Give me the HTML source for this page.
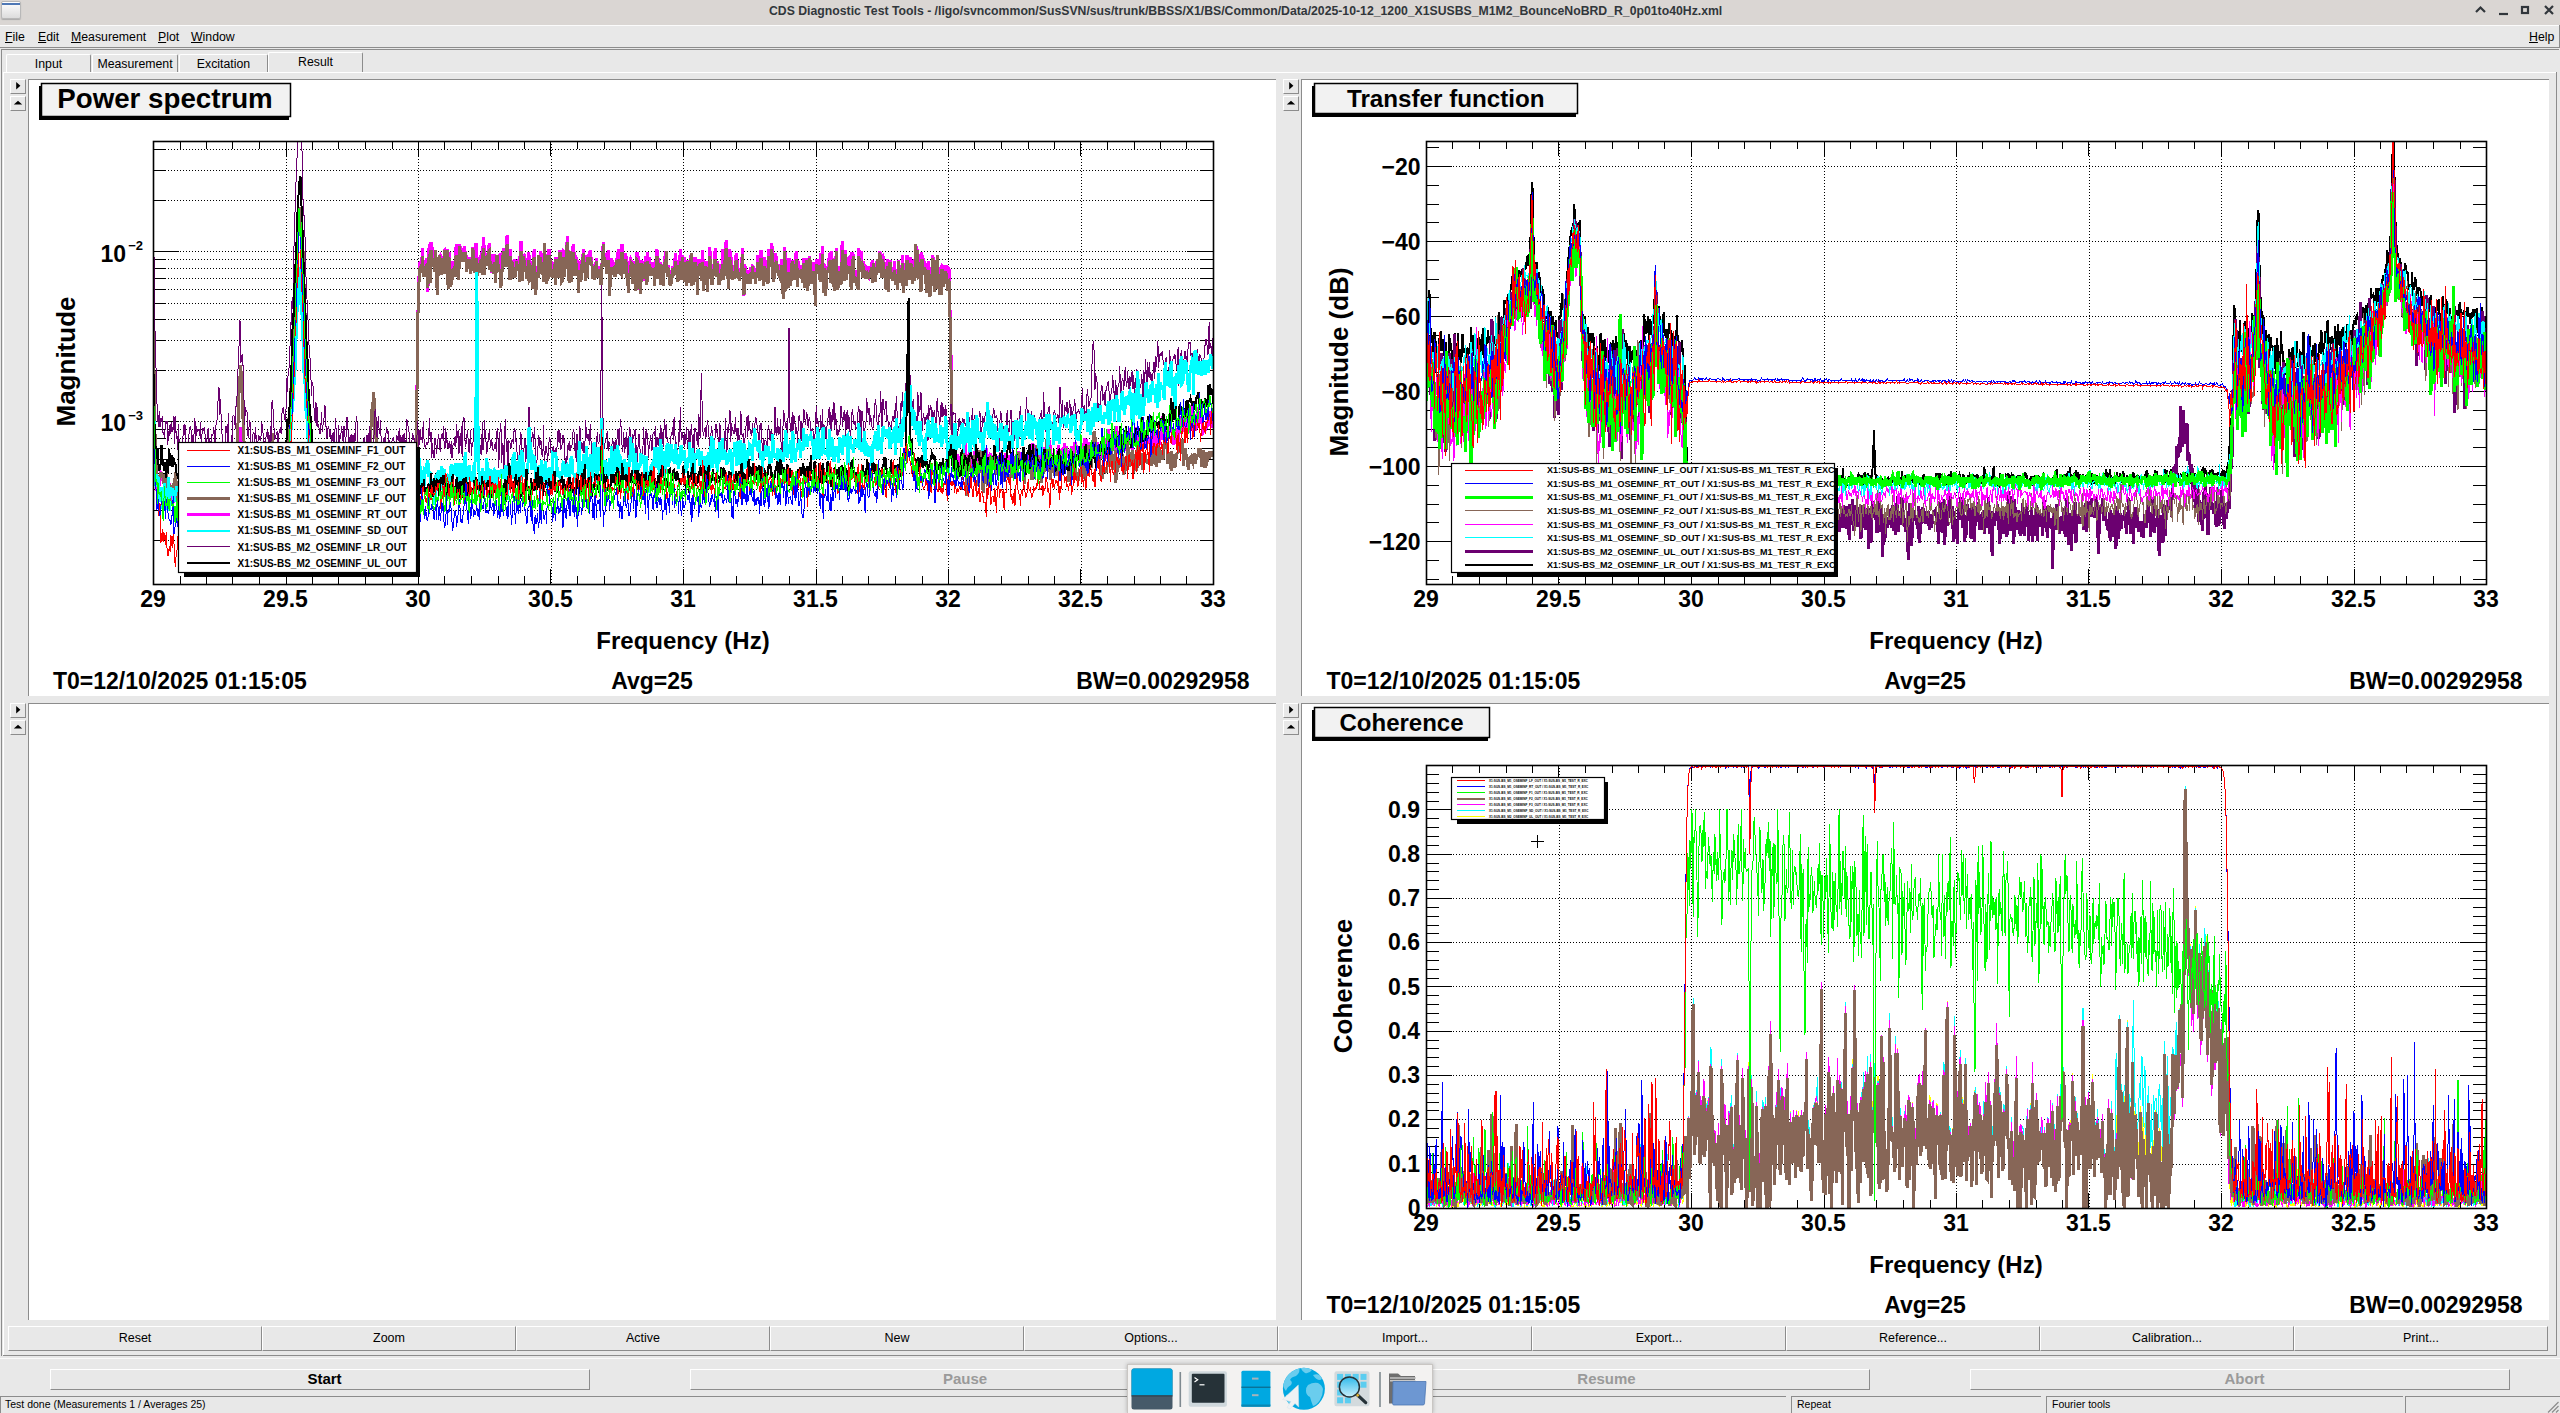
<!DOCTYPE html><html><head><meta charset="utf-8"><title>CDS Diagnostic Test Tools</title><style>
*{margin:0;padding:0;box-sizing:border-box}
html,body{width:2560px;height:1413px;overflow:hidden;background:#e8e8e8;font-family:"Liberation Sans",sans-serif;color:#000}
.a{position:absolute}
.t{position:absolute;white-space:nowrap;line-height:1}
.btn{position:absolute;background:#e8e8e8;border-top:1px solid #fff;border-left:1px solid #fff;border-right:1px solid #8c8c8c;border-bottom:1px solid #8c8c8c;font-size:12.5px;text-align:center}
.u{text-decoration:underline}
.arrowbtn{position:absolute;width:16px;height:15px;background:#e8e8e8;border-top:1px solid #fff;border-left:1px solid #fff;border-right:1px solid #8c8c8c;border-bottom:1px solid #8c8c8c}
svg{position:absolute;left:0;top:0;overflow:visible}
</style></head><body>
<div class="a" style="left:0;top:0;width:2560px;height:25px;background:#dad6d3"></div>
<div class="a" style="left:1px;top:1px;width:20px;height:18px;border-radius:2px;background:linear-gradient(#ffffff,#dcdcdc);border:1px solid #b8b8b8;box-shadow:0 1px 1px #aaa"></div>
<div class="a" style="left:2px;top:3px;width:18px;height:2px;background:#4f78b5"></div>
<div class="t" style="left:769px;top:5px;font-size:12.25px;font-weight:bold;color:#31363b">CDS Diagnostic Test Tools - /ligo/svncommon/SusSVN/sus/trunk/BBSS/X1/BS/Common/Data/2025-10-12_1200_X1SUSBS_M1M2_BounceNoBRD_R_0p01to40Hz.xml</div>
<svg width="2560" height="25" style="left:0;top:0"><g stroke="#31363b" stroke-width="2.2" fill="none"><path d="M2476 12 L2480.5 7.5 L2485 12"/><path d="M2499 14 L2508 14"/><rect x="2522" y="7" width="6" height="6"/><path d="M2545 6 L2553 14 M2553 6 L2545 14"/></g></svg>
<div class="a" style="left:0;top:25px;width:2560px;height:1px;background:#fbfbfb"></div>
<div class="a" style="left:1px;top:26px;width:2558px;height:21px;background:#e8e8e8"></div>
<div class="a" style="left:0;top:47px;width:2560px;height:1px;background:#8c8c8c"></div>
<div class="a" style="left:2559px;top:25px;width:1px;height:23px;background:#8c8c8c"></div>
<div class="t" style="left:5px;top:31px;font-size:12.3px;color:#000"><span class="u">F</span>ile</div>
<div class="t" style="left:38px;top:31px;font-size:12.3px;color:#000"><span class="u">E</span>dit</div>
<div class="t" style="left:71px;top:31px;font-size:12.3px;color:#000"><span class="u">M</span>easurement</div>
<div class="t" style="left:158px;top:31px;font-size:12.3px;color:#000"><span class="u">P</span>lot</div>
<div class="t" style="left:191px;top:31px;font-size:12.3px;color:#000"><span class="u">W</span>indow</div>
<div class="t" style="left:2529px;top:31px;font-size:12.3px;color:#000"><span class="u">H</span>elp</div>
<div class="a" style="left:0;top:49px;width:2559px;height:1px;background:#8c8c8c"></div>
<div class="a" style="left:1px;top:49px;width:1px;height:1307px;background:#8c8c8c"></div>
<div class="a" style="left:0;top:49px;width:1px;height:1307px;background:#e8e8e8"></div>
<div class="a" style="left:6px;top:54px;width:85px;height:19px;border-top:1px solid #fff;border-left:1px solid #fff;border-right:1px solid #8c8c8c;border-top-left-radius:2px;border-top-right-radius:2px;background:#e8e8e8"></div>
<div class="t" style="left:6px;top:58px;width:85px;text-align:center;font-size:12.3px">Input</div>
<div class="a" style="left:92px;top:54px;width:86px;height:19px;border-top:1px solid #fff;border-left:1px solid #fff;border-right:1px solid #8c8c8c;border-top-left-radius:2px;border-top-right-radius:2px;background:#e8e8e8"></div>
<div class="t" style="left:92px;top:58px;width:86px;text-align:center;font-size:12.3px">Measurement</div>
<div class="a" style="left:179px;top:54px;width:89px;height:19px;border-top:1px solid #fff;border-left:1px solid #fff;border-right:1px solid #8c8c8c;border-top-left-radius:2px;border-top-right-radius:2px;background:#e8e8e8"></div>
<div class="t" style="left:179px;top:58px;width:89px;text-align:center;font-size:12.3px">Excitation</div>
<div class="a" style="left:268px;top:52px;width:95px;height:21px;border-top:1px solid #fff;border-left:1px solid #fff;border-right:1px solid #8c8c8c;border-top-left-radius:2px;border-top-right-radius:2px;background:#e8e8e8"></div>
<div class="t" style="left:268px;top:56px;width:95px;text-align:center;font-size:12.3px">Result</div>
<div class="a" style="left:3px;top:72px;width:2554px;height:1px;background:#fff"></div>
<div class="a" style="left:363px;top:72px;width:2194px;height:1px;background:#fff"></div>
<div class="a" style="left:3px;top:72px;width:1px;height:1284px;background:#fff"></div>
<div class="a" style="left:2556px;top:72px;width:1px;height:1284px;background:#8c8c8c"></div>
<div class="a" style="left:3px;top:1355px;width:2554px;height:1px;background:#8c8c8c"></div>
<div class="a" style="left:0;top:1358px;width:2560px;height:1px;background:#fafafa"></div>
<div class="a" style="left:28px;top:79px;width:1248px;height:617px;background:#fff;border-left:1px solid #8c8c8c;border-top:1px solid #8c8c8c"></div>
<div class="arrowbtn" style="left:10px;top:79px"></div>
<svg width="16" height="15" style="left:10px;top:79px"><path d="M6.2 3 L10.4 6.8 L6.2 10.4 Z" fill="#000"/></svg>
<div class="arrowbtn" style="left:10px;top:96px"></div>
<svg width="16" height="15" style="left:10px;top:96px"><path d="M3.8 8.6 L8 4.8 L12.2 8.6 Z" fill="#000"/></svg>
<div class="a" style="left:1301px;top:79px;width:1248px;height:617px;background:#fff;border-left:1px solid #8c8c8c;border-top:1px solid #8c8c8c"></div>
<div class="arrowbtn" style="left:1283px;top:79px"></div>
<svg width="16" height="15" style="left:1283px;top:79px"><path d="M6.2 3 L10.4 6.8 L6.2 10.4 Z" fill="#000"/></svg>
<div class="arrowbtn" style="left:1283px;top:96px"></div>
<svg width="16" height="15" style="left:1283px;top:96px"><path d="M3.8 8.6 L8 4.8 L12.2 8.6 Z" fill="#000"/></svg>
<div class="a" style="left:28px;top:703px;width:1248px;height:617px;background:#fff;border-left:1px solid #8c8c8c;border-top:1px solid #8c8c8c"></div>
<div class="arrowbtn" style="left:10px;top:703px"></div>
<svg width="16" height="15" style="left:10px;top:703px"><path d="M6.2 3 L10.4 6.8 L6.2 10.4 Z" fill="#000"/></svg>
<div class="arrowbtn" style="left:10px;top:720px"></div>
<svg width="16" height="15" style="left:10px;top:720px"><path d="M3.8 8.6 L8 4.8 L12.2 8.6 Z" fill="#000"/></svg>
<div class="a" style="left:1301px;top:703px;width:1248px;height:617px;background:#fff;border-left:1px solid #8c8c8c;border-top:1px solid #8c8c8c"></div>
<div class="arrowbtn" style="left:1283px;top:703px"></div>
<svg width="16" height="15" style="left:1283px;top:703px"><path d="M6.2 3 L10.4 6.8 L6.2 10.4 Z" fill="#000"/></svg>
<div class="arrowbtn" style="left:1283px;top:720px"></div>
<svg width="16" height="15" style="left:1283px;top:720px"><path d="M3.8 8.6 L8 4.8 L12.2 8.6 Z" fill="#000"/></svg>
<svg width="2560" height="1413" style="left:0;top:0" font-family="Liberation Sans, sans-serif">
<style>.g{stroke:#000;stroke-width:1;stroke-dasharray:1 2;fill:none;shape-rendering:crispEdges}.k{stroke:#000;stroke-width:1;shape-rendering:crispEdges}</style>
<clipPath id="cps"><rect x="153" y="140" width="1060" height="444"/></clipPath>
<line x1="286.0" y1="141" x2="286.0" y2="584" class="g"/>
<line x1="418.5" y1="141" x2="418.5" y2="584" class="g"/>
<line x1="551.0" y1="141" x2="551.0" y2="584" class="g"/>
<line x1="683.5" y1="141" x2="683.5" y2="584" class="g"/>
<line x1="816.0" y1="141" x2="816.0" y2="584" class="g"/>
<line x1="948.5" y1="141" x2="948.5" y2="584" class="g"/>
<line x1="1081.0" y1="141" x2="1081.0" y2="584" class="g"/>
<line x1="153" y1="251.9" x2="1213" y2="251.9" class="g"/>
<line x1="153" y1="421.9" x2="1213" y2="421.9" class="g"/>
<line x1="153" y1="540.7" x2="1213" y2="540.7" class="g"/>
<line x1="153" y1="510.8" x2="1213" y2="510.8" class="g"/>
<line x1="153" y1="489.5" x2="1213" y2="489.5" class="g"/>
<line x1="153" y1="473.1" x2="1213" y2="473.1" class="g"/>
<line x1="153" y1="459.6" x2="1213" y2="459.6" class="g"/>
<line x1="153" y1="448.2" x2="1213" y2="448.2" class="g"/>
<line x1="153" y1="438.4" x2="1213" y2="438.4" class="g"/>
<line x1="153" y1="429.7" x2="1213" y2="429.7" class="g"/>
<line x1="153" y1="370.7" x2="1213" y2="370.7" class="g"/>
<line x1="153" y1="340.8" x2="1213" y2="340.8" class="g"/>
<line x1="153" y1="319.5" x2="1213" y2="319.5" class="g"/>
<line x1="153" y1="303.1" x2="1213" y2="303.1" class="g"/>
<line x1="153" y1="289.6" x2="1213" y2="289.6" class="g"/>
<line x1="153" y1="278.2" x2="1213" y2="278.2" class="g"/>
<line x1="153" y1="268.4" x2="1213" y2="268.4" class="g"/>
<line x1="153" y1="259.7" x2="1213" y2="259.7" class="g"/>
<line x1="153" y1="200.7" x2="1213" y2="200.7" class="g"/>
<line x1="153" y1="170.8" x2="1213" y2="170.8" class="g"/>
<line x1="153" y1="149.5" x2="1213" y2="149.5" class="g"/>
<line x1="153.5" y1="584" x2="153.5" y2="569" class="k"/>
<line x1="153.5" y1="141" x2="153.5" y2="156" class="k"/>
<line x1="180.5" y1="584" x2="180.5" y2="576" class="k"/>
<line x1="180.5" y1="141" x2="180.5" y2="149" class="k"/>
<line x1="206.5" y1="584" x2="206.5" y2="576" class="k"/>
<line x1="206.5" y1="141" x2="206.5" y2="149" class="k"/>
<line x1="232.5" y1="584" x2="232.5" y2="576" class="k"/>
<line x1="232.5" y1="141" x2="232.5" y2="149" class="k"/>
<line x1="259.5" y1="584" x2="259.5" y2="576" class="k"/>
<line x1="259.5" y1="141" x2="259.5" y2="149" class="k"/>
<line x1="286.5" y1="584" x2="286.5" y2="569" class="k"/>
<line x1="286.5" y1="141" x2="286.5" y2="156" class="k"/>
<line x1="312.5" y1="584" x2="312.5" y2="576" class="k"/>
<line x1="312.5" y1="141" x2="312.5" y2="149" class="k"/>
<line x1="338.5" y1="584" x2="338.5" y2="576" class="k"/>
<line x1="338.5" y1="141" x2="338.5" y2="149" class="k"/>
<line x1="365.5" y1="584" x2="365.5" y2="576" class="k"/>
<line x1="365.5" y1="141" x2="365.5" y2="149" class="k"/>
<line x1="392.5" y1="584" x2="392.5" y2="576" class="k"/>
<line x1="392.5" y1="141" x2="392.5" y2="149" class="k"/>
<line x1="418.5" y1="584" x2="418.5" y2="569" class="k"/>
<line x1="418.5" y1="141" x2="418.5" y2="156" class="k"/>
<line x1="444.5" y1="584" x2="444.5" y2="576" class="k"/>
<line x1="444.5" y1="141" x2="444.5" y2="149" class="k"/>
<line x1="471.5" y1="584" x2="471.5" y2="576" class="k"/>
<line x1="471.5" y1="141" x2="471.5" y2="149" class="k"/>
<line x1="498.5" y1="584" x2="498.5" y2="576" class="k"/>
<line x1="498.5" y1="141" x2="498.5" y2="149" class="k"/>
<line x1="524.5" y1="584" x2="524.5" y2="576" class="k"/>
<line x1="524.5" y1="141" x2="524.5" y2="149" class="k"/>
<line x1="550.5" y1="584" x2="550.5" y2="569" class="k"/>
<line x1="550.5" y1="141" x2="550.5" y2="156" class="k"/>
<line x1="577.5" y1="584" x2="577.5" y2="576" class="k"/>
<line x1="577.5" y1="141" x2="577.5" y2="149" class="k"/>
<line x1="604.5" y1="584" x2="604.5" y2="576" class="k"/>
<line x1="604.5" y1="141" x2="604.5" y2="149" class="k"/>
<line x1="630.5" y1="584" x2="630.5" y2="576" class="k"/>
<line x1="630.5" y1="141" x2="630.5" y2="149" class="k"/>
<line x1="656.5" y1="584" x2="656.5" y2="576" class="k"/>
<line x1="656.5" y1="141" x2="656.5" y2="149" class="k"/>
<line x1="683.5" y1="584" x2="683.5" y2="569" class="k"/>
<line x1="683.5" y1="141" x2="683.5" y2="156" class="k"/>
<line x1="710.5" y1="584" x2="710.5" y2="576" class="k"/>
<line x1="710.5" y1="141" x2="710.5" y2="149" class="k"/>
<line x1="736.5" y1="584" x2="736.5" y2="576" class="k"/>
<line x1="736.5" y1="141" x2="736.5" y2="149" class="k"/>
<line x1="762.5" y1="584" x2="762.5" y2="576" class="k"/>
<line x1="762.5" y1="141" x2="762.5" y2="149" class="k"/>
<line x1="789.5" y1="584" x2="789.5" y2="576" class="k"/>
<line x1="789.5" y1="141" x2="789.5" y2="149" class="k"/>
<line x1="816.5" y1="584" x2="816.5" y2="569" class="k"/>
<line x1="816.5" y1="141" x2="816.5" y2="156" class="k"/>
<line x1="842.5" y1="584" x2="842.5" y2="576" class="k"/>
<line x1="842.5" y1="141" x2="842.5" y2="149" class="k"/>
<line x1="868.5" y1="584" x2="868.5" y2="576" class="k"/>
<line x1="868.5" y1="141" x2="868.5" y2="149" class="k"/>
<line x1="895.5" y1="584" x2="895.5" y2="576" class="k"/>
<line x1="895.5" y1="141" x2="895.5" y2="149" class="k"/>
<line x1="922.5" y1="584" x2="922.5" y2="576" class="k"/>
<line x1="922.5" y1="141" x2="922.5" y2="149" class="k"/>
<line x1="948.5" y1="584" x2="948.5" y2="569" class="k"/>
<line x1="948.5" y1="141" x2="948.5" y2="156" class="k"/>
<line x1="974.5" y1="584" x2="974.5" y2="576" class="k"/>
<line x1="974.5" y1="141" x2="974.5" y2="149" class="k"/>
<line x1="1001.5" y1="584" x2="1001.5" y2="576" class="k"/>
<line x1="1001.5" y1="141" x2="1001.5" y2="149" class="k"/>
<line x1="1028.5" y1="584" x2="1028.5" y2="576" class="k"/>
<line x1="1028.5" y1="141" x2="1028.5" y2="149" class="k"/>
<line x1="1054.5" y1="584" x2="1054.5" y2="576" class="k"/>
<line x1="1054.5" y1="141" x2="1054.5" y2="149" class="k"/>
<line x1="1080.5" y1="584" x2="1080.5" y2="569" class="k"/>
<line x1="1080.5" y1="141" x2="1080.5" y2="156" class="k"/>
<line x1="1107.5" y1="584" x2="1107.5" y2="576" class="k"/>
<line x1="1107.5" y1="141" x2="1107.5" y2="149" class="k"/>
<line x1="1134.5" y1="584" x2="1134.5" y2="576" class="k"/>
<line x1="1134.5" y1="141" x2="1134.5" y2="149" class="k"/>
<line x1="1160.5" y1="584" x2="1160.5" y2="576" class="k"/>
<line x1="1160.5" y1="141" x2="1160.5" y2="149" class="k"/>
<line x1="1186.5" y1="584" x2="1186.5" y2="576" class="k"/>
<line x1="1186.5" y1="141" x2="1186.5" y2="149" class="k"/>
<line x1="1213.5" y1="584" x2="1213.5" y2="569" class="k"/>
<line x1="1213.5" y1="141" x2="1213.5" y2="156" class="k"/>
<line x1="153" y1="251.9" x2="179" y2="251.9" class="k"/>
<line x1="1213" y1="251.9" x2="1187" y2="251.9" class="k"/>
<line x1="153" y1="421.9" x2="179" y2="421.9" class="k"/>
<line x1="1213" y1="421.9" x2="1187" y2="421.9" class="k"/>
<line x1="153" y1="540.7" x2="166" y2="540.7" class="k"/>
<line x1="1213" y1="540.7" x2="1200" y2="540.7" class="k"/>
<line x1="153" y1="510.8" x2="166" y2="510.8" class="k"/>
<line x1="1213" y1="510.8" x2="1200" y2="510.8" class="k"/>
<line x1="153" y1="489.5" x2="166" y2="489.5" class="k"/>
<line x1="1213" y1="489.5" x2="1200" y2="489.5" class="k"/>
<line x1="153" y1="473.1" x2="166" y2="473.1" class="k"/>
<line x1="1213" y1="473.1" x2="1200" y2="473.1" class="k"/>
<line x1="153" y1="459.6" x2="166" y2="459.6" class="k"/>
<line x1="1213" y1="459.6" x2="1200" y2="459.6" class="k"/>
<line x1="153" y1="448.2" x2="166" y2="448.2" class="k"/>
<line x1="1213" y1="448.2" x2="1200" y2="448.2" class="k"/>
<line x1="153" y1="438.4" x2="166" y2="438.4" class="k"/>
<line x1="1213" y1="438.4" x2="1200" y2="438.4" class="k"/>
<line x1="153" y1="429.7" x2="166" y2="429.7" class="k"/>
<line x1="1213" y1="429.7" x2="1200" y2="429.7" class="k"/>
<line x1="153" y1="370.7" x2="166" y2="370.7" class="k"/>
<line x1="1213" y1="370.7" x2="1200" y2="370.7" class="k"/>
<line x1="153" y1="340.8" x2="166" y2="340.8" class="k"/>
<line x1="1213" y1="340.8" x2="1200" y2="340.8" class="k"/>
<line x1="153" y1="319.5" x2="166" y2="319.5" class="k"/>
<line x1="1213" y1="319.5" x2="1200" y2="319.5" class="k"/>
<line x1="153" y1="303.1" x2="166" y2="303.1" class="k"/>
<line x1="1213" y1="303.1" x2="1200" y2="303.1" class="k"/>
<line x1="153" y1="289.6" x2="166" y2="289.6" class="k"/>
<line x1="1213" y1="289.6" x2="1200" y2="289.6" class="k"/>
<line x1="153" y1="278.2" x2="166" y2="278.2" class="k"/>
<line x1="1213" y1="278.2" x2="1200" y2="278.2" class="k"/>
<line x1="153" y1="268.4" x2="166" y2="268.4" class="k"/>
<line x1="1213" y1="268.4" x2="1200" y2="268.4" class="k"/>
<line x1="153" y1="259.7" x2="166" y2="259.7" class="k"/>
<line x1="1213" y1="259.7" x2="1200" y2="259.7" class="k"/>
<line x1="153" y1="200.7" x2="166" y2="200.7" class="k"/>
<line x1="1213" y1="200.7" x2="1200" y2="200.7" class="k"/>
<line x1="153" y1="170.8" x2="166" y2="170.8" class="k"/>
<line x1="1213" y1="170.8" x2="1200" y2="170.8" class="k"/>
<line x1="153" y1="149.5" x2="166" y2="149.5" class="k"/>
<line x1="1213" y1="149.5" x2="1200" y2="149.5" class="k"/>
<g clip-path="url(#cps)"><g transform="translate(153 0) scale(0.1 1)"><polyline fill="none" stroke="#ff00ff" stroke-width="3" vector-effect="non-scaling-stroke" shape-rendering="crispEdges" points="0 349 8 394 16 430 23 480 31 481 39 491 47 486 54 487 62 485 70 479 78 473 85 474 93 478 101 481 109 477 116 484 124 486 132 493 140 493 148 488 155 492 163 483 171 489 179 495 186 490 194 498 202 502 210 500 217 482 225 486 233 487 241 502 248 490 256 486 264 479 272 485 280 488 287 498 295 509 303 483 311 479 318 498 326 494 334 488 342 491 349 490 357 479 365 493 373 485 381 491 388 496 396 477 404 492 412 493 419 499 427 480 435 488 443 477 450 487 458 496 466 501 474 493 481 483 489 480 497 494 505 486 513 492 520 490 528 492 536 504 544 483 551 491 559 496 567 500 575 482 582 482 590 489 598 479 606 485 613 502 621 486 629 478 637 484 645 488 652 483 660 486 668 490 676 491 683 485 691 497 699 497 707 489 714 472 722 493 730 487 738 497 745 487 753 488 761 487 769 486 777 500 784 487 792 488 800 493 808 482 815 486 823 477 831 487 839 466 846 473 854 463 862 454 870 432 878 427 885 433 893 473 901 480 909 481 916 473 924 480 932 477 940 480 947 483 955 477 963 475 971 481 978 483 986 473 994 484 1002 497 1010 481 1017 478 1025 476 1033 499 1041 488 1048 490 1056 487 1064 484 1072 499 1079 483 1087 472 1095 489 1103 495 1110 492 1118 496 1126 494 1134 489 1142 499 1149 494 1157 491 1165 487 1173 485 1180 477 1188 476 1196 474 1204 481 1211 479 1219 486 1227 484 1235 469 1242 469 1250 476 1258 497 1266 475 1274 483 1281 477 1289 474 1297 477 1305 456 1312 459 1320 452 1328 460 1336 465 1343 444 1351 432 1359 427 1367 425 1375 416 1382 404 1390 379 1398 359 1406 353 1413 336 1421 312 1429 278 1437 270 1444 267 1452 222 1460 227 1468 212 1475 226 1483 237 1491 259 1499 271 1507 296 1514 309 1522 331 1530 351 1538 363 1545 385 1553 401 1561 421 1569 433 1576 443 1584 434 1592 454 1600 455 1607 460 1615 473 1623 470 1631 466 1639 479 1646 482 1654 479 1662 488 1670 497 1677 474 1685 470 1693 469 1701 479 1708 484 1716 495 1724 480 1732 494 1739 491 1747 492 1755 482 1763 478 1771 494 1778 490 1786 487 1794 494 1802 489 1809 482 1817 489 1825 489 1833 485 1840 492 1848 484 1856 490 1864 483 1872 494 1879 490 1887 489 1895 493 1903 483 1910 479 1918 491 1926 477 1934 496 1941 497 1949 489 1957 485 1965 502 1972 488 1980 484 1988 480 1996 481 2004 504 2011 494 2019 488 2027 483 2035 485 2042 491 2050 470 2058 480 2066 483 2073 479 2081 494 2089 483 2097 496 2104 501 2112 486 2120 500 2128 492 2136 490 2143 493 2151 486 2159 485 2167 478 2174 494 2182 485 2190 494 2198 485 2205 496 2213 494 2221 497 2229 477 2236 490 2244 490 2252 492 2260 486 2268 480 2275 495 2283 491 2291 494 2299 503 2306 490 2314 498 2322 489 2330 487 2337 487 2345 498 2353 492 2361 493 2368 480 2376 487 2384 479 2392 487 2400 495 2407 491 2415 478 2423 480 2431 479 2438 484 2446 478 2454 490 2462 487 2469 479 2477 501 2485 489 2493 486 2501 481 2508 483 2516 481 2524 486 2532 490 2539 483 2547 481 2555 494 2563 487 2570 491 2578 474 2586 497 2594 484 2601 494 2609 480 2617 482 2625 481 2633 449 2640 386 2648 317 2656 290 2664 263 2671 263 2679 262 2687 263 2695 248 2702 264 2710 271 2718 267 2726 271 2733 258 2741 260 2749 292 2757 251 2765 244 2772 278 2780 242 2788 253 2796 247 2803 259 2811 256 2819 265 2827 251 2834 264 2842 289 2850 263 2858 264 2865 256 2873 255 2881 258 2889 271 2897 261 2904 272 2912 251 2920 250 2928 265 2935 273 2943 249 2951 281 2959 252 2966 256 2974 276 2982 280 2990 261 2998 276 3005 266 3013 265 3021 267 3029 248 3036 244 3044 256 3052 276 3060 265 3067 244 3075 249 3083 253 3091 254 3098 252 3106 256 3114 246 3122 253 3130 255 3137 270 3145 257 3153 261 3161 257 3168 263 3176 263 3184 259 3192 263 3199 247 3207 259 3215 272 3223 257 3230 243 3238 260 3246 272 3254 257 3262 268 3269 258 3277 255 3285 264 3293 246 3300 261 3308 237 3316 268 3324 255 3331 255 3339 254 3347 254 3355 252 3362 243 3370 262 3378 254 3386 273 3394 254 3401 258 3409 265 3417 254 3425 278 3432 261 3440 258 3448 262 3456 257 3463 266 3471 253 3479 284 3487 269 3495 263 3502 248 3510 264 3518 250 3526 259 3533 244 3541 235 3549 251 3557 255 3564 275 3572 249 3580 273 3588 262 3595 263 3603 268 3611 259 3619 270 3627 264 3634 260 3642 265 3650 263 3658 259 3665 273 3673 246 3681 241 3689 255 3696 275 3704 257 3712 256 3720 264 3727 258 3735 276 3743 265 3751 270 3759 252 3766 269 3774 271 3782 264 3790 261 3797 279 3805 254 3813 249 3821 278 3828 281 3836 275 3844 266 3852 270 3859 257 3867 262 3875 251 3883 254 3891 263 3898 267 3906 271 3914 245 3922 257 3929 266 3937 275 3945 272 3953 269 3960 249 3968 258 3976 261 3984 262 3992 267 3999 263 4007 272 4015 262 4023 279 4030 257 4038 262 4046 264 4054 271 4061 257 4069 251 4077 251 4085 271 4092 275 4100 251 4108 252 4116 275 4124 261 4131 258 4139 243 4147 236 4155 271 4162 277 4170 259 4178 253 4186 273 4193 262 4201 244 4209 250 4217 266 4224 255 4232 258 4240 267 4248 260 4256 288 4263 261 4271 268 4279 269 4287 260 4294 271 4302 249 4310 259 4318 258 4325 272 4333 266 4341 269 4349 256 4356 256 4364 253 4372 250 4380 257 4388 260 4395 274 4403 270 4411 271 4419 265 4426 266 4434 258 4442 276 4450 267 4457 267 4465 267 4473 273 4481 280 4488 267 4496 251 4504 242 4512 260 4520 263 4527 253 4535 269 4543 267 4551 250 4558 262 4566 294 4574 275 4582 261 4589 258 4597 270 4605 269 4613 268 4621 262 4628 271 4636 258 4644 264 4652 249 4659 263 4667 264 4675 261 4683 276 4690 244 4698 261 4706 272 4714 267 4721 264 4729 253 4737 278 4745 273 4753 290 4760 267 4768 262 4776 259 4784 261 4791 265 4799 277 4807 265 4815 261 4822 264 4830 284 4838 253 4846 253 4853 258 4861 262 4869 290 4877 284 4885 260 4892 272 4900 281 4908 270 4916 269 4923 256 4931 272 4939 278 4947 252 4954 270 4962 257 4970 266 4978 264 4985 265 4993 268 5001 262 5009 268 5017 269 5024 260 5032 272 5040 249 5048 279 5055 258 5063 271 5071 262 5079 276 5086 268 5094 264 5102 284 5110 265 5118 257 5125 253 5133 251 5141 270 5149 270 5156 265 5164 279 5172 279 5180 270 5187 274 5195 266 5203 269 5211 266 5218 260 5226 253 5234 275 5242 260 5250 278 5257 261 5265 267 5273 249 5281 256 5288 271 5296 255 5304 270 5312 257 5319 281 5327 268 5335 275 5343 260 5350 268 5358 261 5366 274 5374 264 5382 253 5389 279 5397 274 5405 282 5413 274 5420 257 5428 268 5436 263 5444 289 5451 268 5459 259 5467 262 5475 261 5482 276 5490 262 5498 250 5506 284 5514 269 5521 274 5529 261 5537 266 5545 280 5552 275 5560 261 5568 247 5576 262 5583 272 5591 281 5599 267 5607 268 5615 258 5622 248 5630 267 5638 273 5646 261 5653 276 5661 278 5669 275 5677 264 5684 270 5692 262 5700 249 5708 268 5715 265 5723 256 5731 240 5739 262 5747 267 5754 278 5762 249 5770 266 5778 251 5785 270 5793 271 5801 266 5809 275 5816 266 5824 264 5832 253 5840 260 5847 271 5855 277 5863 273 5871 268 5879 273 5886 267 5894 248 5902 274 5910 296 5917 264 5925 270 5933 276 5941 273 5948 270 5956 281 5964 276 5972 276 5979 268 5987 268 5995 266 6003 267 6011 270 6018 270 6026 279 6034 269 6042 269 6049 255 6057 267 6065 278 6073 262 6080 250 6088 262 6096 261 6104 279 6112 257 6119 265 6127 270 6135 275 6143 260 6150 281 6158 249 6166 259 6174 263 6181 260 6189 243 6197 268 6205 270 6212 274 6220 253 6228 256 6236 258 6244 269 6251 264 6259 267 6267 276 6275 266 6282 273 6290 259 6298 277 6306 288 6313 247 6321 253 6329 277 6337 280 6344 270 6352 288 6360 258 6368 270 6376 285 6383 274 6391 260 6399 275 6407 263 6414 276 6422 256 6430 257 6438 251 6445 279 6453 261 6461 271 6469 268 6476 270 6484 265 6492 272 6500 278 6508 258 6515 278 6523 275 6531 277 6539 258 6546 284 6554 271 6562 256 6570 260 6577 268 6585 280 6593 274 6601 262 6608 270 6616 273 6624 298 6632 259 6640 265 6647 259 6655 262 6663 261 6671 275 6678 253 6686 264 6694 246 6702 268 6709 280 6717 264 6725 283 6733 280 6741 270 6748 268 6756 261 6764 255 6772 252 6779 271 6787 251 6795 278 6803 258 6810 281 6818 291 6826 265 6834 248 6841 276 6849 281 6857 272 6865 266 6873 269 6880 273 6888 247 6896 241 6904 269 6911 268 6919 264 6927 250 6935 279 6942 259 6950 268 6958 258 6966 257 6973 262 6981 287 6989 252 6997 256 7005 254 7012 279 7020 270 7028 272 7036 276 7043 273 7051 278 7059 248 7067 264 7074 262 7082 251 7090 261 7098 271 7105 261 7113 268 7121 271 7129 267 7137 268 7144 273 7152 266 7160 272 7168 276 7175 274 7183 276 7191 260 7199 278 7206 263 7214 268 7222 273 7230 265 7238 262 7245 259 7253 269 7261 265 7269 251 7276 256 7284 267 7292 257 7300 256 7307 273 7315 262 7323 276 7331 284 7338 268 7346 259 7354 279 7362 263 7370 260 7377 267 7385 268 7393 277 7401 269 7408 278 7416 261 7424 281 7432 271 7439 272 7447 279 7455 260 7463 275 7470 271 7478 281 7486 275 7494 255 7502 290 7509 263 7517 267 7525 269 7533 283 7540 255 7548 259 7556 261 7564 275 7571 257 7579 260 7587 261 7595 278 7602 266 7610 276 7618 264 7626 245 7634 247 7641 249 7649 272 7657 275 7665 261 7672 254 7680 284 7688 252 7696 263 7703 258 7711 271 7719 261 7727 274 7735 284 7742 274 7750 275 7758 261 7766 290 7773 284 7781 267 7789 275 7797 255 7804 259 7812 284 7820 263 7828 269 7835 281 7843 255 7851 273 7859 274 7867 292 7874 267 7882 291 7890 266 7898 267 7905 280 7913 272 7921 265 7929 276 7936 273 7944 284 7952 268 7960 269 7967 301 7975 323 7983 373 7991 429 7999 437 8006 451 8014 451 8022 450 8030 459 8037 469 8045 454 8053 466 8061 459 8068 458 8076 464 8084 465 8092 455 8099 450 8107 457 8115 444 8123 442 8131 456 8138 461 8146 458 8154 457 8162 453 8169 452 8177 459 8185 462 8193 460 8200 461 8208 465 8216 453 8224 450 8232 472 8239 455 8247 456 8255 462 8263 459 8270 468 8278 459 8286 466 8294 465 8301 470 8309 460 8317 458 8325 460 8332 448 8340 465 8348 456 8356 457 8364 467 8371 455 8379 453 8387 465 8395 460 8402 462 8410 460 8418 460 8426 454 8433 463 8441 456 8449 460 8457 459 8464 465 8472 452 8480 473 8488 455 8496 464 8503 463 8511 463 8519 464 8527 453 8534 456 8542 461 8550 464 8558 455 8565 466 8573 471 8581 462 8589 464 8596 454 8604 474 8612 461 8620 462 8628 458 8635 455 8643 454 8651 460 8659 451 8666 465 8674 463 8682 457 8690 452 8697 454 8705 450 8713 470 8721 467 8728 460 8736 455 8744 466 8752 465 8760 473 8767 446 8775 460 8783 448 8791 469 8798 443 8806 448 8814 453 8822 453 8829 455 8837 462 8845 458 8853 457 8861 455 8868 444 8876 465 8884 451 8892 463 8899 460 8907 447 8915 462 8923 462 8930 466 8938 463 8946 460 8954 455 8961 458 8969 440 8977 472 8985 461 8993 459 9000 453 9008 455 9016 467 9024 458 9031 456 9039 462 9047 454 9055 445 9062 464 9070 456 9078 458 9086 452 9093 453 9101 447 9109 463 9117 443 9125 455 9132 446 9140 453 9148 455 9156 454 9163 461 9171 449 9179 456 9187 447 9194 447 9202 451 9210 460 9218 442 9225 449 9233 447 9241 453 9249 450 9257 455 9264 462 9272 457 9280 457 9288 450 9295 443 9303 447 9311 458 9319 438 9326 445 9334 439 9342 451 9350 457 9358 442 9365 448 9373 446 9381 446 9389 446 9396 455 9404 455 9412 458 9420 442 9427 447 9435 443 9443 443 9451 463 9458 460 9466 451 9474 450 9482 451 9490 459 9497 454 9505 445 9513 440 9521 445 9528 459 9536 438 9544 440 9552 429 9559 447 9567 447 9575 459 9583 434 9590 437 9598 437 9606 447 9614 443 9622 434 9629 451 9637 426 9645 454 9653 449 9660 431 9668 436 9676 431 9684 446 9691 444 9699 436 9707 452 9715 441 9722 451 9730 449 9738 449 9746 443 9754 439 9761 431 9769 430 9777 433 9785 441 9792 452 9800 444 9808 441 9816 437 9823 438 9831 427 9839 430 9847 439 9855 444 9862 442 9870 435 9878 430 9886 443 9893 436 9901 432 9909 445 9917 436 9924 446 9932 435 9940 437 9948 436 9955 440 9963 441 9971 444 9979 451 9987 441 9994 432 10002 422 10010 443 10018 451 10025 432 10033 443 10041 454 10049 439 10056 438 10064 445 10072 435 10080 433 10087 440 10095 416 10103 427 10111 438 10119 431 10126 433 10134 436 10142 431 10150 427 10157 430 10165 423 10173 432 10181 427 10188 433 10196 431 10204 445 10212 435 10219 432 10227 444 10235 428 10243 442 10251 444 10258 421 10266 420 10274 431 10282 432 10289 428 10297 419 10305 418 10313 415 10320 432 10328 419 10336 407 10344 423 10352 432 10359 431 10367 423 10375 430 10383 405 10390 425 10398 428 10406 426 10414 421 10421 421 10429 431 10437 419 10445 407 10452 423 10460 411 10468 421 10476 420 10484 424 10491 420 10499 433 10507 432 10515 429 10522 429 10530 429 10538 421 10546 423 10553 424 10561 420 10569 415 10577 411 10584 425 10592 428 10600 418"/></g></g>
<g clip-path="url(#cps)"><g transform="translate(153 0) scale(0.1 1)"><polyline fill="none" stroke="#876657" stroke-width="3" vector-effect="non-scaling-stroke" shape-rendering="crispEdges" points="0 322 8 355 16 414 23 447 31 459 39 477 47 478 54 485 62 479 70 475 78 473 85 473 93 478 101 474 109 484 116 480 124 479 132 472 140 487 148 487 155 492 163 484 171 490 179 495 186 492 194 486 202 485 210 493 217 482 225 472 233 487 241 488 248 506 256 489 264 490 272 490 280 480 287 480 295 474 303 471 311 487 318 491 326 468 334 486 342 487 349 492 357 502 365 472 373 498 381 478 388 462 396 490 404 484 412 472 419 467 427 481 435 489 443 491 450 479 458 481 466 491 474 483 481 483 489 488 497 484 505 470 513 488 520 478 528 495 536 487 544 475 551 468 559 481 567 492 575 488 582 502 590 501 598 492 606 471 613 477 621 467 629 483 637 480 645 485 652 481 660 475 668 493 676 488 683 495 691 499 699 477 707 495 714 487 722 492 730 498 738 471 745 489 753 488 761 487 769 492 777 487 784 486 792 490 800 484 808 486 815 464 823 465 831 460 839 454 846 433 854 413 862 379 870 380 878 365 885 385 893 397 901 421 909 438 916 457 924 469 932 474 940 467 947 473 955 476 963 485 971 474 978 490 986 503 994 486 1002 477 1010 499 1017 496 1025 486 1033 487 1041 492 1048 495 1056 481 1064 489 1072 475 1079 488 1087 485 1095 496 1103 496 1110 503 1118 498 1126 480 1134 486 1142 496 1149 475 1157 483 1165 491 1173 475 1180 453 1188 448 1196 433 1204 461 1211 463 1219 480 1227 483 1235 477 1242 482 1250 506 1258 488 1266 506 1274 473 1281 480 1289 480 1297 466 1305 468 1312 470 1320 480 1328 460 1336 443 1343 452 1351 452 1359 419 1367 413 1375 405 1382 382 1390 368 1398 358 1406 342 1413 318 1421 287 1429 269 1437 261 1444 233 1452 213 1460 217 1468 232 1475 207 1483 213 1491 236 1499 248 1507 271 1514 298 1522 317 1530 341 1538 361 1545 373 1553 405 1561 410 1569 419 1576 434 1584 437 1592 452 1600 480 1607 455 1615 454 1623 463 1631 470 1639 452 1646 471 1654 473 1662 480 1670 474 1677 479 1685 482 1693 485 1701 479 1708 491 1716 478 1724 495 1732 472 1739 488 1747 484 1755 486 1763 476 1771 498 1778 481 1786 496 1794 488 1802 491 1809 500 1817 489 1825 475 1833 488 1840 481 1848 489 1856 482 1864 468 1872 476 1879 482 1887 488 1895 486 1903 466 1910 488 1918 487 1926 490 1934 491 1941 481 1949 477 1957 461 1965 497 1972 478 1980 485 1988 506 1996 496 2004 489 2011 485 2019 477 2027 481 2035 485 2042 494 2050 493 2058 494 2066 499 2073 495 2081 493 2089 469 2097 468 2104 471 2112 478 2120 487 2128 484 2136 489 2143 476 2151 469 2159 444 2167 456 2174 434 2182 425 2190 409 2198 406 2205 392 2213 402 2221 439 2229 433 2236 465 2244 463 2252 462 2260 470 2268 486 2275 480 2283 481 2291 491 2299 473 2306 486 2314 485 2322 478 2330 496 2337 485 2345 488 2353 495 2361 488 2368 491 2376 482 2384 500 2392 509 2400 499 2407 492 2415 503 2423 500 2431 490 2438 491 2446 494 2454 488 2462 481 2469 488 2477 499 2485 488 2493 487 2501 491 2508 470 2516 492 2524 503 2532 488 2539 471 2547 489 2555 486 2563 472 2570 477 2578 490 2586 495 2594 488 2601 490 2609 499 2617 482 2625 475 2633 449 2640 391 2648 319 2656 295 2664 269 2671 268 2679 271 2687 270 2695 256 2702 270 2710 277 2718 268 2726 275 2733 272 2741 263 2749 288 2757 259 2765 254 2772 283 2780 250 2788 257 2796 262 2803 267 2811 263 2819 272 2827 250 2834 265 2842 295 2850 274 2858 274 2865 255 2873 260 2881 258 2889 275 2897 268 2904 270 2912 256 2920 250 2928 272 2935 272 2943 250 2951 289 2959 257 2966 262 2974 287 2982 284 2990 269 2998 280 3005 271 3013 266 3021 277 3029 257 3036 255 3044 262 3052 280 3060 269 3067 246 3075 256 3083 258 3091 262 3098 255 3106 256 3114 253 3122 253 3130 262 3137 272 3145 265 3153 264 3161 259 3168 266 3176 274 3184 268 3192 268 3199 248 3207 264 3215 273 3223 261 3230 258 3238 271 3246 276 3254 263 3262 268 3269 273 3277 260 3285 271 3293 253 3300 275 3308 248 3316 275 3324 258 3331 266 3339 260 3347 262 3355 252 3362 251 3370 270 3378 261 3386 272 3394 269 3401 269 3409 274 3417 262 3425 283 3432 270 3440 255 3448 264 3456 265 3463 272 3471 269 3479 288 3487 276 3495 267 3502 251 3510 267 3518 255 3526 267 3533 251 3541 244 3549 260 3557 256 3564 280 3572 256 3580 280 3588 261 3595 265 3603 273 3611 268 3619 278 3627 272 3634 261 3642 270 3650 267 3658 266 3665 282 3673 254 3681 251 3689 258 3696 281 3704 256 3712 261 3720 269 3727 267 3735 279 3743 266 3751 281 3759 260 3766 281 3774 280 3782 265 3790 268 3797 289 3805 260 3813 257 3821 290 3828 295 3836 277 3844 272 3852 278 3859 255 3867 274 3875 257 3883 265 3891 270 3898 273 3906 282 3914 243 3922 259 3929 267 3937 284 3945 277 3953 279 3960 255 3968 258 3976 264 3984 275 3992 278 3999 269 4007 275 4015 264 4023 285 4030 259 4038 276 4046 266 4054 278 4061 262 4069 252 4077 255 4085 282 4092 281 4100 264 4108 257 4116 277 4124 261 4131 262 4139 246 4147 242 4155 275 4162 283 4170 269 4178 251 4186 282 4193 261 4201 252 4209 257 4217 276 4224 259 4232 264 4240 274 4248 270 4256 293 4263 270 4271 278 4279 282 4287 268 4294 269 4302 253 4310 265 4318 262 4325 281 4333 274 4341 278 4349 257 4356 260 4364 263 4372 257 4380 265 4388 261 4395 279 4403 272 4411 280 4419 276 4426 270 4434 261 4442 278 4450 274 4457 276 4465 269 4473 283 4481 283 4488 266 4496 258 4504 244 4512 261 4520 267 4527 260 4535 272 4543 274 4551 260 4558 265 4566 296 4574 278 4582 267 4589 272 4597 273 4605 268 4613 277 4621 265 4628 277 4636 260 4644 274 4652 259 4659 266 4667 271 4675 274 4683 275 4690 252 4698 262 4706 274 4714 270 4721 270 4729 259 4737 278 4745 275 4753 293 4760 277 4768 275 4776 268 4784 263 4791 264 4799 284 4807 273 4815 264 4822 269 4830 291 4838 260 4846 261 4853 264 4861 268 4869 288 4877 294 4885 263 4892 276 4900 279 4908 275 4916 268 4923 262 4931 273 4939 285 4947 261 4954 272 4962 264 4970 267 4978 276 4985 273 4993 276 5001 268 5009 271 5017 286 5024 267 5032 272 5040 256 5048 279 5055 263 5063 278 5071 264 5079 285 5086 272 5094 268 5102 286 5110 265 5118 262 5125 273 5133 251 5141 269 5149 277 5156 268 5164 279 5172 286 5180 276 5187 284 5195 268 5203 272 5211 273 5218 269 5226 261 5234 275 5242 265 5250 282 5257 265 5265 274 5273 262 5281 262 5288 280 5296 257 5304 275 5312 262 5319 282 5327 271 5335 286 5343 261 5350 274 5358 268 5366 283 5374 276 5382 253 5389 286 5397 270 5405 285 5413 275 5420 262 5428 267 5436 267 5444 295 5451 269 5459 267 5467 269 5475 263 5482 281 5490 266 5498 262 5506 291 5514 280 5521 285 5529 266 5537 273 5545 292 5552 275 5560 269 5568 256 5576 266 5583 283 5591 285 5599 273 5607 276 5615 260 5622 260 5630 269 5638 277 5646 263 5653 281 5661 285 5669 282 5677 275 5684 274 5692 267 5700 264 5708 280 5715 268 5723 256 5731 248 5739 268 5747 270 5754 289 5762 257 5770 270 5778 260 5785 277 5793 280 5801 273 5809 279 5816 277 5824 265 5832 260 5840 269 5847 278 5855 275 5863 281 5871 276 5879 273 5886 274 5894 254 5902 279 5910 295 5917 268 5925 281 5933 282 5941 284 5948 274 5956 284 5964 275 5972 284 5979 275 5987 276 5995 266 6003 276 6011 279 6018 273 6026 284 6034 272 6042 274 6049 262 6057 275 6065 281 6073 268 6080 258 6088 263 6096 274 6104 286 6112 266 6119 276 6127 273 6135 282 6143 268 6150 284 6158 256 6166 259 6174 267 6181 259 6189 249 6197 275 6205 282 6212 278 6220 265 6228 263 6236 261 6244 273 6251 271 6259 275 6267 277 6275 272 6282 283 6290 265 6298 292 6306 299 6313 251 6321 261 6329 289 6337 288 6344 276 6352 288 6360 272 6368 282 6376 286 6383 277 6391 261 6399 280 6407 271 6414 280 6422 264 6430 268 6438 259 6445 287 6453 272 6461 275 6469 276 6476 271 6484 269 6492 278 6500 283 6508 263 6515 288 6523 282 6531 279 6539 260 6546 291 6554 281 6562 258 6570 260 6577 277 6585 284 6593 279 6601 271 6608 277 6616 282 6624 306 6632 264 6640 271 6647 265 6655 272 6663 265 6671 282 6678 266 6686 276 6694 254 6702 272 6709 293 6717 268 6725 296 6733 286 6741 271 6748 271 6756 271 6764 263 6772 260 6779 283 6787 263 6795 284 6803 259 6810 287 6818 291 6826 268 6834 251 6841 285 6849 290 6857 277 6865 271 6873 274 6880 285 6888 266 6896 250 6904 268 6911 281 6919 271 6927 254 6935 280 6942 270 6950 274 6958 271 6966 267 6973 267 6981 290 6989 269 6997 261 7005 256 7012 283 7020 280 7028 277 7036 286 7043 279 7051 290 7059 256 7067 269 7074 272 7082 261 7090 263 7098 278 7105 266 7113 273 7121 279 7129 274 7137 273 7144 279 7152 272 7160 277 7168 276 7175 270 7183 272 7191 267 7199 283 7206 263 7214 275 7222 282 7230 275 7238 270 7245 259 7253 269 7261 273 7269 255 7276 256 7284 278 7292 259 7300 262 7307 278 7315 269 7323 281 7331 290 7338 283 7346 266 7354 292 7362 275 7370 262 7377 273 7385 273 7393 281 7401 278 7408 280 7416 270 7424 285 7432 276 7439 274 7447 290 7455 261 7463 278 7470 273 7478 283 7486 274 7494 263 7502 293 7509 272 7517 270 7525 279 7533 286 7540 260 7548 267 7556 270 7564 280 7571 263 7579 272 7587 264 7595 284 7602 276 7610 281 7618 275 7626 244 7634 255 7641 250 7649 277 7657 279 7665 265 7672 266 7680 292 7688 259 7696 261 7703 275 7711 273 7719 267 7727 278 7735 293 7742 282 7750 284 7758 270 7766 297 7773 295 7781 274 7789 279 7797 258 7804 266 7812 292 7820 260 7828 273 7835 289 7843 255 7851 277 7859 284 7867 295 7874 275 7882 295 7890 269 7898 273 7905 287 7913 279 7921 271 7929 278 7936 277 7944 291 7952 279 7960 281 7967 313 7975 324 7983 395 7991 434 7999 465 8006 468 8014 466 8022 463 8030 472 8037 476 8045 475 8053 472 8061 465 8068 477 8076 471 8084 471 8092 470 8099 470 8107 453 8115 471 8123 471 8131 473 8138 496 8146 464 8154 455 8162 459 8169 472 8177 466 8185 471 8193 478 8200 470 8208 455 8216 462 8224 466 8232 472 8239 463 8247 470 8255 486 8263 461 8270 450 8278 452 8286 473 8294 470 8301 493 8309 464 8317 460 8325 471 8332 478 8340 484 8348 486 8356 478 8364 469 8371 460 8379 456 8387 463 8395 468 8402 456 8410 466 8418 458 8426 473 8433 473 8441 473 8449 457 8457 460 8464 465 8472 458 8480 468 8488 468 8496 471 8503 463 8511 482 8519 475 8527 464 8534 462 8542 465 8550 478 8558 478 8565 478 8573 476 8581 478 8589 464 8596 466 8604 467 8612 472 8620 456 8628 474 8635 474 8643 454 8651 452 8659 460 8666 458 8674 465 8682 469 8690 471 8697 463 8705 462 8713 484 8721 474 8728 468 8736 459 8744 460 8752 471 8760 469 8767 466 8775 469 8783 475 8791 480 8798 469 8806 462 8814 448 8822 469 8829 466 8837 445 8845 459 8853 457 8861 467 8868 470 8876 472 8884 483 8892 454 8899 477 8907 455 8915 472 8923 465 8930 464 8938 439 8946 469 8954 472 8961 467 8969 469 8977 480 8985 463 8993 469 9000 465 9008 459 9016 476 9024 470 9031 461 9039 462 9047 476 9055 467 9062 459 9070 456 9078 476 9086 457 9093 462 9101 465 9109 471 9117 471 9125 463 9132 464 9140 469 9148 460 9156 482 9163 463 9171 477 9179 465 9187 465 9194 463 9202 460 9210 453 9218 462 9225 472 9233 476 9241 472 9249 476 9257 481 9264 472 9272 473 9280 474 9288 455 9295 463 9303 471 9311 479 9319 458 9326 481 9334 462 9342 452 9350 450 9358 445 9365 459 9373 461 9381 468 9389 456 9396 447 9404 436 9412 431 9420 437 9427 449 9435 464 9443 458 9451 461 9458 457 9466 458 9474 476 9482 465 9490 477 9497 479 9505 463 9513 470 9521 467 9528 471 9536 473 9544 462 9552 461 9559 457 9567 454 9575 454 9583 447 9590 467 9598 466 9606 467 9614 470 9622 450 9629 483 9637 461 9645 472 9653 465 9660 458 9668 467 9676 459 9684 467 9691 464 9699 454 9707 475 9715 470 9722 464 9730 461 9738 471 9746 441 9754 452 9761 462 9769 467 9777 460 9785 459 9792 450 9800 454 9808 473 9816 458 9823 460 9831 457 9839 471 9847 446 9855 464 9862 458 9870 461 9878 465 9886 453 9893 470 9901 454 9909 464 9917 455 9924 455 9932 462 9940 459 9948 464 9955 460 9963 464 9971 453 9979 454 9987 466 9994 461 10002 459 10010 453 10018 446 10025 461 10033 467 10041 455 10049 445 10056 447 10064 463 10072 456 10080 452 10087 450 10095 460 10103 458 10111 448 10119 443 10126 449 10134 445 10142 442 10150 464 10157 461 10165 455 10173 452 10181 471 10188 451 10196 461 10204 456 10212 454 10219 468 10227 462 10235 454 10243 453 10251 452 10258 450 10266 442 10274 451 10282 454 10289 439 10297 442 10305 466 10313 452 10320 448 10328 457 10336 456 10344 458 10352 470 10359 462 10367 464 10375 457 10383 456 10390 461 10398 463 10406 457 10414 453 10421 464 10429 461 10437 455 10445 455 10452 457 10460 448 10468 457 10476 448 10484 467 10491 459 10499 460 10507 450 10515 466 10522 466 10530 452 10538 466 10546 452 10553 455 10561 459 10569 451 10577 454 10584 451 10592 454 10600 452"/></g></g>
<g clip-path="url(#cps)"><g transform="translate(153 0) scale(0.1 1)"><polyline fill="none" stroke="#6b0070" stroke-width="1" vector-effect="non-scaling-stroke" shape-rendering="crispEdges" points="0 270 8 246 16 285 23 363 31 369 39 402 47 418 54 427 62 411 70 427 78 418 85 422 93 416 101 435 109 432 116 438 124 422 132 423 140 421 148 445 155 431 163 436 171 424 179 434 186 422 194 432 202 429 210 416 217 444 225 416 233 439 241 436 248 450 256 424 264 453 272 450 280 447 287 456 295 437 303 435 311 424 318 435 326 425 334 462 342 453 349 459 357 437 365 430 373 426 381 430 388 452 396 435 404 443 412 431 419 418 427 443 435 426 443 431 450 431 458 429 466 436 474 422 481 442 489 435 497 429 505 430 513 427 520 434 528 444 536 442 544 434 551 428 559 448 567 438 575 445 582 444 590 434 598 436 606 427 613 433 621 443 629 425 637 422 645 417 652 396 660 387 668 415 676 399 683 424 691 435 699 442 707 455 714 452 722 448 730 426 738 429 745 442 753 413 761 447 769 450 777 456 784 435 792 445 800 416 808 415 815 418 823 429 831 404 839 398 846 388 854 352 862 344 870 320 878 363 885 358 893 354 901 367 909 395 916 425 924 407 932 411 940 412 947 435 955 438 963 421 971 422 978 440 986 446 994 439 1002 432 1010 433 1017 448 1025 427 1033 439 1041 442 1048 443 1056 435 1064 437 1072 441 1079 438 1087 422 1095 427 1103 437 1110 445 1118 442 1126 443 1134 432 1142 439 1149 430 1157 441 1165 450 1173 426 1180 442 1188 402 1196 401 1204 417 1211 429 1219 440 1227 436 1235 433 1242 432 1250 447 1258 434 1266 431 1274 427 1281 434 1289 414 1297 409 1305 408 1312 416 1320 420 1328 420 1336 378 1343 392 1351 374 1359 369 1367 362 1375 322 1382 325 1390 301 1398 309 1406 262 1413 235 1421 209 1429 184 1437 172 1444 141 1452 141 1460 141 1468 141 1475 141 1483 141 1491 152 1499 199 1507 199 1514 235 1522 238 1530 277 1538 295 1545 310 1553 325 1561 348 1569 357 1576 362 1584 396 1592 382 1600 386 1607 399 1615 421 1623 402 1631 426 1639 403 1646 426 1654 425 1662 429 1670 434 1677 430 1685 412 1693 432 1701 424 1708 422 1716 406 1724 407 1732 432 1739 439 1747 430 1755 426 1763 431 1771 438 1778 430 1786 448 1794 435 1802 432 1809 446 1817 436 1825 418 1833 434 1840 444 1848 456 1856 425 1864 444 1872 437 1879 434 1887 426 1895 438 1903 442 1910 426 1918 432 1926 453 1934 421 1941 417 1949 428 1957 444 1965 441 1972 435 1980 444 1988 434 1996 438 2004 452 2011 433 2019 443 2027 426 2035 416 2042 424 2050 442 2058 462 2066 466 2073 447 2081 454 2089 447 2097 455 2104 446 2112 437 2120 447 2128 451 2136 435 2143 449 2151 433 2159 456 2167 426 2174 434 2182 451 2190 455 2198 445 2205 445 2213 429 2221 409 2229 413 2236 436 2244 438 2252 416 2260 428 2268 434 2275 420 2283 445 2291 443 2299 446 2306 440 2314 437 2322 457 2330 433 2337 427 2345 434 2353 431 2361 444 2368 440 2376 460 2384 451 2392 438 2400 441 2407 437 2415 448 2423 444 2431 448 2438 435 2446 439 2454 440 2462 428 2469 456 2477 435 2485 439 2493 446 2501 434 2508 457 2516 433 2524 446 2532 446 2539 419 2547 424 2555 430 2563 433 2570 450 2578 443 2586 447 2594 433 2601 440 2609 435 2617 453 2625 453 2633 445 2640 435 2648 421 2656 454 2664 437 2671 429 2679 440 2687 438 2695 443 2702 421 2710 439 2718 446 2726 449 2733 443 2741 442 2749 445 2757 434 2765 418 2772 442 2780 432 2788 458 2796 443 2803 455 2811 458 2819 438 2827 438 2834 454 2842 448 2850 439 2858 434 2865 447 2873 452 2881 437 2889 434 2897 439 2904 426 2912 446 2920 449 2928 428 2935 442 2943 441 2951 449 2959 444 2966 441 2974 454 2982 441 2990 458 2998 445 3005 444 3013 446 3021 436 3029 447 3036 424 3044 438 3052 430 3060 454 3067 436 3075 446 3083 426 3091 457 3098 424 3106 418 3114 419 3122 447 3130 444 3137 436 3145 430 3153 442 3161 453 3168 443 3176 430 3184 456 3192 444 3199 444 3207 429 3215 430 3223 441 3230 438 3238 457 3246 443 3254 458 3262 453 3269 444 3277 453 3285 454 3293 422 3300 450 3308 446 3316 420 3324 439 3331 442 3339 454 3347 441 3355 441 3362 430 3370 440 3378 448 3386 439 3394 444 3401 451 3409 450 3417 446 3425 442 3432 452 3440 431 3448 428 3456 468 3463 454 3471 430 3479 423 3487 463 3495 444 3502 445 3510 469 3518 429 3526 419 3533 452 3541 441 3549 476 3557 441 3564 442 3572 443 3580 448 3588 441 3595 439 3603 444 3611 430 3619 428 3627 441 3634 440 3642 455 3650 460 3658 467 3665 468 3673 432 3681 434 3689 450 3696 453 3704 463 3712 444 3720 438 3727 462 3735 455 3743 439 3751 442 3759 407 3766 409 3774 448 3782 446 3790 437 3797 432 3805 447 3813 427 3821 439 3828 461 3836 464 3844 456 3852 443 3859 435 3867 448 3875 441 3883 442 3891 456 3898 457 3906 425 3914 476 3922 448 3929 446 3937 447 3945 462 3953 452 3960 442 3968 437 3976 445 3984 460 3992 447 3999 454 4007 446 4015 456 4023 448 4030 458 4038 453 4046 432 4054 431 4061 443 4069 430 4077 450 4085 447 4092 444 4100 435 4108 441 4116 439 4124 477 4131 456 4139 463 4147 445 4155 450 4162 441 4170 451 4178 446 4186 447 4193 443 4201 430 4209 429 4217 451 4224 443 4232 462 4240 434 4248 453 4256 463 4263 426 4271 428 4279 441 4287 447 4294 451 4302 441 4310 453 4318 450 4325 420 4333 431 4341 439 4349 434 4356 436 4364 445 4372 424 4380 441 4388 462 4395 456 4403 446 4411 444 4419 456 4426 452 4434 450 4442 432 4450 442 4457 444 4465 438 4473 432 4481 364 4488 285 4496 409 4504 426 4512 449 4520 443 4527 440 4535 436 4543 431 4551 451 4558 441 4566 446 4574 447 4582 462 4589 445 4597 439 4605 445 4613 460 4621 440 4628 448 4636 447 4644 431 4652 429 4659 448 4667 433 4675 419 4683 430 4690 445 4698 452 4706 432 4714 453 4721 437 4729 449 4737 432 4745 448 4753 464 4760 436 4768 427 4776 436 4784 438 4791 452 4799 434 4807 439 4815 432 4822 429 4830 454 4838 445 4846 463 4853 436 4861 434 4869 448 4877 453 4885 457 4892 454 4900 446 4908 427 4916 469 4923 445 4931 429 4939 439 4947 433 4954 458 4962 447 4970 441 4978 435 4985 451 4993 449 5001 432 5009 433 5017 436 5024 426 5032 453 5040 437 5048 444 5055 446 5063 433 5071 449 5079 425 5086 441 5094 432 5102 447 5110 430 5118 419 5125 438 5133 424 5141 439 5149 441 5156 445 5164 449 5172 444 5180 436 5187 435 5195 427 5203 440 5211 417 5218 432 5226 449 5234 442 5242 454 5250 448 5257 432 5265 442 5273 407 5281 435 5288 440 5296 432 5304 440 5312 447 5319 432 5327 444 5335 427 5343 448 5350 442 5358 429 5366 438 5374 445 5382 424 5389 431 5397 460 5405 434 5413 456 5420 428 5428 429 5436 441 5444 432 5451 447 5459 414 5467 435 5475 438 5482 373 5490 400 5498 430 5506 436 5514 429 5521 428 5529 438 5537 428 5545 420 5552 427 5560 437 5568 450 5576 442 5583 426 5591 431 5599 461 5607 438 5615 444 5622 436 5630 424 5638 433 5646 430 5653 442 5661 445 5669 423 5677 439 5684 441 5692 440 5700 448 5708 443 5715 453 5723 418 5731 443 5739 454 5747 427 5754 433 5762 422 5770 410 5778 442 5785 423 5793 430 5801 430 5809 434 5816 431 5824 417 5832 436 5840 428 5847 445 5855 428 5863 447 5871 433 5879 411 5886 432 5894 437 5902 433 5910 449 5917 441 5925 433 5933 422 5941 416 5948 437 5956 415 5964 427 5972 431 5979 434 5987 435 5995 423 6003 438 6011 443 6018 425 6026 417 6034 419 6042 427 6049 428 6057 458 6065 425 6073 430 6080 423 6088 437 6096 459 6104 438 6112 457 6119 440 6127 440 6135 442 6143 447 6150 429 6158 425 6166 439 6174 441 6181 430 6189 433 6197 437 6205 439 6212 433 6220 407 6228 432 6236 436 6244 418 6251 435 6259 426 6267 434 6275 419 6282 450 6290 453 6298 432 6306 410 6313 415 6321 423 6329 428 6337 423 6344 436 6352 413 6360 328 6368 420 6376 432 6383 417 6391 438 6399 412 6407 430 6414 416 6422 425 6430 434 6438 427 6445 447 6453 422 6461 415 6469 417 6476 442 6484 421 6492 447 6500 423 6508 410 6515 411 6523 425 6531 418 6539 412 6546 424 6554 428 6562 417 6570 421 6577 439 6585 430 6593 429 6601 431 6608 447 6616 437 6624 432 6632 406 6640 424 6647 418 6655 426 6663 442 6671 428 6678 415 6686 437 6694 409 6702 445 6709 424 6717 429 6725 428 6733 443 6741 424 6748 421 6756 411 6764 407 6772 431 6779 412 6787 431 6795 409 6803 420 6810 402 6818 429 6826 413 6834 425 6841 436 6849 429 6857 435 6865 427 6873 424 6880 406 6888 414 6896 427 6904 412 6911 421 6919 410 6927 437 6935 417 6942 410 6950 429 6958 415 6966 423 6973 439 6981 429 6989 412 6997 409 7005 423 7012 424 7020 421 7028 429 7036 427 7043 427 7051 410 7059 406 7067 426 7074 410 7082 443 7090 411 7098 417 7105 429 7113 437 7121 427 7129 426 7137 398 7144 406 7152 415 7160 408 7168 425 7175 415 7183 419 7191 428 7199 430 7206 416 7214 417 7222 399 7230 405 7238 420 7245 425 7253 435 7261 413 7269 417 7276 391 7284 412 7292 432 7300 399 7307 407 7315 415 7323 405 7331 401 7338 422 7346 415 7354 427 7362 423 7370 425 7377 426 7385 429 7393 416 7401 416 7408 422 7416 410 7424 428 7432 396 7439 408 7447 430 7455 432 7463 423 7470 430 7478 403 7486 411 7494 392 7502 411 7509 410 7517 412 7525 383 7533 400 7540 379 7548 368 7556 351 7564 372 7571 376 7579 399 7587 415 7595 406 7602 399 7610 412 7618 412 7626 423 7634 416 7641 430 7649 392 7657 416 7665 406 7672 410 7680 392 7688 433 7696 425 7703 413 7711 418 7719 425 7727 417 7735 420 7742 413 7750 441 7758 405 7766 416 7773 405 7781 407 7789 423 7797 410 7804 421 7812 410 7820 417 7828 431 7835 406 7843 398 7851 413 7859 415 7867 427 7874 417 7882 402 7890 417 7898 403 7905 416 7913 409 7921 416 7929 405 7936 430 7944 427 7952 420 7960 420 7967 425 7975 404 7983 404 7991 437 7999 412 8006 414 8014 413 8022 413 8030 430 8037 436 8045 435 8053 429 8061 418 8068 427 8076 422 8084 429 8092 420 8099 418 8107 428 8115 419 8123 425 8131 424 8138 417 8146 439 8154 425 8162 417 8169 429 8177 433 8185 426 8193 408 8200 426 8208 420 8216 415 8224 418 8232 423 8239 423 8247 418 8255 429 8263 411 8270 413 8278 433 8286 439 8294 417 8301 418 8309 423 8317 418 8325 413 8332 412 8340 423 8348 435 8356 418 8364 425 8371 427 8379 426 8387 417 8395 430 8402 408 8410 410 8418 417 8426 417 8433 416 8441 418 8449 430 8457 435 8464 451 8472 411 8480 413 8488 431 8496 423 8503 429 8511 438 8519 444 8527 433 8534 425 8542 410 8550 428 8558 433 8565 431 8573 413 8581 410 8589 435 8596 421 8604 421 8612 441 8620 428 8628 421 8635 427 8643 418 8651 430 8659 443 8666 417 8674 406 8682 421 8690 438 8697 446 8705 440 8713 432 8721 428 8728 413 8736 397 8744 420 8752 410 8760 413 8767 414 8775 432 8783 411 8791 418 8798 434 8806 415 8814 415 8822 425 8829 420 8837 428 8845 432 8853 424 8861 424 8868 417 8876 416 8884 410 8892 432 8899 421 8907 392 8915 417 8923 415 8930 432 8938 423 8946 417 8954 408 8961 407 8969 427 8977 423 8985 426 8993 423 9000 424 9008 413 9016 411 9024 414 9031 418 9039 418 9047 415 9055 416 9062 426 9070 387 9078 397 9086 423 9093 400 9101 427 9109 427 9117 405 9125 409 9132 412 9140 402 9148 423 9156 421 9163 400 9171 404 9179 425 9187 407 9194 416 9202 409 9210 406 9218 399 9225 413 9233 427 9241 411 9249 411 9257 410 9264 414 9272 410 9280 420 9288 398 9295 388 9303 417 9311 405 9319 414 9326 411 9334 414 9342 389 9350 396 9358 407 9365 405 9373 399 9381 398 9389 368 9396 347 9404 341 9412 353 9420 390 9427 373 9435 381 9443 383 9451 420 9458 403 9466 406 9474 412 9482 385 9490 386 9497 401 9505 399 9513 392 9521 406 9528 391 9536 389 9544 384 9552 381 9559 389 9567 405 9575 401 9583 390 9590 388 9598 375 9606 393 9614 391 9622 404 9629 380 9637 410 9645 392 9653 385 9660 383 9668 366 9676 394 9684 390 9691 380 9699 378 9707 390 9715 380 9722 367 9730 381 9738 387 9746 371 9754 385 9761 389 9769 376 9777 386 9785 376 9792 371 9800 389 9808 375 9816 401 9823 378 9831 381 9839 369 9847 378 9855 387 9862 383 9870 385 9878 388 9886 374 9893 383 9901 406 9909 370 9917 386 9924 359 9932 373 9940 383 9948 362 9955 377 9963 362 9971 380 9979 372 9987 386 9994 391 10002 368 10010 362 10018 379 10025 356 10033 367 10041 356 10049 341 10056 368 10064 357 10072 353 10080 356 10087 353 10095 352 10103 365 10111 363 10119 362 10126 360 10134 357 10142 385 10150 378 10157 378 10165 350 10173 359 10181 362 10188 379 10196 361 10204 357 10212 358 10219 354 10227 361 10235 369 10243 371 10251 347 10258 386 10266 361 10274 364 10282 350 10289 360 10297 363 10305 362 10313 358 10320 351 10328 358 10336 357 10344 374 10352 342 10359 344 10367 342 10375 342 10383 365 10390 353 10398 356 10406 371 10414 360 10421 359 10429 351 10437 355 10445 349 10452 359 10460 362 10468 355 10476 356 10484 360 10491 362 10499 365 10507 365 10515 347 10522 345 10530 339 10538 342 10546 354 10553 353 10561 322 10569 349 10577 343 10584 350 10592 357 10600 338"/></g></g>
<g clip-path="url(#cps)"><g transform="translate(153 0) scale(0.1 1)"><polyline fill="none" stroke="#00ffff" stroke-width="3" vector-effect="non-scaling-stroke" shape-rendering="crispEdges" points="0 375 8 407 16 460 23 484 31 484 39 474 47 487 54 477 62 491 70 502 78 495 85 487 93 509 101 506 109 504 116 483 124 492 132 507 140 510 148 506 155 477 163 511 171 491 179 487 186 496 194 489 202 491 210 502 217 496 225 495 233 490 241 486 248 492 256 490 264 487 272 493 280 510 287 482 295 493 303 489 311 479 318 485 326 488 334 491 342 490 349 495 357 508 365 488 373 504 381 502 388 502 396 479 404 479 412 490 419 491 427 489 435 507 443 488 450 500 458 502 466 502 474 509 481 506 489 498 497 485 505 492 513 490 520 508 528 497 536 486 544 477 551 480 559 488 567 493 575 499 582 496 590 489 598 500 606 486 613 493 621 489 629 494 637 496 645 490 652 478 660 492 668 480 676 491 683 467 691 500 699 478 707 500 714 491 722 497 730 497 738 484 745 489 753 487 761 482 769 497 777 477 784 487 792 478 800 501 808 482 815 511 823 489 831 486 839 492 846 476 854 480 862 485 870 492 878 498 885 495 893 475 901 489 909 479 916 479 924 482 932 483 940 500 947 479 955 474 963 484 971 487 978 502 986 483 994 493 1002 489 1010 488 1017 488 1025 486 1033 471 1041 478 1048 487 1056 505 1064 497 1072 491 1079 488 1087 490 1095 493 1103 499 1110 477 1118 489 1126 507 1134 496 1142 486 1149 481 1157 486 1165 475 1173 482 1180 493 1188 495 1196 491 1204 492 1211 484 1219 479 1227 479 1235 477 1242 478 1250 468 1258 474 1266 493 1274 481 1281 491 1289 483 1297 473 1305 475 1312 463 1320 481 1328 477 1336 474 1343 463 1351 458 1359 454 1367 462 1375 443 1382 425 1390 412 1398 405 1406 391 1413 381 1421 369 1429 343 1437 315 1444 309 1452 293 1460 274 1468 267 1475 292 1483 313 1491 315 1499 337 1507 366 1514 382 1522 385 1530 411 1538 419 1545 416 1553 450 1561 444 1569 466 1576 462 1584 465 1592 466 1600 465 1607 479 1615 475 1623 478 1631 479 1639 483 1646 470 1654 479 1662 488 1670 476 1677 488 1685 475 1693 463 1701 477 1708 483 1716 482 1724 467 1732 490 1739 479 1747 485 1755 457 1763 492 1771 491 1778 478 1786 464 1794 486 1802 507 1809 497 1817 504 1825 466 1833 491 1840 477 1848 483 1856 493 1864 485 1872 472 1879 462 1887 476 1895 471 1903 501 1910 474 1918 492 1926 474 1934 489 1941 482 1949 490 1957 486 1965 494 1972 486 1980 477 1988 505 1996 503 2004 490 2011 499 2019 473 2027 484 2035 478 2042 485 2050 464 2058 473 2066 481 2073 490 2081 485 2089 500 2097 476 2104 489 2112 503 2120 475 2128 483 2136 486 2143 493 2151 487 2159 469 2167 475 2174 478 2182 492 2190 494 2198 479 2205 465 2213 466 2221 486 2229 494 2236 478 2244 469 2252 468 2260 480 2268 467 2275 477 2283 482 2291 465 2299 485 2306 470 2314 483 2322 458 2330 489 2337 466 2345 478 2353 484 2361 475 2368 479 2376 476 2384 478 2392 491 2400 471 2407 488 2415 497 2423 487 2431 468 2438 477 2446 479 2454 482 2462 459 2469 458 2477 489 2485 485 2493 482 2501 476 2508 483 2516 491 2524 487 2532 475 2539 480 2547 497 2555 479 2563 476 2570 493 2578 482 2586 487 2594 504 2601 497 2609 473 2617 489 2625 491 2633 497 2640 482 2648 480 2656 491 2664 458 2671 467 2679 467 2687 485 2695 484 2702 479 2710 486 2718 470 2726 471 2733 474 2741 461 2749 461 2757 477 2765 472 2772 473 2780 492 2788 489 2796 482 2803 483 2811 492 2819 505 2827 475 2834 479 2842 472 2850 480 2858 470 2865 476 2873 490 2881 470 2889 466 2897 481 2904 481 2912 469 2920 487 2928 476 2935 486 2943 480 2951 476 2959 477 2966 484 2974 471 2982 464 2990 491 2998 465 3005 469 3013 473 3021 473 3029 463 3036 466 3044 485 3052 483 3060 463 3067 484 3075 484 3083 477 3091 463 3098 490 3106 496 3114 470 3122 452 3130 490 3137 474 3145 476 3153 477 3161 465 3168 473 3176 474 3184 482 3192 471 3199 481 3207 465 3215 481 3223 451 3230 399 3238 272 3246 385 3254 465 3262 474 3269 494 3277 488 3285 478 3293 468 3300 475 3308 487 3316 481 3324 476 3331 470 3339 458 3347 485 3355 468 3362 475 3370 478 3378 469 3386 473 3394 478 3401 493 3409 474 3417 470 3425 471 3432 471 3440 485 3448 470 3456 477 3463 474 3471 476 3479 475 3487 469 3495 476 3502 469 3510 479 3518 477 3526 465 3533 480 3541 500 3549 479 3557 468 3564 465 3572 488 3580 479 3588 472 3595 457 3603 477 3611 452 3619 479 3627 468 3634 481 3642 467 3650 461 3658 477 3665 455 3673 480 3681 478 3689 450 3696 462 3704 463 3712 471 3720 477 3727 475 3735 481 3743 468 3751 462 3759 429 3766 427 3774 455 3782 454 3790 470 3797 468 3805 456 3813 457 3821 464 3828 491 3836 477 3844 466 3852 470 3859 484 3867 465 3875 491 3883 460 3891 477 3898 485 3906 472 3914 475 3922 461 3929 481 3937 478 3945 488 3953 484 3960 468 3968 468 3976 468 3984 471 3992 487 3999 454 4007 455 4015 456 4023 452 4030 456 4038 477 4046 467 4054 475 4061 472 4069 477 4077 481 4085 472 4092 472 4100 463 4108 461 4116 473 4124 473 4131 477 4139 469 4147 465 4155 466 4162 479 4170 468 4178 459 4186 456 4193 461 4201 475 4209 473 4217 483 4224 476 4232 475 4240 482 4248 481 4256 464 4263 441 4271 465 4279 464 4287 482 4294 473 4302 461 4310 454 4318 469 4325 468 4333 446 4341 461 4349 460 4356 470 4364 488 4372 454 4380 469 4388 482 4395 468 4403 455 4411 442 4419 459 4426 472 4434 464 4442 483 4450 447 4457 454 4465 471 4473 465 4481 455 4488 418 4496 462 4504 462 4512 475 4520 460 4527 471 4535 467 4543 479 4551 475 4558 464 4566 458 4574 476 4582 461 4589 446 4597 478 4605 465 4613 466 4621 449 4628 471 4636 455 4644 445 4652 451 4659 451 4667 474 4675 456 4683 462 4690 472 4698 482 4706 465 4714 459 4721 479 4729 474 4737 494 4745 462 4753 476 4760 467 4768 462 4776 437 4784 462 4791 458 4799 443 4807 474 4815 461 4822 453 4830 462 4838 471 4846 479 4853 466 4861 465 4869 468 4877 453 4885 457 4892 459 4900 461 4908 455 4916 478 4923 475 4931 456 4939 474 4947 471 4954 493 4962 480 4970 472 4978 466 4985 469 4993 462 5001 480 5009 461 5017 447 5024 460 5032 468 5040 448 5048 448 5055 462 5063 475 5071 471 5079 439 5086 474 5094 457 5102 451 5110 455 5118 484 5125 452 5133 464 5141 443 5149 467 5156 463 5164 462 5172 460 5180 444 5187 453 5195 455 5203 449 5211 464 5218 461 5226 444 5234 455 5242 462 5250 461 5257 469 5265 458 5273 459 5281 445 5288 454 5296 459 5304 461 5312 450 5319 460 5327 467 5335 473 5343 465 5350 458 5358 463 5366 442 5374 459 5382 451 5389 478 5397 448 5405 463 5413 474 5420 454 5428 454 5436 459 5444 454 5451 449 5459 454 5467 466 5475 464 5482 451 5490 456 5498 466 5506 464 5514 457 5521 457 5529 476 5537 469 5545 465 5552 452 5560 472 5568 453 5576 460 5583 436 5591 468 5599 438 5607 449 5615 464 5622 452 5630 449 5638 466 5646 472 5653 459 5661 460 5669 442 5677 457 5684 453 5692 438 5700 460 5708 449 5715 453 5723 456 5731 455 5739 465 5747 455 5754 462 5762 450 5770 452 5778 449 5785 459 5793 476 5801 454 5809 456 5816 442 5824 449 5832 459 5840 466 5847 441 5855 448 5863 465 5871 440 5879 463 5886 456 5894 474 5902 454 5910 443 5917 469 5925 467 5933 459 5941 468 5948 450 5956 455 5964 444 5972 445 5979 456 5987 450 5995 461 6003 439 6011 447 6018 428 6026 446 6034 442 6042 443 6049 450 6057 450 6065 440 6073 460 6080 455 6088 451 6096 472 6104 451 6112 455 6119 453 6127 445 6135 457 6143 453 6150 446 6158 448 6166 466 6174 451 6181 463 6189 454 6197 434 6205 450 6212 458 6220 454 6228 457 6236 458 6244 448 6251 460 6259 470 6267 449 6275 451 6282 454 6290 461 6298 452 6306 462 6313 445 6321 441 6329 430 6337 455 6344 458 6352 445 6360 452 6368 446 6376 440 6383 463 6391 455 6399 431 6407 455 6414 453 6422 462 6430 450 6438 450 6445 443 6453 450 6461 447 6469 439 6476 458 6484 445 6492 443 6500 451 6508 428 6515 447 6523 438 6531 439 6539 434 6546 447 6554 436 6562 438 6570 437 6577 435 6585 439 6593 442 6601 446 6608 460 6616 439 6624 442 6632 438 6640 459 6647 427 6655 441 6663 459 6671 455 6678 438 6686 456 6694 432 6702 427 6709 450 6717 453 6725 453 6733 454 6741 455 6748 439 6756 460 6764 429 6772 453 6779 457 6787 437 6795 442 6803 449 6810 462 6818 451 6826 455 6834 446 6841 453 6849 456 6857 463 6865 437 6873 449 6880 443 6888 438 6896 455 6904 435 6911 447 6919 443 6927 444 6935 437 6942 436 6950 465 6958 449 6966 437 6973 437 6981 447 6989 448 6997 444 7005 453 7012 444 7020 439 7028 446 7036 439 7043 448 7051 442 7059 423 7067 450 7074 442 7082 445 7090 452 7098 445 7105 450 7113 431 7121 456 7129 441 7137 455 7144 445 7152 449 7160 457 7168 454 7175 446 7183 453 7191 467 7199 445 7206 441 7214 449 7222 431 7230 447 7238 444 7245 451 7253 425 7261 450 7269 444 7276 437 7284 454 7292 439 7300 428 7307 426 7315 436 7323 434 7331 437 7338 429 7346 436 7354 439 7362 427 7370 449 7377 432 7385 443 7393 442 7401 433 7408 430 7416 427 7424 455 7432 418 7439 428 7447 430 7455 443 7463 441 7470 428 7478 424 7486 447 7494 427 7502 417 7509 432 7517 407 7525 393 7533 405 7540 391 7548 370 7556 386 7564 395 7571 385 7579 404 7587 426 7595 416 7602 411 7610 412 7618 430 7626 425 7634 435 7641 429 7649 421 7657 439 7665 446 7672 421 7680 435 7688 442 7696 440 7703 441 7711 453 7719 464 7727 440 7735 433 7742 437 7750 422 7758 420 7766 436 7773 438 7781 432 7789 437 7797 417 7804 435 7812 439 7820 443 7828 423 7835 439 7843 437 7851 442 7859 434 7867 443 7874 425 7882 447 7890 428 7898 444 7905 427 7913 432 7921 436 7929 416 7936 440 7944 446 7952 473 7960 442 7967 455 7975 442 7983 435 7991 451 7999 442 8006 450 8014 424 8022 424 8030 447 8037 450 8045 444 8053 436 8061 448 8068 438 8076 435 8084 433 8092 423 8099 443 8107 453 8115 434 8123 427 8131 435 8138 443 8146 412 8154 432 8162 428 8169 451 8177 456 8185 429 8193 435 8200 420 8208 440 8216 442 8224 451 8232 420 8239 415 8247 438 8255 435 8263 433 8270 434 8278 443 8286 432 8294 451 8301 449 8309 439 8317 430 8325 422 8332 429 8340 429 8348 402 8356 433 8364 436 8371 436 8379 418 8387 419 8395 435 8402 440 8410 426 8418 424 8426 432 8433 439 8441 452 8449 438 8457 435 8464 428 8472 438 8480 423 8488 441 8496 433 8503 429 8511 436 8519 452 8527 427 8534 425 8542 434 8550 437 8558 442 8565 436 8573 444 8581 435 8589 437 8596 449 8604 422 8612 425 8620 434 8628 420 8635 422 8643 448 8651 422 8659 422 8666 437 8674 431 8682 415 8690 435 8697 446 8705 431 8713 440 8721 431 8728 426 8736 421 8744 436 8752 429 8760 413 8767 439 8775 434 8783 437 8791 438 8798 415 8806 422 8814 418 8822 422 8829 428 8837 435 8845 426 8853 448 8861 419 8868 455 8876 436 8884 455 8892 438 8899 419 8907 422 8915 418 8923 430 8930 426 8938 414 8946 449 8954 441 8961 414 8969 421 8977 422 8985 427 8993 430 9000 427 9008 445 9016 415 9024 429 9031 431 9039 441 9047 427 9055 431 9062 444 9070 427 9078 420 9086 421 9093 424 9101 421 9109 418 9117 419 9125 420 9132 428 9140 417 9148 416 9156 423 9163 419 9171 424 9179 433 9187 417 9194 415 9202 424 9210 426 9218 414 9225 429 9233 440 9241 430 9249 435 9257 441 9264 436 9272 428 9280 425 9288 408 9295 413 9303 421 9311 416 9319 414 9326 421 9334 415 9342 413 9350 432 9358 409 9365 416 9373 435 9381 421 9389 430 9396 407 9404 427 9412 421 9420 403 9427 417 9435 422 9443 411 9451 421 9458 408 9466 412 9474 405 9482 419 9490 419 9497 422 9505 422 9513 412 9521 415 9528 416 9536 419 9544 413 9552 401 9559 425 9567 414 9575 421 9583 400 9590 406 9598 405 9606 399 9614 422 9622 405 9629 402 9637 395 9645 406 9653 416 9660 422 9668 412 9676 405 9684 410 9691 391 9699 395 9707 408 9715 415 9722 406 9730 404 9738 396 9746 398 9754 405 9761 394 9769 392 9777 396 9785 420 9792 397 9800 425 9808 393 9816 412 9823 412 9831 413 9839 392 9847 371 9855 391 9862 400 9870 419 9878 394 9886 406 9893 405 9901 416 9909 400 9917 406 9924 387 9932 382 9940 398 9948 389 9955 403 9963 395 9971 402 9979 386 9987 386 9994 381 10002 395 10010 388 10018 390 10025 403 10033 384 10041 389 10049 408 10056 373 10064 401 10072 387 10080 385 10087 387 10095 387 10103 385 10111 400 10119 369 10126 362 10134 386 10142 371 10150 385 10157 380 10165 384 10173 388 10181 361 10188 370 10196 396 10204 380 10212 379 10219 411 10227 385 10235 373 10243 382 10251 382 10258 365 10266 380 10274 370 10282 356 10289 384 10297 383 10305 377 10313 371 10320 360 10328 364 10336 362 10344 385 10352 378 10359 392 10367 375 10375 369 10383 363 10390 360 10398 362 10406 395 10414 351 10421 355 10429 350 10437 374 10445 368 10452 364 10460 375 10468 361 10476 369 10484 376 10491 363 10499 362 10507 373 10515 373 10522 373 10530 360 10538 366 10546 361 10553 373 10561 362 10569 363 10577 354 10584 358 10592 360 10600 369"/></g></g>
<g clip-path="url(#cps)"><g transform="translate(153 0) scale(0.1 1)"><polyline fill="none" stroke="#000000" stroke-width="2" vector-effect="non-scaling-stroke" shape-rendering="crispEdges" points="0 348 8 388 16 428 23 445 31 449 39 459 47 449 54 464 62 471 70 469 78 462 85 445 93 460 101 460 109 471 116 462 124 464 132 478 140 459 148 473 155 466 163 449 171 464 179 465 186 461 194 455 202 467 210 458 217 464 225 464 233 472 241 475 248 477 256 475 264 468 272 470 280 476 287 483 295 477 303 467 311 477 318 477 326 475 334 485 342 476 349 475 357 480 365 485 373 466 381 472 388 474 396 470 404 482 412 469 419 466 427 466 435 469 443 470 450 484 458 483 466 471 474 490 481 481 489 467 497 465 505 480 513 490 520 478 528 482 536 486 544 477 551 472 559 468 567 476 575 490 582 480 590 473 598 475 606 473 613 485 621 476 629 493 637 481 645 481 652 476 660 484 668 483 676 486 683 476 691 479 699 467 707 471 714 498 722 477 730 476 738 490 745 485 753 504 761 485 769 486 777 482 784 489 792 481 800 496 808 476 815 486 823 488 831 478 839 483 846 479 854 469 862 478 870 462 878 473 885 474 893 481 901 477 909 487 916 490 924 483 932 476 940 487 947 477 955 481 963 482 971 494 978 501 986 492 994 481 1002 493 1010 495 1017 473 1025 479 1033 473 1041 479 1048 483 1056 484 1064 477 1072 484 1079 478 1087 488 1095 486 1103 479 1110 470 1118 474 1126 484 1134 485 1142 490 1149 488 1157 495 1165 475 1173 483 1180 467 1188 485 1196 481 1204 467 1211 481 1219 486 1227 472 1235 477 1242 478 1250 483 1258 466 1266 478 1274 463 1281 464 1289 474 1297 469 1305 453 1312 468 1320 452 1328 448 1336 439 1343 419 1351 427 1359 422 1367 403 1375 392 1382 369 1390 358 1398 313 1406 317 1413 287 1421 273 1429 256 1437 238 1444 213 1452 204 1460 181 1468 189 1475 176 1483 205 1491 209 1499 250 1507 266 1514 285 1522 305 1530 331 1538 348 1545 359 1553 387 1561 393 1569 414 1576 416 1584 424 1592 456 1600 450 1607 459 1615 456 1623 459 1631 462 1639 479 1646 475 1654 474 1662 473 1670 475 1677 481 1685 477 1693 479 1701 488 1708 485 1716 486 1724 492 1732 481 1739 475 1747 474 1755 483 1763 483 1771 491 1778 477 1786 478 1794 485 1802 481 1809 473 1817 482 1825 487 1833 480 1840 501 1848 492 1856 481 1864 483 1872 470 1879 496 1887 480 1895 484 1903 492 1910 485 1918 481 1926 484 1934 490 1941 489 1949 473 1957 471 1965 488 1972 486 1980 490 1988 504 1996 496 2004 485 2011 490 2019 480 2027 483 2035 498 2042 485 2050 489 2058 487 2066 488 2073 484 2081 480 2089 496 2097 501 2104 490 2112 488 2120 483 2128 486 2136 498 2143 503 2151 492 2159 490 2167 495 2174 487 2182 482 2190 478 2198 485 2205 480 2213 473 2221 473 2229 495 2236 492 2244 495 2252 486 2260 486 2268 487 2275 491 2283 485 2291 497 2299 484 2306 471 2314 494 2322 495 2330 490 2337 496 2345 497 2353 474 2361 494 2368 483 2376 493 2384 489 2392 492 2400 486 2407 483 2415 492 2423 505 2431 495 2438 483 2446 489 2454 490 2462 500 2469 491 2477 485 2485 491 2493 485 2501 491 2508 480 2516 487 2524 494 2532 481 2539 480 2547 482 2555 499 2563 494 2570 491 2578 496 2586 496 2594 486 2601 481 2609 498 2617 486 2625 496 2633 478 2640 490 2648 483 2656 497 2664 494 2671 491 2679 492 2687 483 2695 488 2702 490 2710 479 2718 492 2726 491 2733 493 2741 488 2749 486 2757 492 2765 489 2772 491 2780 473 2788 489 2796 481 2803 497 2811 478 2819 482 2827 484 2834 488 2842 480 2850 481 2858 489 2865 496 2873 480 2881 477 2889 481 2897 485 2904 475 2912 477 2920 490 2928 481 2935 483 2943 500 2951 494 2959 497 2966 484 2974 487 2982 485 2990 479 2998 474 3005 489 3013 486 3021 492 3029 495 3036 477 3044 480 3052 491 3060 496 3067 498 3075 481 3083 491 3091 498 3098 484 3106 478 3114 493 3122 480 3130 477 3137 499 3145 483 3153 483 3161 489 3168 495 3176 493 3184 489 3192 489 3199 491 3207 493 3215 480 3223 490 3230 477 3238 481 3246 490 3254 488 3262 491 3269 486 3277 488 3285 498 3293 476 3300 493 3308 499 3316 487 3324 485 3331 486 3339 489 3347 480 3355 482 3362 486 3370 489 3378 498 3386 482 3394 491 3401 492 3409 489 3417 491 3425 485 3432 487 3440 492 3448 490 3456 486 3463 496 3471 489 3479 492 3487 488 3495 497 3502 489 3510 490 3518 479 3526 502 3533 480 3541 491 3549 478 3557 476 3564 463 3572 488 3580 487 3588 488 3595 486 3603 484 3611 490 3619 486 3627 474 3634 483 3642 484 3650 480 3658 493 3665 477 3673 499 3681 493 3689 483 3696 495 3704 493 3712 494 3720 486 3727 477 3735 469 3743 490 3751 489 3759 486 3766 502 3774 489 3782 478 3790 487 3797 491 3805 482 3813 491 3821 488 3828 472 3836 487 3844 489 3852 467 3859 488 3867 485 3875 488 3883 476 3891 479 3898 496 3906 491 3914 485 3922 486 3929 480 3937 485 3945 482 3953 486 3960 478 3968 486 3976 492 3984 481 3992 484 3999 482 4007 476 4015 471 4023 492 4030 489 4038 486 4046 493 4054 480 4061 484 4069 484 4077 479 4085 483 4092 476 4100 490 4108 479 4116 498 4124 484 4131 486 4139 487 4147 480 4155 488 4162 478 4170 478 4178 491 4186 482 4193 491 4201 492 4209 491 4217 498 4224 487 4232 495 4240 481 4248 474 4256 486 4263 502 4271 480 4279 496 4287 473 4294 490 4302 486 4310 477 4318 464 4325 485 4333 487 4341 485 4349 488 4356 477 4364 494 4372 486 4380 476 4388 497 4395 486 4403 488 4411 490 4419 476 4426 474 4434 480 4442 475 4450 482 4457 493 4465 474 4473 482 4481 460 4488 437 4496 470 4504 474 4512 478 4520 497 4527 477 4535 476 4543 479 4551 490 4558 490 4566 485 4574 488 4582 474 4589 483 4597 478 4605 474 4613 482 4621 483 4628 472 4636 480 4644 467 4652 476 4659 492 4667 475 4675 477 4683 489 4690 463 4698 470 4706 480 4714 476 4721 476 4729 474 4737 484 4745 475 4753 486 4760 479 4768 480 4776 483 4784 474 4791 470 4799 481 4807 484 4815 480 4822 470 4830 486 4838 471 4846 471 4853 488 4861 490 4869 475 4877 475 4885 493 4892 472 4900 477 4908 474 4916 484 4923 482 4931 472 4939 488 4947 489 4954 483 4962 476 4970 475 4978 470 4985 480 4993 479 5001 483 5009 479 5017 479 5024 486 5032 491 5040 486 5048 478 5055 475 5063 488 5071 478 5079 469 5086 478 5094 465 5102 474 5110 485 5118 482 5125 480 5133 485 5141 486 5149 471 5156 470 5164 470 5172 469 5180 479 5187 481 5195 476 5203 471 5211 470 5218 479 5226 472 5234 481 5242 471 5250 475 5257 479 5265 483 5273 485 5281 478 5288 480 5296 481 5304 466 5312 485 5319 477 5327 489 5335 485 5343 487 5350 471 5358 493 5366 476 5374 476 5382 472 5389 480 5397 463 5405 484 5413 476 5420 473 5428 486 5436 480 5444 484 5451 474 5459 482 5467 468 5475 467 5482 476 5490 472 5498 468 5506 474 5514 466 5521 489 5529 472 5537 472 5545 488 5552 469 5560 465 5568 482 5576 476 5583 483 5591 475 5599 469 5607 480 5615 478 5622 485 5630 480 5638 472 5646 475 5653 479 5661 476 5669 480 5677 479 5684 467 5692 475 5700 478 5708 469 5715 470 5723 484 5731 480 5739 480 5747 487 5754 476 5762 471 5770 479 5778 472 5785 481 5793 483 5801 481 5809 482 5816 482 5824 481 5832 471 5840 489 5847 473 5855 475 5863 471 5871 475 5879 474 5886 463 5894 487 5902 480 5910 474 5917 475 5925 483 5933 485 5941 483 5948 483 5956 459 5964 477 5972 473 5979 468 5987 469 5995 476 6003 463 6011 476 6018 468 6026 480 6034 466 6042 480 6049 472 6057 465 6065 481 6073 479 6080 466 6088 471 6096 487 6104 476 6112 474 6119 471 6127 473 6135 481 6143 477 6150 469 6158 464 6166 469 6174 464 6181 475 6189 474 6197 479 6205 491 6212 482 6220 471 6228 470 6236 466 6244 461 6251 487 6259 472 6267 459 6275 475 6282 460 6290 471 6298 472 6306 467 6313 470 6321 480 6329 472 6337 483 6344 464 6352 471 6360 486 6368 468 6376 470 6383 478 6391 475 6399 479 6407 484 6414 480 6422 478 6430 474 6438 478 6445 482 6453 469 6461 471 6469 467 6476 475 6484 475 6492 470 6500 463 6508 468 6515 477 6523 468 6531 479 6539 468 6546 466 6554 479 6562 468 6570 481 6577 455 6585 474 6593 470 6601 473 6608 473 6616 461 6624 487 6632 472 6640 491 6647 482 6655 476 6663 463 6671 483 6678 477 6686 484 6694 466 6702 463 6709 474 6717 480 6725 480 6733 481 6741 464 6748 461 6756 477 6764 465 6772 472 6779 487 6787 472 6795 480 6803 473 6810 469 6818 468 6826 473 6834 469 6841 479 6849 477 6857 467 6865 483 6873 474 6880 467 6888 465 6896 477 6904 476 6911 469 6919 465 6927 476 6935 470 6942 471 6950 492 6958 475 6966 475 6973 468 6981 465 6989 460 6997 475 7005 473 7012 471 7020 475 7028 486 7036 473 7043 473 7051 472 7059 473 7067 482 7074 482 7082 472 7090 478 7098 465 7105 471 7113 476 7121 481 7129 468 7137 475 7144 459 7152 477 7160 479 7168 470 7175 472 7183 474 7191 463 7199 465 7206 464 7214 472 7222 474 7230 464 7238 467 7245 477 7253 468 7261 470 7269 476 7276 470 7284 476 7292 468 7300 466 7307 464 7315 457 7323 470 7331 458 7338 475 7346 474 7354 471 7362 477 7370 487 7377 460 7385 469 7393 474 7401 465 7408 466 7416 475 7424 475 7432 465 7439 482 7447 464 7455 469 7463 471 7470 457 7478 477 7486 466 7494 459 7502 456 7509 449 7517 454 7525 452 7533 423 7540 402 7548 327 7556 298 7564 409 7571 431 7579 450 7587 439 7595 455 7602 452 7610 458 7618 459 7626 459 7634 460 7641 463 7649 457 7657 472 7665 460 7672 459 7680 466 7688 455 7696 468 7703 460 7711 463 7719 463 7727 467 7735 461 7742 466 7750 473 7758 465 7766 465 7773 461 7781 458 7789 453 7797 455 7804 459 7812 455 7820 458 7828 484 7835 468 7843 471 7851 467 7859 469 7867 462 7874 468 7882 463 7890 469 7898 458 7905 473 7913 464 7921 465 7929 463 7936 461 7944 459 7952 472 7960 458 7967 449 7975 457 7983 444 7991 462 7999 469 8006 471 8014 449 8022 462 8030 450 8037 463 8045 471 8053 462 8061 477 8068 467 8076 476 8084 452 8092 451 8099 469 8107 465 8115 463 8123 455 8131 463 8138 458 8146 471 8154 463 8162 456 8169 456 8177 452 8185 456 8193 458 8200 461 8208 470 8216 459 8224 471 8232 444 8239 454 8247 458 8255 452 8263 459 8270 465 8278 457 8286 465 8294 469 8301 451 8309 466 8317 458 8325 450 8332 460 8340 465 8348 457 8356 463 8364 463 8371 466 8379 465 8387 472 8395 470 8402 463 8410 445 8418 447 8426 455 8433 468 8441 465 8449 475 8457 462 8464 460 8472 453 8480 468 8488 450 8496 463 8503 459 8511 459 8519 467 8527 464 8534 459 8542 453 8550 445 8558 447 8565 441 8573 450 8581 462 8589 469 8596 450 8604 465 8612 469 8620 464 8628 470 8635 460 8643 457 8651 460 8659 464 8666 462 8674 463 8682 467 8690 455 8697 464 8705 447 8713 473 8721 470 8728 475 8736 452 8744 456 8752 451 8760 448 8767 444 8775 469 8783 461 8791 458 8798 444 8806 457 8814 471 8822 458 8829 460 8837 449 8845 466 8853 461 8861 463 8868 463 8876 462 8884 467 8892 461 8899 455 8907 451 8915 449 8923 464 8930 468 8938 462 8946 464 8954 459 8961 462 8969 469 8977 462 8985 457 8993 467 9000 464 9008 449 9016 459 9024 472 9031 465 9039 462 9047 464 9055 451 9062 450 9070 458 9078 462 9086 474 9093 461 9101 465 9109 474 9117 459 9125 458 9132 464 9140 469 9148 469 9156 471 9163 454 9171 456 9179 461 9187 451 9194 470 9202 456 9210 459 9218 468 9225 461 9233 462 9241 456 9249 453 9257 460 9264 455 9272 446 9280 453 9288 465 9295 451 9303 454 9311 450 9319 464 9326 444 9334 464 9342 459 9350 460 9358 453 9365 458 9373 470 9381 460 9389 452 9396 458 9404 442 9412 459 9420 451 9427 468 9435 467 9443 453 9451 451 9458 444 9466 453 9474 454 9482 441 9490 444 9497 455 9505 445 9513 452 9521 453 9528 455 9536 447 9544 450 9552 456 9559 453 9567 438 9575 440 9583 441 9590 433 9598 431 9606 441 9614 443 9622 445 9629 438 9637 447 9645 439 9653 436 9660 445 9668 429 9676 426 9684 458 9691 443 9699 447 9707 437 9715 433 9722 432 9730 426 9738 442 9746 431 9754 437 9761 438 9769 436 9777 439 9785 448 9792 440 9800 436 9808 433 9816 443 9823 444 9831 428 9839 435 9847 432 9855 431 9862 428 9870 445 9878 435 9886 417 9893 437 9901 442 9909 430 9917 431 9924 435 9932 441 9940 429 9948 431 9955 416 9963 432 9971 416 9979 417 9987 426 9994 433 10002 422 10010 420 10018 433 10025 423 10033 423 10041 423 10049 428 10056 424 10064 426 10072 422 10080 418 10087 422 10095 423 10103 413 10111 417 10119 421 10126 430 10134 419 10142 421 10150 421 10157 424 10165 426 10173 413 10181 398 10188 422 10196 402 10204 420 10212 417 10219 420 10227 406 10235 419 10243 422 10251 421 10258 422 10266 404 10274 406 10282 407 10289 410 10297 418 10305 415 10313 408 10320 417 10328 411 10336 400 10344 419 10352 403 10359 401 10367 401 10375 398 10383 401 10390 406 10398 402 10406 402 10414 410 10421 407 10429 402 10437 395 10445 399 10452 393 10460 393 10468 410 10476 407 10484 399 10491 410 10499 401 10507 406 10515 405 10522 398 10530 400 10538 407 10546 404 10553 385 10561 406 10569 384 10577 390 10584 395 10592 389 10600 404"/></g></g>
<g clip-path="url(#cps)"><g transform="translate(153 0) scale(0.1 1)"><polyline fill="none" stroke="#ff0000" stroke-width="1" vector-effect="non-scaling-stroke" shape-rendering="crispEdges" points="0 370 8 422 16 449 23 474 31 491 39 496 47 497 54 515 62 514 70 503 78 543 85 540 93 529 101 542 109 533 116 534 124 545 132 532 140 548 148 555 155 555 163 546 171 552 179 535 186 544 194 548 202 533 210 544 217 560 225 567 233 552 241 550 248 537 256 535 264 534 272 548 280 551 287 541 295 534 303 541 311 541 318 538 326 550 334 539 342 540 349 532 357 541 365 546 373 536 381 533 388 535 396 534 404 532 412 534 419 534 427 529 435 534 443 518 450 528 458 517 466 527 474 534 481 530 489 529 497 512 505 514 513 529 520 520 528 536 536 517 544 519 551 514 559 527 567 531 575 522 582 523 590 538 598 518 606 513 613 519 621 515 629 511 637 502 645 521 652 513 660 519 668 509 676 526 683 520 691 523 699 511 707 516 714 520 722 520 730 513 738 506 745 507 753 502 761 501 769 505 777 502 784 491 792 505 800 514 808 502 815 493 823 506 831 510 839 506 846 502 854 525 862 522 870 505 878 508 885 504 893 507 901 514 909 513 916 504 924 499 932 497 940 508 947 515 955 508 963 505 971 506 978 502 986 508 994 496 1002 492 1010 502 1017 496 1025 515 1033 499 1041 499 1048 490 1056 506 1064 495 1072 510 1079 508 1087 499 1095 505 1103 480 1110 495 1118 508 1126 504 1134 504 1142 506 1149 500 1157 496 1165 502 1173 508 1180 475 1188 500 1196 505 1204 512 1211 496 1219 497 1227 501 1235 493 1242 488 1250 490 1258 494 1266 495 1274 490 1281 491 1289 487 1297 483 1305 496 1312 485 1320 488 1328 490 1336 489 1343 481 1351 468 1359 455 1367 450 1375 442 1382 443 1390 422 1398 406 1406 382 1413 373 1421 331 1429 327 1437 304 1444 268 1452 277 1460 253 1468 252 1475 251 1483 279 1491 294 1499 308 1507 337 1514 359 1522 384 1530 393 1538 403 1545 418 1553 422 1561 445 1569 466 1576 468 1584 468 1592 472 1600 488 1607 481 1615 487 1623 490 1631 487 1639 506 1646 483 1654 479 1662 487 1670 488 1677 495 1685 493 1693 505 1701 495 1708 499 1716 482 1724 487 1732 504 1739 487 1747 509 1755 490 1763 497 1771 485 1778 494 1786 487 1794 492 1802 507 1809 492 1817 513 1825 494 1833 490 1840 497 1848 492 1856 509 1864 502 1872 505 1879 501 1887 514 1895 500 1903 502 1910 491 1918 492 1926 498 1934 508 1941 508 1949 494 1957 506 1965 504 1972 489 1980 499 1988 478 1996 499 2004 513 2011 486 2019 494 2027 483 2035 489 2042 496 2050 482 2058 492 2066 495 2073 493 2081 501 2089 504 2097 508 2104 503 2112 491 2120 508 2128 506 2136 482 2143 497 2151 499 2159 503 2167 498 2174 485 2182 490 2190 477 2198 492 2205 510 2213 501 2221 501 2229 493 2236 486 2244 487 2252 495 2260 492 2268 492 2275 505 2283 485 2291 489 2299 492 2306 492 2314 489 2322 479 2330 494 2337 491 2345 499 2353 486 2361 497 2368 494 2376 486 2384 490 2392 491 2400 505 2407 471 2415 481 2423 482 2431 493 2438 490 2446 488 2454 495 2462 477 2469 484 2477 492 2485 487 2493 500 2501 498 2508 492 2516 482 2524 507 2532 495 2539 497 2547 493 2555 493 2563 500 2570 489 2578 486 2586 496 2594 493 2601 485 2609 486 2617 501 2625 498 2633 504 2640 485 2648 483 2656 489 2664 502 2671 496 2679 499 2687 506 2695 489 2702 486 2710 492 2718 495 2726 500 2733 503 2741 498 2749 502 2757 486 2765 506 2772 489 2780 500 2788 485 2796 493 2803 495 2811 493 2819 495 2827 486 2834 489 2842 490 2850 483 2858 488 2865 483 2873 496 2881 510 2889 501 2897 485 2904 487 2912 497 2920 483 2928 473 2935 476 2943 478 2951 482 2959 499 2966 495 2974 482 2982 488 2990 484 2998 483 3005 479 3013 505 3021 489 3029 497 3036 498 3044 489 3052 495 3060 492 3067 489 3075 504 3083 492 3091 488 3098 494 3106 504 3114 499 3122 488 3130 485 3137 482 3145 487 3153 495 3161 500 3168 477 3176 494 3184 487 3192 496 3199 496 3207 483 3215 490 3223 484 3230 495 3238 479 3246 485 3254 485 3262 497 3269 507 3277 493 3285 485 3293 495 3300 487 3308 496 3316 480 3324 487 3331 490 3339 497 3347 487 3355 497 3362 488 3370 476 3378 497 3386 485 3394 483 3401 500 3409 483 3417 490 3425 483 3432 499 3440 485 3448 491 3456 477 3463 497 3471 479 3479 495 3487 499 3495 503 3502 509 3510 489 3518 498 3526 494 3533 493 3541 494 3549 484 3557 475 3564 482 3572 493 3580 475 3588 487 3595 481 3603 500 3611 481 3619 493 3627 494 3634 495 3642 509 3650 502 3658 482 3665 507 3673 481 3681 475 3689 475 3696 488 3704 495 3712 479 3720 505 3727 494 3735 499 3743 480 3751 491 3759 492 3766 486 3774 505 3782 492 3790 492 3797 495 3805 479 3813 486 3821 483 3828 483 3836 494 3844 497 3852 504 3859 502 3867 490 3875 484 3883 515 3891 505 3898 486 3906 482 3914 486 3922 493 3929 496 3937 497 3945 493 3953 490 3960 492 3968 487 3976 493 3984 491 3992 495 3999 474 4007 489 4015 491 4023 484 4030 491 4038 482 4046 484 4054 483 4061 486 4069 481 4077 494 4085 485 4092 491 4100 495 4108 489 4116 486 4124 498 4131 490 4139 482 4147 478 4155 496 4162 484 4170 485 4178 484 4186 488 4193 488 4201 477 4209 487 4217 499 4224 496 4232 473 4240 475 4248 475 4256 490 4263 498 4271 494 4279 475 4287 488 4294 494 4302 485 4310 501 4318 479 4325 494 4333 503 4341 478 4349 482 4356 488 4364 505 4372 472 4380 493 4388 495 4395 487 4403 483 4411 482 4419 482 4426 476 4434 498 4442 480 4450 482 4457 477 4465 478 4473 482 4481 464 4488 429 4496 490 4504 487 4512 483 4520 497 4527 488 4535 497 4543 482 4551 479 4558 480 4566 496 4574 490 4582 490 4589 487 4597 490 4605 489 4613 490 4621 482 4628 476 4636 479 4644 495 4652 493 4659 486 4667 471 4675 499 4683 489 4690 487 4698 487 4706 486 4714 500 4721 501 4729 481 4737 491 4745 496 4753 500 4760 467 4768 489 4776 496 4784 484 4791 487 4799 497 4807 486 4815 473 4822 475 4830 482 4838 480 4846 490 4853 481 4861 484 4869 489 4877 499 4885 487 4892 472 4900 498 4908 490 4916 497 4923 481 4931 484 4939 480 4947 483 4954 492 4962 478 4970 486 4978 488 4985 485 4993 471 5001 490 5009 466 5017 476 5024 482 5032 489 5040 491 5048 493 5055 492 5063 483 5071 493 5079 477 5086 490 5094 465 5102 482 5110 484 5118 486 5125 469 5133 494 5141 499 5149 494 5156 483 5164 493 5172 479 5180 485 5187 479 5195 476 5203 480 5211 485 5218 495 5226 497 5234 496 5242 489 5250 485 5257 480 5265 493 5273 478 5281 478 5288 485 5296 473 5304 483 5312 484 5319 475 5327 479 5335 491 5343 483 5350 485 5358 489 5366 479 5374 477 5382 484 5389 489 5397 474 5405 497 5413 488 5420 483 5428 474 5436 480 5444 489 5451 487 5459 488 5467 475 5475 490 5482 488 5490 481 5498 460 5506 480 5514 500 5521 480 5529 474 5537 495 5545 480 5552 487 5560 489 5568 472 5576 484 5583 494 5591 484 5599 490 5607 485 5615 493 5622 498 5630 473 5638 477 5646 485 5653 481 5661 482 5669 485 5677 482 5684 475 5692 481 5700 487 5708 486 5715 488 5723 488 5731 472 5739 480 5747 486 5754 490 5762 475 5770 500 5778 475 5785 486 5793 484 5801 490 5809 474 5816 476 5824 481 5832 484 5840 488 5847 485 5855 479 5863 474 5871 499 5879 474 5886 493 5894 486 5902 488 5910 485 5917 490 5925 479 5933 482 5941 467 5948 484 5956 480 5964 484 5972 493 5979 481 5987 488 5995 480 6003 484 6011 477 6018 463 6026 480 6034 485 6042 485 6049 481 6057 483 6065 491 6073 493 6080 481 6088 489 6096 467 6104 480 6112 486 6119 495 6127 481 6135 472 6143 484 6150 496 6158 480 6166 478 6174 477 6181 479 6189 491 6197 496 6205 483 6212 480 6220 495 6228 487 6236 488 6244 484 6251 480 6259 482 6267 475 6275 483 6282 480 6290 485 6298 477 6306 480 6313 484 6321 481 6329 482 6337 490 6344 476 6352 467 6360 485 6368 478 6376 489 6383 478 6391 470 6399 497 6407 486 6414 480 6422 475 6430 484 6438 474 6445 480 6453 488 6461 469 6469 477 6476 485 6484 497 6492 491 6500 478 6508 487 6515 477 6523 477 6531 483 6539 471 6546 507 6554 488 6562 479 6570 471 6577 471 6585 484 6593 488 6601 479 6608 479 6616 483 6624 477 6632 465 6640 482 6647 481 6655 486 6663 473 6671 462 6678 467 6686 480 6694 494 6702 497 6709 485 6717 469 6725 477 6733 480 6741 481 6748 477 6756 490 6764 471 6772 461 6779 469 6787 467 6795 496 6803 479 6810 469 6818 482 6826 485 6834 481 6841 483 6849 494 6857 489 6865 482 6873 487 6880 489 6888 479 6896 484 6904 481 6911 477 6919 481 6927 487 6935 474 6942 485 6950 486 6958 463 6966 479 6973 476 6981 477 6989 480 6997 471 7005 477 7012 477 7020 481 7028 475 7036 478 7043 494 7051 464 7059 494 7067 478 7074 491 7082 464 7090 478 7098 488 7105 485 7113 490 7121 475 7129 475 7137 480 7144 486 7152 485 7160 475 7168 476 7175 475 7183 480 7191 470 7199 481 7206 482 7214 482 7222 476 7230 486 7238 464 7245 479 7253 488 7261 487 7269 477 7276 487 7284 468 7292 470 7300 475 7307 475 7315 479 7323 496 7331 497 7338 481 7346 483 7354 479 7362 488 7370 473 7377 489 7385 475 7393 478 7401 460 7408 481 7416 479 7424 493 7432 478 7439 467 7447 473 7455 468 7463 489 7470 470 7478 471 7486 477 7494 474 7502 472 7509 463 7517 450 7525 452 7533 443 7540 463 7548 459 7556 449 7564 457 7571 462 7579 465 7587 472 7595 477 7602 473 7610 459 7618 453 7626 484 7634 478 7641 461 7649 485 7657 480 7665 479 7672 463 7680 483 7688 478 7696 484 7703 489 7711 488 7719 487 7727 479 7735 485 7742 481 7750 491 7758 481 7766 476 7773 491 7781 492 7789 463 7797 470 7804 481 7812 474 7820 491 7828 483 7835 488 7843 490 7851 492 7859 479 7867 488 7874 487 7882 493 7890 488 7898 494 7905 486 7913 482 7921 485 7929 476 7936 490 7944 501 7952 482 7960 473 7967 485 7975 483 7983 486 7991 481 7999 486 8006 476 8014 493 8022 482 8030 489 8037 494 8045 488 8053 492 8061 489 8068 487 8076 488 8084 489 8092 476 8099 479 8107 484 8115 483 8123 495 8131 485 8138 486 8146 490 8154 497 8162 479 8169 492 8177 465 8185 477 8193 496 8200 497 8208 488 8216 480 8224 491 8232 480 8239 497 8247 492 8255 493 8263 485 8270 502 8278 493 8286 492 8294 493 8301 497 8309 502 8317 502 8325 502 8332 517 8340 488 8348 499 8356 484 8364 488 8371 485 8379 505 8387 498 8395 496 8402 496 8410 502 8418 488 8426 495 8433 513 8441 495 8449 487 8457 482 8464 498 8472 492 8480 489 8488 489 8496 498 8503 489 8511 510 8519 492 8527 492 8534 492 8542 476 8550 476 8558 483 8565 484 8573 477 8581 500 8589 494 8596 504 8604 502 8612 490 8620 506 8628 488 8635 477 8643 473 8651 492 8659 494 8666 494 8674 506 8682 490 8690 494 8697 495 8705 479 8713 489 8721 492 8728 498 8736 495 8744 491 8752 479 8760 489 8767 490 8775 487 8783 497 8791 497 8798 496 8806 486 8814 490 8822 488 8829 490 8837 484 8845 485 8853 476 8861 482 8868 490 8876 488 8884 488 8892 485 8899 496 8907 486 8915 491 8923 488 8930 477 8938 478 8946 492 8954 488 8961 494 8969 508 8977 486 8985 478 8993 488 9000 479 9008 487 9016 488 9024 480 9031 480 9039 483 9047 486 9055 472 9062 500 9070 486 9078 493 9086 476 9093 471 9101 476 9109 475 9117 483 9125 478 9132 477 9140 487 9148 485 9156 491 9163 483 9171 486 9179 477 9187 495 9194 489 9202 485 9210 464 9218 483 9225 473 9233 478 9241 481 9249 487 9257 477 9264 474 9272 467 9280 467 9288 483 9295 474 9303 487 9311 479 9319 477 9326 490 9334 487 9342 473 9350 476 9358 474 9365 477 9373 465 9381 469 9389 474 9396 480 9404 482 9412 469 9420 487 9427 472 9435 462 9443 458 9451 469 9458 455 9466 474 9474 476 9482 482 9490 476 9497 460 9505 469 9513 473 9521 452 9528 458 9536 470 9544 460 9552 447 9559 460 9567 467 9575 482 9583 461 9590 461 9598 473 9606 474 9614 470 9622 473 9629 462 9637 453 9645 463 9653 460 9660 465 9668 462 9676 452 9684 464 9691 472 9699 463 9707 474 9715 465 9722 462 9730 456 9738 461 9746 479 9754 462 9761 454 9769 462 9777 460 9785 466 9792 460 9800 479 9808 463 9816 470 9823 451 9831 452 9839 472 9847 445 9855 460 9862 446 9870 466 9878 443 9886 450 9893 451 9901 443 9909 473 9917 452 9924 462 9932 447 9940 440 9948 455 9955 452 9963 472 9971 439 9979 435 9987 442 9994 451 10002 454 10010 443 10018 444 10025 454 10033 455 10041 443 10049 448 10056 425 10064 442 10072 449 10080 449 10087 442 10095 455 10103 437 10111 434 10119 443 10126 444 10134 431 10142 447 10150 454 10157 438 10165 435 10173 437 10181 444 10188 433 10196 434 10204 434 10212 436 10219 434 10227 432 10235 446 10243 453 10251 433 10258 446 10266 442 10274 461 10282 431 10289 432 10297 433 10305 420 10313 432 10320 443 10328 426 10336 433 10344 443 10352 424 10359 426 10367 414 10375 432 10383 418 10390 431 10398 439 10406 430 10414 420 10421 431 10429 423 10437 417 10445 421 10452 428 10460 423 10468 430 10476 442 10484 431 10491 429 10499 416 10507 430 10515 426 10522 434 10530 422 10538 428 10546 408 10553 421 10561 417 10569 414 10577 435 10584 410 10592 419 10600 419"/></g></g>
<g clip-path="url(#cps)"><g transform="translate(153 0) scale(0.1 1)"><polyline fill="none" stroke="#0000ff" stroke-width="1" vector-effect="non-scaling-stroke" shape-rendering="crispEdges" points="0 394 8 418 16 448 23 474 31 491 39 510 47 503 54 499 62 515 70 515 78 509 85 497 93 505 101 518 109 503 116 502 124 519 132 499 140 500 148 512 155 516 163 520 171 520 179 525 186 516 194 515 202 496 210 534 217 528 225 526 233 522 241 513 248 527 256 521 264 510 272 531 280 509 287 517 295 535 303 507 311 518 318 528 326 527 334 514 342 523 349 525 357 512 365 532 373 518 381 521 388 521 396 523 404 513 412 499 419 518 427 517 435 533 443 509 450 517 458 535 466 501 474 505 481 516 489 531 497 505 505 518 513 512 520 508 528 510 536 523 544 512 551 498 559 508 567 514 575 501 582 507 590 506 598 493 606 527 613 497 621 510 629 510 637 507 645 521 652 512 660 508 668 531 676 522 683 503 691 492 699 513 707 503 714 494 722 515 730 497 738 506 745 500 753 490 761 508 769 536 777 512 784 512 792 499 800 499 808 503 815 506 823 501 831 506 839 512 846 514 854 519 862 521 870 513 878 509 885 521 893 505 901 508 909 509 916 510 924 515 932 492 940 511 947 500 955 512 963 497 971 507 978 505 986 528 994 504 1002 523 1010 505 1017 501 1025 513 1033 519 1041 511 1048 514 1056 511 1064 506 1072 519 1079 507 1087 514 1095 492 1103 503 1110 513 1118 507 1126 487 1134 515 1142 509 1149 507 1157 509 1165 506 1173 504 1180 505 1188 498 1196 499 1204 498 1211 501 1219 500 1227 514 1235 495 1242 495 1250 501 1258 502 1266 501 1274 495 1281 499 1289 483 1297 483 1305 483 1312 493 1320 495 1328 475 1336 470 1343 469 1351 477 1359 450 1367 432 1375 415 1382 415 1390 415 1398 391 1406 365 1413 360 1421 322 1429 314 1437 266 1444 262 1452 250 1460 220 1468 231 1475 243 1483 252 1491 275 1499 293 1507 305 1514 339 1522 352 1530 376 1538 392 1545 415 1553 417 1561 431 1569 429 1576 462 1584 482 1592 461 1600 484 1607 487 1615 476 1623 497 1631 509 1639 505 1646 507 1654 515 1662 501 1670 517 1677 496 1685 498 1693 515 1701 515 1708 517 1716 495 1724 510 1732 503 1739 527 1747 495 1755 497 1763 504 1771 511 1778 502 1786 506 1794 516 1802 515 1809 499 1817 502 1825 531 1833 519 1840 534 1848 528 1856 520 1864 513 1872 525 1879 506 1887 527 1895 512 1903 513 1910 510 1918 510 1926 512 1934 506 1941 499 1949 500 1957 513 1965 526 1972 533 1980 523 1988 514 1996 518 2004 525 2011 510 2019 519 2027 520 2035 519 2042 512 2050 525 2058 513 2066 510 2073 515 2081 520 2089 517 2097 518 2104 504 2112 508 2120 517 2128 530 2136 488 2143 523 2151 511 2159 510 2167 504 2174 505 2182 497 2190 509 2198 499 2205 506 2213 496 2221 520 2229 521 2236 503 2244 515 2252 505 2260 501 2268 506 2275 516 2283 523 2291 518 2299 521 2306 517 2314 516 2322 524 2330 504 2337 516 2345 527 2353 499 2361 499 2368 525 2376 504 2384 516 2392 516 2400 507 2407 521 2415 522 2423 510 2431 525 2438 501 2446 503 2454 509 2462 513 2469 502 2477 517 2485 492 2493 506 2501 502 2508 507 2516 515 2524 516 2532 506 2539 509 2547 497 2555 506 2563 518 2570 502 2578 509 2586 512 2594 517 2601 513 2609 507 2617 500 2625 505 2633 480 2640 511 2648 502 2656 513 2664 508 2671 522 2679 502 2687 488 2695 509 2702 504 2710 509 2718 519 2726 506 2733 516 2741 520 2749 521 2757 497 2765 514 2772 508 2780 510 2788 504 2796 504 2803 513 2811 520 2819 513 2827 499 2834 520 2842 499 2850 507 2858 520 2865 506 2873 521 2881 512 2889 502 2897 511 2904 504 2912 528 2920 526 2928 522 2935 495 2943 525 2951 509 2959 513 2966 504 2974 503 2982 509 2990 522 2998 531 3005 521 3013 517 3021 510 3029 514 3036 527 3044 520 3052 513 3060 501 3067 500 3075 522 3083 520 3091 523 3098 516 3106 512 3114 500 3122 504 3130 483 3137 508 3145 512 3153 524 3161 498 3168 502 3176 519 3184 513 3192 494 3199 508 3207 517 3215 512 3223 514 3230 511 3238 505 3246 516 3254 509 3262 520 3269 497 3277 511 3285 509 3293 505 3300 509 3308 508 3316 487 3324 513 3331 511 3339 513 3347 510 3355 514 3362 509 3370 495 3378 507 3386 509 3394 505 3401 503 3409 516 3417 501 3425 503 3432 500 3440 510 3448 518 3456 506 3463 519 3471 504 3479 517 3487 479 3495 502 3502 516 3510 505 3518 500 3526 500 3533 516 3541 506 3549 519 3557 505 3564 497 3572 503 3580 515 3588 525 3595 504 3603 499 3611 496 3619 513 3627 524 3634 499 3642 511 3650 500 3658 514 3665 495 3673 513 3681 499 3689 498 3696 507 3704 501 3712 504 3720 511 3727 510 3735 524 3743 522 3751 506 3759 508 3766 503 3774 502 3782 521 3790 500 3797 522 3805 527 3813 534 3821 515 3828 523 3836 523 3844 513 3852 525 3859 528 3867 491 3875 512 3883 524 3891 502 3898 509 3906 518 3914 520 3922 513 3929 511 3937 524 3945 483 3953 496 3960 490 3968 503 3976 502 3984 509 3992 507 3999 522 4007 499 4015 504 4023 521 4030 507 4038 513 4046 498 4054 514 4061 508 4069 513 4077 503 4085 508 4092 506 4100 528 4108 494 4116 513 4124 508 4131 519 4139 507 4147 495 4155 509 4162 489 4170 516 4178 502 4186 499 4193 500 4201 513 4209 491 4217 517 4224 489 4232 519 4240 507 4248 527 4256 487 4263 512 4271 507 4279 507 4287 515 4294 505 4302 497 4310 507 4318 500 4325 501 4333 500 4341 509 4349 508 4356 499 4364 514 4372 498 4380 493 4388 490 4395 518 4403 503 4411 520 4419 495 4426 494 4434 518 4442 500 4450 500 4457 504 4465 499 4473 517 4481 477 4488 457 4496 492 4504 527 4512 512 4520 512 4527 489 4535 506 4543 500 4551 495 4558 496 4566 510 4574 502 4582 501 4589 497 4597 498 4605 499 4613 499 4621 494 4628 494 4636 485 4644 504 4652 507 4659 501 4667 518 4675 502 4683 508 4690 519 4698 510 4706 496 4714 502 4721 491 4729 506 4737 508 4745 499 4753 506 4760 516 4768 513 4776 510 4784 497 4791 494 4799 492 4807 509 4815 489 4822 504 4830 518 4838 488 4846 506 4853 489 4861 495 4869 499 4877 487 4885 488 4892 499 4900 500 4908 497 4916 493 4923 514 4931 491 4939 487 4947 499 4954 520 4962 494 4970 496 4978 491 4985 497 4993 497 5001 510 5009 496 5017 492 5024 504 5032 484 5040 508 5048 504 5055 497 5063 505 5071 497 5079 505 5086 499 5094 520 5102 510 5110 510 5118 491 5125 500 5133 515 5141 502 5149 498 5156 498 5164 513 5172 488 5180 492 5187 489 5195 505 5203 484 5211 488 5218 508 5226 494 5234 503 5242 499 5250 501 5257 514 5265 484 5273 497 5281 513 5288 516 5296 494 5304 508 5312 505 5319 508 5327 490 5335 486 5343 500 5350 495 5358 500 5366 489 5374 515 5382 498 5389 522 5397 495 5405 499 5413 509 5420 502 5428 500 5436 500 5444 502 5451 496 5459 517 5467 492 5475 505 5482 508 5490 505 5498 486 5506 499 5514 501 5521 496 5529 496 5537 475 5545 484 5552 496 5560 502 5568 507 5576 498 5583 502 5591 494 5599 499 5607 502 5615 494 5622 512 5630 501 5638 496 5646 500 5653 518 5661 489 5669 496 5677 494 5684 498 5692 490 5700 503 5708 503 5715 495 5723 499 5731 500 5739 503 5747 475 5754 502 5762 491 5770 503 5778 490 5785 517 5793 506 5801 519 5809 492 5816 488 5824 503 5832 503 5840 499 5847 507 5855 495 5863 490 5871 477 5879 478 5886 504 5894 504 5902 486 5910 499 5917 492 5925 496 5933 505 5941 483 5948 501 5956 500 5964 491 5972 495 5979 483 5987 496 5995 498 6003 502 6011 490 6018 506 6026 501 6034 503 6042 497 6049 501 6057 497 6065 514 6073 493 6080 506 6088 495 6096 478 6104 497 6112 507 6119 500 6127 503 6135 488 6143 502 6150 483 6158 509 6166 503 6174 481 6181 488 6189 483 6197 489 6205 492 6212 484 6220 488 6228 499 6236 490 6244 505 6251 493 6259 504 6267 488 6275 505 6282 482 6290 488 6298 482 6306 498 6313 484 6321 492 6329 506 6337 491 6344 474 6352 504 6360 497 6368 498 6376 496 6383 503 6391 504 6399 491 6407 481 6414 489 6422 501 6430 475 6438 498 6445 473 6453 502 6461 506 6469 503 6476 491 6484 507 6492 516 6500 518 6508 512 6515 501 6523 481 6531 488 6539 497 6546 496 6554 478 6562 495 6570 486 6577 493 6585 491 6593 474 6601 485 6608 493 6616 485 6624 492 6632 482 6640 484 6647 494 6655 487 6663 483 6671 509 6678 493 6686 498 6694 495 6702 519 6709 496 6717 498 6725 489 6733 500 6741 500 6748 480 6756 494 6764 509 6772 510 6779 494 6787 511 6795 487 6803 501 6810 492 6818 476 6826 498 6834 480 6841 486 6849 489 6857 480 6865 500 6873 483 6880 476 6888 490 6896 488 6904 475 6911 479 6919 490 6927 491 6935 473 6942 497 6950 500 6958 502 6966 489 6973 486 6981 494 6989 490 6997 491 7005 486 7012 490 7020 490 7028 493 7036 492 7043 488 7051 482 7059 504 7067 497 7074 501 7082 485 7090 497 7098 487 7105 494 7113 494 7121 513 7129 489 7137 476 7144 494 7152 497 7160 497 7168 463 7175 479 7183 481 7191 473 7199 485 7206 491 7214 495 7222 496 7230 491 7238 503 7245 491 7253 460 7261 481 7269 474 7276 481 7284 476 7292 475 7300 495 7307 481 7315 477 7323 487 7331 486 7338 479 7346 484 7354 477 7362 473 7370 483 7377 481 7385 502 7393 483 7401 496 7408 480 7416 471 7424 484 7432 485 7439 498 7447 466 7455 485 7463 490 7470 480 7478 481 7486 478 7494 490 7502 487 7509 448 7517 451 7525 457 7533 464 7540 456 7548 449 7556 455 7564 458 7571 450 7579 455 7587 465 7595 461 7602 477 7610 481 7618 469 7626 492 7634 478 7641 490 7649 484 7657 483 7665 489 7672 474 7680 481 7688 473 7696 486 7703 479 7711 473 7719 469 7727 478 7735 479 7742 482 7750 480 7758 499 7766 488 7773 466 7781 487 7789 485 7797 481 7804 483 7812 466 7820 503 7828 496 7835 474 7843 474 7851 479 7859 474 7867 483 7874 477 7882 466 7890 474 7898 478 7905 479 7913 482 7921 483 7929 474 7936 462 7944 495 7952 476 7960 496 7967 480 7975 482 7983 467 7991 478 7999 474 8006 480 8014 484 8022 479 8030 487 8037 471 8045 472 8053 486 8061 484 8068 482 8076 487 8084 477 8092 490 8099 482 8107 478 8115 475 8123 477 8131 470 8138 472 8146 484 8154 486 8162 493 8169 477 8177 473 8185 477 8193 464 8200 467 8208 482 8216 475 8224 483 8232 475 8239 466 8247 466 8255 487 8263 480 8270 471 8278 466 8286 466 8294 470 8301 483 8309 461 8317 471 8325 473 8332 445 8340 466 8348 485 8356 460 8364 487 8371 475 8379 460 8387 491 8395 470 8402 485 8410 473 8418 470 8426 484 8433 486 8441 479 8449 456 8457 474 8464 461 8472 468 8480 485 8488 453 8496 488 8503 455 8511 461 8519 482 8527 473 8534 474 8542 460 8550 477 8558 470 8565 473 8573 460 8581 453 8589 467 8596 448 8604 464 8612 472 8620 479 8628 469 8635 453 8643 478 8651 476 8659 470 8666 480 8674 481 8682 452 8690 463 8697 462 8705 480 8713 475 8721 461 8728 462 8736 466 8744 454 8752 462 8760 464 8767 460 8775 464 8783 469 8791 456 8798 454 8806 469 8814 474 8822 480 8829 448 8837 472 8845 462 8853 463 8861 463 8868 470 8876 473 8884 447 8892 459 8899 479 8907 469 8915 454 8923 453 8930 453 8938 468 8946 479 8954 451 8961 468 8969 459 8977 470 8985 463 8993 456 9000 460 9008 461 9016 478 9024 457 9031 468 9039 460 9047 460 9055 469 9062 455 9070 481 9078 474 9086 456 9093 470 9101 475 9109 449 9117 455 9125 474 9132 452 9140 467 9148 461 9156 464 9163 451 9171 462 9179 463 9187 485 9194 473 9202 462 9210 457 9218 460 9225 440 9233 449 9241 450 9249 456 9257 446 9264 467 9272 454 9280 466 9288 453 9295 453 9303 464 9311 465 9319 458 9326 464 9334 471 9342 459 9350 474 9358 456 9365 456 9373 445 9381 446 9389 458 9396 447 9404 442 9412 455 9420 451 9427 442 9435 471 9443 456 9451 444 9458 455 9466 459 9474 452 9482 447 9490 428 9497 445 9505 466 9513 460 9521 458 9528 444 9536 443 9544 462 9552 452 9559 442 9567 442 9575 454 9583 453 9590 441 9598 446 9606 432 9614 434 9622 448 9629 438 9637 437 9645 445 9653 458 9660 435 9668 445 9676 438 9684 467 9691 448 9699 446 9707 428 9715 453 9722 448 9730 441 9738 434 9746 439 9754 426 9761 439 9769 434 9777 428 9785 427 9792 422 9800 448 9808 437 9816 423 9823 442 9831 441 9839 431 9847 421 9855 433 9862 439 9870 447 9878 449 9886 448 9893 420 9901 434 9909 417 9917 449 9924 444 9932 449 9940 438 9948 440 9955 436 9963 414 9971 431 9979 457 9987 445 9994 432 10002 431 10010 428 10018 420 10025 428 10033 435 10041 429 10049 437 10056 443 10064 436 10072 430 10080 420 10087 428 10095 420 10103 422 10111 442 10119 425 10126 421 10134 443 10142 440 10150 438 10157 426 10165 439 10173 428 10181 420 10188 428 10196 432 10204 423 10212 431 10219 431 10227 419 10235 423 10243 429 10251 421 10258 429 10266 429 10274 402 10282 414 10289 427 10297 424 10305 399 10313 415 10320 426 10328 426 10336 426 10344 420 10352 418 10359 408 10367 417 10375 440 10383 419 10390 415 10398 428 10406 403 10414 437 10421 421 10429 415 10437 419 10445 412 10452 417 10460 409 10468 393 10476 418 10484 409 10491 403 10499 422 10507 421 10515 406 10522 405 10530 420 10538 409 10546 413 10553 420 10561 398 10569 395 10577 404 10584 406 10592 412 10600 421"/></g></g>
<g clip-path="url(#cps)"><g transform="translate(153 0) scale(0.1 1)"><polyline fill="none" stroke="#00ff00" stroke-width="1" vector-effect="non-scaling-stroke" shape-rendering="crispEdges" points="0 362 8 396 16 433 23 459 31 485 39 479 47 504 54 483 62 495 70 492 78 497 85 491 93 506 101 521 109 500 116 486 124 506 132 504 140 506 148 497 155 505 163 511 171 498 179 500 186 504 194 507 202 503 210 506 217 521 225 522 233 498 241 521 248 502 256 513 264 496 272 500 280 497 287 507 295 507 303 507 311 507 318 505 326 517 334 511 342 510 349 500 357 501 365 502 373 509 381 511 388 500 396 515 404 508 412 500 419 505 427 502 435 494 443 512 450 507 458 489 466 509 474 499 481 502 489 489 497 500 505 503 513 500 520 503 528 489 536 501 544 497 551 497 559 504 567 510 575 503 582 510 590 514 598 492 606 502 613 489 621 499 629 508 637 497 645 493 652 494 660 504 668 489 676 491 683 499 691 484 699 495 707 490 714 488 722 506 730 509 738 493 745 516 753 498 761 498 769 492 777 486 784 501 792 497 800 498 808 497 815 496 823 512 831 499 839 493 846 507 854 495 862 505 870 520 878 493 885 501 893 486 901 496 909 506 916 489 924 487 932 501 940 493 947 498 955 500 963 490 971 484 978 480 986 497 994 485 1002 484 1010 490 1017 493 1025 494 1033 483 1041 508 1048 492 1056 499 1064 495 1072 490 1079 499 1087 499 1095 507 1103 510 1110 511 1118 499 1126 497 1134 487 1142 479 1149 497 1157 490 1165 493 1173 492 1180 501 1188 493 1196 513 1204 501 1211 490 1219 495 1227 499 1235 481 1242 494 1250 487 1258 489 1266 483 1274 492 1281 494 1289 491 1297 471 1305 489 1312 483 1320 474 1328 473 1336 477 1343 457 1351 444 1359 451 1367 433 1375 424 1382 404 1390 394 1398 361 1406 342 1413 335 1421 318 1429 285 1437 271 1444 247 1452 228 1460 208 1468 235 1475 237 1483 222 1491 262 1499 271 1507 291 1514 316 1522 346 1530 359 1538 377 1545 393 1553 406 1561 425 1569 420 1576 436 1584 454 1592 449 1600 467 1607 470 1615 480 1623 479 1631 486 1639 486 1646 494 1654 487 1662 476 1670 488 1677 491 1685 491 1693 505 1701 502 1708 507 1716 497 1724 495 1732 503 1739 511 1747 496 1755 505 1763 499 1771 495 1778 505 1786 503 1794 506 1802 496 1809 503 1817 485 1825 503 1833 491 1840 502 1848 511 1856 502 1864 504 1872 496 1879 520 1887 493 1895 497 1903 498 1910 517 1918 494 1926 501 1934 507 1941 483 1949 505 1957 500 1965 510 1972 513 1980 507 1988 512 1996 498 2004 491 2011 497 2019 498 2027 495 2035 502 2042 507 2050 515 2058 502 2066 494 2073 504 2081 500 2089 507 2097 515 2104 495 2112 511 2120 514 2128 514 2136 490 2143 496 2151 509 2159 496 2167 505 2174 500 2182 513 2190 500 2198 499 2205 500 2213 510 2221 498 2229 482 2236 479 2244 500 2252 488 2260 505 2268 497 2275 502 2283 494 2291 485 2299 513 2306 500 2314 497 2322 512 2330 506 2337 512 2345 501 2353 506 2361 506 2368 505 2376 516 2384 509 2392 499 2400 492 2407 507 2415 498 2423 502 2431 497 2438 493 2446 477 2454 505 2462 510 2469 496 2477 494 2485 503 2493 488 2501 506 2508 503 2516 509 2524 498 2532 499 2539 502 2547 487 2555 492 2563 505 2570 491 2578 490 2586 499 2594 510 2601 502 2609 502 2617 504 2625 503 2633 487 2640 499 2648 502 2656 509 2664 511 2671 505 2679 514 2687 500 2695 501 2702 515 2710 499 2718 494 2726 493 2733 496 2741 488 2749 508 2757 507 2765 513 2772 493 2780 496 2788 495 2796 505 2803 507 2811 509 2819 509 2827 493 2834 502 2842 499 2850 497 2858 501 2865 484 2873 496 2881 499 2889 492 2897 488 2904 504 2912 506 2920 512 2928 491 2935 478 2943 501 2951 499 2959 496 2966 505 2974 495 2982 482 2990 498 2998 487 3005 506 3013 491 3021 487 3029 500 3036 504 3044 497 3052 492 3060 505 3067 502 3075 502 3083 498 3091 485 3098 491 3106 504 3114 492 3122 497 3130 496 3137 501 3145 500 3153 494 3161 513 3168 497 3176 503 3184 497 3192 490 3199 504 3207 499 3215 504 3223 480 3230 505 3238 494 3246 501 3254 489 3262 499 3269 502 3277 512 3285 508 3293 484 3300 498 3308 499 3316 495 3324 500 3331 504 3339 509 3347 496 3355 493 3362 500 3370 499 3378 486 3386 490 3394 485 3401 498 3409 501 3417 503 3425 506 3432 489 3440 498 3448 484 3456 498 3463 511 3471 488 3479 495 3487 474 3495 501 3502 512 3510 488 3518 502 3526 510 3533 495 3541 500 3549 495 3557 495 3564 497 3572 504 3580 499 3588 494 3595 493 3603 501 3611 501 3619 503 3627 488 3634 497 3642 486 3650 505 3658 502 3665 503 3673 489 3681 482 3689 492 3696 503 3704 496 3712 504 3720 507 3727 491 3735 504 3743 481 3751 489 3759 494 3766 496 3774 483 3782 492 3790 506 3797 510 3805 506 3813 496 3821 509 3828 504 3836 490 3844 507 3852 498 3859 504 3867 502 3875 500 3883 504 3891 511 3898 500 3906 504 3914 503 3922 504 3929 504 3937 490 3945 499 3953 510 3960 504 3968 506 3976 499 3984 513 3992 500 3999 499 4007 497 4015 512 4023 513 4030 494 4038 488 4046 480 4054 501 4061 491 4069 497 4077 494 4085 498 4092 510 4100 498 4108 498 4116 488 4124 492 4131 500 4139 500 4147 488 4155 497 4162 491 4170 500 4178 491 4186 490 4193 505 4201 496 4209 499 4217 505 4224 494 4232 498 4240 501 4248 515 4256 501 4263 503 4271 495 4279 490 4287 502 4294 487 4302 490 4310 508 4318 487 4325 484 4333 493 4341 500 4349 507 4356 513 4364 482 4372 496 4380 494 4388 496 4395 484 4403 491 4411 493 4419 496 4426 488 4434 495 4442 482 4450 481 4457 487 4465 497 4473 478 4481 473 4488 450 4496 488 4504 488 4512 493 4520 506 4527 494 4535 488 4543 499 4551 491 4558 487 4566 499 4574 487 4582 490 4589 504 4597 496 4605 509 4613 484 4621 486 4628 485 4636 488 4644 473 4652 490 4659 485 4667 483 4675 489 4683 487 4690 480 4698 488 4706 480 4714 501 4721 488 4729 491 4737 488 4745 492 4753 492 4760 487 4768 482 4776 499 4784 494 4791 479 4799 476 4807 484 4815 482 4822 479 4830 484 4838 495 4846 500 4853 493 4861 494 4869 501 4877 508 4885 499 4892 493 4900 490 4908 478 4916 490 4923 492 4931 490 4939 485 4947 496 4954 488 4962 486 4970 476 4978 494 4985 483 4993 492 5001 481 5009 487 5017 485 5024 502 5032 496 5040 488 5048 501 5055 483 5063 493 5071 484 5079 486 5086 485 5094 495 5102 476 5110 489 5118 500 5125 473 5133 488 5141 480 5149 469 5156 492 5164 486 5172 497 5180 473 5187 490 5195 501 5203 473 5211 495 5218 496 5226 496 5234 506 5242 501 5250 487 5257 482 5265 487 5273 501 5281 491 5288 499 5296 490 5304 493 5312 491 5319 496 5327 501 5335 483 5343 478 5350 488 5358 486 5366 489 5374 493 5382 484 5389 486 5397 488 5405 494 5413 484 5420 497 5428 505 5436 488 5444 497 5451 491 5459 487 5467 505 5475 499 5482 487 5490 494 5498 481 5506 473 5514 491 5521 489 5529 505 5537 494 5545 491 5552 486 5560 489 5568 481 5576 486 5583 472 5591 472 5599 473 5607 479 5615 483 5622 486 5630 498 5638 510 5646 470 5653 499 5661 493 5669 482 5677 486 5684 469 5692 482 5700 494 5708 476 5715 480 5723 484 5731 486 5739 481 5747 481 5754 490 5762 481 5770 502 5778 495 5785 487 5793 481 5801 482 5809 483 5816 487 5824 495 5832 481 5840 490 5847 488 5855 476 5863 492 5871 487 5879 488 5886 485 5894 486 5902 492 5910 479 5917 493 5925 480 5933 484 5941 486 5948 480 5956 481 5964 482 5972 489 5979 474 5987 485 5995 493 6003 475 6011 477 6018 485 6026 473 6034 473 6042 471 6049 489 6057 470 6065 482 6073 482 6080 483 6088 479 6096 486 6104 479 6112 476 6119 499 6127 491 6135 473 6143 477 6150 488 6158 496 6166 485 6174 491 6181 490 6189 492 6197 479 6205 474 6212 488 6220 487 6228 485 6236 493 6244 489 6251 484 6259 473 6267 490 6275 494 6282 479 6290 479 6298 469 6306 484 6313 479 6321 469 6329 482 6337 483 6344 482 6352 492 6360 490 6368 493 6376 483 6383 491 6391 475 6399 487 6407 472 6414 486 6422 474 6430 471 6438 485 6445 479 6453 483 6461 480 6469 486 6476 483 6484 483 6492 482 6500 498 6508 476 6515 477 6523 482 6531 477 6539 482 6546 483 6554 488 6562 482 6570 487 6577 495 6585 481 6593 488 6601 469 6608 485 6616 487 6624 472 6632 485 6640 488 6647 476 6655 486 6663 491 6671 489 6678 490 6686 486 6694 488 6702 494 6709 475 6717 483 6725 478 6733 474 6741 472 6748 481 6756 466 6764 484 6772 479 6779 473 6787 480 6795 473 6803 474 6810 490 6818 478 6826 464 6834 485 6841 474 6849 474 6857 491 6865 480 6873 485 6880 467 6888 469 6896 475 6904 489 6911 476 6919 462 6927 483 6935 475 6942 483 6950 487 6958 496 6966 477 6973 488 6981 467 6989 478 6997 477 7005 457 7012 472 7020 480 7028 490 7036 480 7043 476 7051 474 7059 482 7067 472 7074 472 7082 471 7090 483 7098 471 7105 476 7113 477 7121 479 7129 483 7137 479 7144 470 7152 486 7160 488 7168 489 7175 490 7183 471 7191 480 7199 487 7206 486 7214 481 7222 482 7230 471 7238 481 7245 464 7253 481 7261 487 7269 470 7276 483 7284 493 7292 482 7300 476 7307 470 7315 467 7323 485 7331 474 7338 480 7346 469 7354 482 7362 468 7370 478 7377 472 7385 485 7393 474 7401 476 7408 487 7416 470 7424 469 7432 479 7439 471 7447 495 7455 479 7463 477 7470 470 7478 448 7486 480 7494 465 7502 453 7509 458 7517 466 7525 471 7533 459 7540 456 7548 447 7556 437 7564 436 7571 448 7579 441 7587 458 7595 470 7602 453 7610 471 7618 465 7626 468 7634 481 7641 461 7649 488 7657 477 7665 493 7672 469 7680 476 7688 474 7696 483 7703 475 7711 473 7719 478 7727 478 7735 465 7742 472 7750 472 7758 479 7766 480 7773 462 7781 464 7789 470 7797 463 7804 483 7812 486 7820 479 7828 474 7835 461 7843 463 7851 475 7859 482 7867 466 7874 471 7882 482 7890 488 7898 465 7905 473 7913 476 7921 461 7929 470 7936 472 7944 467 7952 475 7960 468 7967 456 7975 459 7983 455 7991 458 7999 472 8006 470 8014 473 8022 480 8030 460 8037 466 8045 470 8053 479 8061 471 8068 467 8076 470 8084 461 8092 454 8099 477 8107 469 8115 475 8123 460 8131 464 8138 479 8146 475 8154 475 8162 464 8169 467 8177 473 8185 470 8193 469 8200 477 8208 474 8216 472 8224 470 8232 476 8239 461 8247 474 8255 465 8263 473 8270 465 8278 469 8286 468 8294 470 8301 457 8309 476 8317 456 8325 453 8332 471 8340 473 8348 467 8356 469 8364 462 8371 485 8379 455 8387 485 8395 457 8402 461 8410 470 8418 466 8426 469 8433 459 8441 464 8449 461 8457 481 8464 470 8472 464 8480 467 8488 472 8496 468 8503 462 8511 467 8519 469 8527 471 8534 470 8542 473 8550 460 8558 466 8565 461 8573 468 8581 464 8589 475 8596 467 8604 481 8612 462 8620 473 8628 458 8635 448 8643 459 8651 473 8659 466 8666 469 8674 461 8682 468 8690 460 8697 480 8705 479 8713 468 8721 462 8728 462 8736 472 8744 472 8752 461 8760 474 8767 471 8775 469 8783 469 8791 467 8798 465 8806 465 8814 466 8822 480 8829 456 8837 465 8845 471 8853 484 8861 469 8868 480 8876 476 8884 468 8892 476 8899 452 8907 472 8915 461 8923 461 8930 459 8938 453 8946 449 8954 465 8961 459 8969 447 8977 458 8985 454 8993 457 9000 465 9008 469 9016 449 9024 461 9031 466 9039 454 9047 460 9055 466 9062 471 9070 455 9078 450 9086 453 9093 455 9101 460 9109 464 9117 448 9125 466 9132 448 9140 464 9148 464 9156 466 9163 460 9171 459 9179 448 9187 452 9194 476 9202 471 9210 468 9218 464 9225 444 9233 470 9241 455 9249 460 9257 466 9264 454 9272 466 9280 434 9288 461 9295 455 9303 446 9311 458 9319 462 9326 460 9334 462 9342 450 9350 459 9358 460 9365 463 9373 459 9381 440 9389 459 9396 447 9404 455 9412 456 9420 457 9427 447 9435 453 9443 453 9451 452 9458 452 9466 453 9474 454 9482 441 9490 437 9497 459 9505 449 9513 428 9521 451 9528 450 9536 429 9544 437 9552 441 9559 434 9567 437 9575 443 9583 451 9590 423 9598 445 9606 451 9614 426 9622 439 9629 435 9637 431 9645 445 9653 450 9660 446 9668 455 9676 433 9684 423 9691 435 9699 444 9707 452 9715 442 9722 428 9730 444 9738 439 9746 440 9754 435 9761 442 9769 445 9777 441 9785 419 9792 428 9800 438 9808 447 9816 444 9823 442 9831 448 9839 440 9847 444 9855 445 9862 439 9870 431 9878 418 9886 433 9893 420 9901 433 9909 440 9917 429 9924 435 9932 429 9940 420 9948 434 9955 434 9963 423 9971 429 9979 418 9987 431 9994 429 10002 412 10010 422 10018 436 10025 424 10033 421 10041 416 10049 419 10056 415 10064 412 10072 424 10080 427 10087 419 10095 428 10103 434 10111 425 10119 424 10126 426 10134 416 10142 429 10150 438 10157 419 10165 405 10173 413 10181 414 10188 427 10196 435 10204 429 10212 440 10219 431 10227 428 10235 409 10243 426 10251 417 10258 419 10266 419 10274 433 10282 426 10289 420 10297 407 10305 415 10313 415 10320 422 10328 419 10336 417 10344 410 10352 418 10359 434 10367 404 10375 410 10383 420 10390 423 10398 417 10406 413 10414 425 10421 409 10429 404 10437 407 10445 423 10452 418 10460 404 10468 398 10476 403 10484 414 10491 417 10499 404 10507 402 10515 399 10522 405 10530 413 10538 410 10546 409 10553 403 10561 407 10569 395 10577 400 10584 407 10592 408 10600 413"/></g></g>
<rect x="153.5" y="141.5" width="1060" height="443" fill="none" stroke="#000" stroke-width="1.6"/>
<text x="126" y="261.5" font-size="23" font-weight="bold" text-anchor="end">10</text>
<text x="143" y="250" font-size="13" font-weight="bold" text-anchor="end">&#8722;2</text>
<text x="126" y="431" font-size="23" font-weight="bold" text-anchor="end">10</text>
<text x="143" y="419.5" font-size="13" font-weight="bold" text-anchor="end">&#8722;3</text>
<text x="153.0" y="606.7" font-size="23" font-weight="bold" text-anchor="middle">29</text>
<text x="285.5" y="606.7" font-size="23" font-weight="bold" text-anchor="middle">29.5</text>
<text x="418.0" y="606.7" font-size="23" font-weight="bold" text-anchor="middle">30</text>
<text x="550.5" y="606.7" font-size="23" font-weight="bold" text-anchor="middle">30.5</text>
<text x="683.0" y="606.7" font-size="23" font-weight="bold" text-anchor="middle">31</text>
<text x="815.5" y="606.7" font-size="23" font-weight="bold" text-anchor="middle">31.5</text>
<text x="948.0" y="606.7" font-size="23" font-weight="bold" text-anchor="middle">32</text>
<text x="1080.5" y="606.7" font-size="23" font-weight="bold" text-anchor="middle">32.5</text>
<text x="1213.0" y="606.7" font-size="23" font-weight="bold" text-anchor="middle">33</text>
<text x="683" y="649" font-size="24" font-weight="bold" text-anchor="middle">Frequency (Hz)</text>
<text x="0" y="0" font-size="26" font-weight="bold" text-anchor="middle" transform="translate(75 361.5) rotate(-90)">Magnitude</text>
<text x="53" y="689" font-size="23" font-weight="bold" text-anchor="start">T0=12/10/2025 01:15:05</text>
<text x="652" y="689" font-size="23" font-weight="bold" text-anchor="middle">Avg=25</text>
<text x="1249.5" y="689" font-size="23" font-weight="bold" text-anchor="end">BW=0.00292958</text>
<rect x="39" y="86" width="250" height="34" fill="#000"/>
<rect x="41.5" y="83.5" width="249" height="33" fill="#f2f2f2" stroke="#000" stroke-width="1.5"/>
<text x="57.3" y="108.3" font-size="27.7" font-weight="bold" text-anchor="start">Power spectrum</text>
<rect x="184" y="447" width="236" height="130" fill="#000"/>
<rect x="178.5" y="442.5" width="238" height="130" fill="#fff" stroke="#000" stroke-width="1.2"/>
<line x1="187" y1="450.3" x2="230" y2="450.3" stroke="#ff0000" stroke-width="1" shape-rendering="crispEdges"/>
<text x="237.5" y="453.90000000000003" font-size="10" font-weight="bold" text-anchor="start">X1:SUS-BS_M1_OSEMINF_F1_OUT</text>
<line x1="187" y1="466.4" x2="230" y2="466.4" stroke="#0000ff" stroke-width="1" shape-rendering="crispEdges"/>
<text x="237.5" y="470.00000000000006" font-size="10" font-weight="bold" text-anchor="start">X1:SUS-BS_M1_OSEMINF_F2_OUT</text>
<line x1="187" y1="482.5" x2="230" y2="482.5" stroke="#00ff00" stroke-width="1" shape-rendering="crispEdges"/>
<text x="237.5" y="486.1" font-size="10" font-weight="bold" text-anchor="start">X1:SUS-BS_M1_OSEMINF_F3_OUT</text>
<line x1="187" y1="498.6" x2="230" y2="498.6" stroke="#876657" stroke-width="2.5" shape-rendering="crispEdges"/>
<text x="237.5" y="502.20000000000005" font-size="10" font-weight="bold" text-anchor="start">X1:SUS-BS_M1_OSEMINF_LF_OUT</text>
<line x1="187" y1="514.7" x2="230" y2="514.7" stroke="#ff00ff" stroke-width="2.5" shape-rendering="crispEdges"/>
<text x="237.5" y="518.3000000000001" font-size="10" font-weight="bold" text-anchor="start">X1:SUS-BS_M1_OSEMINF_RT_OUT</text>
<line x1="187" y1="530.8" x2="230" y2="530.8" stroke="#00ffff" stroke-width="2.5" shape-rendering="crispEdges"/>
<text x="237.5" y="534.4" font-size="10" font-weight="bold" text-anchor="start">X1:SUS-BS_M1_OSEMINF_SD_OUT</text>
<line x1="187" y1="546.9" x2="230" y2="546.9" stroke="#6b0070" stroke-width="1" shape-rendering="crispEdges"/>
<text x="237.5" y="550.5" font-size="10" font-weight="bold" text-anchor="start">X1:SUS-BS_M2_OSEMINF_LR_OUT</text>
<line x1="187" y1="563.0" x2="230" y2="563.0" stroke="#000000" stroke-width="2.5" shape-rendering="crispEdges"/>
<text x="237.5" y="566.6" font-size="10" font-weight="bold" text-anchor="start">X1:SUS-BS_M2_OSEMINF_UL_OUT</text>
<clipPath id="ctf"><rect x="1426" y="141" width="1060" height="444"/></clipPath>
<line x1="1559.0" y1="141" x2="1559.0" y2="584" class="g"/>
<line x1="1691.5" y1="141" x2="1691.5" y2="584" class="g"/>
<line x1="1824.0" y1="141" x2="1824.0" y2="584" class="g"/>
<line x1="1956.5" y1="141" x2="1956.5" y2="584" class="g"/>
<line x1="2089.0" y1="141" x2="2089.0" y2="584" class="g"/>
<line x1="2221.5" y1="141" x2="2221.5" y2="584" class="g"/>
<line x1="2354.0" y1="141" x2="2354.0" y2="584" class="g"/>
<line x1="1426" y1="166.5" x2="2486" y2="166.5" class="g"/>
<line x1="1426" y1="241.5" x2="2486" y2="241.5" class="g"/>
<line x1="1426" y1="316.5" x2="2486" y2="316.5" class="g"/>
<line x1="1426" y1="391.5" x2="2486" y2="391.5" class="g"/>
<line x1="1426" y1="466.5" x2="2486" y2="466.5" class="g"/>
<line x1="1426" y1="541.5" x2="2486" y2="541.5" class="g"/>
<line x1="1426.5" y1="584" x2="1426.5" y2="569" class="k"/>
<line x1="1426.5" y1="141" x2="1426.5" y2="156" class="k"/>
<line x1="1452.5" y1="584" x2="1452.5" y2="576" class="k"/>
<line x1="1452.5" y1="141" x2="1452.5" y2="149" class="k"/>
<line x1="1479.5" y1="584" x2="1479.5" y2="576" class="k"/>
<line x1="1479.5" y1="141" x2="1479.5" y2="149" class="k"/>
<line x1="1506.5" y1="584" x2="1506.5" y2="576" class="k"/>
<line x1="1506.5" y1="141" x2="1506.5" y2="149" class="k"/>
<line x1="1532.5" y1="584" x2="1532.5" y2="576" class="k"/>
<line x1="1532.5" y1="141" x2="1532.5" y2="149" class="k"/>
<line x1="1558.5" y1="584" x2="1558.5" y2="569" class="k"/>
<line x1="1558.5" y1="141" x2="1558.5" y2="156" class="k"/>
<line x1="1585.5" y1="584" x2="1585.5" y2="576" class="k"/>
<line x1="1585.5" y1="141" x2="1585.5" y2="149" class="k"/>
<line x1="1612.5" y1="584" x2="1612.5" y2="576" class="k"/>
<line x1="1612.5" y1="141" x2="1612.5" y2="149" class="k"/>
<line x1="1638.5" y1="584" x2="1638.5" y2="576" class="k"/>
<line x1="1638.5" y1="141" x2="1638.5" y2="149" class="k"/>
<line x1="1664.5" y1="584" x2="1664.5" y2="576" class="k"/>
<line x1="1664.5" y1="141" x2="1664.5" y2="149" class="k"/>
<line x1="1691.5" y1="584" x2="1691.5" y2="569" class="k"/>
<line x1="1691.5" y1="141" x2="1691.5" y2="156" class="k"/>
<line x1="1718.5" y1="584" x2="1718.5" y2="576" class="k"/>
<line x1="1718.5" y1="141" x2="1718.5" y2="149" class="k"/>
<line x1="1744.5" y1="584" x2="1744.5" y2="576" class="k"/>
<line x1="1744.5" y1="141" x2="1744.5" y2="149" class="k"/>
<line x1="1770.5" y1="584" x2="1770.5" y2="576" class="k"/>
<line x1="1770.5" y1="141" x2="1770.5" y2="149" class="k"/>
<line x1="1797.5" y1="584" x2="1797.5" y2="576" class="k"/>
<line x1="1797.5" y1="141" x2="1797.5" y2="149" class="k"/>
<line x1="1824.5" y1="584" x2="1824.5" y2="569" class="k"/>
<line x1="1824.5" y1="141" x2="1824.5" y2="156" class="k"/>
<line x1="1850.5" y1="584" x2="1850.5" y2="576" class="k"/>
<line x1="1850.5" y1="141" x2="1850.5" y2="149" class="k"/>
<line x1="1876.5" y1="584" x2="1876.5" y2="576" class="k"/>
<line x1="1876.5" y1="141" x2="1876.5" y2="149" class="k"/>
<line x1="1903.5" y1="584" x2="1903.5" y2="576" class="k"/>
<line x1="1903.5" y1="141" x2="1903.5" y2="149" class="k"/>
<line x1="1930.5" y1="584" x2="1930.5" y2="576" class="k"/>
<line x1="1930.5" y1="141" x2="1930.5" y2="149" class="k"/>
<line x1="1956.5" y1="584" x2="1956.5" y2="569" class="k"/>
<line x1="1956.5" y1="141" x2="1956.5" y2="156" class="k"/>
<line x1="1982.5" y1="584" x2="1982.5" y2="576" class="k"/>
<line x1="1982.5" y1="141" x2="1982.5" y2="149" class="k"/>
<line x1="2009.5" y1="584" x2="2009.5" y2="576" class="k"/>
<line x1="2009.5" y1="141" x2="2009.5" y2="149" class="k"/>
<line x1="2036.5" y1="584" x2="2036.5" y2="576" class="k"/>
<line x1="2036.5" y1="141" x2="2036.5" y2="149" class="k"/>
<line x1="2062.5" y1="584" x2="2062.5" y2="576" class="k"/>
<line x1="2062.5" y1="141" x2="2062.5" y2="149" class="k"/>
<line x1="2088.5" y1="584" x2="2088.5" y2="569" class="k"/>
<line x1="2088.5" y1="141" x2="2088.5" y2="156" class="k"/>
<line x1="2115.5" y1="584" x2="2115.5" y2="576" class="k"/>
<line x1="2115.5" y1="141" x2="2115.5" y2="149" class="k"/>
<line x1="2142.5" y1="584" x2="2142.5" y2="576" class="k"/>
<line x1="2142.5" y1="141" x2="2142.5" y2="149" class="k"/>
<line x1="2168.5" y1="584" x2="2168.5" y2="576" class="k"/>
<line x1="2168.5" y1="141" x2="2168.5" y2="149" class="k"/>
<line x1="2194.5" y1="584" x2="2194.5" y2="576" class="k"/>
<line x1="2194.5" y1="141" x2="2194.5" y2="149" class="k"/>
<line x1="2221.5" y1="584" x2="2221.5" y2="569" class="k"/>
<line x1="2221.5" y1="141" x2="2221.5" y2="156" class="k"/>
<line x1="2248.5" y1="584" x2="2248.5" y2="576" class="k"/>
<line x1="2248.5" y1="141" x2="2248.5" y2="149" class="k"/>
<line x1="2274.5" y1="584" x2="2274.5" y2="576" class="k"/>
<line x1="2274.5" y1="141" x2="2274.5" y2="149" class="k"/>
<line x1="2300.5" y1="584" x2="2300.5" y2="576" class="k"/>
<line x1="2300.5" y1="141" x2="2300.5" y2="149" class="k"/>
<line x1="2327.5" y1="584" x2="2327.5" y2="576" class="k"/>
<line x1="2327.5" y1="141" x2="2327.5" y2="149" class="k"/>
<line x1="2354.5" y1="584" x2="2354.5" y2="569" class="k"/>
<line x1="2354.5" y1="141" x2="2354.5" y2="156" class="k"/>
<line x1="2380.5" y1="584" x2="2380.5" y2="576" class="k"/>
<line x1="2380.5" y1="141" x2="2380.5" y2="149" class="k"/>
<line x1="2406.5" y1="584" x2="2406.5" y2="576" class="k"/>
<line x1="2406.5" y1="141" x2="2406.5" y2="149" class="k"/>
<line x1="2433.5" y1="584" x2="2433.5" y2="576" class="k"/>
<line x1="2433.5" y1="141" x2="2433.5" y2="149" class="k"/>
<line x1="2460.5" y1="584" x2="2460.5" y2="576" class="k"/>
<line x1="2460.5" y1="141" x2="2460.5" y2="149" class="k"/>
<line x1="2486.5" y1="584" x2="2486.5" y2="569" class="k"/>
<line x1="2486.5" y1="141" x2="2486.5" y2="156" class="k"/>
<line x1="1426" y1="166.5" x2="1452" y2="166.5" class="k"/>
<line x1="2486" y1="166.5" x2="2460" y2="166.5" class="k"/>
<line x1="1426" y1="241.5" x2="1452" y2="241.5" class="k"/>
<line x1="2486" y1="241.5" x2="2460" y2="241.5" class="k"/>
<line x1="1426" y1="316.5" x2="1452" y2="316.5" class="k"/>
<line x1="2486" y1="316.5" x2="2460" y2="316.5" class="k"/>
<line x1="1426" y1="391.5" x2="1452" y2="391.5" class="k"/>
<line x1="2486" y1="391.5" x2="2460" y2="391.5" class="k"/>
<line x1="1426" y1="466.5" x2="1452" y2="466.5" class="k"/>
<line x1="2486" y1="466.5" x2="2460" y2="466.5" class="k"/>
<line x1="1426" y1="541.5" x2="1452" y2="541.5" class="k"/>
<line x1="2486" y1="541.5" x2="2460" y2="541.5" class="k"/>
<line x1="1426" y1="147.8" x2="1439" y2="147.8" class="k"/>
<line x1="2486" y1="147.8" x2="2473" y2="147.8" class="k"/>
<line x1="1426" y1="185.2" x2="1439" y2="185.2" class="k"/>
<line x1="2486" y1="185.2" x2="2473" y2="185.2" class="k"/>
<line x1="1426" y1="204.0" x2="1439" y2="204.0" class="k"/>
<line x1="2486" y1="204.0" x2="2473" y2="204.0" class="k"/>
<line x1="1426" y1="222.8" x2="1439" y2="222.8" class="k"/>
<line x1="2486" y1="222.8" x2="2473" y2="222.8" class="k"/>
<line x1="1426" y1="260.2" x2="1439" y2="260.2" class="k"/>
<line x1="2486" y1="260.2" x2="2473" y2="260.2" class="k"/>
<line x1="1426" y1="279.0" x2="1439" y2="279.0" class="k"/>
<line x1="2486" y1="279.0" x2="2473" y2="279.0" class="k"/>
<line x1="1426" y1="297.8" x2="1439" y2="297.8" class="k"/>
<line x1="2486" y1="297.8" x2="2473" y2="297.8" class="k"/>
<line x1="1426" y1="335.2" x2="1439" y2="335.2" class="k"/>
<line x1="2486" y1="335.2" x2="2473" y2="335.2" class="k"/>
<line x1="1426" y1="354.0" x2="1439" y2="354.0" class="k"/>
<line x1="2486" y1="354.0" x2="2473" y2="354.0" class="k"/>
<line x1="1426" y1="372.8" x2="1439" y2="372.8" class="k"/>
<line x1="2486" y1="372.8" x2="2473" y2="372.8" class="k"/>
<line x1="1426" y1="410.2" x2="1439" y2="410.2" class="k"/>
<line x1="2486" y1="410.2" x2="2473" y2="410.2" class="k"/>
<line x1="1426" y1="429.0" x2="1439" y2="429.0" class="k"/>
<line x1="2486" y1="429.0" x2="2473" y2="429.0" class="k"/>
<line x1="1426" y1="447.8" x2="1439" y2="447.8" class="k"/>
<line x1="2486" y1="447.8" x2="2473" y2="447.8" class="k"/>
<line x1="1426" y1="485.2" x2="1439" y2="485.2" class="k"/>
<line x1="2486" y1="485.2" x2="2473" y2="485.2" class="k"/>
<line x1="1426" y1="504.0" x2="1439" y2="504.0" class="k"/>
<line x1="2486" y1="504.0" x2="2473" y2="504.0" class="k"/>
<line x1="1426" y1="522.8" x2="1439" y2="522.8" class="k"/>
<line x1="2486" y1="522.8" x2="2473" y2="522.8" class="k"/>
<line x1="1426" y1="560.2" x2="1439" y2="560.2" class="k"/>
<line x1="2486" y1="560.2" x2="2473" y2="560.2" class="k"/>
<line x1="1426" y1="579.0" x2="1439" y2="579.0" class="k"/>
<line x1="2486" y1="579.0" x2="2473" y2="579.0" class="k"/>
<g clip-path="url(#ctf)"><g transform="translate(1426 0) scale(0.1 1)"><polyline fill="none" stroke="#000000" stroke-width="2" vector-effect="non-scaling-stroke" shape-rendering="crispEdges" points="0 313 8 320 16 325 23 305 31 290 39 297 47 337 54 343 62 341 70 336 78 366 85 332 93 357 101 341 109 352 116 355 124 347 132 338 140 351 148 331 155 351 163 348 171 339 179 347 186 357 194 352 202 342 210 364 217 364 225 358 233 334 241 351 248 343 256 351 264 359 272 362 280 349 287 333 295 355 303 359 311 357 318 333 326 360 334 350 342 350 349 363 357 355 365 334 373 348 381 353 388 348 396 351 404 348 412 378 419 349 427 350 435 354 443 350 450 327 458 366 466 335 474 347 481 348 489 364 497 346 505 350 513 342 520 339 528 337 536 349 544 358 551 345 559 334 567 355 575 328 582 360 590 348 598 352 606 343 613 340 621 330 629 343 637 340 645 336 652 333 660 337 668 346 676 356 683 337 691 337 699 346 707 344 714 333 722 347 730 312 738 333 745 338 753 335 761 331 769 324 777 322 784 301 792 301 800 303 808 299 815 297 823 301 831 307 839 296 846 289 854 285 862 277 870 277 878 280 885 276 893 271 901 271 909 277 916 278 924 275 932 270 940 277 947 271 955 273 963 269 971 283 978 268 986 270 994 269 1002 266 1010 257 1017 256 1025 266 1033 262 1041 251 1048 228 1056 190 1064 182 1072 224 1079 253 1087 267 1095 262 1103 265 1110 264 1118 282 1126 272 1134 277 1142 280 1149 293 1157 289 1165 288 1173 322 1180 294 1188 327 1196 316 1204 312 1211 319 1219 307 1227 312 1235 314 1242 330 1250 311 1258 328 1266 316 1274 320 1281 334 1289 339 1297 320 1305 337 1312 333 1320 333 1328 340 1336 315 1343 317 1351 315 1359 293 1367 310 1375 300 1382 315 1390 310 1398 307 1406 286 1413 273 1421 266 1429 249 1437 246 1444 237 1452 231 1460 230 1468 225 1475 223 1483 204 1491 224 1499 224 1507 226 1514 227 1522 224 1530 225 1538 220 1545 252 1553 282 1561 309 1569 318 1576 329 1584 316 1592 319 1600 344 1607 335 1615 343 1623 327 1631 358 1639 335 1646 333 1654 342 1662 342 1670 333 1677 338 1685 369 1693 353 1701 350 1708 346 1716 357 1724 364 1732 371 1739 336 1747 333 1755 359 1763 340 1771 364 1778 352 1786 339 1794 360 1802 359 1809 347 1817 362 1825 362 1833 351 1840 349 1848 344 1856 345 1864 362 1872 340 1879 346 1887 367 1895 357 1903 336 1910 362 1918 363 1926 340 1934 347 1941 348 1949 344 1957 361 1965 343 1972 341 1980 333 1988 349 1996 351 2004 340 2011 359 2019 355 2027 370 2035 346 2042 360 2050 363 2058 357 2066 350 2073 359 2081 359 2089 355 2097 356 2104 363 2112 350 2120 361 2128 350 2136 356 2143 342 2151 340 2159 349 2167 348 2174 346 2182 314 2190 328 2198 333 2205 333 2213 323 2221 316 2229 347 2236 330 2244 319 2252 335 2260 321 2268 324 2275 317 2283 303 2291 287 2299 292 2306 299 2314 311 2322 308 2330 306 2337 319 2345 328 2353 328 2361 331 2368 330 2376 312 2384 333 2392 335 2400 331 2407 329 2415 342 2423 332 2431 323 2438 334 2446 330 2454 331 2462 344 2469 340 2477 352 2485 353 2493 336 2501 350 2508 315 2516 338 2524 340 2532 347 2539 369 2547 347 2555 350 2563 340 2570 365 2578 383 2586 365 2594 410 2601 436 2609 458 2617 468 2625 476 2633 484 2640 478 2648 478 2656 483 2664 481 2671 487 2679 477 2687 482 2695 484 2702 483 2710 487 2718 481 2726 484 2733 475 2741 485 2749 478 2757 485 2765 478 2772 475 2780 486 2788 482 2796 478 2803 481 2811 477 2819 480 2827 479 2834 482 2842 481 2850 487 2858 476 2865 484 2873 484 2881 480 2889 479 2897 481 2904 484 2912 479 2920 476 2928 480 2935 485 2943 484 2951 483 2959 480 2966 481 2974 486 2982 481 2990 483 2998 485 3005 484 3013 481 3021 479 3029 482 3036 484 3044 485 3052 484 3060 479 3067 484 3075 483 3083 487 3091 476 3098 480 3106 480 3114 482 3122 483 3130 489 3137 482 3145 476 3153 486 3161 485 3168 483 3176 474 3184 481 3192 482 3199 479 3207 480 3215 481 3223 480 3230 483 3238 483 3246 482 3254 486 3262 480 3269 484 3277 480 3285 481 3293 481 3300 470 3308 486 3316 482 3324 480 3331 478 3339 478 3347 478 3355 477 3362 483 3370 484 3378 479 3386 482 3394 480 3401 480 3409 482 3417 479 3425 480 3432 482 3440 474 3448 484 3456 484 3463 482 3471 481 3479 481 3487 484 3495 480 3502 480 3510 478 3518 481 3526 480 3533 482 3541 480 3549 469 3557 476 3564 482 3572 476 3580 483 3588 484 3595 480 3603 482 3611 482 3619 475 3627 485 3634 475 3642 472 3650 482 3658 484 3665 482 3673 482 3681 481 3689 484 3696 476 3704 471 3712 489 3720 477 3727 484 3735 476 3743 483 3751 477 3759 484 3766 480 3774 474 3782 479 3790 481 3797 476 3805 485 3813 480 3821 483 3828 479 3836 481 3844 485 3852 479 3859 480 3867 480 3875 478 3883 485 3891 479 3898 481 3906 482 3914 483 3922 482 3929 484 3937 483 3945 476 3953 481 3960 484 3968 481 3976 481 3984 484 3992 482 3999 479 4007 481 4015 477 4023 485 4030 482 4038 484 4046 486 4054 479 4061 482 4069 482 4077 481 4085 481 4092 482 4100 483 4108 483 4116 476 4124 477 4131 482 4139 480 4147 481 4155 476 4162 480 4170 468 4178 483 4186 480 4193 481 4201 485 4209 485 4217 477 4224 482 4232 476 4240 479 4248 483 4256 478 4263 483 4271 481 4279 482 4287 479 4294 480 4302 484 4310 479 4318 477 4325 474 4333 475 4341 477 4349 479 4356 475 4364 485 4372 482 4380 475 4388 472 4395 482 4403 481 4411 484 4419 473 4426 482 4434 475 4442 478 4450 485 4457 480 4465 469 4473 451 4481 430 4488 463 4496 476 4504 482 4512 475 4520 481 4527 479 4535 485 4543 480 4551 484 4558 478 4566 485 4574 479 4582 482 4589 479 4597 485 4605 481 4613 479 4621 478 4628 481 4636 480 4644 478 4652 485 4659 480 4667 480 4675 481 4683 481 4690 481 4698 479 4706 479 4714 478 4721 483 4729 484 4737 478 4745 479 4753 484 4760 471 4768 481 4776 481 4784 477 4791 478 4799 475 4807 480 4815 483 4822 483 4830 480 4838 477 4846 479 4853 477 4861 481 4869 478 4877 484 4885 481 4892 485 4900 478 4908 478 4916 481 4923 477 4931 485 4939 481 4947 481 4954 479 4962 480 4970 478 4978 474 4985 483 4993 479 5001 481 5009 477 5017 482 5024 482 5032 478 5040 479 5048 477 5055 483 5063 483 5071 480 5079 483 5086 481 5094 482 5102 473 5110 483 5118 473 5125 475 5133 480 5141 473 5149 476 5156 483 5164 479 5172 480 5180 480 5187 480 5195 480 5203 485 5211 481 5218 482 5226 474 5234 483 5242 478 5250 471 5257 481 5265 477 5273 482 5281 483 5288 480 5296 481 5304 475 5312 479 5319 477 5327 480 5335 474 5343 476 5350 482 5358 481 5366 480 5374 474 5382 479 5389 483 5397 481 5405 482 5413 479 5420 477 5428 479 5436 475 5444 477 5451 480 5459 477 5467 479 5475 477 5482 481 5490 475 5498 481 5506 484 5514 474 5521 478 5529 479 5537 485 5545 484 5552 477 5560 477 5568 476 5576 481 5583 467 5591 476 5599 475 5607 479 5615 479 5622 479 5630 479 5638 477 5646 477 5653 480 5661 479 5669 477 5677 466 5684 485 5692 483 5700 478 5708 483 5715 479 5723 485 5731 486 5739 473 5747 480 5754 484 5762 480 5770 479 5778 482 5785 486 5793 482 5801 476 5809 478 5816 476 5824 473 5832 479 5840 478 5847 477 5855 475 5863 479 5871 476 5879 479 5886 480 5894 478 5902 479 5910 478 5917 475 5925 485 5933 481 5941 477 5948 479 5956 482 5964 481 5972 481 5979 476 5987 472 5995 478 6003 473 6011 480 6018 483 6026 481 6034 481 6042 479 6049 482 6057 486 6065 476 6073 480 6080 483 6088 479 6096 475 6104 478 6112 482 6119 486 6127 477 6135 478 6143 482 6150 479 6158 485 6166 475 6174 474 6181 480 6189 482 6197 479 6205 484 6212 479 6220 480 6228 481 6236 482 6244 484 6251 479 6259 483 6267 480 6275 482 6282 483 6290 482 6298 477 6306 469 6313 483 6321 482 6329 484 6337 480 6344 481 6352 478 6360 480 6368 480 6376 474 6383 480 6391 477 6399 475 6407 474 6414 481 6422 471 6430 478 6438 467 6445 476 6453 479 6461 476 6469 477 6476 475 6484 474 6492 482 6500 470 6508 476 6515 479 6523 472 6531 480 6539 474 6546 479 6554 477 6562 478 6570 476 6577 478 6585 479 6593 477 6601 479 6608 483 6616 483 6624 476 6632 480 6640 481 6647 482 6655 485 6663 473 6671 482 6678 484 6686 478 6694 475 6702 483 6709 475 6717 481 6725 483 6733 476 6741 481 6748 483 6756 479 6764 477 6772 479 6779 474 6787 474 6795 475 6803 469 6810 478 6818 479 6826 479 6834 474 6841 469 6849 481 6857 481 6865 482 6873 478 6880 477 6888 482 6896 483 6904 481 6911 472 6919 480 6927 479 6935 482 6942 473 6950 477 6958 483 6966 477 6973 471 6981 477 6989 482 6997 478 7005 482 7012 475 7020 481 7028 480 7036 486 7043 484 7051 477 7059 487 7067 479 7074 472 7082 478 7090 477 7098 479 7105 479 7113 475 7121 479 7129 477 7137 478 7144 479 7152 481 7160 480 7168 477 7175 477 7183 478 7191 474 7199 481 7206 470 7214 480 7222 473 7230 482 7238 482 7245 483 7253 482 7261 476 7269 482 7276 480 7284 475 7292 470 7300 477 7307 471 7315 477 7323 480 7331 481 7338 477 7346 482 7354 475 7362 482 7370 481 7377 480 7385 483 7393 469 7401 479 7408 470 7416 477 7424 480 7432 475 7439 477 7447 469 7455 473 7463 481 7470 481 7478 475 7486 481 7494 475 7502 479 7509 479 7517 473 7525 478 7533 483 7540 481 7548 475 7556 476 7564 477 7571 479 7579 481 7587 477 7595 475 7602 480 7610 476 7618 474 7626 477 7634 473 7641 472 7649 484 7657 474 7665 476 7672 481 7680 481 7688 473 7696 479 7703 479 7711 476 7719 482 7727 476 7735 477 7742 474 7750 478 7758 474 7766 468 7773 468 7781 477 7789 468 7797 471 7804 474 7812 475 7820 474 7828 483 7835 478 7843 470 7851 473 7859 469 7867 475 7874 473 7882 477 7890 475 7898 473 7905 479 7913 474 7921 473 7929 474 7936 474 7944 474 7952 477 7960 474 7967 472 7975 476 7983 470 7991 478 7999 475 8006 470 8014 467 8022 464 8030 459 8037 441 8045 423 8053 421 8061 410 8068 396 8076 328 8084 305 8092 323 8099 340 8107 356 8115 347 8123 352 8131 347 8138 320 8146 342 8154 352 8162 344 8169 345 8177 355 8185 323 8193 321 8200 349 8208 342 8216 338 8224 328 8232 346 8239 341 8247 334 8255 331 8263 313 8270 325 8278 337 8286 313 8294 310 8301 285 8309 254 8317 210 8325 212 8332 249 8340 290 8348 301 8356 329 8364 311 8371 335 8379 317 8387 343 8395 330 8402 350 8410 337 8418 340 8426 334 8433 358 8441 345 8449 337 8457 348 8464 345 8472 352 8480 369 8488 345 8496 369 8503 374 8511 338 8519 352 8527 352 8534 364 8542 366 8550 331 8558 352 8565 351 8573 373 8581 360 8589 367 8596 363 8604 375 8612 365 8620 385 8628 349 8635 368 8643 352 8651 364 8659 356 8666 347 8674 369 8682 361 8690 368 8697 348 8705 341 8713 355 8721 366 8728 366 8736 351 8744 352 8752 353 8760 357 8767 368 8775 332 8783 350 8791 374 8798 361 8806 362 8814 379 8822 360 8829 354 8837 336 8845 368 8853 352 8861 357 8868 345 8876 353 8884 365 8892 343 8899 355 8907 356 8915 364 8923 356 8930 348 8938 342 8946 354 8954 330 8961 345 8969 361 8977 345 8985 343 8993 331 9000 341 9008 330 9016 320 9024 342 9031 363 9039 337 9047 340 9055 341 9062 336 9070 356 9078 341 9086 338 9093 326 9101 344 9109 360 9117 324 9125 345 9132 332 9140 332 9148 354 9156 339 9163 330 9171 327 9179 341 9187 334 9194 333 9202 347 9210 324 9218 333 9225 334 9233 336 9241 344 9249 330 9257 346 9264 331 9272 327 9280 320 9288 323 9295 325 9303 317 9311 315 9319 319 9326 320 9334 330 9342 309 9350 314 9358 314 9365 318 9373 307 9381 320 9389 328 9396 305 9404 317 9412 308 9420 305 9427 306 9435 299 9443 303 9451 288 9458 298 9466 295 9474 294 9482 303 9490 302 9497 303 9505 288 9513 294 9521 304 9528 288 9536 293 9544 290 9552 290 9559 293 9567 275 9575 280 9583 280 9590 274 9598 267 9606 264 9614 250 9622 266 9629 258 9637 254 9645 236 9653 212 9660 177 9668 141 9676 141 9684 170 9691 210 9699 233 9707 249 9715 254 9722 254 9730 265 9738 258 9746 263 9754 271 9761 270 9769 270 9777 272 9785 269 9792 263 9800 268 9808 273 9816 273 9823 290 9831 286 9839 285 9847 285 9855 287 9862 272 9870 298 9878 286 9886 283 9893 277 9901 286 9909 288 9917 298 9924 289 9932 288 9940 289 9948 292 9955 306 9963 297 9971 297 9979 306 9987 303 9994 312 10002 303 10010 296 10018 310 10025 300 10033 299 10041 312 10049 295 10056 316 10064 309 10072 317 10080 311 10087 312 10095 309 10103 310 10111 304 10119 311 10126 299 10134 313 10142 327 10150 313 10157 325 10165 313 10173 296 10181 326 10188 305 10196 320 10204 299 10212 313 10219 306 10227 316 10235 308 10243 327 10251 316 10258 320 10266 331 10274 315 10282 323 10289 308 10297 312 10305 313 10313 310 10320 320 10328 318 10336 302 10344 308 10352 315 10359 313 10367 314 10375 314 10383 310 10390 314 10398 320 10406 315 10414 307 10421 310 10429 316 10437 313 10445 324 10452 321 10460 313 10468 312 10476 309 10484 315 10491 327 10499 312 10507 308 10515 331 10522 332 10530 329 10538 320 10546 331 10553 315 10561 307 10569 314 10577 331 10584 332 10592 325 10600 317"/></g></g>
<g clip-path="url(#ctf)"><g transform="translate(1426 0) scale(0.1 1)"><polyline fill="none" stroke="#6b0070" stroke-width="3" vector-effect="non-scaling-stroke" shape-rendering="crispEdges" points="0 347 8 343 16 386 23 340 31 339 39 354 47 395 54 374 62 409 70 394 78 360 85 441 93 406 101 413 109 396 116 423 124 374 132 424 140 403 148 412 155 353 163 443 171 387 179 412 186 397 194 452 202 386 210 389 217 413 225 398 233 353 241 391 248 387 256 359 264 407 272 377 280 390 287 334 295 434 303 389 311 357 318 363 326 402 334 416 342 390 349 396 357 409 365 388 373 395 381 383 388 434 396 382 404 372 412 373 419 405 427 376 435 386 443 390 450 422 458 349 466 417 474 387 481 426 489 396 497 353 505 413 513 403 520 398 528 413 536 391 544 406 551 414 559 398 567 410 575 396 582 391 590 414 598 402 606 377 613 396 621 375 629 368 637 419 645 340 652 348 660 319 668 373 676 355 683 365 691 369 699 400 707 419 714 386 722 360 730 405 738 359 745 353 753 317 761 352 769 355 777 340 784 349 792 329 800 336 808 308 815 342 823 350 831 307 839 322 846 292 854 297 862 315 870 314 878 301 885 308 893 291 901 316 909 295 916 285 924 313 932 317 940 302 947 309 955 305 963 293 971 301 978 268 986 293 994 304 1002 309 1010 297 1017 300 1025 289 1033 274 1041 309 1048 254 1056 234 1064 220 1072 264 1079 269 1087 273 1095 304 1103 296 1110 283 1118 298 1126 286 1134 301 1142 326 1149 343 1157 334 1165 339 1173 356 1180 343 1188 361 1196 347 1204 356 1211 321 1219 321 1227 330 1235 384 1242 376 1250 338 1258 384 1266 392 1274 376 1281 357 1289 418 1297 367 1305 405 1312 386 1320 374 1328 415 1336 320 1343 345 1351 390 1359 331 1367 319 1375 352 1382 319 1390 355 1398 349 1406 314 1413 305 1421 276 1429 286 1437 277 1444 258 1452 252 1460 248 1468 250 1475 244 1483 219 1491 240 1499 221 1507 249 1514 240 1522 254 1530 254 1538 238 1545 281 1553 289 1561 337 1569 359 1576 368 1584 325 1592 352 1600 356 1607 369 1615 366 1623 397 1631 391 1639 367 1646 378 1654 394 1662 385 1670 386 1677 431 1685 400 1693 363 1701 416 1708 398 1716 433 1724 398 1732 405 1739 418 1747 417 1755 414 1763 406 1771 413 1778 387 1786 417 1794 399 1802 401 1809 405 1817 377 1825 406 1833 447 1840 367 1848 347 1856 386 1864 399 1872 354 1879 393 1887 417 1895 350 1903 411 1910 422 1918 348 1926 403 1934 413 1941 397 1949 374 1957 459 1965 329 1972 405 1980 396 1988 405 1996 425 2004 369 2011 411 2019 366 2027 388 2035 391 2042 440 2050 394 2058 423 2066 425 2073 394 2081 366 2089 414 2097 371 2104 404 2112 390 2120 357 2128 398 2136 424 2143 367 2151 393 2159 417 2167 361 2174 377 2182 386 2190 345 2198 380 2205 374 2213 392 2221 345 2229 388 2236 413 2244 380 2252 382 2260 344 2268 350 2275 326 2283 334 2291 332 2299 291 2306 297 2314 360 2322 351 2330 359 2337 353 2345 345 2353 383 2361 389 2368 358 2376 366 2384 364 2392 357 2400 360 2407 400 2415 358 2423 339 2431 380 2438 376 2446 350 2454 415 2462 356 2469 390 2477 381 2485 358 2493 379 2501 386 2508 389 2516 400 2524 387 2532 342 2539 380 2547 423 2555 401 2563 412 2570 401 2578 428 2586 391 2594 445 2601 478 2609 483 2617 497 2625 529 2633 524 2640 522 2648 520 2656 524 2664 520 2671 509 2679 498 2687 532 2695 510 2702 517 2710 530 2718 511 2726 521 2733 510 2741 525 2749 521 2757 517 2765 541 2772 531 2780 521 2788 506 2796 528 2803 516 2811 504 2819 489 2827 535 2834 531 2842 505 2850 528 2858 510 2865 524 2873 496 2881 514 2889 530 2897 510 2904 518 2912 504 2920 519 2928 546 2935 509 2943 535 2951 527 2959 547 2966 506 2974 492 2982 506 2990 522 2998 526 3005 529 3013 511 3021 517 3029 516 3036 507 3044 513 3052 514 3060 526 3067 512 3075 507 3083 506 3091 501 3098 523 3106 495 3114 503 3122 513 3130 496 3137 508 3145 510 3153 521 3161 515 3168 514 3176 491 3184 516 3192 516 3199 519 3207 515 3215 531 3223 545 3230 497 3238 547 3246 526 3254 506 3262 512 3269 527 3277 531 3285 494 3293 507 3300 511 3308 518 3316 507 3324 506 3331 533 3339 519 3347 519 3355 510 3362 492 3370 503 3378 509 3386 519 3394 530 3401 522 3409 528 3417 515 3425 500 3432 498 3440 508 3448 524 3456 502 3463 500 3471 505 3479 523 3487 525 3495 495 3502 528 3510 495 3518 535 3526 526 3533 524 3541 519 3549 519 3557 540 3564 532 3572 528 3580 508 3588 516 3595 521 3603 520 3611 537 3619 505 3627 516 3634 522 3642 521 3650 540 3658 500 3665 532 3673 497 3681 534 3689 535 3696 518 3704 512 3712 486 3720 502 3727 553 3735 504 3743 537 3751 522 3759 521 3766 536 3774 539 3782 524 3790 517 3797 521 3805 511 3813 512 3821 529 3828 519 3836 537 3844 513 3852 535 3859 521 3867 522 3875 508 3883 530 3891 525 3898 508 3906 517 3914 536 3922 508 3929 527 3937 530 3945 520 3953 516 3960 509 3968 535 3976 518 3984 522 3992 521 3999 505 4007 538 4015 528 4023 519 4030 512 4038 517 4046 500 4054 510 4061 525 4069 517 4077 522 4085 511 4092 523 4100 505 4108 528 4116 528 4124 514 4131 532 4139 524 4147 525 4155 513 4162 528 4170 519 4178 505 4186 524 4193 516 4201 529 4209 506 4217 517 4224 519 4232 540 4240 504 4248 516 4256 525 4263 499 4271 514 4279 531 4287 524 4294 505 4302 519 4310 527 4318 515 4325 515 4333 523 4341 505 4349 539 4356 530 4364 526 4372 509 4380 507 4388 515 4395 530 4403 526 4411 523 4419 508 4426 549 4434 517 4442 508 4450 543 4457 513 4465 501 4473 511 4481 518 4488 512 4496 509 4504 531 4512 531 4520 517 4527 492 4535 520 4543 530 4551 530 4558 505 4566 557 4574 533 4582 517 4589 541 4597 517 4605 525 4613 528 4621 517 4628 525 4636 509 4644 515 4652 528 4659 509 4667 505 4675 531 4683 521 4690 507 4698 535 4706 511 4714 496 4721 532 4729 522 4737 512 4745 512 4753 525 4760 497 4768 507 4776 521 4784 518 4791 528 4799 532 4807 526 4815 527 4822 560 4830 511 4838 503 4846 528 4853 546 4861 537 4869 518 4877 511 4885 512 4892 521 4900 516 4908 524 4916 529 4923 506 4931 543 4939 517 4947 534 4954 512 4962 508 4970 508 4978 514 4985 521 4993 524 5001 515 5009 511 5017 524 5024 511 5032 530 5040 514 5048 528 5055 526 5063 522 5071 515 5079 513 5086 514 5094 511 5102 513 5110 521 5118 527 5125 544 5133 525 5141 502 5149 520 5156 519 5164 533 5172 499 5180 503 5187 545 5195 526 5203 504 5211 513 5218 526 5226 494 5234 506 5242 497 5250 512 5257 511 5265 506 5273 542 5281 511 5288 521 5296 521 5304 523 5312 544 5319 522 5327 509 5335 513 5343 504 5350 497 5358 517 5366 528 5374 507 5382 527 5389 542 5397 515 5405 535 5413 504 5420 508 5428 520 5436 515 5444 527 5451 539 5459 503 5467 534 5475 514 5482 542 5490 509 5498 526 5506 511 5514 502 5521 511 5529 520 5537 530 5545 520 5552 530 5560 514 5568 513 5576 522 5583 534 5591 521 5599 504 5607 519 5615 528 5622 497 5630 510 5638 534 5646 512 5653 522 5661 556 5669 511 5677 522 5684 526 5692 516 5700 521 5708 512 5715 504 5723 512 5731 532 5739 544 5747 512 5754 533 5762 510 5770 518 5778 534 5785 523 5793 523 5801 510 5809 537 5816 523 5824 491 5832 519 5840 531 5847 516 5855 496 5863 500 5871 531 5879 544 5886 499 5894 515 5902 527 5910 530 5917 523 5925 510 5933 516 5941 536 5948 523 5956 534 5964 503 5972 519 5979 529 5987 536 5995 511 6003 506 6011 512 6018 522 6026 541 6034 532 6042 533 6049 517 6057 507 6065 542 6073 515 6080 524 6088 536 6096 515 6104 505 6112 541 6119 519 6127 518 6135 512 6143 527 6150 521 6158 513 6166 536 6174 521 6181 500 6189 521 6197 525 6205 515 6212 538 6220 506 6228 528 6236 523 6244 518 6251 526 6259 522 6267 569 6275 522 6282 511 6290 530 6298 515 6306 504 6313 511 6321 529 6329 522 6337 534 6344 522 6352 516 6360 529 6368 529 6376 516 6383 508 6391 537 6399 530 6407 499 6414 499 6422 525 6430 545 6438 513 6445 530 6453 551 6461 513 6469 528 6476 530 6484 527 6492 502 6500 543 6508 521 6515 514 6523 516 6531 520 6539 524 6546 518 6554 520 6562 516 6570 513 6577 530 6585 520 6593 503 6601 532 6608 520 6616 511 6624 501 6632 506 6640 517 6647 506 6655 498 6663 515 6671 517 6678 507 6686 518 6694 510 6702 509 6709 497 6717 527 6725 554 6733 523 6741 505 6748 511 6756 512 6764 498 6772 502 6779 521 6787 516 6795 509 6803 526 6810 519 6818 528 6826 527 6834 512 6841 541 6849 510 6857 532 6865 529 6873 523 6880 537 6888 511 6896 549 6904 543 6911 506 6919 515 6927 539 6935 520 6942 513 6950 529 6958 515 6966 521 6973 516 6981 519 6989 510 6997 523 7005 534 7012 519 7020 525 7028 500 7036 501 7043 534 7051 524 7059 526 7067 517 7074 544 7082 519 7090 507 7098 528 7105 509 7113 511 7121 525 7129 532 7137 521 7144 523 7152 527 7160 537 7168 521 7175 538 7183 517 7191 514 7199 525 7206 528 7214 518 7222 505 7230 521 7238 514 7245 537 7253 515 7261 516 7269 497 7276 530 7284 533 7292 523 7300 521 7307 523 7315 519 7323 509 7331 556 7338 532 7346 515 7354 526 7362 523 7370 543 7377 504 7385 508 7393 536 7401 507 7408 507 7416 500 7424 510 7432 501 7439 502 7447 492 7455 517 7463 491 7470 478 7478 468 7486 468 7494 464 7502 475 7509 446 7517 457 7525 456 7533 437 7540 453 7548 406 7556 435 7564 447 7571 410 7579 433 7587 439 7595 444 7602 436 7610 423 7618 461 7626 452 7634 457 7641 466 7649 472 7657 464 7665 475 7672 502 7680 487 7688 484 7696 508 7703 512 7711 500 7719 485 7727 522 7735 500 7742 513 7750 502 7758 523 7766 531 7773 511 7781 490 7789 501 7797 485 7804 503 7812 522 7820 535 7828 511 7835 506 7843 487 7851 503 7859 507 7867 506 7874 514 7882 509 7890 514 7898 524 7905 527 7913 487 7921 513 7929 526 7936 514 7944 501 7952 506 7960 490 7967 516 7975 518 7983 529 7991 503 7999 519 8006 516 8014 510 8022 503 8030 488 8037 509 8045 467 8053 467 8061 456 8068 401 8076 360 8084 370 8092 337 8099 319 8107 395 8115 379 8123 359 8131 416 8138 413 8146 408 8154 358 8162 399 8169 384 8177 362 8185 361 8193 396 8200 387 8208 374 8216 395 8224 414 8232 365 8239 407 8247 380 8255 356 8263 380 8270 372 8278 354 8286 344 8294 301 8301 344 8309 320 8317 246 8325 274 8332 278 8340 368 8348 358 8356 356 8364 360 8371 410 8379 351 8387 377 8395 375 8402 368 8410 414 8418 349 8426 376 8433 386 8441 401 8449 428 8457 389 8464 421 8472 411 8480 387 8488 410 8496 463 8503 394 8511 418 8519 395 8527 385 8534 438 8542 403 8550 409 8558 425 8565 377 8573 362 8581 383 8589 392 8596 399 8604 393 8612 416 8620 411 8628 366 8635 357 8643 416 8651 360 8659 379 8666 378 8674 373 8682 457 8690 372 8697 448 8705 377 8713 396 8721 368 8728 431 8736 418 8744 369 8752 355 8760 435 8767 450 8775 409 8783 376 8791 384 8798 413 8806 399 8814 387 8822 395 8829 405 8837 403 8845 403 8853 370 8861 384 8868 367 8876 394 8884 388 8892 400 8899 388 8907 377 8915 375 8923 394 8930 439 8938 377 8946 380 8954 429 8961 413 8969 385 8977 362 8985 402 8993 380 9000 371 9008 388 9016 403 9024 368 9031 386 9039 393 9047 397 9055 365 9062 347 9070 398 9078 343 9086 364 9093 392 9101 404 9109 413 9117 369 9125 358 9132 363 9140 360 9148 397 9156 357 9163 374 9171 356 9179 405 9187 358 9194 395 9202 349 9210 407 9218 375 9225 390 9233 374 9241 342 9249 359 9257 376 9264 345 9272 380 9280 375 9288 330 9295 363 9303 362 9311 354 9319 337 9326 340 9334 366 9342 302 9350 376 9358 350 9365 367 9373 341 9381 366 9389 368 9396 320 9404 334 9412 371 9420 385 9427 346 9435 298 9443 350 9451 329 9458 357 9466 318 9474 340 9482 338 9490 327 9497 311 9505 336 9513 309 9521 328 9528 319 9536 338 9544 325 9552 283 9559 303 9567 298 9575 289 9583 284 9590 293 9598 304 9606 287 9614 273 9622 287 9629 264 9637 279 9645 262 9653 245 9660 189 9668 186 9676 175 9684 185 9691 232 9699 261 9707 295 9715 285 9722 274 9730 291 9738 276 9746 264 9754 283 9761 301 9769 287 9777 276 9785 308 9792 319 9800 304 9808 313 9816 307 9823 299 9831 317 9839 317 9847 316 9855 309 9862 320 9870 322 9878 318 9886 299 9893 310 9901 310 9909 366 9917 297 9924 324 9932 312 9940 309 9948 326 9955 313 9963 343 9971 334 9979 335 9987 319 9994 370 10002 295 10010 298 10018 321 10025 332 10033 318 10041 372 10049 337 10056 317 10064 353 10072 306 10080 333 10087 314 10095 358 10103 323 10111 366 10119 352 10126 325 10134 362 10142 375 10150 377 10157 341 10165 353 10173 359 10181 326 10188 348 10196 384 10204 341 10212 338 10219 340 10227 371 10235 330 10243 351 10251 368 10258 373 10266 324 10274 366 10282 306 10289 413 10297 356 10305 350 10313 359 10320 350 10328 334 10336 326 10344 357 10352 364 10359 357 10367 362 10375 378 10383 348 10390 409 10398 359 10406 371 10414 325 10421 354 10429 340 10437 346 10445 377 10452 343 10460 343 10468 368 10476 358 10484 381 10491 348 10499 374 10507 352 10515 365 10522 377 10530 368 10538 360 10546 358 10553 341 10561 366 10569 311 10577 341 10584 328 10592 339 10600 377"/></g></g>
<g clip-path="url(#ctf)"><g transform="translate(1426 0) scale(0.1 1)"><polyline fill="none" stroke="#876657" stroke-width="1" vector-effect="non-scaling-stroke" shape-rendering="crispEdges" points="0 371 8 385 16 356 23 370 31 347 39 382 47 358 54 378 62 369 70 359 78 409 85 399 93 419 101 440 109 435 116 400 124 475 132 465 140 374 148 376 155 424 163 434 171 429 179 435 186 428 194 421 202 384 210 389 217 450 225 412 233 461 241 364 248 392 256 371 264 386 272 407 280 408 287 433 295 428 303 410 311 425 318 346 326 410 334 411 342 410 349 362 357 448 365 406 373 417 381 417 388 407 396 423 404 387 412 403 419 404 427 389 435 373 443 390 450 405 458 402 466 389 474 400 481 424 489 419 497 422 505 402 513 394 520 377 528 389 536 422 544 421 551 394 559 419 567 400 575 384 582 360 590 370 598 384 606 405 613 361 621 397 629 427 637 388 645 368 652 393 660 397 668 393 676 423 683 389 691 366 699 412 707 369 714 315 722 360 730 411 738 357 745 390 753 343 761 353 769 349 777 357 784 334 792 355 800 322 808 342 815 339 823 339 831 335 839 319 846 317 854 301 862 305 870 287 878 301 885 292 893 321 901 320 909 316 916 308 924 305 932 312 940 310 947 286 955 318 963 306 971 286 978 285 986 316 994 311 1002 311 1010 298 1017 306 1025 288 1033 291 1041 294 1048 265 1056 229 1064 207 1072 263 1079 282 1087 290 1095 307 1103 286 1110 280 1118 291 1126 324 1134 283 1142 320 1149 348 1157 344 1165 343 1173 351 1180 348 1188 323 1196 371 1204 388 1211 370 1219 352 1227 347 1235 344 1242 380 1250 381 1258 363 1266 325 1274 357 1281 392 1289 421 1297 385 1305 361 1312 380 1320 398 1328 395 1336 384 1343 396 1351 380 1359 356 1367 355 1375 294 1382 360 1390 362 1398 314 1406 336 1413 303 1421 305 1429 291 1437 280 1444 269 1452 274 1460 249 1468 243 1475 254 1483 246 1491 239 1499 241 1507 258 1514 249 1522 254 1530 251 1538 243 1545 282 1553 300 1561 338 1569 370 1576 345 1584 351 1592 397 1600 393 1607 386 1615 334 1623 434 1631 437 1639 390 1646 425 1654 374 1662 419 1670 422 1677 399 1685 419 1693 407 1701 417 1708 466 1716 422 1724 424 1732 387 1739 415 1747 431 1755 402 1763 358 1771 427 1778 459 1786 416 1794 381 1802 423 1809 377 1817 393 1825 401 1833 433 1840 392 1848 398 1856 439 1864 380 1872 402 1879 395 1887 391 1895 434 1903 429 1910 398 1918 421 1926 410 1934 386 1941 461 1949 378 1957 416 1965 389 1972 400 1980 374 1988 429 1996 422 2004 405 2011 412 2019 392 2027 375 2035 417 2042 409 2050 468 2058 446 2066 367 2073 404 2081 410 2089 452 2097 463 2104 382 2112 404 2120 340 2128 413 2136 394 2143 414 2151 426 2159 399 2167 379 2174 347 2182 398 2190 363 2198 389 2205 377 2213 403 2221 380 2229 396 2236 401 2244 375 2252 378 2260 360 2268 375 2275 330 2283 354 2291 346 2299 310 2306 311 2314 360 2322 308 2330 365 2337 360 2345 338 2353 376 2361 380 2368 368 2376 377 2384 382 2392 376 2400 346 2407 382 2415 384 2423 362 2431 403 2438 386 2446 375 2454 392 2462 395 2469 400 2477 398 2485 369 2493 427 2501 407 2508 357 2516 380 2524 388 2532 410 2539 417 2547 426 2555 417 2563 370 2570 398 2578 442 2586 444 2594 465 2601 493 2609 489 2617 501 2625 509 2633 515 2640 520 2648 502 2656 508 2664 519 2671 515 2679 498 2687 529 2695 526 2702 497 2710 510 2718 514 2726 508 2733 521 2741 499 2749 518 2757 535 2765 491 2772 497 2780 517 2788 500 2796 498 2803 514 2811 512 2819 511 2827 525 2834 516 2842 535 2850 514 2858 519 2865 520 2873 519 2881 510 2889 522 2897 511 2904 510 2912 500 2920 500 2928 509 2935 517 2943 509 2951 502 2959 513 2966 518 2974 502 2982 526 2990 522 2998 520 3005 504 3013 505 3021 505 3029 514 3036 527 3044 512 3052 518 3060 518 3067 492 3075 489 3083 515 3091 494 3098 509 3106 522 3114 511 3122 519 3130 518 3137 508 3145 518 3153 513 3161 510 3168 523 3176 511 3184 530 3192 528 3199 518 3207 506 3215 503 3223 508 3230 530 3238 525 3246 512 3254 525 3262 521 3269 509 3277 505 3285 517 3293 531 3300 504 3308 510 3316 508 3324 511 3331 530 3339 512 3347 503 3355 509 3362 503 3370 524 3378 505 3386 521 3394 513 3401 512 3409 516 3417 517 3425 506 3432 509 3440 508 3448 508 3456 508 3463 509 3471 490 3479 504 3487 508 3495 521 3502 512 3510 513 3518 530 3526 517 3533 520 3541 505 3549 515 3557 497 3564 512 3572 520 3580 507 3588 505 3595 519 3603 519 3611 518 3619 511 3627 501 3634 515 3642 514 3650 511 3658 507 3665 512 3673 515 3681 520 3689 503 3696 515 3704 514 3712 499 3720 513 3727 509 3735 525 3743 522 3751 505 3759 521 3766 517 3774 524 3782 510 3790 502 3797 508 3805 510 3813 507 3821 501 3828 502 3836 515 3844 507 3852 516 3859 516 3867 510 3875 520 3883 524 3891 510 3898 497 3906 507 3914 509 3922 511 3929 503 3937 501 3945 500 3953 507 3960 506 3968 508 3976 512 3984 502 3992 511 3999 497 4007 516 4015 518 4023 518 4030 500 4038 501 4046 519 4054 496 4061 514 4069 516 4077 518 4085 512 4092 515 4100 515 4108 508 4116 518 4124 519 4131 508 4139 501 4147 517 4155 506 4162 509 4170 505 4178 514 4186 510 4193 516 4201 516 4209 514 4217 517 4224 509 4232 509 4240 516 4248 513 4256 505 4263 520 4271 521 4279 524 4287 536 4294 525 4302 505 4310 495 4318 510 4325 522 4333 509 4341 504 4349 532 4356 521 4364 505 4372 517 4380 504 4388 504 4395 513 4403 513 4411 509 4419 504 4426 515 4434 510 4442 514 4450 506 4457 516 4465 520 4473 510 4481 511 4488 501 4496 514 4504 514 4512 490 4520 515 4527 511 4535 525 4543 500 4551 508 4558 506 4566 504 4574 523 4582 517 4589 508 4597 534 4605 508 4613 516 4621 504 4628 520 4636 518 4644 520 4652 508 4659 518 4667 495 4675 522 4683 497 4690 511 4698 514 4706 518 4714 503 4721 509 4729 515 4737 514 4745 518 4753 497 4760 508 4768 526 4776 513 4784 514 4791 509 4799 494 4807 522 4815 542 4822 522 4830 516 4838 525 4846 503 4853 518 4861 501 4869 522 4877 493 4885 506 4892 492 4900 515 4908 517 4916 511 4923 522 4931 518 4939 522 4947 521 4954 511 4962 510 4970 522 4978 508 4985 490 4993 497 5001 507 5009 516 5017 514 5024 518 5032 507 5040 498 5048 511 5055 501 5063 515 5071 512 5079 519 5086 532 5094 518 5102 522 5110 506 5118 496 5125 514 5133 508 5141 520 5149 518 5156 518 5164 503 5172 510 5180 512 5187 505 5195 509 5203 495 5211 494 5218 507 5226 520 5234 524 5242 523 5250 509 5257 498 5265 525 5273 518 5281 517 5288 516 5296 517 5304 500 5312 506 5319 509 5327 502 5335 512 5343 498 5350 515 5358 515 5366 513 5374 505 5382 498 5389 514 5397 500 5405 516 5413 507 5420 499 5428 502 5436 494 5444 497 5451 510 5459 503 5467 505 5475 509 5482 498 5490 516 5498 507 5506 506 5514 505 5521 513 5529 496 5537 515 5545 504 5552 507 5560 510 5568 512 5576 532 5583 509 5591 500 5599 518 5607 503 5615 517 5622 500 5630 510 5638 508 5646 505 5653 518 5661 517 5669 513 5677 509 5684 504 5692 509 5700 511 5708 496 5715 511 5723 510 5731 507 5739 516 5747 519 5754 493 5762 516 5770 506 5778 520 5785 508 5793 506 5801 513 5809 502 5816 511 5824 524 5832 498 5840 504 5847 516 5855 499 5863 514 5871 502 5879 518 5886 514 5894 515 5902 513 5910 522 5917 512 5925 517 5933 514 5941 513 5948 511 5956 521 5964 504 5972 498 5979 506 5987 514 5995 500 6003 505 6011 504 6018 504 6026 509 6034 511 6042 510 6049 502 6057 493 6065 510 6073 498 6080 508 6088 515 6096 494 6104 512 6112 508 6119 514 6127 507 6135 515 6143 509 6150 514 6158 516 6166 504 6174 516 6181 516 6189 512 6197 502 6205 522 6212 506 6220 505 6228 511 6236 511 6244 504 6251 513 6259 507 6267 516 6275 507 6282 509 6290 526 6298 508 6306 519 6313 507 6321 533 6329 501 6337 490 6344 501 6352 502 6360 512 6368 507 6376 521 6383 511 6391 506 6399 507 6407 509 6414 515 6422 496 6430 502 6438 503 6445 507 6453 512 6461 516 6469 505 6476 510 6484 493 6492 500 6500 510 6508 514 6515 515 6523 513 6531 502 6539 516 6546 507 6554 524 6562 493 6570 527 6577 505 6585 511 6593 517 6601 496 6608 513 6616 509 6624 514 6632 532 6640 505 6647 514 6655 513 6663 503 6671 513 6678 515 6686 499 6694 505 6702 508 6709 521 6717 515 6725 502 6733 506 6741 505 6748 504 6756 514 6764 510 6772 505 6779 495 6787 515 6795 515 6803 502 6810 512 6818 507 6826 503 6834 513 6841 510 6849 507 6857 504 6865 504 6873 511 6880 515 6888 500 6896 510 6904 496 6911 498 6919 511 6927 502 6935 494 6942 515 6950 484 6958 502 6966 506 6973 505 6981 507 6989 516 6997 503 7005 510 7012 505 7020 505 7028 498 7036 510 7043 501 7051 519 7059 514 7067 517 7074 505 7082 504 7090 495 7098 490 7105 499 7113 501 7121 517 7129 508 7137 512 7144 494 7152 499 7160 502 7168 505 7175 502 7183 521 7191 523 7199 514 7206 490 7214 505 7222 493 7230 507 7238 488 7245 506 7253 503 7261 514 7269 505 7276 503 7284 509 7292 492 7300 516 7307 512 7315 495 7323 518 7331 515 7338 495 7346 504 7354 513 7362 496 7370 507 7377 513 7385 500 7393 529 7401 509 7408 502 7416 520 7424 507 7432 505 7439 490 7447 516 7455 511 7463 522 7470 500 7478 498 7486 504 7494 494 7502 495 7509 504 7517 522 7525 503 7533 512 7540 495 7548 510 7556 506 7564 507 7571 525 7579 492 7587 505 7595 509 7602 494 7610 511 7618 509 7626 492 7634 511 7641 494 7649 498 7657 490 7665 510 7672 506 7680 508 7688 519 7696 513 7703 505 7711 514 7719 504 7727 525 7735 489 7742 510 7750 503 7758 506 7766 520 7773 501 7781 500 7789 514 7797 511 7804 499 7812 496 7820 500 7828 500 7835 510 7843 504 7851 487 7859 501 7867 500 7874 494 7882 485 7890 514 7898 509 7905 511 7913 506 7921 487 7929 504 7936 497 7944 509 7952 504 7960 503 7967 507 7975 496 7983 497 7991 507 7999 514 8006 504 8014 501 8022 490 8030 499 8037 501 8045 488 8053 457 8061 433 8068 439 8076 394 8084 375 8092 399 8099 419 8107 394 8115 365 8123 395 8131 395 8138 414 8146 383 8154 365 8162 356 8169 429 8177 429 8185 373 8193 378 8200 381 8208 387 8216 359 8224 355 8232 383 8239 339 8247 364 8255 404 8263 392 8270 398 8278 369 8286 351 8294 357 8301 342 8309 321 8317 275 8325 293 8332 293 8340 323 8348 366 8356 386 8364 366 8371 395 8379 334 8387 427 8395 393 8402 401 8410 386 8418 396 8426 409 8433 409 8441 420 8449 385 8457 403 8464 420 8472 451 8480 445 8488 400 8496 437 8503 398 8511 423 8519 443 8527 422 8534 358 8542 427 8550 386 8558 399 8565 474 8573 419 8581 432 8589 413 8596 454 8604 415 8612 427 8620 415 8628 386 8635 408 8643 415 8651 430 8659 421 8666 431 8674 373 8682 439 8690 387 8697 409 8705 400 8713 421 8721 451 8728 449 8736 438 8744 425 8752 363 8760 418 8767 397 8775 410 8783 414 8791 420 8798 381 8806 441 8814 440 8822 407 8829 405 8837 398 8845 420 8853 409 8861 395 8868 426 8876 356 8884 400 8892 387 8899 416 8907 445 8915 426 8923 413 8930 402 8938 406 8946 425 8954 411 8961 393 8969 397 8977 412 8985 407 8993 387 9000 405 9008 424 9016 419 9024 425 9031 362 9039 388 9047 401 9055 388 9062 409 9070 377 9078 403 9086 379 9093 389 9101 424 9109 424 9117 398 9125 397 9132 393 9140 402 9148 390 9156 431 9163 395 9171 386 9179 399 9187 385 9194 383 9202 383 9210 381 9218 368 9225 383 9233 366 9241 349 9249 335 9257 375 9264 359 9272 353 9280 401 9288 363 9295 369 9303 394 9311 373 9319 363 9326 359 9334 393 9342 363 9350 381 9358 405 9365 361 9373 313 9381 395 9389 347 9396 340 9404 368 9412 364 9420 367 9427 349 9435 326 9443 338 9451 333 9458 364 9466 342 9474 345 9482 346 9490 324 9497 327 9505 323 9513 343 9521 313 9528 355 9536 355 9544 308 9552 321 9559 335 9567 323 9575 308 9583 303 9590 304 9598 283 9606 278 9614 306 9622 288 9629 302 9637 262 9645 278 9653 268 9660 210 9668 183 9676 178 9684 237 9691 243 9699 250 9707 278 9715 298 9722 290 9730 300 9738 286 9746 284 9754 316 9761 310 9769 318 9777 299 9785 305 9792 309 9800 317 9808 322 9816 281 9823 307 9831 295 9839 298 9847 304 9855 325 9862 312 9870 322 9878 290 9886 315 9893 291 9901 321 9909 328 9917 312 9924 318 9932 314 9940 340 9948 335 9955 310 9963 344 9971 318 9979 336 9987 325 9994 381 10002 375 10010 340 10018 343 10025 370 10033 365 10041 375 10049 349 10056 340 10064 343 10072 362 10080 318 10087 375 10095 338 10103 327 10111 318 10119 352 10126 316 10134 325 10142 370 10150 338 10157 379 10165 371 10173 353 10181 340 10188 323 10196 343 10204 354 10212 360 10219 333 10227 387 10235 340 10243 363 10251 373 10258 332 10266 394 10274 358 10282 365 10289 375 10297 352 10305 372 10313 358 10320 410 10328 386 10336 350 10344 376 10352 349 10359 386 10367 335 10375 365 10383 322 10390 339 10398 368 10406 409 10414 360 10421 389 10429 366 10437 349 10445 385 10452 357 10460 348 10468 354 10476 355 10484 369 10491 386 10499 388 10507 328 10515 373 10522 374 10530 358 10538 344 10546 373 10553 370 10561 355 10569 343 10577 367 10584 332 10592 381 10600 358"/></g></g>
<g clip-path="url(#ctf)"><g transform="translate(1426 0) scale(0.1 1)"><polyline fill="none" stroke="#ff00ff" stroke-width="1" vector-effect="non-scaling-stroke" shape-rendering="crispEdges" points="0 350 8 342 16 375 23 359 31 363 39 374 47 408 54 432 62 396 70 411 78 388 85 399 93 430 101 391 109 369 116 442 124 361 132 389 140 391 148 396 155 440 163 459 171 396 179 424 186 435 194 427 202 383 210 387 217 412 225 424 233 383 241 404 248 446 256 439 264 442 272 427 280 461 287 378 295 421 303 446 311 363 318 421 326 422 334 425 342 427 349 444 357 423 365 431 373 403 381 447 388 374 396 440 404 428 412 433 419 385 427 439 435 444 443 435 450 384 458 399 466 402 474 404 481 406 489 398 497 431 505 327 513 373 520 438 528 401 536 406 544 403 551 396 559 397 567 393 575 380 582 398 590 365 598 429 606 419 613 362 621 400 629 421 637 374 645 400 652 417 660 409 668 403 676 388 683 367 691 396 699 373 707 376 714 387 722 368 730 365 738 380 745 393 753 372 761 376 769 396 777 361 784 364 792 373 800 364 808 332 815 317 823 326 831 334 839 334 846 304 854 315 862 310 870 306 878 316 885 331 893 329 901 317 909 310 916 305 924 322 932 298 940 301 947 317 955 300 963 335 971 324 978 309 986 303 994 307 1002 308 1010 303 1017 295 1025 296 1033 309 1041 271 1048 283 1056 243 1064 218 1072 280 1079 303 1087 317 1095 301 1103 326 1110 300 1118 313 1126 315 1134 307 1142 318 1149 306 1157 348 1165 356 1173 334 1180 355 1188 356 1196 371 1204 373 1211 369 1219 342 1227 367 1235 347 1242 330 1250 379 1258 357 1266 362 1274 396 1281 387 1289 382 1297 384 1305 380 1312 395 1320 351 1328 365 1336 384 1343 356 1351 356 1359 349 1367 383 1375 336 1382 362 1390 328 1398 327 1406 314 1413 349 1421 301 1429 279 1437 306 1444 262 1452 254 1460 259 1468 248 1475 262 1483 250 1491 255 1499 277 1507 271 1514 255 1522 259 1530 247 1538 254 1545 271 1553 312 1561 345 1569 379 1576 365 1584 345 1592 365 1600 398 1607 417 1615 371 1623 374 1631 395 1639 392 1646 402 1654 396 1662 392 1670 420 1677 408 1685 405 1693 398 1701 402 1708 336 1716 438 1724 466 1732 434 1739 451 1747 395 1755 416 1763 423 1771 422 1778 447 1786 403 1794 432 1802 408 1809 427 1817 338 1825 419 1833 405 1840 406 1848 393 1856 421 1864 417 1872 408 1879 434 1887 433 1895 407 1903 379 1910 426 1918 441 1926 371 1934 421 1941 405 1949 451 1957 393 1965 436 1972 401 1980 366 1988 415 1996 404 2004 396 2011 443 2019 427 2027 415 2035 387 2042 412 2050 406 2058 398 2066 429 2073 431 2081 421 2089 431 2097 455 2104 441 2112 441 2120 416 2128 445 2136 365 2143 341 2151 395 2159 404 2167 326 2174 392 2182 395 2190 371 2198 385 2205 371 2213 378 2221 377 2229 375 2236 365 2244 394 2252 383 2260 388 2268 376 2275 369 2283 328 2291 341 2299 333 2306 365 2314 323 2322 352 2330 368 2337 389 2345 369 2353 355 2361 387 2368 366 2376 389 2384 396 2392 377 2400 405 2407 361 2415 438 2423 432 2431 410 2438 426 2446 374 2454 395 2462 418 2469 413 2477 375 2485 385 2493 411 2501 371 2508 404 2516 400 2524 370 2532 409 2539 418 2547 428 2555 446 2563 447 2570 420 2578 421 2586 434 2594 456 2601 484 2609 478 2617 479 2625 492 2633 510 2640 500 2648 502 2656 505 2664 508 2671 490 2679 499 2687 495 2695 494 2702 501 2710 495 2718 494 2726 494 2733 501 2741 483 2749 496 2757 493 2765 495 2772 495 2780 506 2788 508 2796 499 2803 499 2811 498 2819 499 2827 500 2834 496 2842 496 2850 502 2858 502 2865 486 2873 497 2881 504 2889 499 2897 494 2904 494 2912 504 2920 501 2928 491 2935 487 2943 487 2951 491 2959 494 2966 505 2974 508 2982 498 2990 503 2998 496 3005 508 3013 495 3021 485 3029 497 3036 490 3044 503 3052 500 3060 514 3067 495 3075 505 3083 495 3091 502 3098 497 3106 506 3114 488 3122 501 3130 475 3137 485 3145 496 3153 500 3161 488 3168 491 3176 488 3184 501 3192 486 3199 489 3207 504 3215 509 3223 494 3230 499 3238 493 3246 505 3254 493 3262 480 3269 501 3277 499 3285 492 3293 502 3300 498 3308 500 3316 496 3324 491 3331 498 3339 497 3347 496 3355 484 3362 496 3370 511 3378 502 3386 504 3394 496 3401 491 3409 497 3417 496 3425 491 3432 497 3440 488 3448 487 3456 508 3463 504 3471 489 3479 502 3487 505 3495 496 3502 496 3510 497 3518 494 3526 483 3533 500 3541 496 3549 505 3557 492 3564 499 3572 493 3580 501 3588 499 3595 494 3603 499 3611 495 3619 508 3627 494 3634 495 3642 494 3650 495 3658 497 3665 502 3673 502 3681 491 3689 495 3696 496 3704 500 3712 506 3720 480 3727 491 3735 497 3743 497 3751 492 3759 502 3766 503 3774 497 3782 505 3790 495 3797 491 3805 502 3813 489 3821 490 3828 490 3836 493 3844 480 3852 493 3859 493 3867 493 3875 500 3883 498 3891 498 3898 481 3906 497 3914 495 3922 501 3929 511 3937 496 3945 495 3953 493 3960 498 3968 502 3976 493 3984 497 3992 497 3999 501 4007 495 4015 504 4023 492 4030 488 4038 490 4046 493 4054 489 4061 488 4069 498 4077 491 4085 494 4092 500 4100 494 4108 497 4116 492 4124 502 4131 502 4139 495 4147 499 4155 485 4162 508 4170 489 4178 485 4186 489 4193 491 4201 491 4209 500 4217 497 4224 491 4232 492 4240 496 4248 494 4256 497 4263 491 4271 490 4279 495 4287 484 4294 488 4302 498 4310 491 4318 491 4325 499 4333 485 4341 492 4349 495 4356 492 4364 502 4372 495 4380 490 4388 495 4395 509 4403 499 4411 504 4419 488 4426 505 4434 494 4442 490 4450 501 4457 488 4465 498 4473 507 4481 501 4488 502 4496 496 4504 493 4512 499 4520 501 4527 487 4535 503 4543 492 4551 502 4558 500 4566 499 4574 492 4582 496 4589 493 4597 498 4605 480 4613 492 4621 489 4628 493 4636 494 4644 483 4652 482 4659 494 4667 484 4675 496 4683 506 4690 488 4698 490 4706 489 4714 499 4721 505 4729 491 4737 504 4745 483 4753 492 4760 498 4768 497 4776 496 4784 503 4791 497 4799 503 4807 492 4815 503 4822 497 4830 496 4838 496 4846 491 4853 487 4861 484 4869 508 4877 503 4885 501 4892 486 4900 499 4908 498 4916 503 4923 491 4931 500 4939 500 4947 489 4954 494 4962 500 4970 496 4978 486 4985 503 4993 505 5001 500 5009 501 5017 499 5024 494 5032 496 5040 482 5048 506 5055 495 5063 494 5071 499 5079 496 5086 500 5094 498 5102 482 5110 489 5118 504 5125 490 5133 497 5141 503 5149 501 5156 495 5164 502 5172 495 5180 496 5187 491 5195 489 5203 499 5211 494 5218 506 5226 483 5234 485 5242 499 5250 493 5257 496 5265 498 5273 498 5281 495 5288 493 5296 494 5304 501 5312 507 5319 498 5327 498 5335 482 5343 499 5350 499 5358 502 5366 493 5374 505 5382 487 5389 491 5397 499 5405 494 5413 489 5420 495 5428 491 5436 498 5444 495 5451 494 5459 498 5467 494 5475 487 5482 502 5490 497 5498 485 5506 505 5514 496 5521 492 5529 492 5537 495 5545 485 5552 486 5560 506 5568 492 5576 499 5583 500 5591 495 5599 500 5607 489 5615 487 5622 502 5630 501 5638 497 5646 490 5653 496 5661 503 5669 489 5677 491 5684 480 5692 491 5700 498 5708 505 5715 490 5723 488 5731 496 5739 501 5747 480 5754 502 5762 497 5770 493 5778 501 5785 490 5793 489 5801 501 5809 492 5816 495 5824 487 5832 503 5840 495 5847 493 5855 489 5863 489 5871 501 5879 495 5886 492 5894 483 5902 490 5910 489 5917 504 5925 486 5933 491 5941 485 5948 498 5956 492 5964 494 5972 493 5979 492 5987 491 5995 491 6003 494 6011 492 6018 507 6026 499 6034 492 6042 497 6049 493 6057 506 6065 497 6073 507 6080 479 6088 503 6096 500 6104 488 6112 490 6119 494 6127 498 6135 495 6143 498 6150 489 6158 499 6166 497 6174 506 6181 495 6189 509 6197 503 6205 500 6212 493 6220 492 6228 493 6236 493 6244 497 6251 495 6259 497 6267 484 6275 498 6282 491 6290 497 6298 488 6306 491 6313 500 6321 490 6329 497 6337 506 6344 493 6352 482 6360 494 6368 491 6376 495 6383 501 6391 494 6399 490 6407 493 6414 508 6422 489 6430 493 6438 489 6445 499 6453 486 6461 503 6469 497 6476 492 6484 486 6492 494 6500 496 6508 493 6515 497 6523 503 6531 495 6539 490 6546 489 6554 498 6562 501 6570 501 6577 485 6585 496 6593 493 6601 501 6608 489 6616 492 6624 502 6632 490 6640 499 6647 487 6655 496 6663 491 6671 494 6678 501 6686 494 6694 499 6702 496 6709 494 6717 500 6725 487 6733 499 6741 498 6748 487 6756 492 6764 489 6772 499 6779 494 6787 492 6795 500 6803 497 6810 501 6818 488 6826 492 6834 497 6841 503 6849 491 6857 497 6865 497 6873 504 6880 491 6888 499 6896 497 6904 490 6911 487 6919 493 6927 492 6935 493 6942 500 6950 493 6958 492 6966 485 6973 486 6981 494 6989 494 6997 488 7005 502 7012 498 7020 490 7028 482 7036 496 7043 485 7051 494 7059 501 7067 499 7074 493 7082 497 7090 492 7098 497 7105 484 7113 485 7121 493 7129 494 7137 495 7144 489 7152 499 7160 502 7168 499 7175 497 7183 496 7191 496 7199 492 7206 497 7214 492 7222 487 7230 500 7238 500 7245 487 7253 492 7261 500 7269 497 7276 498 7284 485 7292 490 7300 496 7307 491 7315 496 7323 493 7331 492 7338 494 7346 502 7354 490 7362 483 7370 499 7377 488 7385 494 7393 488 7401 495 7408 491 7416 488 7424 506 7432 497 7439 498 7447 492 7455 497 7463 493 7470 482 7478 491 7486 497 7494 496 7502 495 7509 495 7517 498 7525 497 7533 501 7540 498 7548 487 7556 497 7564 493 7571 482 7579 491 7587 507 7595 496 7602 494 7610 490 7618 497 7626 494 7634 475 7641 499 7649 495 7657 492 7665 488 7672 489 7680 499 7688 492 7696 491 7703 490 7711 495 7719 495 7727 493 7735 493 7742 494 7750 492 7758 491 7766 486 7773 490 7781 491 7789 495 7797 490 7804 495 7812 495 7820 502 7828 495 7835 496 7843 493 7851 488 7859 479 7867 502 7874 500 7882 485 7890 492 7898 491 7905 487 7913 495 7921 492 7929 495 7936 492 7944 486 7952 490 7960 481 7967 495 7975 495 7983 485 7991 492 7999 483 8006 484 8014 501 8022 485 8030 478 8037 473 8045 469 8053 430 8061 444 8068 408 8076 415 8084 372 8092 391 8099 418 8107 394 8115 379 8123 361 8131 383 8138 402 8146 398 8154 374 8162 396 8169 395 8177 394 8185 398 8193 373 8200 379 8208 376 8216 369 8224 384 8232 380 8239 321 8247 354 8255 381 8263 362 8270 357 8278 386 8286 362 8294 319 8301 351 8309 309 8317 271 8325 266 8332 326 8340 341 8348 347 8356 377 8364 363 8371 399 8379 355 8387 376 8395 372 8402 378 8410 357 8418 370 8426 392 8433 397 8441 434 8449 367 8457 461 8464 407 8472 470 8480 435 8488 454 8496 417 8503 393 8511 439 8519 416 8527 369 8534 438 8542 446 8550 415 8558 421 8565 370 8573 404 8581 414 8589 438 8596 433 8604 364 8612 379 8620 452 8628 414 8635 414 8643 404 8651 423 8659 411 8666 367 8674 399 8682 406 8690 396 8697 414 8705 404 8713 416 8721 434 8728 440 8736 415 8744 393 8752 435 8760 380 8767 425 8775 458 8783 401 8791 455 8798 452 8806 361 8814 409 8822 378 8829 399 8837 408 8845 409 8853 410 8861 395 8868 380 8876 384 8884 438 8892 399 8899 390 8907 409 8915 410 8923 446 8930 407 8938 419 8946 406 8954 403 8961 414 8969 395 8977 400 8985 392 8993 424 9000 410 9008 405 9016 401 9024 427 9031 398 9039 411 9047 407 9055 371 9062 372 9070 379 9078 429 9086 380 9093 374 9101 357 9109 433 9117 380 9125 443 9132 393 9140 363 9148 397 9156 422 9163 369 9171 377 9179 400 9187 403 9194 407 9202 380 9210 376 9218 409 9225 370 9233 402 9241 430 9249 349 9257 365 9264 376 9272 390 9280 407 9288 366 9295 377 9303 398 9311 389 9319 367 9326 380 9334 408 9342 334 9350 358 9358 347 9365 392 9373 362 9381 340 9389 360 9396 371 9404 345 9412 375 9420 371 9427 336 9435 320 9443 346 9451 330 9458 382 9466 311 9474 341 9482 342 9490 315 9497 365 9505 339 9513 313 9521 340 9528 337 9536 325 9544 355 9552 305 9559 318 9567 310 9575 316 9583 316 9590 315 9598 308 9606 302 9614 287 9622 283 9629 282 9637 269 9645 273 9653 251 9660 235 9668 184 9676 185 9684 213 9691 250 9699 273 9707 281 9715 291 9722 272 9730 293 9738 281 9746 292 9754 309 9761 286 9769 313 9777 288 9785 313 9792 291 9800 334 9808 329 9816 314 9823 316 9831 320 9839 326 9847 294 9855 312 9862 311 9870 332 9878 323 9886 313 9893 324 9901 340 9909 334 9917 314 9924 326 9932 360 9940 330 9948 317 9955 359 9963 363 9971 315 9979 342 9987 350 9994 330 10002 363 10010 356 10018 351 10025 330 10033 384 10041 338 10049 359 10056 353 10064 333 10072 324 10080 367 10087 416 10095 352 10103 355 10111 354 10119 357 10126 345 10134 378 10142 371 10150 349 10157 361 10165 353 10173 340 10181 338 10188 371 10196 369 10204 338 10212 365 10219 317 10227 364 10235 372 10243 315 10251 361 10258 353 10266 378 10274 343 10282 327 10289 348 10297 382 10305 353 10313 358 10320 334 10328 356 10336 375 10344 359 10352 383 10359 368 10367 372 10375 353 10383 373 10390 334 10398 378 10406 377 10414 343 10421 379 10429 399 10437 360 10445 351 10452 357 10460 364 10468 392 10476 351 10484 362 10491 337 10499 380 10507 369 10515 356 10522 372 10530 366 10538 384 10546 363 10553 374 10561 378 10569 375 10577 373 10584 397 10592 368 10600 391"/></g></g>
<g clip-path="url(#ctf)"><g transform="translate(1426 0) scale(0.1 1)"><polyline fill="none" stroke="#00ffff" stroke-width="1" vector-effect="non-scaling-stroke" shape-rendering="crispEdges" points="0 327 8 330 16 303 23 299 31 301 39 331 47 350 54 367 62 355 70 352 78 374 85 367 93 372 101 360 109 372 116 346 124 362 132 373 140 372 148 366 155 361 163 372 171 357 179 389 186 385 194 380 202 353 210 369 217 388 225 356 233 361 241 371 248 368 256 364 264 388 272 363 280 391 287 357 295 369 303 375 311 383 318 365 326 372 334 366 342 386 349 376 357 367 365 368 373 372 381 355 388 363 396 345 404 371 412 357 419 375 427 369 435 383 443 387 450 342 458 353 466 351 474 363 481 366 489 333 497 338 505 381 513 349 520 352 528 353 536 369 544 362 551 351 559 372 567 379 575 358 582 372 590 327 598 356 606 367 613 348 621 356 629 369 637 354 645 364 652 335 660 342 668 365 676 368 683 351 691 343 699 317 707 356 714 347 722 343 730 343 738 344 745 347 753 340 761 353 769 325 777 321 784 315 792 327 800 315 808 314 815 306 823 316 831 290 839 309 846 302 854 299 862 299 870 288 878 283 885 286 893 288 901 287 909 290 916 284 924 283 932 283 940 286 947 286 955 275 963 281 971 275 978 283 986 265 994 279 1002 275 1010 275 1017 278 1025 273 1033 273 1041 259 1048 245 1056 200 1064 194 1072 244 1079 259 1087 278 1095 274 1103 274 1110 269 1118 277 1126 282 1134 281 1142 309 1149 294 1157 285 1165 310 1173 315 1180 321 1188 307 1196 321 1204 312 1211 305 1219 328 1227 332 1235 318 1242 317 1250 330 1258 329 1266 335 1274 347 1281 348 1289 348 1297 341 1305 351 1312 338 1320 367 1328 338 1336 343 1343 337 1351 332 1359 332 1367 327 1375 308 1382 326 1390 331 1398 319 1406 286 1413 281 1421 290 1429 265 1437 265 1444 249 1452 240 1460 238 1468 226 1475 247 1483 219 1491 225 1499 227 1507 234 1514 227 1522 254 1530 237 1538 231 1545 252 1553 299 1561 315 1569 322 1576 324 1584 319 1592 332 1600 324 1607 338 1615 364 1623 352 1631 369 1639 342 1646 361 1654 349 1662 361 1670 369 1677 362 1685 346 1693 353 1701 376 1708 352 1716 354 1724 381 1732 374 1739 381 1747 358 1755 355 1763 372 1771 375 1778 370 1786 358 1794 376 1802 358 1809 381 1817 362 1825 369 1833 365 1840 367 1848 348 1856 358 1864 359 1872 368 1879 369 1887 379 1895 373 1903 361 1910 392 1918 356 1926 375 1934 371 1941 353 1949 350 1957 367 1965 390 1972 334 1980 374 1988 342 1996 363 2004 385 2011 382 2019 367 2027 351 2035 383 2042 362 2050 379 2058 382 2066 379 2073 385 2081 368 2089 362 2097 389 2104 369 2112 374 2120 383 2128 383 2136 343 2143 355 2151 349 2159 364 2167 372 2174 349 2182 370 2190 346 2198 355 2205 340 2213 342 2221 340 2229 358 2236 344 2244 343 2252 336 2260 335 2268 317 2275 309 2283 315 2291 289 2299 279 2306 290 2314 317 2322 313 2330 333 2337 316 2345 327 2353 319 2361 343 2368 331 2376 342 2384 344 2392 342 2400 339 2407 355 2415 359 2423 353 2431 349 2438 376 2446 372 2454 353 2462 346 2469 358 2477 347 2485 362 2493 356 2501 340 2508 342 2516 359 2524 368 2532 365 2539 386 2547 386 2555 388 2563 366 2570 355 2578 408 2586 398 2594 412 2601 447 2609 462 2617 472 2625 486 2633 481 2640 484 2648 487 2656 486 2664 495 2671 490 2679 491 2687 495 2695 482 2702 492 2710 495 2718 491 2726 499 2733 484 2741 491 2749 490 2757 497 2765 488 2772 485 2780 490 2788 481 2796 479 2803 488 2811 477 2819 482 2827 492 2834 488 2842 487 2850 479 2858 487 2865 485 2873 493 2881 485 2889 498 2897 487 2904 489 2912 477 2920 480 2928 480 2935 481 2943 491 2951 488 2959 492 2966 484 2974 480 2982 489 2990 483 2998 488 3005 491 3013 481 3021 476 3029 485 3036 484 3044 491 3052 490 3060 489 3067 490 3075 481 3083 485 3091 487 3098 494 3106 480 3114 481 3122 484 3130 481 3137 483 3145 488 3153 479 3161 490 3168 494 3176 483 3184 485 3192 487 3199 482 3207 479 3215 495 3223 493 3230 495 3238 502 3246 489 3254 490 3262 486 3269 493 3277 481 3285 498 3293 493 3300 488 3308 488 3316 484 3324 487 3331 485 3339 490 3347 482 3355 488 3362 494 3370 488 3378 486 3386 487 3394 486 3401 483 3409 489 3417 489 3425 484 3432 487 3440 488 3448 482 3456 489 3463 476 3471 486 3479 482 3487 491 3495 484 3502 486 3510 492 3518 478 3526 489 3533 488 3541 493 3549 489 3557 488 3564 483 3572 490 3580 479 3588 479 3595 491 3603 478 3611 483 3619 484 3627 480 3634 491 3642 493 3650 495 3658 487 3665 480 3673 482 3681 490 3689 481 3696 485 3704 484 3712 486 3720 490 3727 481 3735 485 3743 487 3751 489 3759 486 3766 491 3774 486 3782 495 3790 479 3797 494 3805 484 3813 489 3821 484 3828 481 3836 482 3844 486 3852 484 3859 481 3867 487 3875 495 3883 487 3891 486 3898 479 3906 480 3914 485 3922 490 3929 480 3937 479 3945 493 3953 476 3960 480 3968 489 3976 489 3984 489 3992 491 3999 491 4007 492 4015 483 4023 482 4030 483 4038 486 4046 488 4054 480 4061 481 4069 491 4077 482 4085 489 4092 489 4100 483 4108 485 4116 487 4124 490 4131 490 4139 480 4147 482 4155 483 4162 478 4170 493 4178 480 4186 483 4193 496 4201 481 4209 479 4217 482 4224 487 4232 489 4240 484 4248 477 4256 488 4263 487 4271 482 4279 481 4287 477 4294 483 4302 482 4310 484 4318 488 4325 491 4333 489 4341 486 4349 483 4356 496 4364 482 4372 486 4380 496 4388 478 4395 491 4403 486 4411 487 4419 475 4426 482 4434 499 4442 486 4450 495 4457 482 4465 486 4473 481 4481 487 4488 486 4496 486 4504 490 4512 477 4520 476 4527 493 4535 484 4543 482 4551 491 4558 495 4566 489 4574 487 4582 486 4589 482 4597 478 4605 485 4613 480 4621 480 4628 484 4636 496 4644 484 4652 481 4659 484 4667 486 4675 483 4683 479 4690 490 4698 487 4706 483 4714 489 4721 480 4729 480 4737 482 4745 486 4753 489 4760 484 4768 488 4776 488 4784 490 4791 481 4799 489 4807 474 4815 483 4822 485 4830 485 4838 488 4846 475 4853 485 4861 489 4869 484 4877 490 4885 489 4892 481 4900 479 4908 485 4916 480 4923 486 4931 496 4939 491 4947 485 4954 483 4962 482 4970 480 4978 485 4985 486 4993 500 5001 485 5009 476 5017 493 5024 481 5032 491 5040 488 5048 485 5055 481 5063 480 5071 485 5079 478 5086 486 5094 480 5102 483 5110 483 5118 488 5125 488 5133 489 5141 487 5149 484 5156 486 5164 489 5172 486 5180 489 5187 473 5195 483 5203 486 5211 491 5218 483 5226 482 5234 487 5242 491 5250 484 5257 484 5265 486 5273 480 5281 481 5288 485 5296 483 5304 474 5312 493 5319 486 5327 487 5335 484 5343 483 5350 480 5358 478 5366 489 5374 484 5382 488 5389 482 5397 487 5405 489 5413 488 5420 488 5428 481 5436 488 5444 486 5451 480 5459 485 5467 473 5475 483 5482 482 5490 477 5498 486 5506 481 5514 481 5521 480 5529 479 5537 482 5545 486 5552 481 5560 482 5568 476 5576 489 5583 482 5591 483 5599 474 5607 477 5615 478 5622 485 5630 481 5638 472 5646 483 5653 482 5661 487 5669 482 5677 483 5684 490 5692 476 5700 482 5708 484 5715 494 5723 481 5731 481 5739 482 5747 479 5754 481 5762 479 5770 494 5778 481 5785 484 5793 477 5801 490 5809 485 5816 485 5824 481 5832 489 5840 483 5847 481 5855 486 5863 489 5871 482 5879 489 5886 489 5894 476 5902 486 5910 480 5917 488 5925 483 5933 482 5941 483 5948 485 5956 488 5964 484 5972 483 5979 482 5987 486 5995 479 6003 481 6011 487 6018 483 6026 487 6034 481 6042 487 6049 487 6057 483 6065 484 6073 483 6080 484 6088 485 6096 491 6104 483 6112 491 6119 481 6127 488 6135 479 6143 481 6150 482 6158 478 6166 488 6174 490 6181 489 6189 476 6197 484 6205 486 6212 474 6220 490 6228 491 6236 493 6244 483 6251 486 6259 483 6267 478 6275 483 6282 481 6290 479 6298 486 6306 482 6313 485 6321 486 6329 484 6337 489 6344 487 6352 484 6360 484 6368 485 6376 487 6383 482 6391 484 6399 482 6407 484 6414 479 6422 476 6430 473 6438 484 6445 485 6453 482 6461 490 6469 481 6476 482 6484 494 6492 485 6500 486 6508 486 6515 480 6523 483 6531 488 6539 488 6546 484 6554 478 6562 481 6570 487 6577 486 6585 478 6593 482 6601 483 6608 478 6616 488 6624 482 6632 483 6640 470 6647 485 6655 488 6663 488 6671 481 6678 483 6686 478 6694 486 6702 480 6709 476 6717 481 6725 489 6733 483 6741 489 6748 480 6756 479 6764 473 6772 477 6779 481 6787 486 6795 482 6803 477 6810 486 6818 482 6826 491 6834 489 6841 490 6849 479 6857 478 6865 479 6873 486 6880 479 6888 486 6896 489 6904 480 6911 484 6919 493 6927 487 6935 483 6942 483 6950 481 6958 481 6966 475 6973 481 6981 480 6989 487 6997 484 7005 484 7012 493 7020 489 7028 482 7036 483 7043 484 7051 484 7059 488 7067 487 7074 488 7082 486 7090 478 7098 479 7105 481 7113 479 7121 476 7129 494 7137 488 7144 479 7152 474 7160 485 7168 482 7175 490 7183 482 7191 479 7199 484 7206 488 7214 483 7222 484 7230 481 7238 489 7245 483 7253 483 7261 483 7269 487 7276 485 7284 485 7292 485 7300 484 7307 477 7315 480 7323 481 7331 480 7338 484 7346 484 7354 485 7362 482 7370 482 7377 469 7385 478 7393 476 7401 477 7408 488 7416 474 7424 487 7432 485 7439 484 7447 481 7455 488 7463 482 7470 477 7478 472 7486 479 7494 486 7502 480 7509 474 7517 479 7525 481 7533 480 7540 475 7548 484 7556 486 7564 473 7571 472 7579 489 7587 474 7595 481 7602 471 7610 473 7618 466 7626 478 7634 487 7641 482 7649 476 7657 477 7665 479 7672 478 7680 484 7688 477 7696 474 7703 482 7711 489 7719 466 7727 482 7735 487 7742 480 7750 482 7758 483 7766 485 7773 484 7781 480 7789 483 7797 478 7804 475 7812 481 7820 484 7828 474 7835 483 7843 482 7851 475 7859 487 7867 475 7874 481 7882 476 7890 481 7898 481 7905 484 7913 480 7921 483 7929 489 7936 464 7944 488 7952 485 7960 478 7967 477 7975 482 7983 488 7991 479 7999 481 8006 473 8014 481 8022 466 8030 460 8037 454 8045 454 8053 428 8061 397 8068 383 8076 350 8084 323 8092 349 8099 371 8107 368 8115 360 8123 339 8131 352 8138 354 8146 348 8154 335 8162 355 8169 333 8177 347 8185 326 8193 331 8200 353 8208 359 8216 356 8224 350 8232 341 8239 343 8247 352 8255 341 8263 327 8270 320 8278 336 8286 339 8294 343 8301 293 8309 269 8317 228 8325 222 8332 277 8340 309 8348 333 8356 318 8364 348 8371 333 8379 351 8387 345 8395 346 8402 361 8410 365 8418 338 8426 353 8433 361 8441 373 8449 351 8457 377 8464 363 8472 347 8480 390 8488 377 8496 383 8503 378 8511 383 8519 389 8527 383 8534 365 8542 382 8550 386 8558 379 8565 372 8573 374 8581 367 8589 374 8596 367 8604 366 8612 362 8620 379 8628 381 8635 379 8643 386 8651 368 8659 396 8666 391 8674 374 8682 373 8690 341 8697 362 8705 374 8713 356 8721 353 8728 357 8736 390 8744 375 8752 367 8760 355 8767 359 8775 373 8783 373 8791 369 8798 356 8806 389 8814 359 8822 347 8829 370 8837 376 8845 347 8853 382 8861 366 8868 360 8876 378 8884 366 8892 367 8899 364 8907 377 8915 362 8923 361 8930 370 8938 366 8946 365 8954 364 8961 360 8969 352 8977 377 8985 359 8993 349 9000 384 9008 333 9016 373 9024 363 9031 343 9039 372 9047 372 9055 360 9062 364 9070 352 9078 358 9086 339 9093 360 9101 373 9109 379 9117 365 9125 355 9132 349 9140 360 9148 353 9156 361 9163 343 9171 336 9179 345 9187 326 9194 342 9202 341 9210 343 9218 325 9225 340 9233 315 9241 342 9249 356 9257 365 9264 347 9272 345 9280 343 9288 336 9295 345 9303 334 9311 329 9319 347 9326 346 9334 337 9342 332 9350 321 9358 336 9365 329 9373 325 9381 324 9389 323 9396 338 9404 313 9412 335 9420 325 9427 308 9435 327 9443 311 9451 313 9458 311 9466 320 9474 310 9482 311 9490 301 9497 308 9505 315 9513 307 9521 302 9528 306 9536 299 9544 283 9552 298 9559 284 9567 293 9575 299 9583 293 9590 273 9598 273 9606 276 9614 278 9622 263 9629 274 9637 264 9645 246 9653 222 9660 187 9668 153 9676 152 9684 189 9691 222 9699 258 9707 262 9715 257 9722 259 9730 272 9738 268 9746 280 9754 273 9761 282 9769 269 9777 286 9785 273 9792 270 9800 300 9808 293 9816 287 9823 295 9831 304 9839 287 9847 286 9855 291 9862 298 9870 306 9878 290 9886 301 9893 316 9901 302 9909 309 9917 294 9924 302 9932 300 9940 309 9948 313 9955 317 9963 311 9971 315 9979 316 9987 291 9994 308 10002 309 10010 320 10018 303 10025 322 10033 324 10041 328 10049 305 10056 327 10064 334 10072 320 10080 316 10087 326 10095 313 10103 323 10111 318 10119 321 10126 323 10134 340 10142 325 10150 324 10157 326 10165 315 10173 324 10181 305 10188 321 10196 331 10204 328 10212 341 10219 324 10227 303 10235 335 10243 314 10251 340 10258 335 10266 322 10274 336 10282 340 10289 322 10297 324 10305 324 10313 333 10320 316 10328 332 10336 323 10344 329 10352 329 10359 345 10367 349 10375 351 10383 326 10390 335 10398 312 10406 327 10414 346 10421 336 10429 335 10437 345 10445 343 10452 321 10460 319 10468 325 10476 336 10484 338 10491 313 10499 333 10507 330 10515 349 10522 336 10530 313 10538 328 10546 343 10553 332 10561 321 10569 336 10577 322 10584 323 10592 336 10600 348"/></g></g>
<g clip-path="url(#ctf)"><g transform="translate(1426 0) scale(0.1 1)"><polyline fill="none" stroke="#00ff00" stroke-width="3" vector-effect="non-scaling-stroke" shape-rendering="crispEdges" points="0 339 8 401 16 350 23 387 31 346 39 371 47 387 54 377 62 407 70 389 78 362 85 429 93 418 101 397 109 432 116 411 124 382 132 449 140 413 148 403 155 438 163 413 171 384 179 434 186 373 194 449 202 351 210 417 217 380 225 418 233 400 241 404 248 411 256 429 264 418 272 414 280 407 287 406 295 433 303 376 311 445 318 385 326 432 334 403 342 370 349 403 357 433 365 432 373 416 381 423 388 423 396 452 404 411 412 389 419 374 427 395 435 396 443 394 450 467 458 407 466 396 474 435 481 421 489 424 497 359 505 383 513 396 520 424 528 438 536 413 544 422 551 421 559 391 567 405 575 419 582 409 590 378 598 392 606 399 613 404 621 381 629 390 637 385 645 377 652 385 660 370 668 365 676 367 683 429 691 367 699 422 707 365 714 365 722 383 730 380 738 396 745 378 753 364 761 373 769 358 777 332 784 325 792 330 800 328 808 351 815 336 823 365 831 324 839 307 846 305 854 307 862 326 870 304 878 305 885 293 893 282 901 267 909 305 916 296 924 318 932 317 940 291 947 305 955 301 963 294 971 306 978 310 986 311 994 296 1002 285 1010 297 1017 317 1025 308 1033 290 1041 275 1048 260 1056 230 1064 218 1072 266 1079 302 1087 293 1095 287 1103 305 1110 295 1118 320 1126 299 1134 339 1142 318 1149 344 1157 319 1165 328 1173 338 1180 331 1188 381 1196 321 1204 367 1211 330 1219 374 1227 354 1235 361 1242 376 1250 357 1258 368 1266 325 1274 372 1281 390 1289 394 1297 401 1305 371 1312 391 1320 362 1328 379 1336 356 1343 363 1351 344 1359 382 1367 374 1375 333 1382 346 1390 353 1398 352 1406 326 1413 311 1421 303 1429 272 1437 278 1444 245 1452 259 1460 281 1468 266 1475 250 1483 230 1491 251 1499 268 1507 264 1514 254 1522 260 1530 249 1538 261 1545 260 1553 285 1561 320 1569 350 1576 353 1584 381 1592 369 1600 409 1607 389 1615 390 1623 423 1631 394 1639 395 1646 381 1654 379 1662 387 1670 427 1677 425 1685 355 1693 376 1701 407 1708 383 1716 424 1724 394 1732 396 1739 390 1747 386 1755 420 1763 351 1771 448 1778 399 1786 383 1794 424 1802 380 1809 397 1817 411 1825 427 1833 382 1840 389 1848 425 1856 386 1864 451 1872 420 1879 398 1887 407 1895 442 1903 410 1910 426 1918 432 1926 421 1934 357 1941 314 1949 424 1957 424 1965 399 1972 396 1980 402 1988 370 1996 429 2004 387 2011 434 2019 395 2027 378 2035 386 2042 412 2050 397 2058 410 2066 399 2073 406 2081 415 2089 346 2097 441 2104 356 2112 397 2120 387 2128 385 2136 412 2143 395 2151 389 2159 460 2167 418 2174 366 2182 375 2190 388 2198 399 2205 368 2213 359 2221 406 2229 371 2236 350 2244 377 2252 374 2260 400 2268 344 2275 396 2283 344 2291 367 2299 308 2306 305 2314 351 2322 368 2330 384 2337 359 2345 365 2353 394 2361 374 2368 338 2376 393 2384 381 2392 369 2400 363 2407 384 2415 362 2423 350 2431 387 2438 338 2446 363 2454 404 2462 378 2469 392 2477 407 2485 340 2493 437 2501 373 2508 364 2516 420 2524 409 2532 377 2539 384 2547 383 2555 410 2563 414 2570 383 2578 409 2586 471 2594 422 2601 466 2609 467 2617 483 2625 479 2633 485 2640 480 2648 479 2656 483 2664 481 2671 483 2679 483 2687 490 2695 482 2702 488 2710 477 2718 477 2726 483 2733 478 2741 485 2749 482 2757 479 2765 484 2772 485 2780 478 2788 475 2796 480 2803 480 2811 481 2819 485 2827 481 2834 483 2842 487 2850 477 2858 483 2865 479 2873 484 2881 478 2889 479 2897 484 2904 481 2912 487 2920 481 2928 484 2935 484 2943 481 2951 482 2959 484 2966 483 2974 485 2982 479 2990 479 2998 486 3005 483 3013 478 3021 483 3029 489 3036 483 3044 482 3052 480 3060 483 3067 485 3075 485 3083 480 3091 480 3098 478 3106 483 3114 473 3122 483 3130 480 3137 483 3145 487 3153 474 3161 477 3168 480 3176 491 3184 481 3192 490 3199 484 3207 484 3215 481 3223 484 3230 483 3238 483 3246 482 3254 477 3262 480 3269 483 3277 481 3285 478 3293 484 3300 479 3308 482 3316 482 3324 484 3331 485 3339 473 3347 479 3355 481 3362 481 3370 479 3378 489 3386 481 3394 485 3401 483 3409 484 3417 484 3425 471 3432 483 3440 481 3448 478 3456 483 3463 479 3471 481 3479 482 3487 482 3495 481 3502 483 3510 478 3518 480 3526 478 3533 482 3541 482 3549 478 3557 478 3564 476 3572 476 3580 487 3588 474 3595 481 3603 480 3611 475 3619 486 3627 480 3634 479 3642 482 3650 481 3658 476 3665 481 3673 481 3681 482 3689 486 3696 483 3704 480 3712 482 3720 485 3727 484 3735 482 3743 480 3751 478 3759 481 3766 479 3774 481 3782 480 3790 480 3797 482 3805 481 3813 486 3821 482 3828 491 3836 477 3844 479 3852 480 3859 480 3867 484 3875 485 3883 482 3891 483 3898 480 3906 481 3914 479 3922 477 3929 481 3937 484 3945 485 3953 477 3960 480 3968 485 3976 479 3984 482 3992 480 3999 483 4007 478 4015 483 4023 489 4030 475 4038 486 4046 477 4054 480 4061 486 4069 482 4077 485 4085 489 4092 486 4100 478 4108 480 4116 477 4124 481 4131 475 4139 486 4147 484 4155 479 4162 479 4170 481 4178 482 4186 483 4193 481 4201 485 4209 483 4217 482 4224 477 4232 482 4240 479 4248 486 4256 475 4263 476 4271 481 4279 485 4287 482 4294 477 4302 485 4310 477 4318 483 4325 479 4333 478 4341 479 4349 486 4356 478 4364 482 4372 480 4380 484 4388 477 4395 481 4403 479 4411 483 4419 481 4426 480 4434 479 4442 481 4450 484 4457 484 4465 481 4473 483 4481 479 4488 483 4496 484 4504 482 4512 478 4520 481 4527 482 4535 479 4543 478 4551 483 4558 485 4566 481 4574 485 4582 479 4589 487 4597 479 4605 480 4613 481 4621 486 4628 482 4636 482 4644 483 4652 478 4659 478 4667 475 4675 478 4683 480 4690 477 4698 486 4706 478 4714 482 4721 471 4729 485 4737 480 4745 481 4753 483 4760 484 4768 488 4776 476 4784 481 4791 478 4799 482 4807 479 4815 478 4822 474 4830 485 4838 481 4846 476 4853 479 4861 476 4869 474 4877 477 4885 477 4892 487 4900 481 4908 478 4916 476 4923 483 4931 480 4939 477 4947 481 4954 479 4962 485 4970 487 4978 480 4985 484 4993 482 5001 476 5009 481 5017 476 5024 484 5032 482 5040 479 5048 476 5055 481 5063 479 5071 477 5079 485 5086 485 5094 483 5102 479 5110 478 5118 490 5125 480 5133 488 5141 482 5149 481 5156 479 5164 477 5172 479 5180 486 5187 483 5195 477 5203 478 5211 482 5218 483 5226 476 5234 478 5242 478 5250 485 5257 482 5265 478 5273 484 5281 472 5288 474 5296 479 5304 477 5312 479 5319 476 5327 476 5335 483 5343 479 5350 487 5358 477 5366 481 5374 488 5382 484 5389 478 5397 478 5405 481 5413 477 5420 483 5428 481 5436 481 5444 479 5451 480 5459 474 5467 489 5475 480 5482 480 5490 482 5498 489 5506 481 5514 482 5521 481 5529 484 5537 482 5545 479 5552 476 5560 480 5568 480 5576 487 5583 482 5591 483 5599 479 5607 477 5615 480 5622 482 5630 477 5638 481 5646 486 5653 482 5661 481 5669 481 5677 480 5684 483 5692 484 5700 479 5708 477 5715 483 5723 484 5731 481 5739 478 5747 486 5754 475 5762 475 5770 484 5778 487 5785 483 5793 485 5801 482 5809 485 5816 479 5824 480 5832 479 5840 479 5847 484 5855 481 5863 476 5871 489 5879 480 5886 478 5894 479 5902 481 5910 482 5917 484 5925 476 5933 490 5941 486 5948 476 5956 483 5964 481 5972 477 5979 479 5987 482 5995 487 6003 480 6011 484 6018 479 6026 483 6034 489 6042 485 6049 484 6057 482 6065 481 6073 479 6080 477 6088 483 6096 482 6104 475 6112 480 6119 476 6127 484 6135 477 6143 481 6150 488 6158 490 6166 480 6174 473 6181 481 6189 483 6197 482 6205 482 6212 481 6220 478 6228 479 6236 483 6244 483 6251 479 6259 479 6267 481 6275 483 6282 478 6290 475 6298 478 6306 480 6313 487 6321 483 6329 478 6337 486 6344 474 6352 478 6360 487 6368 482 6376 480 6383 477 6391 478 6399 485 6407 480 6414 479 6422 484 6430 486 6438 477 6445 483 6453 481 6461 481 6469 476 6476 481 6484 477 6492 479 6500 482 6508 480 6515 481 6523 483 6531 485 6539 482 6546 482 6554 477 6562 475 6570 482 6577 477 6585 477 6593 480 6601 480 6608 484 6616 475 6624 475 6632 471 6640 481 6647 481 6655 478 6663 478 6671 478 6678 475 6686 475 6694 477 6702 482 6709 483 6717 479 6725 480 6733 478 6741 482 6748 482 6756 485 6764 479 6772 477 6779 480 6787 478 6795 480 6803 485 6810 480 6818 480 6826 479 6834 484 6841 487 6849 478 6857 488 6865 479 6873 479 6880 481 6888 477 6896 479 6904 478 6911 482 6919 477 6927 482 6935 477 6942 479 6950 479 6958 477 6966 480 6973 478 6981 485 6989 478 6997 478 7005 483 7012 477 7020 479 7028 482 7036 479 7043 474 7051 478 7059 486 7067 478 7074 483 7082 481 7090 480 7098 479 7105 481 7113 479 7121 483 7129 481 7137 480 7144 480 7152 482 7160 480 7168 477 7175 477 7183 477 7191 479 7199 482 7206 485 7214 483 7222 484 7230 477 7238 475 7245 483 7253 484 7261 476 7269 481 7276 483 7284 485 7292 473 7300 486 7307 481 7315 479 7323 482 7331 477 7338 475 7346 480 7354 481 7362 478 7370 476 7377 485 7385 478 7393 474 7401 477 7408 476 7416 480 7424 483 7432 483 7439 479 7447 481 7455 475 7463 477 7470 483 7478 473 7486 477 7494 487 7502 479 7509 480 7517 479 7525 479 7533 479 7540 479 7548 486 7556 481 7564 481 7571 479 7579 472 7587 481 7595 476 7602 480 7610 478 7618 485 7626 478 7634 476 7641 478 7649 480 7657 478 7665 473 7672 477 7680 482 7688 485 7696 477 7703 483 7711 477 7719 475 7727 479 7735 478 7742 479 7750 471 7758 481 7766 480 7773 478 7781 481 7789 487 7797 480 7804 479 7812 477 7820 482 7828 477 7835 484 7843 476 7851 475 7859 478 7867 486 7874 482 7882 479 7890 475 7898 480 7905 476 7913 479 7921 478 7929 479 7936 482 7944 480 7952 479 7960 478 7967 476 7975 481 7983 477 7991 480 7999 480 8006 483 8014 481 8022 480 8030 469 8037 464 8045 474 8053 450 8061 422 8068 408 8076 393 8084 400 8092 362 8099 386 8107 386 8115 430 8123 392 8131 380 8138 396 8146 413 8154 418 8162 368 8169 437 8177 403 8185 399 8193 432 8200 332 8208 359 8216 374 8224 412 8232 384 8239 364 8247 364 8255 355 8263 368 8270 382 8278 350 8286 316 8294 345 8301 360 8309 309 8317 274 8325 301 8332 299 8340 358 8348 344 8356 377 8364 349 8371 409 8379 363 8387 403 8395 341 8402 409 8410 385 8418 371 8426 411 8433 419 8441 370 8449 446 8457 377 8464 427 8472 371 8480 427 8488 409 8496 391 8503 475 8511 375 8519 362 8527 433 8534 415 8542 449 8550 409 8558 436 8565 446 8573 413 8581 414 8589 404 8596 411 8604 415 8612 477 8620 358 8628 424 8635 411 8643 389 8651 430 8659 414 8666 425 8674 425 8682 394 8690 426 8697 383 8705 443 8713 461 8721 411 8728 432 8736 403 8744 460 8752 392 8760 394 8767 381 8775 380 8783 405 8791 428 8798 421 8806 371 8814 437 8822 409 8829 410 8837 405 8845 378 8853 364 8861 401 8868 440 8876 403 8884 436 8892 428 8899 400 8907 390 8915 386 8923 398 8930 403 8938 386 8946 429 8954 420 8961 397 8969 433 8977 400 8985 393 8993 383 9000 400 9008 444 9016 397 9024 433 9031 420 9039 377 9047 430 9055 377 9062 379 9070 430 9078 402 9086 368 9093 447 9101 396 9109 389 9117 394 9125 390 9132 383 9140 377 9148 351 9156 389 9163 386 9171 374 9179 364 9187 365 9194 374 9202 364 9210 401 9218 411 9225 376 9233 372 9241 378 9249 373 9257 362 9264 376 9272 370 9280 362 9288 338 9295 352 9303 369 9311 358 9319 360 9326 371 9334 365 9342 393 9350 345 9358 379 9365 330 9373 326 9381 368 9389 348 9396 371 9404 326 9412 363 9420 320 9427 377 9435 389 9443 370 9451 353 9458 335 9466 362 9474 356 9482 324 9490 310 9497 338 9505 338 9513 319 9521 312 9528 312 9536 336 9544 357 9552 316 9559 334 9567 290 9575 315 9583 312 9590 301 9598 296 9606 293 9614 302 9622 278 9629 294 9637 285 9645 286 9653 270 9660 201 9668 192 9676 197 9684 219 9691 263 9699 302 9707 282 9715 269 9722 297 9730 276 9738 282 9746 300 9754 292 9761 277 9769 289 9777 293 9785 331 9792 319 9800 329 9808 313 9816 328 9823 324 9831 328 9839 330 9847 321 9855 335 9862 322 9870 346 9878 326 9886 313 9893 323 9901 344 9909 338 9917 325 9924 329 9932 322 9940 337 9948 314 9955 324 9963 332 9971 312 9979 327 9987 331 9994 311 10002 331 10010 357 10018 351 10025 326 10033 351 10041 372 10049 395 10056 367 10064 328 10072 382 10080 382 10087 361 10095 360 10103 373 10111 343 10119 325 10126 372 10134 349 10142 342 10150 330 10157 387 10165 366 10173 346 10181 318 10188 347 10196 327 10204 341 10212 359 10219 350 10227 358 10235 321 10243 365 10251 351 10258 355 10266 354 10274 286 10282 374 10289 392 10297 351 10305 354 10313 385 10320 342 10328 356 10336 357 10344 359 10352 342 10359 375 10367 340 10375 333 10383 358 10390 344 10398 375 10406 406 10414 360 10421 385 10429 329 10437 343 10445 364 10452 385 10460 325 10468 332 10476 367 10484 376 10491 368 10499 374 10507 357 10515 387 10522 382 10530 338 10538 344 10546 370 10553 342 10561 364 10569 379 10577 347 10584 332 10592 358 10600 390"/></g></g>
<g clip-path="url(#ctf)"><g transform="translate(1426 0) scale(0.1 1)"><polyline fill="none" stroke="#0000ff" stroke-width="1" vector-effect="non-scaling-stroke" shape-rendering="crispEdges" points="0 330 8 340 16 320 23 344 31 321 39 299 47 362 54 392 62 390 70 384 78 382 85 339 93 346 101 375 109 374 116 388 124 382 132 387 140 413 148 373 155 402 163 370 171 368 179 385 186 335 194 391 202 395 210 399 217 376 225 400 233 383 241 408 248 407 256 371 264 372 272 372 280 360 287 422 295 396 303 361 311 371 318 351 326 375 334 372 342 371 349 383 357 390 365 425 373 381 381 378 388 404 396 392 404 364 412 373 419 393 427 355 435 357 443 395 450 390 458 369 466 352 474 421 481 377 489 376 497 359 505 405 513 363 520 405 528 385 536 369 544 394 551 379 559 378 567 361 575 369 582 362 590 344 598 393 606 346 613 374 621 398 629 372 637 367 645 369 652 351 660 398 668 351 676 368 683 365 691 384 699 358 707 379 714 355 722 347 730 375 738 368 745 352 753 337 761 358 769 359 777 352 784 352 792 361 800 338 808 297 815 312 823 300 831 337 839 327 846 328 854 310 862 295 870 302 878 268 885 287 893 307 901 292 909 285 916 279 924 294 932 301 940 305 947 294 955 287 963 288 971 272 978 290 986 281 994 295 1002 283 1010 280 1017 296 1025 282 1033 291 1041 263 1048 243 1056 205 1064 192 1072 248 1079 279 1087 291 1095 275 1103 296 1110 273 1118 298 1126 298 1134 302 1142 304 1149 297 1157 293 1165 295 1173 350 1180 342 1188 304 1196 351 1204 334 1211 350 1219 311 1227 332 1235 325 1242 317 1250 356 1258 337 1266 368 1274 358 1281 326 1289 363 1297 354 1305 390 1312 359 1320 398 1328 398 1336 361 1343 366 1351 340 1359 333 1367 327 1375 355 1382 335 1390 299 1398 281 1406 308 1413 296 1421 283 1429 260 1437 253 1444 237 1452 263 1460 244 1468 249 1475 239 1483 228 1491 240 1499 239 1507 236 1514 242 1522 238 1530 246 1538 233 1545 271 1553 317 1561 311 1569 334 1576 331 1584 332 1592 375 1600 363 1607 373 1615 376 1623 349 1631 368 1639 402 1646 391 1654 361 1662 368 1670 370 1677 374 1685 409 1693 352 1701 395 1708 372 1716 389 1724 365 1732 414 1739 379 1747 373 1755 411 1763 366 1771 380 1778 401 1786 357 1794 381 1802 369 1809 425 1817 403 1825 372 1833 390 1840 344 1848 360 1856 384 1864 374 1872 377 1879 350 1887 396 1895 388 1903 397 1910 415 1918 363 1926 357 1934 370 1941 434 1949 377 1957 365 1965 375 1972 368 1980 373 1988 379 1996 410 2004 383 2011 379 2019 381 2027 381 2035 367 2042 394 2050 416 2058 399 2066 373 2073 410 2081 373 2089 366 2097 378 2104 377 2112 393 2120 397 2128 391 2136 375 2143 341 2151 369 2159 379 2167 353 2174 370 2182 351 2190 395 2198 336 2205 361 2213 372 2221 356 2229 380 2236 368 2244 345 2252 367 2260 348 2268 343 2275 351 2283 325 2291 265 2299 280 2306 338 2314 351 2322 358 2330 326 2337 308 2345 350 2353 369 2361 345 2368 323 2376 368 2384 364 2392 344 2400 369 2407 338 2415 375 2423 361 2431 343 2438 395 2446 360 2454 340 2462 393 2469 364 2477 380 2485 339 2493 347 2501 356 2508 336 2516 374 2524 395 2532 405 2539 389 2547 400 2555 401 2563 412 2570 402 2578 379 2586 402 2594 401 2601 405 2609 390 2617 400 2625 386 2633 381 2640 380 2648 380 2656 380 2664 380 2671 380 2679 379 2687 378 2695 379 2702 379 2710 380 2718 379 2726 378 2733 379 2741 380 2749 378 2757 379 2765 380 2772 378 2780 379 2788 380 2796 379 2803 378 2811 379 2819 379 2827 380 2834 378 2842 378 2850 379 2858 379 2865 379 2873 379 2881 379 2889 379 2897 380 2904 380 2912 379 2920 378 2928 379 2935 379 2943 379 2951 380 2959 380 2966 378 2974 379 2982 379 2990 381 2998 380 3005 379 3013 379 3021 379 3029 381 3036 380 3044 379 3052 380 3060 380 3067 380 3075 379 3083 379 3091 379 3098 379 3106 379 3114 379 3122 379 3130 378 3137 379 3145 379 3153 379 3161 379 3168 379 3176 380 3184 380 3192 379 3199 379 3207 379 3215 380 3223 380 3230 379 3238 380 3246 380 3254 379 3262 381 3269 379 3277 379 3285 379 3293 380 3300 379 3308 380 3316 381 3324 380 3331 380 3339 380 3347 380 3355 378 3362 379 3370 380 3378 379 3386 380 3394 379 3401 379 3409 380 3417 379 3425 380 3432 379 3440 380 3448 379 3456 380 3463 380 3471 379 3479 379 3487 380 3495 379 3502 380 3510 381 3518 379 3526 380 3533 380 3541 379 3549 380 3557 379 3564 380 3572 379 3580 379 3588 381 3595 379 3603 379 3611 379 3619 379 3627 380 3634 381 3642 380 3650 380 3658 381 3665 381 3673 380 3681 380 3689 380 3696 380 3704 381 3712 380 3720 380 3727 380 3735 380 3743 381 3751 381 3759 379 3766 378 3774 379 3782 380 3790 382 3797 380 3805 380 3813 379 3821 380 3828 379 3836 379 3844 380 3852 380 3859 379 3867 381 3875 381 3883 380 3891 378 3898 380 3906 380 3914 381 3922 379 3929 379 3937 380 3945 379 3953 381 3960 380 3968 382 3976 381 3984 380 3992 379 3999 380 4007 379 4015 381 4023 381 4030 379 4038 380 4046 380 4054 381 4061 380 4069 380 4077 380 4085 381 4092 380 4100 381 4108 380 4116 380 4124 381 4131 381 4139 380 4147 380 4155 379 4162 380 4170 380 4178 380 4186 380 4193 380 4201 380 4209 380 4217 380 4224 380 4232 380 4240 380 4248 381 4256 379 4263 381 4271 381 4279 380 4287 381 4294 379 4302 381 4310 381 4318 381 4325 380 4333 379 4341 380 4349 380 4356 380 4364 379 4372 381 4380 379 4388 381 4395 381 4403 380 4411 381 4419 380 4426 380 4434 381 4442 380 4450 382 4457 381 4465 381 4473 380 4481 381 4488 381 4496 381 4504 380 4512 381 4520 382 4527 380 4535 381 4543 381 4551 380 4558 380 4566 381 4574 381 4582 381 4589 381 4597 381 4605 380 4613 379 4621 380 4628 380 4636 380 4644 380 4652 381 4659 380 4667 381 4675 380 4683 380 4690 380 4698 380 4706 380 4714 380 4721 380 4729 381 4737 381 4745 380 4753 380 4760 380 4768 381 4776 380 4784 379 4791 381 4799 381 4807 381 4815 380 4822 381 4830 381 4838 379 4846 380 4853 379 4861 379 4869 381 4877 381 4885 381 4892 380 4900 380 4908 381 4916 379 4923 380 4931 382 4939 381 4947 381 4954 380 4962 381 4970 381 4978 381 4985 381 4993 380 5001 380 5009 381 5017 380 5024 380 5032 381 5040 381 5048 381 5055 382 5063 381 5071 382 5079 380 5086 380 5094 381 5102 381 5110 381 5118 380 5125 381 5133 381 5141 380 5149 381 5156 382 5164 381 5172 380 5180 380 5187 380 5195 381 5203 383 5211 381 5218 381 5226 380 5234 381 5242 381 5250 381 5257 380 5265 382 5273 381 5281 380 5288 381 5296 381 5304 381 5312 381 5319 381 5327 382 5335 381 5343 381 5350 381 5358 381 5366 381 5374 380 5382 381 5389 381 5397 380 5405 382 5413 380 5420 381 5428 380 5436 381 5444 381 5451 381 5459 380 5467 381 5475 381 5482 381 5490 382 5498 382 5506 381 5514 381 5521 381 5529 382 5537 381 5545 381 5552 381 5560 382 5568 382 5576 381 5583 381 5591 382 5599 381 5607 381 5615 383 5622 382 5630 381 5638 381 5646 382 5653 381 5661 382 5669 382 5677 381 5684 382 5692 382 5700 382 5708 381 5715 382 5723 381 5731 381 5739 381 5747 382 5754 381 5762 381 5770 381 5778 381 5785 381 5793 382 5801 382 5809 382 5816 382 5824 382 5832 382 5840 381 5847 382 5855 383 5863 381 5871 382 5879 380 5886 381 5894 381 5902 382 5910 383 5917 382 5925 382 5933 382 5941 381 5948 381 5956 381 5964 382 5972 381 5979 382 5987 381 5995 382 6003 382 6011 382 6018 381 6026 381 6034 382 6042 382 6049 382 6057 383 6065 382 6073 383 6080 382 6088 382 6096 382 6104 381 6112 382 6119 382 6127 383 6135 381 6143 382 6150 384 6158 382 6166 382 6174 382 6181 383 6189 382 6197 381 6205 383 6212 382 6220 382 6228 382 6236 383 6244 383 6251 382 6259 381 6267 382 6275 382 6282 383 6290 382 6298 383 6306 382 6313 383 6321 382 6329 382 6337 382 6344 382 6352 384 6360 383 6368 384 6376 382 6383 383 6391 381 6399 383 6407 383 6414 383 6422 382 6430 382 6438 382 6445 384 6453 381 6461 383 6469 383 6476 383 6484 383 6492 384 6500 381 6508 383 6515 382 6523 382 6531 382 6539 382 6546 383 6554 383 6562 384 6570 382 6577 383 6585 383 6593 382 6601 383 6608 382 6616 383 6624 382 6632 382 6640 382 6647 383 6655 383 6663 382 6671 383 6678 383 6686 383 6694 383 6702 383 6709 382 6717 383 6725 382 6733 382 6741 382 6748 383 6756 384 6764 382 6772 383 6779 384 6787 383 6795 383 6803 383 6810 382 6818 383 6826 383 6834 382 6841 383 6849 382 6857 382 6865 383 6873 383 6880 383 6888 382 6896 383 6904 383 6911 383 6919 383 6927 383 6935 384 6942 383 6950 383 6958 383 6966 382 6973 382 6981 383 6989 383 6997 383 7005 382 7012 382 7020 383 7028 383 7036 382 7043 383 7051 383 7059 382 7067 383 7074 384 7082 384 7090 383 7098 381 7105 382 7113 383 7121 383 7129 382 7137 383 7144 384 7152 384 7160 384 7168 383 7175 383 7183 383 7191 383 7199 384 7206 382 7214 384 7222 383 7230 384 7238 382 7245 384 7253 383 7261 384 7269 382 7276 383 7284 382 7292 382 7300 382 7307 384 7315 384 7323 383 7331 384 7338 383 7346 384 7354 383 7362 383 7370 382 7377 384 7385 383 7393 382 7401 383 7408 383 7416 383 7424 383 7432 383 7439 383 7447 382 7455 384 7463 383 7470 383 7478 383 7486 382 7494 383 7502 383 7509 384 7517 383 7525 384 7533 382 7540 384 7548 384 7556 384 7564 383 7571 384 7579 383 7587 384 7595 383 7602 384 7610 384 7618 383 7626 384 7634 384 7641 383 7649 384 7657 385 7665 386 7672 384 7680 384 7688 384 7696 383 7703 385 7711 384 7719 384 7727 384 7735 382 7742 383 7750 384 7758 383 7766 386 7773 384 7781 384 7789 384 7797 383 7804 383 7812 384 7820 384 7828 385 7835 384 7843 383 7851 384 7859 383 7867 385 7874 385 7882 383 7890 385 7898 384 7905 383 7913 384 7921 385 7929 385 7936 385 7944 385 7952 384 7960 385 7967 384 7975 386 7983 386 7991 386 7999 388 8006 389 8014 392 8022 397 8030 404 8037 393 8045 397 8053 414 8061 410 8068 393 8076 380 8084 346 8092 334 8099 354 8107 410 8115 375 8123 375 8131 349 8138 359 8146 366 8154 358 8162 412 8169 359 8177 406 8185 353 8193 344 8200 338 8208 354 8216 362 8224 337 8232 340 8239 399 8247 361 8255 356 8263 353 8270 358 8278 334 8286 334 8294 320 8301 305 8309 274 8317 261 8325 240 8332 296 8340 307 8348 361 8356 355 8364 352 8371 344 8379 319 8387 364 8395 354 8402 351 8410 373 8418 373 8426 416 8433 374 8441 378 8449 390 8457 401 8464 368 8472 381 8480 388 8488 418 8496 390 8503 380 8511 401 8519 404 8527 390 8534 391 8542 366 8550 390 8558 377 8565 380 8573 394 8581 373 8589 378 8596 381 8604 407 8612 401 8620 384 8628 410 8635 408 8643 396 8651 396 8659 385 8666 361 8674 385 8682 414 8690 401 8697 389 8705 368 8713 384 8721 368 8728 393 8736 382 8744 437 8752 366 8760 378 8767 423 8775 388 8783 404 8791 392 8798 386 8806 371 8814 336 8822 386 8829 334 8837 407 8845 390 8853 402 8861 416 8868 433 8876 383 8884 380 8892 381 8899 409 8907 344 8915 376 8923 377 8930 387 8938 402 8946 388 8954 388 8961 398 8969 375 8977 376 8985 394 8993 362 9000 374 9008 347 9016 361 9024 390 9031 391 9039 349 9047 378 9055 366 9062 367 9070 365 9078 409 9086 354 9093 363 9101 362 9109 375 9117 376 9125 354 9132 370 9140 347 9148 384 9156 376 9163 356 9171 358 9179 341 9187 350 9194 377 9202 344 9210 350 9218 373 9225 384 9233 374 9241 370 9249 381 9257 355 9264 390 9272 373 9280 365 9288 373 9295 367 9303 357 9311 337 9319 344 9326 329 9334 341 9342 346 9350 328 9358 348 9365 363 9373 347 9381 335 9389 334 9396 331 9404 332 9412 337 9420 316 9427 331 9435 320 9443 320 9451 330 9458 324 9466 325 9474 338 9482 349 9490 326 9497 310 9505 313 9513 310 9521 330 9528 328 9536 302 9544 289 9552 287 9559 328 9567 314 9575 298 9583 309 9590 291 9598 278 9606 268 9614 272 9622 288 9629 279 9637 264 9645 248 9653 252 9660 203 9668 162 9676 149 9684 205 9691 253 9699 248 9707 277 9715 269 9722 272 9730 272 9738 289 9746 281 9754 281 9761 270 9769 296 9777 298 9785 288 9792 301 9800 295 9808 297 9816 307 9823 306 9831 309 9839 315 9847 313 9855 307 9862 314 9870 326 9878 316 9886 305 9893 324 9901 310 9909 305 9917 302 9924 296 9932 308 9940 297 9948 341 9955 314 9963 312 9971 315 9979 313 9987 320 9994 318 10002 326 10010 336 10018 325 10025 308 10033 326 10041 354 10049 356 10056 340 10064 317 10072 335 10080 371 10087 308 10095 342 10103 350 10111 312 10119 324 10126 342 10134 314 10142 323 10150 339 10157 327 10165 348 10173 339 10181 334 10188 310 10196 336 10204 349 10212 338 10219 318 10227 339 10235 344 10243 338 10251 346 10258 332 10266 350 10274 333 10282 342 10289 347 10297 338 10305 361 10313 331 10320 354 10328 333 10336 335 10344 337 10352 365 10359 360 10367 336 10375 317 10383 323 10390 341 10398 331 10406 370 10414 352 10421 343 10429 354 10437 335 10445 338 10452 324 10460 337 10468 353 10476 382 10484 347 10491 334 10499 380 10507 343 10515 382 10522 362 10530 317 10538 345 10546 303 10553 355 10561 339 10569 335 10577 337 10584 387 10592 378 10600 361"/></g></g>
<g clip-path="url(#ctf)"><g transform="translate(1426 0) scale(0.1 1)"><polyline fill="none" stroke="#ff0000" stroke-width="1" vector-effect="non-scaling-stroke" shape-rendering="crispEdges" points="0 352 8 329 16 343 23 377 31 341 39 380 47 379 54 346 62 368 70 369 78 369 85 409 93 347 101 354 109 370 116 411 124 386 132 332 140 370 148 405 155 366 163 437 171 398 179 386 186 368 194 456 202 371 210 381 217 386 225 367 233 407 241 427 248 384 256 401 264 417 272 437 280 418 287 381 295 354 303 388 311 341 318 434 326 374 334 411 342 371 349 372 357 443 365 426 373 366 381 383 388 403 396 357 404 422 412 413 419 354 427 402 435 369 443 377 450 401 458 412 466 444 474 448 481 395 489 371 497 380 505 377 513 443 520 411 528 331 536 383 544 378 551 419 559 395 567 430 575 417 582 402 590 380 598 388 606 412 613 379 621 364 629 411 637 387 645 405 652 387 660 360 668 378 676 359 683 424 691 347 699 383 707 339 714 399 722 375 730 334 738 377 745 420 753 377 761 325 769 386 777 339 784 333 792 316 800 315 808 297 815 310 823 326 831 370 839 322 846 327 854 323 862 314 870 266 878 303 885 319 893 260 901 290 909 299 916 310 924 289 932 274 940 312 947 302 955 290 963 316 971 269 978 298 986 309 994 334 1002 309 1010 304 1017 299 1025 312 1033 265 1041 274 1048 240 1056 195 1064 205 1072 252 1079 279 1087 260 1095 270 1103 286 1110 295 1118 284 1126 305 1134 300 1142 302 1149 321 1157 308 1165 330 1173 313 1180 305 1188 319 1196 343 1204 351 1211 330 1219 361 1227 338 1235 317 1242 337 1250 373 1258 357 1266 326 1274 376 1281 389 1289 366 1297 330 1305 364 1312 366 1320 372 1328 381 1336 379 1343 392 1351 370 1359 364 1367 354 1375 359 1382 335 1390 321 1398 305 1406 348 1413 284 1421 268 1429 295 1437 269 1444 259 1452 267 1460 248 1468 233 1475 244 1483 225 1491 236 1499 249 1507 243 1514 252 1522 225 1530 250 1538 252 1545 272 1553 294 1561 339 1569 335 1576 343 1584 342 1592 405 1600 342 1607 360 1615 355 1623 391 1631 346 1639 380 1646 341 1654 391 1662 349 1670 378 1677 423 1685 346 1693 407 1701 430 1708 411 1716 348 1724 408 1732 396 1739 404 1747 343 1755 422 1763 388 1771 355 1778 390 1786 397 1794 432 1802 393 1809 377 1817 398 1825 407 1833 384 1840 395 1848 370 1856 371 1864 380 1872 403 1879 418 1887 411 1895 439 1903 390 1910 410 1918 397 1926 394 1934 427 1941 421 1949 359 1957 387 1965 413 1972 374 1980 380 1988 401 1996 387 2004 364 2011 375 2019 390 2027 428 2035 412 2042 388 2050 386 2058 435 2066 376 2073 379 2081 371 2089 373 2097 373 2104 407 2112 385 2120 366 2128 399 2136 373 2143 381 2151 377 2159 379 2167 351 2174 380 2182 423 2190 426 2198 372 2205 363 2213 352 2221 364 2229 344 2236 335 2244 394 2252 426 2260 352 2268 346 2275 345 2283 391 2291 275 2299 291 2306 314 2314 368 2322 369 2330 348 2337 349 2345 344 2353 351 2361 355 2368 338 2376 350 2384 346 2392 374 2400 350 2407 401 2415 410 2423 357 2431 338 2438 348 2446 323 2454 444 2462 390 2469 393 2477 331 2485 376 2493 367 2501 341 2508 388 2516 431 2524 390 2532 442 2539 416 2547 363 2555 390 2563 370 2570 384 2578 430 2586 386 2594 424 2601 401 2609 417 2617 398 2625 392 2633 385 2640 382 2648 382 2656 382 2664 382 2671 381 2679 381 2687 381 2695 381 2702 381 2710 382 2718 382 2726 380 2733 381 2741 382 2749 381 2757 381 2765 381 2772 381 2780 381 2788 382 2796 381 2803 381 2811 381 2819 381 2827 381 2834 380 2842 381 2850 381 2858 381 2865 381 2873 381 2881 381 2889 381 2897 381 2904 382 2912 382 2920 381 2928 381 2935 381 2943 381 2951 382 2959 382 2966 381 2974 382 2982 381 2990 382 2998 382 3005 381 3013 381 3021 381 3029 381 3036 381 3044 380 3052 382 3060 382 3067 382 3075 382 3083 381 3091 381 3098 381 3106 382 3114 381 3122 381 3130 380 3137 380 3145 382 3153 381 3161 381 3168 381 3176 381 3184 381 3192 381 3199 381 3207 381 3215 382 3223 382 3230 381 3238 382 3246 382 3254 381 3262 382 3269 381 3277 381 3285 381 3293 382 3300 381 3308 383 3316 382 3324 382 3331 382 3339 381 3347 382 3355 381 3362 381 3370 382 3378 381 3386 382 3394 381 3401 381 3409 382 3417 381 3425 381 3432 382 3440 382 3448 381 3456 381 3463 382 3471 382 3479 382 3487 381 3495 382 3502 382 3510 382 3518 382 3526 382 3533 382 3541 381 3549 382 3557 382 3564 382 3572 381 3580 381 3588 382 3595 382 3603 381 3611 382 3619 382 3627 381 3634 383 3642 382 3650 382 3658 383 3665 382 3673 382 3681 383 3689 382 3696 382 3704 382 3712 382 3720 382 3727 382 3735 382 3743 383 3751 383 3759 381 3766 381 3774 381 3782 382 3790 383 3797 382 3805 382 3813 382 3821 382 3828 382 3836 382 3844 382 3852 381 3859 382 3867 382 3875 383 3883 382 3891 381 3898 382 3906 382 3914 382 3922 381 3929 381 3937 383 3945 382 3953 382 3960 382 3968 382 3976 383 3984 382 3992 382 3999 382 4007 382 4015 382 4023 383 4030 382 4038 382 4046 383 4054 382 4061 382 4069 382 4077 382 4085 382 4092 382 4100 382 4108 382 4116 382 4124 383 4131 383 4139 382 4147 382 4155 382 4162 382 4170 382 4178 383 4186 382 4193 382 4201 381 4209 382 4217 383 4224 382 4232 382 4240 382 4248 382 4256 382 4263 382 4271 382 4279 382 4287 383 4294 382 4302 382 4310 382 4318 383 4325 382 4333 382 4341 383 4349 382 4356 383 4364 382 4372 383 4380 382 4388 382 4395 382 4403 382 4411 383 4419 383 4426 382 4434 382 4442 382 4450 382 4457 382 4465 383 4473 382 4481 383 4488 382 4496 383 4504 383 4512 383 4520 383 4527 382 4535 383 4543 383 4551 382 4558 382 4566 382 4574 383 4582 382 4589 383 4597 383 4605 383 4613 382 4621 382 4628 382 4636 382 4644 383 4652 382 4659 382 4667 382 4675 382 4683 383 4690 382 4698 382 4706 381 4714 383 4721 383 4729 382 4737 383 4745 382 4753 382 4760 383 4768 382 4776 382 4784 382 4791 382 4799 383 4807 383 4815 383 4822 383 4830 383 4838 382 4846 382 4853 382 4861 382 4869 382 4877 382 4885 382 4892 383 4900 382 4908 383 4916 382 4923 383 4931 383 4939 383 4947 384 4954 383 4962 382 4970 383 4978 384 4985 383 4993 383 5001 384 5009 383 5017 382 5024 383 5032 383 5040 383 5048 382 5055 383 5063 383 5071 384 5079 382 5086 383 5094 383 5102 384 5110 383 5118 383 5125 383 5133 383 5141 382 5149 383 5156 383 5164 384 5172 383 5180 383 5187 382 5195 383 5203 384 5211 383 5218 383 5226 382 5234 383 5242 383 5250 383 5257 383 5265 384 5273 383 5281 382 5288 383 5296 383 5304 383 5312 382 5319 383 5327 383 5335 384 5343 383 5350 382 5358 383 5366 383 5374 383 5382 384 5389 383 5397 383 5405 384 5413 383 5420 384 5428 383 5436 383 5444 383 5451 383 5459 382 5467 382 5475 384 5482 383 5490 383 5498 384 5506 384 5514 383 5521 383 5529 384 5537 384 5545 384 5552 383 5560 383 5568 384 5576 383 5583 383 5591 384 5599 384 5607 384 5615 384 5622 384 5630 383 5638 384 5646 384 5653 383 5661 384 5669 384 5677 383 5684 383 5692 384 5700 383 5708 383 5715 383 5723 383 5731 383 5739 383 5747 383 5754 383 5762 383 5770 384 5778 384 5785 383 5793 384 5801 384 5809 383 5816 384 5824 384 5832 383 5840 383 5847 383 5855 384 5863 384 5871 383 5879 383 5886 384 5894 383 5902 384 5910 384 5917 384 5925 384 5933 384 5941 384 5948 384 5956 383 5964 384 5972 383 5979 384 5987 384 5995 384 6003 384 6011 384 6018 383 6026 384 6034 384 6042 383 6049 384 6057 384 6065 384 6073 384 6080 383 6088 384 6096 383 6104 384 6112 383 6119 384 6127 384 6135 384 6143 384 6150 385 6158 383 6166 385 6174 384 6181 385 6189 384 6197 383 6205 384 6212 384 6220 384 6228 384 6236 385 6244 384 6251 384 6259 384 6267 384 6275 384 6282 384 6290 384 6298 384 6306 384 6313 385 6321 384 6329 384 6337 384 6344 384 6352 385 6360 384 6368 385 6376 384 6383 384 6391 384 6399 385 6407 384 6414 385 6422 384 6430 384 6438 384 6445 385 6453 385 6461 385 6469 384 6476 384 6484 384 6492 385 6500 383 6508 385 6515 384 6523 384 6531 385 6539 384 6546 384 6554 384 6562 385 6570 384 6577 385 6585 385 6593 385 6601 385 6608 384 6616 385 6624 384 6632 384 6640 384 6647 385 6655 385 6663 384 6671 384 6678 385 6686 384 6694 385 6702 385 6709 384 6717 385 6725 385 6733 384 6741 384 6748 384 6756 384 6764 385 6772 385 6779 386 6787 385 6795 385 6803 385 6810 385 6818 384 6826 385 6834 384 6841 385 6849 385 6857 385 6865 385 6873 385 6880 384 6888 384 6896 386 6904 385 6911 385 6919 385 6927 384 6935 385 6942 385 6950 385 6958 385 6966 385 6973 385 6981 386 6989 385 6997 386 7005 384 7012 384 7020 385 7028 385 7036 385 7043 385 7051 385 7059 385 7067 385 7074 386 7082 386 7090 385 7098 384 7105 384 7113 385 7121 385 7129 385 7137 385 7144 386 7152 385 7160 386 7168 385 7175 385 7183 385 7191 385 7199 386 7206 385 7214 385 7222 385 7230 385 7238 385 7245 386 7253 385 7261 385 7269 385 7276 385 7284 385 7292 385 7300 385 7307 386 7315 385 7323 385 7331 386 7338 385 7346 386 7354 385 7362 385 7370 384 7377 385 7385 385 7393 385 7401 386 7408 385 7416 385 7424 385 7432 386 7439 386 7447 385 7455 385 7463 386 7470 385 7478 385 7486 386 7494 385 7502 385 7509 385 7517 385 7525 386 7533 385 7540 385 7548 386 7556 387 7564 386 7571 386 7579 386 7587 385 7595 385 7602 386 7610 386 7618 385 7626 386 7634 386 7641 385 7649 386 7657 387 7665 386 7672 386 7680 386 7688 386 7696 385 7703 386 7711 386 7719 386 7727 386 7735 385 7742 385 7750 386 7758 385 7766 388 7773 386 7781 385 7789 385 7797 385 7804 386 7812 386 7820 386 7828 386 7835 386 7843 386 7851 386 7859 385 7867 387 7874 386 7882 385 7890 386 7898 387 7905 386 7913 386 7921 387 7929 387 7936 387 7944 387 7952 386 7960 387 7967 387 7975 387 7983 387 7991 389 7999 391 8006 391 8014 389 8022 402 8030 409 8037 427 8045 398 8053 392 8061 407 8068 399 8076 396 8084 348 8092 352 8099 320 8107 378 8115 407 8123 374 8131 378 8138 358 8146 381 8154 397 8162 356 8169 385 8177 324 8185 385 8193 391 8200 368 8208 284 8216 404 8224 346 8232 371 8239 387 8247 402 8255 400 8263 332 8270 368 8278 375 8286 396 8294 357 8301 350 8309 293 8317 273 8325 280 8332 286 8340 338 8348 343 8356 325 8364 354 8371 343 8379 366 8387 371 8395 401 8402 405 8410 389 8418 398 8426 349 8433 422 8441 371 8449 371 8457 389 8464 426 8472 435 8480 406 8488 446 8496 414 8503 397 8511 396 8519 421 8527 411 8534 402 8542 391 8550 405 8558 464 8565 423 8573 450 8581 411 8589 396 8596 405 8604 413 8612 392 8620 393 8628 401 8635 409 8643 359 8651 406 8659 445 8666 428 8674 389 8682 355 8690 386 8697 399 8705 398 8713 386 8721 449 8728 464 8736 428 8744 407 8752 389 8760 395 8767 387 8775 419 8783 402 8791 468 8798 373 8806 358 8814 400 8822 399 8829 384 8837 403 8845 394 8853 356 8861 410 8868 385 8876 404 8884 446 8892 410 8899 364 8907 359 8915 405 8923 400 8930 384 8938 354 8946 433 8954 370 8961 392 8969 396 8977 364 8985 420 8993 391 9000 413 9008 398 9016 389 9024 344 9031 397 9039 404 9047 404 9055 423 9062 423 9070 372 9078 344 9086 365 9093 378 9101 408 9109 415 9117 405 9125 408 9132 363 9140 394 9148 390 9156 351 9163 374 9171 401 9179 361 9187 379 9194 387 9202 379 9210 364 9218 375 9225 346 9233 331 9241 413 9249 365 9257 376 9264 362 9272 374 9280 412 9288 385 9295 383 9303 373 9311 360 9319 348 9326 384 9334 371 9342 365 9350 336 9358 354 9365 354 9373 362 9381 345 9389 348 9396 328 9404 321 9412 352 9420 378 9427 356 9435 331 9443 347 9451 362 9458 306 9466 351 9474 303 9482 313 9490 317 9497 324 9505 313 9513 321 9521 350 9528 303 9536 324 9544 305 9552 339 9559 305 9567 326 9575 299 9583 288 9590 320 9598 288 9606 281 9614 290 9622 284 9629 286 9637 255 9645 275 9653 242 9660 204 9668 141 9676 141 9684 197 9691 210 9699 245 9707 267 9715 264 9722 269 9730 263 9738 278 9746 302 9754 267 9761 302 9769 289 9777 277 9785 284 9792 297 9800 289 9808 286 9816 293 9823 325 9831 333 9839 318 9847 298 9855 314 9862 330 9870 322 9878 350 9886 310 9893 318 9901 309 9909 334 9917 353 9924 336 9932 305 9940 345 9948 324 9955 343 9963 347 9971 344 9979 289 9987 333 9994 323 10002 341 10010 345 10018 357 10025 309 10033 344 10041 328 10049 351 10056 300 10064 341 10072 347 10080 327 10087 338 10095 350 10103 299 10111 384 10119 333 10126 368 10134 331 10142 331 10150 352 10157 297 10165 330 10173 337 10181 362 10188 378 10196 286 10204 338 10212 328 10219 354 10227 343 10235 373 10243 337 10251 359 10258 363 10266 345 10274 356 10282 315 10289 377 10297 345 10305 366 10313 351 10320 363 10328 366 10336 345 10344 315 10352 313 10359 357 10367 347 10375 376 10383 302 10390 358 10398 342 10406 342 10414 388 10421 378 10429 345 10437 341 10445 365 10452 347 10460 352 10468 363 10476 342 10484 364 10491 349 10499 360 10507 357 10515 361 10522 374 10530 338 10538 368 10546 372 10553 374 10561 367 10569 345 10577 389 10584 353 10592 351 10600 384"/></g></g>
<rect x="1426.5" y="141.5" width="1060" height="443" fill="none" stroke="#000" stroke-width="1.6"/>
<text x="1420.5" y="174.5" font-size="23" font-weight="bold" text-anchor="end">&#8722;20</text>
<text x="1420.5" y="249.5" font-size="23" font-weight="bold" text-anchor="end">&#8722;40</text>
<text x="1420.5" y="324.5" font-size="23" font-weight="bold" text-anchor="end">&#8722;60</text>
<text x="1420.5" y="399.5" font-size="23" font-weight="bold" text-anchor="end">&#8722;80</text>
<text x="1420.5" y="474.5" font-size="23" font-weight="bold" text-anchor="end">&#8722;100</text>
<text x="1420.5" y="549.5" font-size="23" font-weight="bold" text-anchor="end">&#8722;120</text>
<text x="1426.0" y="606.7" font-size="23" font-weight="bold" text-anchor="middle">29</text>
<text x="1558.5" y="606.7" font-size="23" font-weight="bold" text-anchor="middle">29.5</text>
<text x="1691.0" y="606.7" font-size="23" font-weight="bold" text-anchor="middle">30</text>
<text x="1823.5" y="606.7" font-size="23" font-weight="bold" text-anchor="middle">30.5</text>
<text x="1956.0" y="606.7" font-size="23" font-weight="bold" text-anchor="middle">31</text>
<text x="2088.5" y="606.7" font-size="23" font-weight="bold" text-anchor="middle">31.5</text>
<text x="2221.0" y="606.7" font-size="23" font-weight="bold" text-anchor="middle">32</text>
<text x="2353.5" y="606.7" font-size="23" font-weight="bold" text-anchor="middle">32.5</text>
<text x="2486.0" y="606.7" font-size="23" font-weight="bold" text-anchor="middle">33</text>
<text x="1956" y="649" font-size="24" font-weight="bold" text-anchor="middle">Frequency (Hz)</text>
<text x="0" y="0" font-size="26" font-weight="bold" text-anchor="middle" transform="translate(1348 362) rotate(-90)">Magnitude (dB)</text>
<text x="1326.5" y="689" font-size="23" font-weight="bold" text-anchor="start">T0=12/10/2025 01:15:05</text>
<text x="1925" y="689" font-size="23" font-weight="bold" text-anchor="middle">Avg=25</text>
<text x="2522.5" y="689" font-size="23" font-weight="bold" text-anchor="end">BW=0.00292958</text>
<rect x="1312" y="86" width="264" height="31" fill="#000"/>
<rect x="1314.5" y="83.5" width="263" height="30" fill="#f2f2f2" stroke="#000" stroke-width="1.5"/>
<text x="1347" y="107" font-size="24.2" font-weight="bold" text-anchor="start">Transfer function</text>
<clipPath id="ctfl"><rect x="1452" y="463" width="382" height="110"/></clipPath>
<rect x="1457" y="468" width="381" height="109" fill="#000"/>
<rect x="1451.5" y="463.5" width="383" height="109" fill="#fff" stroke="#000" stroke-width="1.2"/>
<line x1="1465" y1="470.0" x2="1533" y2="470.0" stroke="#ff0000" stroke-width="1" shape-rendering="crispEdges"/>
<text x="1547" y="473.24" font-size="9.0" font-weight="bold" text-anchor="start" clip-path="url(#ctfl)">X1:SUS-BS_M1_OSEMINF_LF_OUT / X1:SUS-BS_M1_TEST_R_EXC</text>
<line x1="1465" y1="483.6" x2="1533" y2="483.6" stroke="#0000ff" stroke-width="1" shape-rendering="crispEdges"/>
<text x="1547" y="486.81" font-size="9.0" font-weight="bold" text-anchor="start" clip-path="url(#ctfl)">X1:SUS-BS_M1_OSEMINF_RT_OUT / X1:SUS-BS_M1_TEST_R_EXC</text>
<line x1="1465" y1="497.1" x2="1533" y2="497.1" stroke="#00ff00" stroke-width="3" shape-rendering="crispEdges"/>
<text x="1547" y="500.38" font-size="9.0" font-weight="bold" text-anchor="start" clip-path="url(#ctfl)">X1:SUS-BS_M1_OSEMINF_F1_OUT / X1:SUS-BS_M1_TEST_R_EXC</text>
<line x1="1465" y1="510.7" x2="1533" y2="510.7" stroke="#876657" stroke-width="1" shape-rendering="crispEdges"/>
<text x="1547" y="513.9499999999999" font-size="9.0" font-weight="bold" text-anchor="start" clip-path="url(#ctfl)">X1:SUS-BS_M1_OSEMINF_F2_OUT / X1:SUS-BS_M1_TEST_R_EXC</text>
<line x1="1465" y1="524.3" x2="1533" y2="524.3" stroke="#ff00ff" stroke-width="1" shape-rendering="crispEdges"/>
<text x="1547" y="527.52" font-size="9.0" font-weight="bold" text-anchor="start" clip-path="url(#ctfl)">X1:SUS-BS_M1_OSEMINF_F3_OUT / X1:SUS-BS_M1_TEST_R_EXC</text>
<line x1="1465" y1="537.9" x2="1533" y2="537.9" stroke="#00ffff" stroke-width="1" shape-rendering="crispEdges"/>
<text x="1547" y="541.09" font-size="9.0" font-weight="bold" text-anchor="start" clip-path="url(#ctfl)">X1:SUS-BS_M1_OSEMINF_SD_OUT / X1:SUS-BS_M1_TEST_R_EXC</text>
<line x1="1465" y1="551.4" x2="1533" y2="551.4" stroke="#6b0070" stroke-width="3" shape-rendering="crispEdges"/>
<text x="1547" y="554.66" font-size="9.0" font-weight="bold" text-anchor="start" clip-path="url(#ctfl)">X1:SUS-BS_M2_OSEMINF_UL_OUT / X1:SUS-BS_M1_TEST_R_EXC</text>
<line x1="1465" y1="565.0" x2="1533" y2="565.0" stroke="#000000" stroke-width="2" shape-rendering="crispEdges"/>
<text x="1547" y="568.23" font-size="9.0" font-weight="bold" text-anchor="start" clip-path="url(#ctfl)">X1:SUS-BS_M2_OSEMINF_LR_OUT / X1:SUS-BS_M1_TEST_R_EXC</text>
<clipPath id="cco"><rect x="1426" y="763" width="1060" height="446"/></clipPath>
<line x1="1559.0" y1="765" x2="1559.0" y2="1208" class="g"/>
<line x1="1691.5" y1="765" x2="1691.5" y2="1208" class="g"/>
<line x1="1824.0" y1="765" x2="1824.0" y2="1208" class="g"/>
<line x1="1956.5" y1="765" x2="1956.5" y2="1208" class="g"/>
<line x1="2089.0" y1="765" x2="2089.0" y2="1208" class="g"/>
<line x1="2221.5" y1="765" x2="2221.5" y2="1208" class="g"/>
<line x1="2354.0" y1="765" x2="2354.0" y2="1208" class="g"/>
<line x1="1426" y1="1164.0" x2="2486" y2="1164.0" class="g"/>
<line x1="1426" y1="1119.8" x2="2486" y2="1119.8" class="g"/>
<line x1="1426" y1="1075.5" x2="2486" y2="1075.5" class="g"/>
<line x1="1426" y1="1031.2" x2="2486" y2="1031.2" class="g"/>
<line x1="1426" y1="986.9" x2="2486" y2="986.9" class="g"/>
<line x1="1426" y1="942.7" x2="2486" y2="942.7" class="g"/>
<line x1="1426" y1="898.4" x2="2486" y2="898.4" class="g"/>
<line x1="1426" y1="854.1" x2="2486" y2="854.1" class="g"/>
<line x1="1426" y1="809.9" x2="2486" y2="809.9" class="g"/>
<line x1="1426.5" y1="1208" x2="1426.5" y2="1193" class="k"/>
<line x1="1426.5" y1="765" x2="1426.5" y2="780" class="k"/>
<line x1="1452.5" y1="1208" x2="1452.5" y2="1200" class="k"/>
<line x1="1452.5" y1="765" x2="1452.5" y2="773" class="k"/>
<line x1="1479.5" y1="1208" x2="1479.5" y2="1200" class="k"/>
<line x1="1479.5" y1="765" x2="1479.5" y2="773" class="k"/>
<line x1="1506.5" y1="1208" x2="1506.5" y2="1200" class="k"/>
<line x1="1506.5" y1="765" x2="1506.5" y2="773" class="k"/>
<line x1="1532.5" y1="1208" x2="1532.5" y2="1200" class="k"/>
<line x1="1532.5" y1="765" x2="1532.5" y2="773" class="k"/>
<line x1="1558.5" y1="1208" x2="1558.5" y2="1193" class="k"/>
<line x1="1558.5" y1="765" x2="1558.5" y2="780" class="k"/>
<line x1="1585.5" y1="1208" x2="1585.5" y2="1200" class="k"/>
<line x1="1585.5" y1="765" x2="1585.5" y2="773" class="k"/>
<line x1="1612.5" y1="1208" x2="1612.5" y2="1200" class="k"/>
<line x1="1612.5" y1="765" x2="1612.5" y2="773" class="k"/>
<line x1="1638.5" y1="1208" x2="1638.5" y2="1200" class="k"/>
<line x1="1638.5" y1="765" x2="1638.5" y2="773" class="k"/>
<line x1="1664.5" y1="1208" x2="1664.5" y2="1200" class="k"/>
<line x1="1664.5" y1="765" x2="1664.5" y2="773" class="k"/>
<line x1="1691.5" y1="1208" x2="1691.5" y2="1193" class="k"/>
<line x1="1691.5" y1="765" x2="1691.5" y2="780" class="k"/>
<line x1="1718.5" y1="1208" x2="1718.5" y2="1200" class="k"/>
<line x1="1718.5" y1="765" x2="1718.5" y2="773" class="k"/>
<line x1="1744.5" y1="1208" x2="1744.5" y2="1200" class="k"/>
<line x1="1744.5" y1="765" x2="1744.5" y2="773" class="k"/>
<line x1="1770.5" y1="1208" x2="1770.5" y2="1200" class="k"/>
<line x1="1770.5" y1="765" x2="1770.5" y2="773" class="k"/>
<line x1="1797.5" y1="1208" x2="1797.5" y2="1200" class="k"/>
<line x1="1797.5" y1="765" x2="1797.5" y2="773" class="k"/>
<line x1="1824.5" y1="1208" x2="1824.5" y2="1193" class="k"/>
<line x1="1824.5" y1="765" x2="1824.5" y2="780" class="k"/>
<line x1="1850.5" y1="1208" x2="1850.5" y2="1200" class="k"/>
<line x1="1850.5" y1="765" x2="1850.5" y2="773" class="k"/>
<line x1="1876.5" y1="1208" x2="1876.5" y2="1200" class="k"/>
<line x1="1876.5" y1="765" x2="1876.5" y2="773" class="k"/>
<line x1="1903.5" y1="1208" x2="1903.5" y2="1200" class="k"/>
<line x1="1903.5" y1="765" x2="1903.5" y2="773" class="k"/>
<line x1="1930.5" y1="1208" x2="1930.5" y2="1200" class="k"/>
<line x1="1930.5" y1="765" x2="1930.5" y2="773" class="k"/>
<line x1="1956.5" y1="1208" x2="1956.5" y2="1193" class="k"/>
<line x1="1956.5" y1="765" x2="1956.5" y2="780" class="k"/>
<line x1="1982.5" y1="1208" x2="1982.5" y2="1200" class="k"/>
<line x1="1982.5" y1="765" x2="1982.5" y2="773" class="k"/>
<line x1="2009.5" y1="1208" x2="2009.5" y2="1200" class="k"/>
<line x1="2009.5" y1="765" x2="2009.5" y2="773" class="k"/>
<line x1="2036.5" y1="1208" x2="2036.5" y2="1200" class="k"/>
<line x1="2036.5" y1="765" x2="2036.5" y2="773" class="k"/>
<line x1="2062.5" y1="1208" x2="2062.5" y2="1200" class="k"/>
<line x1="2062.5" y1="765" x2="2062.5" y2="773" class="k"/>
<line x1="2088.5" y1="1208" x2="2088.5" y2="1193" class="k"/>
<line x1="2088.5" y1="765" x2="2088.5" y2="780" class="k"/>
<line x1="2115.5" y1="1208" x2="2115.5" y2="1200" class="k"/>
<line x1="2115.5" y1="765" x2="2115.5" y2="773" class="k"/>
<line x1="2142.5" y1="1208" x2="2142.5" y2="1200" class="k"/>
<line x1="2142.5" y1="765" x2="2142.5" y2="773" class="k"/>
<line x1="2168.5" y1="1208" x2="2168.5" y2="1200" class="k"/>
<line x1="2168.5" y1="765" x2="2168.5" y2="773" class="k"/>
<line x1="2194.5" y1="1208" x2="2194.5" y2="1200" class="k"/>
<line x1="2194.5" y1="765" x2="2194.5" y2="773" class="k"/>
<line x1="2221.5" y1="1208" x2="2221.5" y2="1193" class="k"/>
<line x1="2221.5" y1="765" x2="2221.5" y2="780" class="k"/>
<line x1="2248.5" y1="1208" x2="2248.5" y2="1200" class="k"/>
<line x1="2248.5" y1="765" x2="2248.5" y2="773" class="k"/>
<line x1="2274.5" y1="1208" x2="2274.5" y2="1200" class="k"/>
<line x1="2274.5" y1="765" x2="2274.5" y2="773" class="k"/>
<line x1="2300.5" y1="1208" x2="2300.5" y2="1200" class="k"/>
<line x1="2300.5" y1="765" x2="2300.5" y2="773" class="k"/>
<line x1="2327.5" y1="1208" x2="2327.5" y2="1200" class="k"/>
<line x1="2327.5" y1="765" x2="2327.5" y2="773" class="k"/>
<line x1="2354.5" y1="1208" x2="2354.5" y2="1193" class="k"/>
<line x1="2354.5" y1="765" x2="2354.5" y2="780" class="k"/>
<line x1="2380.5" y1="1208" x2="2380.5" y2="1200" class="k"/>
<line x1="2380.5" y1="765" x2="2380.5" y2="773" class="k"/>
<line x1="2406.5" y1="1208" x2="2406.5" y2="1200" class="k"/>
<line x1="2406.5" y1="765" x2="2406.5" y2="773" class="k"/>
<line x1="2433.5" y1="1208" x2="2433.5" y2="1200" class="k"/>
<line x1="2433.5" y1="765" x2="2433.5" y2="773" class="k"/>
<line x1="2460.5" y1="1208" x2="2460.5" y2="1200" class="k"/>
<line x1="2460.5" y1="765" x2="2460.5" y2="773" class="k"/>
<line x1="2486.5" y1="1208" x2="2486.5" y2="1193" class="k"/>
<line x1="2486.5" y1="765" x2="2486.5" y2="780" class="k"/>
<line x1="1426" y1="1164.0" x2="1452" y2="1164.0" class="k"/>
<line x1="2486" y1="1164.0" x2="2460" y2="1164.0" class="k"/>
<line x1="1426" y1="1119.8" x2="1452" y2="1119.8" class="k"/>
<line x1="2486" y1="1119.8" x2="2460" y2="1119.8" class="k"/>
<line x1="1426" y1="1075.5" x2="1452" y2="1075.5" class="k"/>
<line x1="2486" y1="1075.5" x2="2460" y2="1075.5" class="k"/>
<line x1="1426" y1="1031.2" x2="1452" y2="1031.2" class="k"/>
<line x1="2486" y1="1031.2" x2="2460" y2="1031.2" class="k"/>
<line x1="1426" y1="986.9" x2="1452" y2="986.9" class="k"/>
<line x1="2486" y1="986.9" x2="2460" y2="986.9" class="k"/>
<line x1="1426" y1="942.7" x2="1452" y2="942.7" class="k"/>
<line x1="2486" y1="942.7" x2="2460" y2="942.7" class="k"/>
<line x1="1426" y1="898.4" x2="1452" y2="898.4" class="k"/>
<line x1="2486" y1="898.4" x2="2460" y2="898.4" class="k"/>
<line x1="1426" y1="854.1" x2="1452" y2="854.1" class="k"/>
<line x1="2486" y1="854.1" x2="2460" y2="854.1" class="k"/>
<line x1="1426" y1="809.9" x2="1452" y2="809.9" class="k"/>
<line x1="2486" y1="809.9" x2="2460" y2="809.9" class="k"/>
<line x1="1426" y1="1208.3" x2="1452" y2="1208.3" class="k"/>
<line x1="2486" y1="1208.3" x2="2460" y2="1208.3" class="k"/>
<line x1="1426" y1="1199.4" x2="1439" y2="1199.4" class="k"/>
<line x1="2486" y1="1199.4" x2="2473" y2="1199.4" class="k"/>
<line x1="1426" y1="1190.6" x2="1439" y2="1190.6" class="k"/>
<line x1="2486" y1="1190.6" x2="2473" y2="1190.6" class="k"/>
<line x1="1426" y1="1181.7" x2="1439" y2="1181.7" class="k"/>
<line x1="2486" y1="1181.7" x2="2473" y2="1181.7" class="k"/>
<line x1="1426" y1="1172.9" x2="1439" y2="1172.9" class="k"/>
<line x1="2486" y1="1172.9" x2="2473" y2="1172.9" class="k"/>
<line x1="1426" y1="1155.2" x2="1439" y2="1155.2" class="k"/>
<line x1="2486" y1="1155.2" x2="2473" y2="1155.2" class="k"/>
<line x1="1426" y1="1146.3" x2="1439" y2="1146.3" class="k"/>
<line x1="2486" y1="1146.3" x2="2473" y2="1146.3" class="k"/>
<line x1="1426" y1="1137.5" x2="1439" y2="1137.5" class="k"/>
<line x1="2486" y1="1137.5" x2="2473" y2="1137.5" class="k"/>
<line x1="1426" y1="1128.6" x2="1439" y2="1128.6" class="k"/>
<line x1="2486" y1="1128.6" x2="2473" y2="1128.6" class="k"/>
<line x1="1426" y1="1110.9" x2="1439" y2="1110.9" class="k"/>
<line x1="2486" y1="1110.9" x2="2473" y2="1110.9" class="k"/>
<line x1="1426" y1="1102.1" x2="1439" y2="1102.1" class="k"/>
<line x1="2486" y1="1102.1" x2="2473" y2="1102.1" class="k"/>
<line x1="1426" y1="1093.2" x2="1439" y2="1093.2" class="k"/>
<line x1="2486" y1="1093.2" x2="2473" y2="1093.2" class="k"/>
<line x1="1426" y1="1084.3" x2="1439" y2="1084.3" class="k"/>
<line x1="2486" y1="1084.3" x2="2473" y2="1084.3" class="k"/>
<line x1="1426" y1="1066.6" x2="1439" y2="1066.6" class="k"/>
<line x1="2486" y1="1066.6" x2="2473" y2="1066.6" class="k"/>
<line x1="1426" y1="1057.8" x2="1439" y2="1057.8" class="k"/>
<line x1="2486" y1="1057.8" x2="2473" y2="1057.8" class="k"/>
<line x1="1426" y1="1048.9" x2="1439" y2="1048.9" class="k"/>
<line x1="2486" y1="1048.9" x2="2473" y2="1048.9" class="k"/>
<line x1="1426" y1="1040.1" x2="1439" y2="1040.1" class="k"/>
<line x1="2486" y1="1040.1" x2="2473" y2="1040.1" class="k"/>
<line x1="1426" y1="1022.4" x2="1439" y2="1022.4" class="k"/>
<line x1="2486" y1="1022.4" x2="2473" y2="1022.4" class="k"/>
<line x1="1426" y1="1013.5" x2="1439" y2="1013.5" class="k"/>
<line x1="2486" y1="1013.5" x2="2473" y2="1013.5" class="k"/>
<line x1="1426" y1="1004.7" x2="1439" y2="1004.7" class="k"/>
<line x1="2486" y1="1004.7" x2="2473" y2="1004.7" class="k"/>
<line x1="1426" y1="995.8" x2="1439" y2="995.8" class="k"/>
<line x1="2486" y1="995.8" x2="2473" y2="995.8" class="k"/>
<line x1="1426" y1="978.1" x2="1439" y2="978.1" class="k"/>
<line x1="2486" y1="978.1" x2="2473" y2="978.1" class="k"/>
<line x1="1426" y1="969.2" x2="1439" y2="969.2" class="k"/>
<line x1="2486" y1="969.2" x2="2473" y2="969.2" class="k"/>
<line x1="1426" y1="960.4" x2="1439" y2="960.4" class="k"/>
<line x1="2486" y1="960.4" x2="2473" y2="960.4" class="k"/>
<line x1="1426" y1="951.5" x2="1439" y2="951.5" class="k"/>
<line x1="2486" y1="951.5" x2="2473" y2="951.5" class="k"/>
<line x1="1426" y1="933.8" x2="1439" y2="933.8" class="k"/>
<line x1="2486" y1="933.8" x2="2473" y2="933.8" class="k"/>
<line x1="1426" y1="925.0" x2="1439" y2="925.0" class="k"/>
<line x1="2486" y1="925.0" x2="2473" y2="925.0" class="k"/>
<line x1="1426" y1="916.1" x2="1439" y2="916.1" class="k"/>
<line x1="2486" y1="916.1" x2="2473" y2="916.1" class="k"/>
<line x1="1426" y1="907.3" x2="1439" y2="907.3" class="k"/>
<line x1="2486" y1="907.3" x2="2473" y2="907.3" class="k"/>
<line x1="1426" y1="889.6" x2="1439" y2="889.6" class="k"/>
<line x1="2486" y1="889.6" x2="2473" y2="889.6" class="k"/>
<line x1="1426" y1="880.7" x2="1439" y2="880.7" class="k"/>
<line x1="2486" y1="880.7" x2="2473" y2="880.7" class="k"/>
<line x1="1426" y1="871.8" x2="1439" y2="871.8" class="k"/>
<line x1="2486" y1="871.8" x2="2473" y2="871.8" class="k"/>
<line x1="1426" y1="863.0" x2="1439" y2="863.0" class="k"/>
<line x1="2486" y1="863.0" x2="2473" y2="863.0" class="k"/>
<line x1="1426" y1="845.3" x2="1439" y2="845.3" class="k"/>
<line x1="2486" y1="845.3" x2="2473" y2="845.3" class="k"/>
<line x1="1426" y1="836.4" x2="1439" y2="836.4" class="k"/>
<line x1="2486" y1="836.4" x2="2473" y2="836.4" class="k"/>
<line x1="1426" y1="827.6" x2="1439" y2="827.6" class="k"/>
<line x1="2486" y1="827.6" x2="2473" y2="827.6" class="k"/>
<line x1="1426" y1="818.7" x2="1439" y2="818.7" class="k"/>
<line x1="2486" y1="818.7" x2="2473" y2="818.7" class="k"/>
<line x1="1426" y1="801.0" x2="1439" y2="801.0" class="k"/>
<line x1="2486" y1="801.0" x2="2473" y2="801.0" class="k"/>
<line x1="1426" y1="792.2" x2="1439" y2="792.2" class="k"/>
<line x1="2486" y1="792.2" x2="2473" y2="792.2" class="k"/>
<line x1="1426" y1="783.3" x2="1439" y2="783.3" class="k"/>
<line x1="2486" y1="783.3" x2="2473" y2="783.3" class="k"/>
<line x1="1426" y1="774.5" x2="1439" y2="774.5" class="k"/>
<line x1="2486" y1="774.5" x2="2473" y2="774.5" class="k"/>
<g clip-path="url(#cco)"><g transform="translate(1426 0) scale(0.1 1)"><polyline fill="none" stroke="#ffff00" stroke-width="1" vector-effect="non-scaling-stroke" shape-rendering="crispEdges" points="0 1206 8 1205 16 1204 23 1204 31 1206 39 1202 47 1206 54 1201 62 1199 70 1204 78 1204 85 1201 93 1200 101 1199 109 1207 116 1197 124 1201 132 1191 140 1201 148 1195 155 1197 163 1205 171 1205 179 1186 186 1204 194 1174 202 1206 210 1206 217 1205 225 1205 233 1203 241 1206 248 1205 256 1207 264 1205 272 1207 280 1190 287 1206 295 1200 303 1206 311 1201 318 1207 326 1205 334 1199 342 1197 349 1203 357 1198 365 1183 373 1205 381 1203 388 1206 396 1201 404 1200 412 1206 419 1168 427 1205 435 1199 443 1197 450 1204 458 1187 466 1203 474 1195 481 1203 489 1205 497 1205 505 1204 513 1205 520 1192 528 1202 536 1202 544 1205 551 1205 559 1203 567 1195 575 1200 582 1204 590 1204 598 1205 606 1203 613 1205 621 1202 629 1204 637 1199 645 1197 652 1202 660 1206 668 1202 676 1206 683 1194 691 1202 699 1206 707 1204 714 1204 722 1204 730 1199 738 1203 745 1205 753 1202 761 1206 769 1203 777 1203 784 1197 792 1205 800 1200 808 1202 815 1204 823 1204 831 1202 839 1205 846 1202 854 1205 862 1202 870 1203 878 1205 885 1202 893 1196 901 1204 909 1201 916 1205 924 1205 932 1204 940 1201 947 1206 955 1206 963 1202 971 1198 978 1203 986 1206 994 1203 1002 1203 1010 1207 1017 1200 1025 1205 1033 1202 1041 1200 1048 1205 1056 1205 1064 1201 1072 1205 1079 1206 1087 1203 1095 1205 1103 1205 1110 1198 1118 1201 1126 1205 1134 1188 1142 1204 1149 1192 1157 1205 1165 1206 1173 1205 1180 1207 1188 1198 1196 1204 1204 1204 1211 1198 1219 1207 1227 1194 1235 1204 1242 1201 1250 1203 1258 1188 1266 1204 1274 1204 1281 1205 1289 1202 1297 1203 1305 1205 1312 1188 1320 1197 1328 1201 1336 1195 1343 1206 1351 1206 1359 1204 1367 1204 1375 1187 1382 1204 1390 1201 1398 1199 1406 1199 1413 1193 1421 1204 1429 1203 1437 1199 1444 1203 1452 1196 1460 1207 1468 1206 1475 1206 1483 1204 1491 1201 1499 1197 1507 1205 1514 1206 1522 1204 1530 1204 1538 1206 1545 1205 1553 1205 1561 1193 1569 1203 1576 1203 1584 1206 1592 1204 1600 1204 1607 1206 1615 1202 1623 1205 1631 1207 1639 1204 1646 1204 1654 1207 1662 1200 1670 1204 1677 1198 1685 1201 1693 1204 1701 1204 1708 1202 1716 1201 1724 1204 1732 1197 1739 1204 1747 1192 1755 1206 1763 1206 1771 1204 1778 1205 1786 1202 1794 1193 1802 1199 1809 1207 1817 1201 1825 1200 1833 1206 1840 1185 1848 1199 1856 1206 1864 1202 1872 1204 1879 1203 1887 1204 1895 1205 1903 1202 1910 1189 1918 1193 1926 1203 1934 1198 1941 1202 1949 1203 1957 1202 1965 1204 1972 1204 1980 1206 1988 1199 1996 1200 2004 1203 2011 1206 2019 1204 2027 1198 2035 1201 2042 1204 2050 1188 2058 1201 2066 1206 2073 1204 2081 1203 2089 1204 2097 1196 2104 1205 2112 1202 2120 1204 2128 1202 2136 1202 2143 1199 2151 1207 2159 1196 2167 1179 2174 1194 2182 1202 2190 1202 2198 1198 2205 1204 2213 1206 2221 1206 2229 1204 2236 1206 2244 1206 2252 1200 2260 1203 2268 1186 2275 1207 2283 1203 2291 1200 2299 1201 2306 1204 2314 1204 2322 1205 2330 1206 2337 1206 2345 1204 2353 1195 2361 1200 2368 1199 2376 1189 2384 1204 2392 1202 2400 1195 2407 1201 2415 1199 2423 1201 2431 1199 2438 1194 2446 1202 2454 1206 2462 1203 2469 1205 2477 1197 2485 1202 2493 1202 2501 1202 2508 1206 2516 1204 2524 1204 2532 1201 2539 1195 2547 1198 2555 1194 2563 1203 2570 1202 2578 1191 2586 1194 2594 1164 2601 1196 2609 1174 2617 1204 2625 1119 2633 1174 2640 1169 2648 1131 2656 1124 2664 1048 2671 1000 2679 1132 2687 1151 2695 1127 2702 1091 2710 1131 2718 1137 2726 1072 2733 1154 2741 1159 2749 1103 2757 1142 2765 1130 2772 1152 2780 1094 2788 1155 2796 1118 2803 1126 2811 1100 2819 1134 2827 1101 2834 1137 2842 1207 2850 1065 2858 1152 2865 1115 2873 1142 2881 1165 2889 1145 2897 1140 2904 1158 2912 1186 2920 1199 2928 1135 2935 1201 2943 1197 2951 1207 2959 1065 2966 1154 2974 1113 2982 1128 2990 1116 2998 1148 3005 1207 3013 1174 3021 1155 3029 1123 3036 1121 3044 1137 3052 1104 3060 1188 3067 1144 3075 1164 3083 1177 3091 1176 3098 1099 3106 1104 3114 1057 3122 1168 3130 1123 3137 1133 3145 1158 3153 1187 3161 1133 3168 1076 3176 1142 3184 1157 3192 1136 3199 1184 3207 1207 3215 1180 3223 1179 3230 1062 3238 1145 3246 1191 3254 1082 3262 1105 3269 1200 3277 1167 3285 1185 3293 1179 3300 1155 3308 1103 3316 1205 3324 1159 3331 1165 3339 1162 3347 1208 3355 1131 3362 1109 3370 1106 3378 1180 3386 1162 3394 1102 3401 1207 3409 1202 3417 1205 3425 1090 3432 1070 3440 1206 3448 1033 3456 1143 3463 1109 3471 1124 3479 1155 3487 1178 3495 1143 3502 1106 3510 1103 3518 1144 3526 1073 3533 1168 3541 1098 3549 1173 3557 1100 3564 1090 3572 1145 3580 1138 3588 1107 3595 1157 3603 1180 3611 1078 3619 1134 3627 1144 3634 1182 3642 1111 3650 1163 3658 1149 3665 1142 3673 1114 3681 1139 3689 1157 3696 1177 3704 1110 3712 1164 3720 1155 3727 1111 3735 1154 3743 1154 3751 1170 3759 1112 3766 1152 3774 1151 3782 1112 3790 1104 3797 1121 3805 1057 3813 1163 3821 1151 3828 1127 3836 1145 3844 1150 3852 1200 3859 1181 3867 1127 3875 1105 3883 1139 3891 1107 3898 1101 3906 1105 3914 1103 3922 1156 3929 1157 3937 1153 3945 1139 3953 984 3960 1136 3968 1173 3976 1185 3984 1186 3992 1189 3999 1106 4007 1167 4015 1166 4023 1069 4030 1069 4038 1192 4046 1089 4054 1203 4061 1172 4069 1181 4077 1091 4085 1130 4092 1165 4100 1148 4108 1176 4116 1079 4124 1165 4131 1130 4139 1076 4147 1121 4155 1086 4162 1204 4170 1104 4178 1093 4186 1102 4193 1010 4201 1143 4209 1121 4217 1111 4224 1202 4232 1205 4240 1158 4248 1114 4256 1170 4263 1059 4271 1100 4279 1117 4287 985 4294 1090 4302 1160 4310 1110 4318 1189 4325 1201 4333 1129 4341 1181 4349 1104 4356 1092 4364 1145 4372 1086 4380 1160 4388 1140 4395 1080 4403 1116 4411 1174 4419 1070 4426 1176 4434 1150 4442 1065 4450 1189 4457 1142 4465 1101 4473 1112 4481 1097 4488 1075 4496 1127 4504 1121 4512 1142 4520 1076 4527 1178 4535 1189 4543 1175 4551 1062 4558 1035 4566 1177 4574 1061 4582 1144 4589 1143 4597 1171 4605 1189 4613 1184 4621 1161 4628 1135 4636 1026 4644 1067 4652 1139 4659 1131 4667 1129 4675 1153 4683 1153 4690 1168 4698 1051 4706 1117 4714 1048 4721 1093 4729 1137 4737 1173 4745 1112 4753 1160 4760 1161 4768 1140 4776 1138 4784 1116 4791 1141 4799 1115 4807 1182 4815 1179 4822 1110 4830 1096 4838 1172 4846 1125 4853 1141 4861 1107 4869 1102 4877 1205 4885 1162 4892 1135 4900 1136 4908 1163 4916 1090 4923 1095 4931 1079 4939 1139 4947 1155 4954 1142 4962 1115 4970 1085 4978 1140 4985 1125 4993 1029 5001 1120 5009 1146 5017 1138 5024 1131 5032 1165 5040 1095 5048 1168 5055 1152 5063 1118 5071 1103 5079 1136 5086 1145 5094 1195 5102 1124 5110 1103 5118 1141 5125 1127 5133 1126 5141 1166 5149 1114 5156 1164 5164 1176 5172 1173 5180 1074 5187 1117 5195 1179 5203 1131 5211 1001 5218 1142 5226 1125 5234 1131 5242 1138 5250 1168 5257 1178 5265 1128 5273 1176 5281 1120 5288 1032 5296 1165 5304 1100 5312 1171 5319 1092 5327 1110 5335 1079 5343 1061 5350 1173 5358 1137 5366 1097 5374 1103 5382 1146 5389 1160 5397 1058 5405 1178 5413 1145 5420 1144 5428 1134 5436 1152 5444 1125 5451 1149 5459 1180 5467 1144 5475 1147 5482 1107 5490 1090 5498 1087 5506 1182 5514 1104 5521 1137 5529 1146 5537 1109 5545 1114 5552 1167 5560 1167 5568 1168 5576 1118 5583 1136 5591 1111 5599 1099 5607 1172 5615 1175 5622 1083 5630 1132 5638 1169 5646 1105 5653 1196 5661 1156 5669 1138 5677 1129 5684 1126 5692 1082 5700 1139 5708 1042 5715 1091 5723 1176 5731 1141 5739 1092 5747 1130 5754 1151 5762 1138 5770 1168 5778 1111 5785 1110 5793 1131 5801 1131 5809 1067 5816 1134 5824 1137 5832 1151 5840 1179 5847 1168 5855 1130 5863 1183 5871 1169 5879 1155 5886 1183 5894 1178 5902 1077 5910 1175 5917 1207 5925 1167 5933 1157 5941 1130 5948 1202 5956 1127 5964 1136 5972 1138 5979 1146 5987 1161 5995 1163 6003 1207 6011 1115 6018 1127 6026 1128 6034 1178 6042 1129 6049 1103 6057 1196 6065 1081 6073 1114 6080 1192 6088 1197 6096 1149 6104 1098 6112 1125 6119 1128 6127 1160 6135 1158 6143 1129 6150 1130 6158 1130 6166 1131 6174 1164 6181 1164 6189 1129 6197 1186 6205 1182 6212 1151 6220 1122 6228 1165 6236 1154 6244 1119 6251 1170 6259 1176 6267 1107 6275 1186 6282 1139 6290 1175 6298 1190 6306 1161 6313 1105 6321 1155 6329 1180 6337 1155 6344 1089 6352 1118 6360 1117 6368 1071 6376 1075 6383 1089 6391 1144 6399 1127 6407 1204 6414 1159 6422 1124 6430 1175 6438 1135 6445 1120 6453 1122 6461 1141 6469 1073 6476 1169 6484 1134 6492 1106 6500 1140 6508 1116 6515 1128 6523 1166 6531 1148 6539 1132 6546 1153 6554 1101 6562 1131 6570 1020 6577 1198 6585 1176 6593 1103 6601 1202 6608 1137 6616 1141 6624 1094 6632 1107 6640 1164 6647 1165 6655 1144 6663 1074 6671 1101 6678 1136 6686 1173 6694 1139 6702 1125 6709 1160 6717 1122 6725 1135 6733 1157 6741 1151 6748 1137 6756 1169 6764 1117 6772 1164 6779 1163 6787 1156 6795 1203 6803 1191 6810 1150 6818 1157 6826 1103 6834 1191 6841 1192 6849 1171 6857 1113 6865 1155 6873 1172 6880 1165 6888 1191 6896 1123 6904 1115 6911 1139 6919 1167 6927 1093 6935 1017 6942 1148 6950 1089 6958 1144 6966 1149 6973 1168 6981 1134 6989 1096 6997 1110 7005 1107 7012 1020 7020 1152 7028 1155 7036 1140 7043 1143 7051 1101 7059 1159 7067 1059 7074 1083 7082 1120 7090 1111 7098 1111 7105 1153 7113 1159 7121 1156 7129 1143 7137 1133 7144 1106 7152 1125 7160 1117 7168 1141 7175 1137 7183 1123 7191 1125 7199 1164 7206 1168 7214 1135 7222 1102 7230 1154 7238 1152 7245 1172 7253 1146 7261 1171 7269 1165 7276 1140 7284 1149 7292 1143 7300 1110 7307 1162 7315 1155 7323 1160 7331 1128 7338 1136 7346 1152 7354 1161 7362 1142 7370 1164 7377 1140 7385 1053 7393 1123 7401 1074 7408 1155 7416 1117 7424 1151 7432 1174 7439 1143 7447 1143 7455 1139 7463 1111 7470 1052 7478 1100 7486 1113 7494 1064 7502 1052 7509 1089 7517 1074 7525 1082 7533 1008 7540 1036 7548 1046 7556 1002 7564 1086 7571 1059 7579 1003 7587 805 7595 789 7602 855 7610 897 7618 919 7626 950 7634 964 7641 971 7649 944 7657 1002 7665 962 7672 1013 7680 942 7688 981 7696 906 7703 974 7711 951 7719 1003 7727 987 7735 953 7742 1036 7750 995 7758 1032 7766 956 7773 1009 7781 983 7789 946 7797 975 7804 936 7812 1052 7820 971 7828 993 7835 1000 7843 1014 7851 1029 7859 1083 7867 1033 7874 998 7882 982 7890 1061 7898 1054 7905 1016 7913 1031 7921 1004 7929 1045 7936 1110 7944 1133 7952 1026 7960 1065 7967 1089 7975 1134 7983 1046 7991 1098 7999 1053 8006 1130 8014 1088 8022 1176 8030 1182 8037 1184 8045 1197 8053 1206 8061 1194 8068 1202 8076 1204 8084 1198 8092 1202 8099 1200 8107 1194 8115 1206 8123 1201 8131 1203 8138 1200 8146 1204 8154 1202 8162 1194 8169 1207 8177 1201 8185 1196 8193 1206 8200 1206 8208 1204 8216 1203 8224 1205 8232 1199 8239 1204 8247 1203 8255 1203 8263 1206 8270 1203 8278 1201 8286 1203 8294 1204 8301 1201 8309 1205 8317 1202 8325 1206 8332 1203 8340 1205 8348 1206 8356 1203 8364 1200 8371 1204 8379 1206 8387 1201 8395 1202 8402 1205 8410 1190 8418 1201 8426 1205 8433 1203 8441 1197 8449 1201 8457 1201 8464 1197 8472 1205 8480 1205 8488 1200 8496 1206 8503 1207 8511 1204 8519 1204 8527 1204 8534 1204 8542 1201 8550 1200 8558 1199 8565 1204 8573 1203 8581 1203 8589 1204 8596 1192 8604 1205 8612 1207 8620 1205 8628 1204 8635 1204 8643 1204 8651 1206 8659 1196 8666 1206 8674 1204 8682 1206 8690 1196 8697 1201 8705 1188 8713 1205 8721 1165 8728 1197 8736 1202 8744 1204 8752 1205 8760 1202 8767 1187 8775 1200 8783 1206 8791 1203 8798 1204 8806 1201 8814 1203 8822 1204 8829 1204 8837 1199 8845 1200 8853 1207 8861 1200 8868 1203 8876 1204 8884 1203 8892 1194 8899 1207 8907 1203 8915 1196 8923 1202 8930 1207 8938 1195 8946 1204 8954 1201 8961 1201 8969 1204 8977 1198 8985 1204 8993 1201 9000 1206 9008 1204 9016 1198 9024 1205 9031 1201 9039 1203 9047 1205 9055 1200 9062 1205 9070 1204 9078 1193 9086 1206 9093 1201 9101 1203 9109 1204 9117 1195 9125 1206 9132 1207 9140 1195 9148 1201 9156 1205 9163 1203 9171 1199 9179 1204 9187 1202 9194 1201 9202 1203 9210 1196 9218 1201 9225 1195 9233 1207 9241 1200 9249 1196 9257 1201 9264 1205 9272 1202 9280 1204 9288 1207 9295 1207 9303 1200 9311 1204 9319 1207 9326 1201 9334 1199 9342 1207 9350 1200 9358 1206 9365 1201 9373 1204 9381 1199 9389 1203 9396 1204 9404 1200 9412 1193 9420 1203 9427 1201 9435 1205 9443 1197 9451 1204 9458 1201 9466 1207 9474 1199 9482 1198 9490 1196 9497 1197 9505 1203 9513 1206 9521 1191 9528 1204 9536 1208 9544 1204 9552 1205 9559 1192 9567 1193 9575 1194 9583 1196 9590 1207 9598 1199 9606 1205 9614 1184 9622 1204 9629 1205 9637 1201 9645 1205 9653 1203 9660 1205 9668 1201 9676 1206 9684 1202 9691 1202 9699 1206 9707 1198 9715 1204 9722 1202 9730 1196 9738 1203 9746 1196 9754 1206 9761 1201 9769 1206 9777 1206 9785 1200 9792 1204 9800 1200 9808 1202 9816 1202 9823 1203 9831 1195 9839 1196 9847 1205 9855 1197 9862 1195 9870 1205 9878 1207 9886 1205 9893 1201 9901 1200 9909 1204 9917 1206 9924 1204 9932 1200 9940 1205 9948 1199 9955 1205 9963 1205 9971 1207 9979 1196 9987 1201 9994 1203 10002 1205 10010 1203 10018 1200 10025 1193 10033 1195 10041 1201 10049 1198 10056 1206 10064 1202 10072 1205 10080 1199 10087 1201 10095 1206 10103 1197 10111 1206 10119 1204 10126 1201 10134 1193 10142 1204 10150 1206 10157 1201 10165 1183 10173 1204 10181 1205 10188 1203 10196 1200 10204 1202 10212 1204 10219 1202 10227 1196 10235 1203 10243 1205 10251 1206 10258 1201 10266 1204 10274 1199 10282 1199 10289 1205 10297 1201 10305 1204 10313 1204 10320 1202 10328 1207 10336 1205 10344 1199 10352 1200 10359 1193 10367 1198 10375 1205 10383 1203 10390 1200 10398 1206 10406 1200 10414 1206 10421 1198 10429 1206 10437 1194 10445 1191 10452 1206 10460 1200 10468 1203 10476 1202 10484 1202 10491 1194 10499 1203 10507 1203 10515 1203 10522 1203 10530 1203 10538 1203 10546 1204 10553 1205 10561 1199 10569 1205 10577 1204 10584 1201 10592 1194 10600 1202"/></g></g>
<g clip-path="url(#cco)"><g transform="translate(1426 0) scale(0.1 1)"><polyline fill="none" stroke="#00ffff" stroke-width="1" vector-effect="non-scaling-stroke" shape-rendering="crispEdges" points="0 1198 8 1200 16 1193 23 1201 31 1206 39 1201 47 1205 54 1205 62 1182 70 1205 78 1206 85 1204 93 1196 101 1205 109 1203 116 1199 124 1204 132 1202 140 1199 148 1201 155 1203 163 1205 171 1200 179 1204 186 1202 194 1205 202 1197 210 1198 217 1207 225 1196 233 1197 241 1203 248 1203 256 1188 264 1200 272 1205 280 1202 287 1205 295 1207 303 1203 311 1196 318 1202 326 1195 334 1204 342 1201 349 1190 357 1202 365 1199 373 1204 381 1202 388 1185 396 1204 404 1201 412 1198 419 1201 427 1201 435 1201 443 1202 450 1199 458 1180 466 1199 474 1204 481 1200 489 1190 497 1191 505 1195 513 1207 520 1203 528 1205 536 1198 544 1187 551 1196 559 1200 567 1205 575 1204 582 1202 590 1177 598 1198 606 1204 613 1199 621 1192 629 1192 637 1198 645 1205 652 1198 660 1196 668 1194 676 1205 683 1203 691 1208 699 1206 707 1200 714 1202 722 1202 730 1196 738 1202 745 1193 753 1199 761 1206 769 1205 777 1196 784 1203 792 1201 800 1194 808 1200 815 1192 823 1163 831 1202 839 1201 846 1199 854 1202 862 1169 870 1207 878 1200 885 1195 893 1188 901 1198 909 1192 916 1205 924 1201 932 1201 940 1198 947 1206 955 1205 963 1198 971 1202 978 1191 986 1195 994 1201 1002 1202 1010 1206 1017 1197 1025 1197 1033 1178 1041 1198 1048 1205 1056 1205 1064 1199 1072 1199 1079 1201 1087 1206 1095 1192 1103 1201 1110 1201 1118 1199 1126 1203 1134 1192 1142 1197 1149 1200 1157 1200 1165 1200 1173 1194 1180 1194 1188 1198 1196 1199 1204 1190 1211 1203 1219 1185 1227 1200 1235 1198 1242 1192 1250 1200 1258 1194 1266 1206 1274 1188 1281 1179 1289 1197 1297 1200 1305 1199 1312 1190 1320 1200 1328 1198 1336 1202 1343 1202 1351 1203 1359 1203 1367 1202 1375 1198 1382 1205 1390 1204 1398 1194 1406 1202 1413 1206 1421 1197 1429 1202 1437 1197 1444 1205 1452 1195 1460 1203 1468 1193 1475 1193 1483 1194 1491 1204 1499 1199 1507 1193 1514 1205 1522 1205 1530 1204 1538 1198 1545 1199 1553 1202 1561 1204 1569 1203 1576 1190 1584 1201 1592 1193 1600 1165 1607 1197 1615 1203 1623 1189 1631 1203 1639 1196 1646 1197 1654 1201 1662 1200 1670 1187 1677 1201 1685 1196 1693 1204 1701 1200 1708 1198 1716 1199 1724 1197 1732 1201 1739 1197 1747 1202 1755 1206 1763 1202 1771 1204 1778 1205 1786 1199 1794 1205 1802 1203 1809 1204 1817 1202 1825 1197 1833 1197 1840 1204 1848 1195 1856 1200 1864 1202 1872 1195 1879 1204 1887 1190 1895 1196 1903 1193 1910 1199 1918 1201 1926 1195 1934 1199 1941 1191 1949 1201 1957 1200 1965 1196 1972 1201 1980 1205 1988 1202 1996 1204 2004 1200 2011 1192 2019 1193 2027 1203 2035 1202 2042 1202 2050 1200 2058 1206 2066 1202 2073 1200 2081 1195 2089 1205 2097 1199 2104 1199 2112 1183 2120 1202 2128 1198 2136 1197 2143 1144 2151 1194 2159 1193 2167 1205 2174 1201 2182 1196 2190 1199 2198 1202 2205 1203 2213 1190 2221 1197 2229 1207 2236 1202 2244 1195 2252 1201 2260 1191 2268 1205 2275 1194 2283 1185 2291 1201 2299 1200 2306 1192 2314 1205 2322 1200 2330 1201 2337 1204 2345 1205 2353 1202 2361 1202 2368 1198 2376 1201 2384 1198 2392 1199 2400 1205 2407 1184 2415 1154 2423 1197 2431 1193 2438 1205 2446 1202 2454 1203 2462 1196 2469 1202 2477 1204 2485 1203 2493 1200 2501 1205 2508 1181 2516 1190 2524 1208 2532 1198 2539 1189 2547 1200 2555 1198 2563 1198 2570 1195 2578 1190 2586 1191 2594 1162 2601 1188 2609 1172 2617 1201 2625 1116 2633 1170 2640 1161 2648 1133 2656 1122 2664 1050 2671 998 2679 1128 2687 1149 2695 1102 2702 1090 2710 1129 2718 1134 2726 1060 2733 1154 2741 1162 2749 1104 2757 1131 2765 1122 2772 1154 2780 1094 2788 1157 2796 1117 2803 1127 2811 1101 2819 1138 2827 1097 2834 1139 2842 1208 2850 1047 2858 1147 2865 1103 2873 1138 2881 1164 2889 1140 2897 1142 2904 1153 2912 1187 2920 1194 2928 1128 2935 1188 2943 1199 2951 1205 2959 1059 2966 1152 2974 1103 2982 1128 2990 1114 2998 1149 3005 1204 3013 1171 3021 1153 3029 1116 3036 1111 3044 1131 3052 1095 3060 1184 3067 1140 3075 1151 3083 1182 3091 1164 3098 1105 3106 1106 3114 1053 3122 1177 3130 1118 3137 1119 3145 1168 3153 1183 3161 1133 3168 1068 3176 1148 3184 1155 3192 1136 3199 1183 3207 1202 3215 1168 3223 1173 3230 1067 3238 1143 3246 1189 3254 1075 3262 1094 3269 1202 3277 1166 3285 1187 3293 1176 3300 1150 3308 1091 3316 1199 3324 1162 3331 1169 3339 1161 3347 1203 3355 1130 3362 1107 3370 1100 3378 1174 3386 1158 3394 1097 3401 1194 3409 1199 3417 1208 3425 1092 3432 1069 3440 1199 3448 1021 3456 1127 3463 1111 3471 1117 3479 1152 3487 1184 3495 1140 3502 1102 3510 1093 3518 1140 3526 1075 3533 1166 3541 1088 3549 1169 3557 1103 3564 1093 3572 1136 3580 1135 3588 1110 3595 1148 3603 1173 3611 1065 3619 1132 3627 1142 3634 1184 3642 1112 3650 1164 3658 1145 3665 1142 3673 1116 3681 1138 3689 1155 3696 1168 3704 1112 3712 1160 3720 1154 3727 1116 3735 1145 3743 1141 3751 1151 3759 1114 3766 1152 3774 1143 3782 1114 3790 1110 3797 1122 3805 1054 3813 1163 3821 1142 3828 1120 3836 1146 3844 1143 3852 1200 3859 1184 3867 1125 3875 1105 3883 1130 3891 1098 3898 1100 3906 1097 3914 1077 3922 1151 3929 1160 3937 1146 3945 1143 3953 987 3960 1133 3968 1173 3976 1178 3984 1181 3992 1177 3999 1108 4007 1173 4015 1169 4023 1058 4030 1067 4038 1191 4046 1090 4054 1201 4061 1170 4069 1168 4077 1089 4085 1140 4092 1151 4100 1139 4108 1162 4116 1076 4124 1168 4131 1113 4139 1078 4147 1119 4155 1082 4162 1196 4170 1099 4178 1091 4186 1103 4193 1002 4201 1139 4209 1117 4217 1104 4224 1206 4232 1204 4240 1152 4248 1111 4256 1163 4263 1064 4271 1096 4279 1105 4287 985 4294 1080 4302 1161 4310 1101 4318 1189 4325 1196 4333 1131 4341 1173 4349 1100 4356 1092 4364 1140 4372 1072 4380 1158 4388 1133 4395 1076 4403 1116 4411 1167 4419 1056 4426 1168 4434 1143 4442 1054 4450 1190 4457 1138 4465 1108 4473 1109 4481 1097 4488 1063 4496 1116 4504 1121 4512 1145 4520 1081 4527 1171 4535 1182 4543 1160 4551 1067 4558 1035 4566 1167 4574 1061 4582 1140 4589 1146 4597 1154 4605 1187 4613 1179 4621 1143 4628 1122 4636 1013 4644 1077 4652 1136 4659 1127 4667 1117 4675 1155 4683 1140 4690 1171 4698 1036 4706 1121 4714 1051 4721 1091 4729 1138 4737 1177 4745 1108 4753 1151 4760 1164 4768 1133 4776 1135 4784 1111 4791 1136 4799 1120 4807 1179 4815 1180 4822 1110 4830 1097 4838 1177 4846 1115 4853 1140 4861 1111 4869 1104 4877 1208 4885 1164 4892 1141 4900 1134 4908 1148 4916 1091 4923 1096 4931 1080 4939 1137 4947 1145 4954 1140 4962 1119 4970 1075 4978 1131 4985 1126 4993 1028 5001 1128 5009 1145 5017 1139 5024 1122 5032 1162 5040 1102 5048 1162 5055 1145 5063 1112 5071 1100 5079 1140 5086 1144 5094 1192 5102 1122 5110 1108 5118 1143 5125 1130 5133 1124 5141 1168 5149 1112 5156 1148 5164 1179 5172 1171 5180 1062 5187 1112 5195 1168 5203 1125 5211 1006 5218 1140 5226 1122 5234 1130 5242 1129 5250 1151 5257 1166 5265 1135 5273 1162 5281 1110 5288 1016 5296 1156 5304 1104 5312 1169 5319 1092 5327 1116 5335 1070 5343 1050 5350 1158 5358 1142 5366 1099 5374 1109 5382 1155 5389 1153 5397 1058 5405 1171 5413 1145 5420 1144 5428 1129 5436 1138 5444 1123 5451 1141 5459 1177 5467 1146 5475 1143 5482 1097 5490 1091 5498 1087 5506 1182 5514 1098 5521 1137 5529 1142 5537 1102 5545 1117 5552 1160 5560 1165 5568 1167 5576 1101 5583 1130 5591 1104 5599 1092 5607 1161 5615 1171 5622 1074 5630 1130 5638 1165 5646 1102 5653 1192 5661 1151 5669 1126 5677 1131 5684 1126 5692 1080 5700 1141 5708 1039 5715 1080 5723 1164 5731 1124 5739 1087 5747 1123 5754 1153 5762 1129 5770 1167 5778 1104 5785 1107 5793 1121 5801 1135 5809 1066 5816 1133 5824 1129 5832 1150 5840 1179 5847 1158 5855 1117 5863 1177 5871 1172 5879 1150 5886 1180 5894 1177 5902 1078 5910 1168 5917 1200 5925 1163 5933 1147 5941 1131 5948 1199 5956 1129 5964 1127 5972 1129 5979 1141 5987 1159 5995 1160 6003 1189 6011 1108 6018 1126 6026 1127 6034 1172 6042 1127 6049 1105 6057 1201 6065 1081 6073 1120 6080 1194 6088 1180 6096 1148 6104 1097 6112 1112 6119 1130 6127 1154 6135 1155 6143 1129 6150 1134 6158 1126 6166 1127 6174 1155 6181 1165 6189 1127 6197 1178 6205 1183 6212 1136 6220 1117 6228 1149 6236 1153 6244 1107 6251 1159 6259 1171 6267 1103 6275 1176 6282 1124 6290 1179 6298 1190 6306 1151 6313 1094 6321 1156 6329 1173 6337 1154 6344 1084 6352 1107 6360 1100 6368 1071 6376 1067 6383 1090 6391 1131 6399 1125 6407 1205 6414 1159 6422 1128 6430 1166 6438 1132 6445 1123 6453 1131 6461 1129 6469 1077 6476 1171 6484 1129 6492 1097 6500 1138 6508 1116 6515 1113 6523 1163 6531 1141 6539 1134 6546 1139 6554 1096 6562 1138 6570 1008 6577 1204 6585 1173 6593 1100 6601 1202 6608 1138 6616 1132 6624 1091 6632 1109 6640 1161 6647 1158 6655 1146 6663 1080 6671 1088 6678 1142 6686 1167 6694 1133 6702 1119 6709 1155 6717 1109 6725 1137 6733 1157 6741 1140 6748 1138 6756 1168 6764 1119 6772 1166 6779 1166 6787 1149 6795 1205 6803 1181 6810 1153 6818 1155 6826 1107 6834 1190 6841 1175 6849 1160 6857 1101 6865 1154 6873 1173 6880 1156 6888 1177 6896 1066 6904 1053 6911 1095 6919 1140 6927 1085 6935 1015 6942 1123 6950 1084 6958 1102 6966 1110 6973 1142 6981 1085 6989 1088 6997 1103 7005 1098 7012 1022 7020 1115 7028 1137 7036 1094 7043 1100 7051 1102 7059 1127 7067 1047 7074 1000 7082 1062 7090 1107 7098 1103 7105 1140 7113 1132 7121 1121 7129 1100 7137 1083 7144 1100 7152 1070 7160 1056 7168 1097 7175 1127 7183 1066 7191 1070 7199 1134 7206 1142 7214 1126 7222 1086 7230 1143 7238 1120 7245 1148 7253 1104 7261 1146 7269 1137 7276 1095 7284 1110 7292 1099 7300 1098 7307 1131 7315 1120 7323 1128 7331 1084 7338 1089 7346 1114 7354 1130 7362 1098 7370 1153 7377 1094 7385 1041 7393 1067 7401 1075 7408 1119 7416 1056 7424 1113 7432 1151 7439 1119 7447 1101 7455 1092 7463 1100 7470 1047 7478 1103 7486 1055 7494 1056 7502 1022 7509 1074 7517 1063 7525 1083 7533 1009 7540 1036 7548 1044 7556 996 7564 1095 7571 1054 7579 999 7587 793 7595 786 7602 858 7610 892 7618 907 7626 936 7634 948 7641 971 7649 946 7657 1004 7665 959 7672 994 7680 944 7688 978 7696 908 7703 978 7711 948 7719 988 7727 987 7735 944 7742 1036 7750 1000 7758 1040 7766 954 7773 1009 7781 970 7789 928 7797 970 7804 942 7812 1016 7820 970 7828 994 7835 1001 7843 999 7851 1030 7859 1064 7867 1028 7874 992 7882 973 7890 1060 7898 1047 7905 1002 7913 1027 7921 1001 7929 1040 7936 1076 7944 1126 7952 1024 7960 1064 7967 1080 7975 1134 7983 1047 7991 1103 7999 1054 8006 1123 8014 1078 8022 1177 8030 1176 8037 1168 8045 1197 8053 1196 8061 1197 8068 1191 8076 1183 8084 1206 8092 1206 8099 1196 8107 1206 8115 1201 8123 1205 8131 1197 8138 1200 8146 1178 8154 1203 8162 1197 8169 1202 8177 1198 8185 1204 8193 1192 8200 1198 8208 1184 8216 1181 8224 1205 8232 1203 8239 1207 8247 1204 8255 1200 8263 1184 8270 1203 8278 1207 8286 1195 8294 1199 8301 1201 8309 1204 8317 1194 8325 1195 8332 1194 8340 1195 8348 1190 8356 1195 8364 1202 8371 1190 8379 1199 8387 1203 8395 1203 8402 1205 8410 1204 8418 1201 8426 1201 8433 1205 8441 1197 8449 1196 8457 1194 8464 1200 8472 1198 8480 1195 8488 1203 8496 1185 8503 1198 8511 1206 8519 1202 8527 1185 8534 1200 8542 1192 8550 1196 8558 1194 8565 1189 8573 1192 8581 1191 8589 1202 8596 1197 8604 1201 8612 1203 8620 1202 8628 1206 8635 1201 8643 1202 8651 1204 8659 1195 8666 1203 8674 1192 8682 1202 8690 1204 8697 1198 8705 1195 8713 1198 8721 1202 8728 1197 8736 1196 8744 1174 8752 1198 8760 1201 8767 1200 8775 1177 8783 1204 8791 1187 8798 1193 8806 1198 8814 1200 8822 1199 8829 1201 8837 1205 8845 1201 8853 1200 8861 1203 8868 1204 8876 1179 8884 1199 8892 1204 8899 1201 8907 1204 8915 1202 8923 1204 8930 1206 8938 1205 8946 1198 8954 1200 8961 1203 8969 1203 8977 1198 8985 1207 8993 1205 9000 1198 9008 1200 9016 1207 9024 1199 9031 1202 9039 1197 9047 1199 9055 1200 9062 1202 9070 1189 9078 1199 9086 1200 9093 1203 9101 1181 9109 1199 9117 1206 9125 1206 9132 1199 9140 1169 9148 1202 9156 1197 9163 1192 9171 1204 9179 1203 9187 1202 9194 1192 9202 1202 9210 1184 9218 1202 9225 1206 9233 1201 9241 1206 9249 1196 9257 1181 9264 1201 9272 1204 9280 1172 9288 1180 9295 1186 9303 1207 9311 1201 9319 1198 9326 1195 9334 1205 9342 1206 9350 1202 9358 1189 9365 1196 9373 1203 9381 1192 9389 1198 9396 1204 9404 1206 9412 1204 9420 1199 9427 1204 9435 1202 9443 1198 9451 1195 9458 1199 9466 1195 9474 1202 9482 1197 9490 1184 9497 1186 9505 1191 9513 1192 9521 1196 9528 1197 9536 1198 9544 1181 9552 1206 9559 1191 9567 1195 9575 1207 9583 1198 9590 1191 9598 1196 9606 1187 9614 1200 9622 1201 9629 1188 9637 1198 9645 1202 9653 1201 9660 1182 9668 1186 9676 1202 9684 1203 9691 1202 9699 1200 9707 1200 9715 1197 9722 1205 9730 1205 9738 1200 9746 1197 9754 1178 9761 1186 9769 1198 9777 1204 9785 1204 9792 1194 9800 1205 9808 1207 9816 1203 9823 1196 9831 1205 9839 1199 9847 1191 9855 1195 9862 1191 9870 1204 9878 1204 9886 1198 9893 1196 9901 1186 9909 1194 9917 1201 9924 1199 9932 1205 9940 1197 9948 1198 9955 1199 9963 1201 9971 1201 9979 1200 9987 1191 9994 1192 10002 1205 10010 1194 10018 1201 10025 1158 10033 1204 10041 1194 10049 1175 10056 1207 10064 1174 10072 1190 10080 1207 10087 1202 10095 1195 10103 1186 10111 1197 10119 1204 10126 1199 10134 1206 10142 1195 10150 1196 10157 1204 10165 1202 10173 1185 10181 1198 10188 1200 10196 1202 10204 1207 10212 1203 10219 1203 10227 1195 10235 1200 10243 1204 10251 1192 10258 1199 10266 1201 10274 1201 10282 1205 10289 1201 10297 1198 10305 1204 10313 1201 10320 1204 10328 1198 10336 1196 10344 1201 10352 1194 10359 1199 10367 1199 10375 1204 10383 1183 10390 1200 10398 1202 10406 1188 10414 1207 10421 1202 10429 1198 10437 1196 10445 1202 10452 1204 10460 1202 10468 1199 10476 1206 10484 1204 10491 1182 10499 1204 10507 1204 10515 1203 10522 1196 10530 1202 10538 1202 10546 1204 10553 1201 10561 1203 10569 1188 10577 1201 10584 1184 10592 1199 10600 1195"/></g></g>
<g clip-path="url(#cco)"><g transform="translate(1426 0) scale(0.1 1)"><polyline fill="none" stroke="#ff00ff" stroke-width="1" vector-effect="non-scaling-stroke" shape-rendering="crispEdges" points="0 1200 8 1207 16 1206 23 1204 31 1187 39 1207 47 1173 54 1198 62 1204 70 1204 78 1203 85 1206 93 1203 101 1199 109 1194 116 1203 124 1202 132 1207 140 1200 148 1195 155 1195 163 1200 171 1204 179 1198 186 1207 194 1202 202 1189 210 1202 217 1205 225 1207 233 1205 241 1166 248 1197 256 1207 264 1196 272 1193 280 1205 287 1190 295 1205 303 1204 311 1203 318 1197 326 1194 334 1204 342 1196 349 1196 357 1201 365 1182 373 1198 381 1199 388 1202 396 1195 404 1201 412 1188 419 1199 427 1207 435 1202 443 1201 450 1183 458 1199 466 1206 474 1200 481 1169 489 1205 497 1203 505 1194 513 1203 520 1203 528 1194 536 1177 544 1199 551 1196 559 1204 567 1195 575 1197 582 1207 590 1194 598 1204 606 1205 613 1186 621 1202 629 1191 637 1195 645 1204 652 1202 660 1195 668 1200 676 1202 683 1205 691 1194 699 1200 707 1204 714 1202 722 1201 730 1205 738 1196 745 1195 753 1189 761 1203 769 1201 777 1198 784 1202 792 1201 800 1198 808 1200 815 1193 823 1193 831 1205 839 1200 846 1201 854 1207 862 1199 870 1182 878 1191 885 1184 893 1205 901 1196 909 1195 916 1203 924 1192 932 1204 940 1201 947 1176 955 1206 963 1203 971 1199 978 1199 986 1200 994 1196 1002 1195 1010 1205 1017 1203 1025 1186 1033 1198 1041 1185 1048 1199 1056 1191 1064 1197 1072 1198 1079 1207 1087 1196 1095 1203 1103 1204 1110 1200 1118 1193 1126 1203 1134 1192 1142 1200 1149 1193 1157 1203 1165 1198 1173 1203 1180 1175 1188 1203 1196 1185 1204 1198 1211 1207 1219 1202 1227 1193 1235 1206 1242 1202 1250 1190 1258 1204 1266 1193 1274 1202 1281 1205 1289 1197 1297 1200 1305 1201 1312 1204 1320 1205 1328 1206 1336 1191 1343 1179 1351 1184 1359 1200 1367 1203 1375 1189 1382 1192 1390 1205 1398 1205 1406 1196 1413 1205 1421 1188 1429 1206 1437 1204 1444 1206 1452 1205 1460 1200 1468 1205 1475 1198 1483 1183 1491 1199 1499 1198 1507 1189 1514 1199 1522 1203 1530 1206 1538 1201 1545 1190 1553 1206 1561 1161 1569 1193 1576 1197 1584 1201 1592 1206 1600 1186 1607 1203 1615 1201 1623 1206 1631 1199 1639 1188 1646 1200 1654 1204 1662 1204 1670 1184 1677 1205 1685 1200 1693 1184 1701 1204 1708 1204 1716 1201 1724 1205 1732 1195 1739 1204 1747 1196 1755 1201 1763 1196 1771 1203 1778 1204 1786 1201 1794 1201 1802 1204 1809 1196 1817 1198 1825 1199 1833 1204 1840 1193 1848 1193 1856 1205 1864 1196 1872 1204 1879 1169 1887 1206 1895 1205 1903 1205 1910 1190 1918 1201 1926 1206 1934 1201 1941 1198 1949 1185 1957 1198 1965 1206 1972 1182 1980 1201 1988 1196 1996 1191 2004 1188 2011 1204 2019 1203 2027 1201 2035 1204 2042 1198 2050 1204 2058 1197 2066 1194 2073 1202 2081 1196 2089 1204 2097 1203 2104 1198 2112 1189 2120 1194 2128 1205 2136 1200 2143 1204 2151 1196 2159 1199 2167 1203 2174 1202 2182 1199 2190 1195 2198 1201 2205 1173 2213 1182 2221 1193 2229 1205 2236 1204 2244 1202 2252 1196 2260 1192 2268 1204 2275 1200 2283 1200 2291 1187 2299 1204 2306 1166 2314 1200 2322 1182 2330 1197 2337 1200 2345 1195 2353 1205 2361 1204 2368 1205 2376 1201 2384 1203 2392 1198 2400 1193 2407 1163 2415 1192 2423 1195 2431 1202 2438 1199 2446 1199 2454 1205 2462 1203 2469 1202 2477 1203 2485 1189 2493 1204 2501 1198 2508 1187 2516 1198 2524 1186 2532 1207 2539 1206 2547 1184 2555 1183 2563 1196 2570 1185 2578 1191 2586 1187 2594 1163 2601 1179 2609 1174 2617 1197 2625 1117 2633 1169 2640 1157 2648 1123 2656 1128 2664 1042 2671 1004 2679 1122 2687 1144 2695 1125 2702 1092 2710 1133 2718 1136 2726 1061 2733 1142 2741 1162 2749 1096 2757 1124 2765 1127 2772 1152 2780 1079 2788 1148 2796 1123 2803 1122 2811 1106 2819 1130 2827 1098 2834 1140 2842 1208 2850 1064 2858 1153 2865 1112 2873 1135 2881 1162 2889 1130 2897 1135 2904 1155 2912 1196 2920 1186 2928 1123 2935 1195 2943 1194 2951 1207 2959 1066 2966 1148 2974 1107 2982 1123 2990 1104 2998 1150 3005 1192 3013 1166 3021 1140 3029 1111 3036 1124 3044 1135 3052 1106 3060 1192 3067 1142 3075 1155 3083 1170 3091 1171 3098 1099 3106 1098 3114 1055 3122 1170 3130 1115 3137 1130 3145 1162 3153 1188 3161 1130 3168 1068 3176 1132 3184 1158 3192 1130 3199 1179 3207 1204 3215 1173 3223 1176 3230 1066 3238 1148 3246 1192 3254 1079 3262 1092 3269 1200 3277 1153 3285 1176 3293 1182 3300 1153 3308 1102 3316 1205 3324 1159 3331 1169 3339 1153 3347 1202 3355 1132 3362 1108 3370 1107 3378 1173 3386 1157 3394 1104 3401 1202 3409 1187 3417 1206 3425 1075 3432 1063 3440 1204 3448 1021 3456 1145 3463 1112 3471 1121 3479 1156 3487 1175 3495 1143 3502 1092 3510 1101 3518 1142 3526 1069 3533 1163 3541 1096 3549 1156 3557 1087 3564 1089 3572 1128 3580 1131 3588 1097 3595 1152 3603 1174 3611 1063 3619 1124 3627 1136 3634 1178 3642 1113 3650 1164 3658 1141 3665 1139 3673 1110 3681 1134 3689 1148 3696 1165 3704 1111 3712 1163 3720 1153 3727 1116 3735 1149 3743 1158 3751 1168 3759 1110 3766 1150 3774 1151 3782 1114 3790 1109 3797 1129 3805 1052 3813 1163 3821 1145 3828 1131 3836 1146 3844 1140 3852 1188 3859 1178 3867 1124 3875 1107 3883 1137 3891 1106 3898 1099 3906 1096 3914 1105 3922 1155 3929 1163 3937 1154 3945 1136 3953 982 3960 1137 3968 1172 3976 1189 3984 1182 3992 1177 3999 1105 4007 1158 4015 1162 4023 1057 4030 1063 4038 1182 4046 1095 4054 1202 4061 1165 4069 1179 4077 1086 4085 1134 4092 1166 4100 1139 4108 1156 4116 1058 4124 1159 4131 1119 4139 1075 4147 1115 4155 1088 4162 1188 4170 1107 4178 1077 4186 1097 4193 1006 4201 1144 4209 1123 4217 1101 4224 1207 4232 1197 4240 1161 4248 1096 4256 1168 4263 1067 4271 1094 4279 1118 4287 985 4294 1087 4302 1149 4310 1101 4318 1185 4325 1197 4333 1129 4341 1173 4349 1097 4356 1097 4364 1138 4372 1087 4380 1156 4388 1130 4395 1071 4403 1108 4411 1164 4419 1072 4426 1167 4434 1143 4442 1062 4450 1195 4457 1144 4465 1111 4473 1112 4481 1099 4488 1077 4496 1125 4504 1116 4512 1137 4520 1083 4527 1173 4535 1181 4543 1178 4551 1043 4558 1035 4566 1175 4574 1057 4582 1145 4589 1143 4597 1161 4605 1190 4613 1173 4621 1159 4628 1133 4636 1020 4644 1072 4652 1133 4659 1126 4667 1127 4675 1155 4683 1152 4690 1172 4698 1044 4706 1104 4714 1049 4721 1093 4729 1143 4737 1163 4745 1115 4753 1162 4760 1158 4768 1134 4776 1135 4784 1114 4791 1127 4799 1105 4807 1171 4815 1168 4822 1108 4830 1095 4838 1174 4846 1106 4853 1131 4861 1107 4869 1103 4877 1207 4885 1155 4892 1143 4900 1128 4908 1140 4916 1083 4923 1096 4931 1074 4939 1125 4947 1143 4954 1141 4962 1120 4970 1071 4978 1129 4985 1120 4993 1028 5001 1120 5009 1148 5017 1143 5024 1120 5032 1164 5040 1100 5048 1160 5055 1149 5063 1114 5071 1100 5079 1134 5086 1148 5094 1192 5102 1123 5110 1105 5118 1136 5125 1125 5133 1116 5141 1161 5149 1114 5156 1162 5164 1177 5172 1173 5180 1070 5187 1119 5195 1176 5203 1125 5211 1002 5218 1139 5226 1125 5234 1134 5242 1133 5250 1160 5257 1179 5265 1132 5273 1181 5281 1117 5288 1026 5296 1155 5304 1105 5312 1170 5319 1091 5327 1107 5335 1062 5343 1057 5350 1176 5358 1141 5366 1103 5374 1112 5382 1148 5389 1159 5397 1064 5405 1172 5413 1149 5420 1139 5428 1126 5436 1144 5444 1123 5451 1141 5459 1178 5467 1141 5475 1147 5482 1100 5490 1095 5498 1094 5506 1164 5514 1094 5521 1131 5529 1147 5537 1103 5545 1111 5552 1167 5560 1162 5568 1160 5576 1114 5583 1130 5591 1100 5599 1082 5607 1172 5615 1176 5622 1072 5630 1139 5638 1160 5646 1101 5653 1196 5661 1154 5669 1135 5677 1138 5684 1129 5692 1064 5700 1133 5708 1023 5715 1090 5723 1169 5731 1143 5739 1093 5747 1108 5754 1155 5762 1136 5770 1166 5778 1109 5785 1114 5793 1125 5801 1134 5809 1069 5816 1125 5824 1132 5832 1144 5840 1174 5847 1169 5855 1122 5863 1170 5871 1162 5879 1141 5886 1190 5894 1153 5902 1056 5910 1177 5917 1200 5925 1166 5933 1148 5941 1124 5948 1191 5956 1125 5964 1136 5972 1136 5979 1144 5987 1159 5995 1154 6003 1207 6011 1109 6018 1122 6026 1122 6034 1179 6042 1126 6049 1109 6057 1198 6065 1062 6073 1117 6080 1195 6088 1193 6096 1138 6104 1093 6112 1121 6119 1124 6127 1157 6135 1156 6143 1129 6150 1127 6158 1117 6166 1128 6174 1150 6181 1163 6189 1130 6197 1184 6205 1173 6212 1148 6220 1118 6228 1165 6236 1155 6244 1100 6251 1160 6259 1174 6267 1105 6275 1182 6282 1129 6290 1177 6298 1191 6306 1158 6313 1096 6321 1156 6329 1177 6337 1143 6344 1096 6352 1118 6360 1102 6368 1070 6376 1075 6383 1077 6391 1145 6399 1124 6407 1195 6414 1157 6422 1125 6430 1175 6438 1122 6445 1125 6453 1124 6461 1139 6469 1075 6476 1166 6484 1138 6492 1101 6500 1135 6508 1113 6515 1131 6523 1155 6531 1148 6539 1130 6546 1150 6554 1103 6562 1127 6570 1020 6577 1204 6585 1176 6593 1097 6601 1201 6608 1132 6616 1131 6624 1092 6632 1108 6640 1154 6647 1158 6655 1139 6663 1079 6671 1088 6678 1128 6686 1175 6694 1139 6702 1121 6709 1158 6717 1117 6725 1132 6733 1153 6741 1141 6748 1129 6756 1156 6764 1114 6772 1164 6779 1153 6787 1158 6795 1205 6803 1186 6810 1150 6818 1156 6826 1099 6834 1184 6841 1194 6849 1166 6857 1109 6865 1130 6873 1170 6880 1168 6888 1194 6896 1152 6904 1133 6911 1135 6919 1170 6927 1109 6935 1031 6942 1147 6950 1101 6958 1153 6966 1194 6973 1187 6981 1200 6989 1111 6997 1113 7005 1110 7012 1045 7020 1189 7028 1144 7036 1167 7043 1148 7051 1115 7059 1179 7067 1074 7074 1176 7082 1135 7090 1125 7098 1121 7105 1144 7113 1163 7121 1163 7129 1176 7137 1189 7144 1118 7152 1140 7160 1198 7168 1200 7175 1145 7183 1169 7191 1181 7199 1168 7206 1199 7214 1150 7222 1111 7230 1152 7238 1153 7245 1182 7253 1155 7261 1194 7269 1181 7276 1149 7284 1166 7292 1189 7300 1120 7307 1187 7315 1186 7323 1187 7331 1134 7338 1152 7346 1191 7354 1205 7362 1160 7370 1173 7377 1204 7385 1063 7393 1203 7401 1082 7408 1184 7416 1139 7424 1197 7432 1191 7439 1147 7447 1172 7455 1148 7463 1114 7470 1065 7478 1105 7486 1120 7494 1080 7502 1068 7509 1091 7517 1066 7525 1089 7533 1028 7540 1054 7548 1066 7556 1021 7564 1107 7571 1065 7579 1015 7587 832 7595 813 7602 890 7610 921 7618 947 7626 975 7634 976 7641 990 7649 955 7657 1026 7665 985 7672 1032 7680 967 7688 1005 7696 937 7703 991 7711 976 7719 1019 7727 1012 7735 970 7742 1055 7750 1013 7758 1045 7766 980 7773 1019 7781 1003 7789 962 7797 993 7804 967 7812 1062 7820 992 7828 1011 7835 1013 7843 1032 7851 1048 7859 1096 7867 1048 7874 1017 7882 1005 7890 1069 7898 1069 7905 1034 7913 1043 7921 1026 7929 1064 7936 1125 7944 1136 7952 1022 7960 1059 7967 1075 7975 1126 7983 1039 7991 1101 7999 1044 8006 1125 8014 1080 8022 1172 8030 1184 8037 1169 8045 1200 8053 1160 8061 1195 8068 1195 8076 1202 8084 1196 8092 1192 8099 1197 8107 1198 8115 1201 8123 1206 8131 1205 8138 1197 8146 1189 8154 1191 8162 1207 8169 1200 8177 1206 8185 1206 8193 1199 8200 1201 8208 1203 8216 1199 8224 1189 8232 1194 8239 1201 8247 1198 8255 1198 8263 1204 8270 1197 8278 1204 8286 1200 8294 1197 8301 1207 8309 1203 8317 1206 8325 1205 8332 1204 8340 1200 8348 1201 8356 1200 8364 1206 8371 1190 8379 1192 8387 1202 8395 1204 8402 1192 8410 1206 8418 1197 8426 1204 8433 1199 8441 1196 8449 1203 8457 1203 8464 1193 8472 1200 8480 1200 8488 1206 8496 1201 8503 1196 8511 1200 8519 1192 8527 1203 8534 1195 8542 1193 8550 1197 8558 1205 8565 1206 8573 1202 8581 1199 8589 1196 8596 1195 8604 1192 8612 1195 8620 1195 8628 1207 8635 1201 8643 1200 8651 1175 8659 1200 8666 1203 8674 1192 8682 1199 8690 1202 8697 1206 8705 1201 8713 1183 8721 1204 8728 1196 8736 1189 8744 1205 8752 1195 8760 1177 8767 1197 8775 1197 8783 1189 8791 1204 8798 1169 8806 1207 8814 1204 8822 1199 8829 1206 8837 1204 8845 1197 8853 1183 8861 1201 8868 1194 8876 1203 8884 1206 8892 1201 8899 1201 8907 1196 8915 1203 8923 1202 8930 1199 8938 1187 8946 1203 8954 1197 8961 1205 8969 1204 8977 1205 8985 1207 8993 1203 9000 1197 9008 1200 9016 1200 9024 1194 9031 1207 9039 1203 9047 1206 9055 1207 9062 1205 9070 1200 9078 1198 9086 1206 9093 1197 9101 1198 9109 1201 9117 1200 9125 1204 9132 1200 9140 1167 9148 1191 9156 1170 9163 1201 9171 1197 9179 1205 9187 1204 9194 1198 9202 1200 9210 1203 9218 1201 9225 1165 9233 1192 9241 1207 9249 1207 9257 1199 9264 1194 9272 1199 9280 1206 9288 1192 9295 1200 9303 1197 9311 1200 9319 1199 9326 1173 9334 1198 9342 1197 9350 1176 9358 1194 9365 1194 9373 1202 9381 1185 9389 1201 9396 1207 9404 1206 9412 1199 9420 1189 9427 1203 9435 1196 9443 1206 9451 1202 9458 1201 9466 1193 9474 1205 9482 1198 9490 1201 9497 1200 9505 1206 9513 1202 9521 1189 9528 1203 9536 1196 9544 1202 9552 1201 9559 1202 9567 1191 9575 1186 9583 1198 9590 1200 9598 1198 9606 1199 9614 1203 9622 1193 9629 1201 9637 1194 9645 1206 9653 1200 9660 1206 9668 1203 9676 1198 9684 1202 9691 1205 9699 1205 9707 1201 9715 1200 9722 1203 9730 1194 9738 1206 9746 1199 9754 1188 9761 1206 9769 1165 9777 1181 9785 1205 9792 1184 9800 1192 9808 1198 9816 1204 9823 1202 9831 1201 9839 1196 9847 1205 9855 1199 9862 1203 9870 1207 9878 1194 9886 1198 9893 1205 9901 1197 9909 1190 9917 1199 9924 1206 9932 1196 9940 1207 9948 1195 9955 1201 9963 1201 9971 1197 9979 1202 9987 1207 9994 1190 10002 1200 10010 1198 10018 1194 10025 1207 10033 1203 10041 1202 10049 1205 10056 1178 10064 1206 10072 1191 10080 1206 10087 1202 10095 1201 10103 1196 10111 1199 10119 1202 10126 1200 10134 1203 10142 1205 10150 1196 10157 1201 10165 1191 10173 1202 10181 1201 10188 1189 10196 1200 10204 1205 10212 1194 10219 1200 10227 1207 10235 1205 10243 1203 10251 1201 10258 1204 10266 1205 10274 1198 10282 1207 10289 1203 10297 1191 10305 1206 10313 1201 10320 1200 10328 1196 10336 1202 10344 1200 10352 1192 10359 1204 10367 1194 10375 1196 10383 1202 10390 1205 10398 1204 10406 1199 10414 1203 10421 1198 10429 1200 10437 1186 10445 1184 10452 1192 10460 1197 10468 1180 10476 1193 10484 1203 10491 1199 10499 1207 10507 1195 10515 1199 10522 1192 10530 1198 10538 1186 10546 1203 10553 1174 10561 1201 10569 1203 10577 1199 10584 1195 10592 1194 10600 1202"/></g></g>
<g clip-path="url(#cco)"><g transform="translate(1426 0) scale(0.1 1)"><polyline fill="none" stroke="#876657" stroke-width="3" vector-effect="non-scaling-stroke" shape-rendering="crispEdges" points="0 1164 8 1204 16 1193 23 1200 31 1203 39 1177 47 1196 54 1187 62 1203 70 1183 78 1192 85 1171 93 1197 101 1203 109 1179 116 1202 124 1202 132 1202 140 1178 148 1190 155 1152 163 1163 171 1196 179 1176 186 1205 194 1204 202 1195 210 1199 217 1196 225 1191 233 1204 241 1197 248 1165 256 1177 264 1199 272 1190 280 1206 287 1204 295 1208 303 1191 311 1198 318 1176 326 1125 334 1194 342 1190 349 1203 357 1182 365 1171 373 1199 381 1184 388 1197 396 1203 404 1200 412 1197 419 1201 427 1167 435 1199 443 1202 450 1174 458 1183 466 1203 474 1204 481 1193 489 1203 497 1199 505 1181 513 1200 520 1197 528 1187 536 1179 544 1190 551 1147 559 1203 567 1165 575 1160 582 1200 590 1198 598 1190 606 1206 613 1196 621 1183 629 1150 637 1179 645 1204 652 1182 660 1114 668 1191 676 1198 683 1200 691 1201 699 1153 707 1203 714 1196 722 1193 730 1196 738 1183 745 1199 753 1200 761 1191 769 1202 777 1188 784 1175 792 1192 800 1202 808 1173 815 1202 823 1185 831 1178 839 1206 846 1188 854 1146 862 1186 870 1202 878 1198 885 1203 893 1197 901 1124 909 1173 916 1205 924 1186 932 1179 940 1202 947 1194 955 1199 963 1180 971 1199 978 1198 986 1204 994 1196 1002 1200 1010 1198 1017 1200 1025 1192 1033 1191 1041 1194 1048 1186 1056 1198 1064 1200 1072 1199 1079 1194 1087 1169 1095 1196 1103 1205 1110 1204 1118 1200 1126 1203 1134 1157 1142 1179 1149 1168 1157 1191 1165 1194 1173 1200 1180 1200 1188 1203 1196 1203 1204 1182 1211 1200 1219 1200 1227 1198 1235 1202 1242 1197 1250 1192 1258 1195 1266 1193 1274 1197 1281 1200 1289 1188 1297 1189 1305 1179 1312 1181 1320 1200 1328 1183 1336 1199 1343 1187 1351 1183 1359 1171 1367 1189 1375 1200 1382 1195 1390 1189 1398 1189 1406 1192 1413 1196 1421 1186 1429 1189 1437 1186 1444 1193 1452 1195 1460 1188 1468 1125 1475 1201 1483 1183 1491 1176 1499 1203 1507 1180 1514 1197 1522 1198 1530 1200 1538 1195 1545 1184 1553 1198 1561 1188 1569 1198 1576 1193 1584 1198 1592 1202 1600 1193 1607 1198 1615 1197 1623 1188 1631 1196 1639 1189 1646 1196 1654 1199 1662 1186 1670 1197 1677 1202 1685 1195 1693 1181 1701 1179 1708 1195 1716 1198 1724 1200 1732 1184 1739 1200 1747 1195 1755 1187 1763 1205 1771 1184 1778 1193 1786 1199 1794 1205 1802 1178 1809 1194 1817 1190 1825 1188 1833 1193 1840 1168 1848 1203 1856 1183 1864 1202 1872 1196 1879 1178 1887 1201 1895 1128 1903 1163 1910 1172 1918 1197 1926 1188 1934 1199 1941 1123 1949 1197 1957 1193 1965 1185 1972 1199 1980 1183 1988 1189 1996 1200 2004 1191 2011 1195 2019 1174 2027 1204 2035 1169 2042 1193 2050 1164 2058 1204 2066 1205 2073 1185 2081 1184 2089 1201 2097 1200 2104 1199 2112 1182 2120 1180 2128 1197 2136 1194 2143 1176 2151 1147 2159 1199 2167 1163 2174 1192 2182 1178 2190 1190 2198 1172 2205 1207 2213 1205 2221 1206 2229 1196 2236 1158 2244 1113 2252 1195 2260 1197 2268 1181 2275 1196 2283 1196 2291 1204 2299 1188 2306 1195 2314 1198 2322 1177 2330 1205 2337 1182 2345 1206 2353 1198 2361 1203 2368 1200 2376 1200 2384 1171 2392 1199 2400 1185 2407 1196 2415 1183 2423 1197 2431 1204 2438 1204 2446 1193 2454 1200 2462 1204 2469 1189 2477 1196 2485 1205 2493 1206 2501 1160 2508 1196 2516 1197 2524 1181 2532 1190 2539 1195 2547 1199 2555 1195 2563 1183 2570 1196 2578 1175 2586 1179 2594 1136 2601 1194 2609 1174 2617 1208 2625 1118 2633 1179 2640 1169 2648 1133 2656 1133 2664 1053 2671 1004 2679 1133 2687 1155 2695 1129 2702 1095 2710 1134 2718 1137 2726 1072 2733 1156 2741 1164 2749 1105 2757 1146 2765 1137 2772 1155 2780 1096 2788 1157 2796 1133 2803 1129 2811 1111 2819 1140 2827 1105 2834 1142 2842 1208 2850 1066 2858 1161 2865 1115 2873 1143 2881 1166 2889 1146 2897 1143 2904 1161 2912 1197 2920 1201 2928 1135 2935 1203 2943 1201 2951 1208 2959 1069 2966 1155 2974 1118 2982 1129 2990 1124 2998 1157 3005 1208 3013 1176 3021 1159 3029 1126 3036 1126 3044 1140 3052 1107 3060 1195 3067 1149 3075 1164 3083 1183 3091 1178 3098 1105 3106 1107 3114 1060 3122 1178 3130 1125 3137 1136 3145 1170 3153 1190 3161 1134 3168 1078 3176 1152 3184 1159 3192 1138 3199 1185 3207 1208 3215 1183 3223 1180 3230 1069 3238 1151 3246 1192 3254 1087 3262 1108 3269 1206 3277 1170 3285 1188 3293 1184 3300 1156 3308 1106 3316 1208 3324 1163 3331 1174 3339 1163 3347 1208 3355 1132 3362 1112 3370 1109 3378 1182 3386 1163 3394 1106 3401 1208 3409 1204 3417 1208 3425 1093 3432 1070 3440 1207 3448 1034 3456 1145 3463 1115 3471 1132 3479 1161 3487 1185 3495 1145 3502 1108 3510 1108 3518 1145 3526 1080 3533 1170 3541 1100 3549 1175 3557 1103 3564 1096 3572 1145 3580 1138 3588 1110 3595 1162 3603 1180 3611 1078 3619 1134 3627 1146 3634 1185 3642 1122 3650 1164 3658 1154 3665 1146 3673 1117 3681 1140 3689 1160 3696 1178 3704 1115 3712 1167 3720 1159 3727 1117 3735 1156 3743 1160 3751 1172 3759 1115 3766 1156 3774 1155 3782 1116 3790 1112 3797 1131 3805 1059 3813 1169 3821 1152 3828 1134 3836 1151 3844 1156 3852 1201 3859 1189 3867 1133 3875 1108 3883 1145 3891 1111 3898 1103 3906 1105 3914 1106 3922 1158 3929 1163 3937 1160 3945 1143 3953 989 3960 1139 3968 1176 3976 1189 3984 1188 3992 1195 3999 1114 4007 1176 4015 1173 4023 1072 4030 1074 4038 1194 4046 1096 4054 1208 4061 1173 4069 1183 4077 1093 4085 1140 4092 1171 4100 1151 4108 1183 4116 1080 4124 1172 4131 1131 4139 1084 4147 1124 4155 1089 4162 1205 4170 1107 4178 1095 4186 1104 4193 1013 4201 1147 4209 1123 4217 1114 4224 1208 4232 1208 4240 1161 4248 1114 4256 1171 4263 1068 4271 1100 4279 1121 4287 990 4294 1096 4302 1169 4310 1110 4318 1190 4325 1203 4333 1133 4341 1183 4349 1104 4356 1100 4364 1146 4372 1089 4380 1162 4388 1141 4395 1082 4403 1121 4411 1174 4419 1074 4426 1178 4434 1152 4442 1067 4450 1196 4457 1148 4465 1111 4473 1115 4481 1109 4488 1077 4496 1129 4504 1125 4512 1147 4520 1085 4527 1181 4535 1189 4543 1179 4551 1068 4558 1036 4566 1180 4574 1062 4582 1152 4589 1146 4597 1171 4605 1192 4613 1189 4621 1162 4628 1137 4636 1028 4644 1080 4652 1141 4659 1135 4667 1132 4675 1158 4683 1153 4690 1172 4698 1053 4706 1122 4714 1053 4721 1096 4729 1144 4737 1180 4745 1116 4753 1162 4760 1167 4768 1143 4776 1140 4784 1118 4791 1147 4799 1121 4807 1184 4815 1188 4822 1113 4830 1100 4838 1180 4846 1128 4853 1143 4861 1112 4869 1107 4877 1208 4885 1166 4892 1144 4900 1139 4908 1165 4916 1096 4923 1099 4931 1083 4939 1141 4947 1156 4954 1147 4962 1120 4970 1085 4978 1146 4985 1127 4993 1030 5001 1129 5009 1149 5017 1144 5024 1134 5032 1167 5040 1104 5048 1169 5055 1153 5063 1120 5071 1108 5079 1140 5086 1150 5094 1199 5102 1129 5110 1115 5118 1145 5125 1131 5133 1126 5141 1170 5149 1115 5156 1169 5164 1180 5172 1174 5180 1075 5187 1121 5195 1179 5203 1136 5211 1007 5218 1145 5226 1130 5234 1138 5242 1139 5250 1172 5257 1181 5265 1135 5273 1183 5281 1123 5288 1035 5296 1167 5304 1111 5312 1176 5319 1097 5327 1117 5335 1082 5343 1064 5350 1177 5358 1142 5366 1104 5374 1117 5382 1157 5389 1162 5397 1064 5405 1181 5413 1150 5420 1148 5428 1135 5436 1157 5444 1126 5451 1149 5459 1187 5467 1148 5475 1151 5482 1108 5490 1095 5498 1096 5506 1185 5514 1105 5521 1139 5529 1152 5537 1114 5545 1117 5552 1174 5560 1170 5568 1170 5576 1120 5583 1137 5591 1114 5599 1102 5607 1179 5615 1180 5622 1083 5630 1144 5638 1171 5646 1105 5653 1198 5661 1157 5669 1147 5677 1141 5684 1129 5692 1082 5700 1141 5708 1045 5715 1092 5723 1178 5731 1145 5739 1095 5747 1132 5754 1157 5762 1145 5770 1171 5778 1112 5785 1121 5793 1134 5801 1136 5809 1074 5816 1138 5824 1139 5832 1152 5840 1180 5847 1174 5855 1131 5863 1185 5871 1174 5879 1157 5886 1191 5894 1181 5902 1078 5910 1177 5917 1208 5925 1167 5933 1158 5941 1132 5948 1208 5956 1134 5964 1137 5972 1141 5979 1148 5987 1168 5995 1164 6003 1208 6011 1119 6018 1130 6026 1131 6034 1180 6042 1129 6049 1110 6057 1205 6065 1083 6073 1120 6080 1196 6088 1197 6096 1151 6104 1100 6112 1126 6119 1134 6127 1161 6135 1160 6143 1135 6150 1136 6158 1136 6166 1133 6174 1166 6181 1167 6189 1133 6197 1187 6205 1183 6212 1154 6220 1123 6228 1167 6236 1155 6244 1123 6251 1171 6259 1178 6267 1111 6275 1186 6282 1140 6290 1181 6298 1192 6306 1162 6313 1106 6321 1159 6329 1181 6337 1160 6344 1096 6352 1121 6360 1120 6368 1071 6376 1076 6383 1091 6391 1148 6399 1129 6407 1208 6414 1159 6422 1130 6430 1177 6438 1137 6445 1125 6453 1132 6461 1141 6469 1081 6476 1175 6484 1138 6492 1111 6500 1146 6508 1118 6515 1132 6523 1170 6531 1149 6539 1136 6546 1155 6554 1106 6562 1139 6570 1026 6577 1208 6585 1178 6593 1105 6601 1208 6608 1139 6616 1141 6624 1099 6632 1111 6640 1169 6647 1167 6655 1147 6663 1082 6671 1103 6678 1143 6686 1177 6694 1139 6702 1125 6709 1160 6717 1123 6725 1138 6733 1158 6741 1153 6748 1138 6756 1173 6764 1121 6772 1168 6779 1167 6787 1159 6795 1208 6803 1196 6810 1153 6818 1157 6826 1108 6834 1192 6841 1195 6849 1171 6857 1113 6865 1155 6873 1177 6880 1168 6888 1200 6896 1160 6904 1143 6911 1139 6919 1179 6927 1098 6935 1019 6942 1152 6950 1090 6958 1162 6966 1193 6973 1191 6981 1208 6989 1102 6997 1111 7005 1107 7012 1027 7020 1197 7028 1157 7036 1163 7043 1159 7051 1107 7059 1178 7067 1062 7074 1180 7082 1130 7090 1118 7098 1117 7105 1154 7113 1161 7121 1170 7129 1197 7137 1191 7144 1112 7152 1137 7160 1204 7168 1208 7175 1139 7183 1165 7191 1180 7199 1178 7206 1208 7214 1144 7222 1103 7230 1155 7238 1153 7245 1182 7253 1154 7261 1208 7269 1184 7276 1146 7284 1166 7292 1196 7300 1112 7307 1188 7315 1208 7323 1184 7331 1131 7338 1151 7346 1197 7354 1208 7362 1162 7370 1171 7377 1208 7385 1054 7393 1206 7401 1075 7408 1189 7416 1134 7424 1208 7432 1190 7439 1144 7447 1176 7455 1157 7463 1111 7470 1054 7478 1105 7486 1114 7494 1068 7502 1055 7509 1089 7517 1074 7525 1083 7533 1010 7540 1038 7548 1051 7556 1004 7564 1098 7571 1059 7579 1005 7587 807 7595 789 7602 861 7610 899 7618 919 7626 952 7634 966 7641 974 7649 949 7657 1008 7665 967 7672 1014 7680 946 7688 983 7696 910 7703 979 7711 953 7719 1005 7727 991 7735 953 7742 1039 7750 1001 7758 1041 7766 956 7773 1011 7781 983 7789 946 7797 976 7804 942 7812 1055 7820 972 7828 997 7835 1002 7843 1017 7851 1040 7859 1085 7867 1033 7874 1006 7882 985 7890 1063 7898 1057 7905 1018 7913 1034 7921 1008 7929 1050 7936 1117 7944 1133 7952 1029 7960 1065 7967 1090 7975 1136 7983 1043 7991 1098 7999 1038 8006 1114 8014 1037 8022 1159 8030 1156 8037 1140 8045 1168 8053 1193 8061 1177 8068 1197 8076 1192 8084 1196 8092 1147 8099 1197 8107 1196 8115 1197 8123 1203 8131 1204 8138 1188 8146 1194 8154 1182 8162 1186 8169 1195 8177 1180 8185 1178 8193 1197 8200 1180 8208 1193 8216 1196 8224 1169 8232 1196 8239 1190 8247 1203 8255 1181 8263 1200 8270 1126 8278 1205 8286 1152 8294 1194 8301 1171 8309 1200 8317 1124 8325 1195 8332 1190 8340 1136 8348 1183 8356 1206 8364 1195 8371 1182 8379 1205 8387 1201 8395 1180 8402 1197 8410 1199 8418 1196 8426 1202 8433 1199 8441 1205 8449 1194 8457 1173 8464 1203 8472 1176 8480 1181 8488 1182 8496 1131 8503 1177 8511 1120 8519 1205 8527 1198 8534 1165 8542 1197 8550 1201 8558 1190 8565 1194 8573 1143 8581 1197 8589 1187 8596 1204 8604 1130 8612 1186 8620 1199 8628 1200 8635 1159 8643 1192 8651 1199 8659 1186 8666 1186 8674 1184 8682 1200 8690 1156 8697 1201 8705 1184 8713 1189 8721 1177 8728 1196 8736 1176 8744 1196 8752 1200 8760 1171 8767 1194 8775 1204 8783 1199 8791 1177 8798 1178 8806 1200 8814 1204 8822 1177 8829 1200 8837 1188 8845 1148 8853 1204 8861 1198 8868 1193 8876 1193 8884 1197 8892 1192 8899 1135 8907 1195 8915 1200 8923 1200 8930 1176 8938 1198 8946 1203 8954 1175 8961 1204 8969 1177 8977 1197 8985 1194 8993 1181 9000 1202 9008 1203 9016 1173 9024 1199 9031 1197 9039 1202 9047 1205 9055 1173 9062 1199 9070 1191 9078 1174 9086 1200 9093 1199 9101 1203 9109 1200 9117 1195 9125 1185 9132 1188 9140 1193 9148 1166 9156 1199 9163 1201 9171 1183 9179 1193 9187 1197 9194 1190 9202 1197 9210 1200 9218 1201 9225 1166 9233 1186 9241 1193 9249 1199 9257 1197 9264 1173 9272 1189 9280 1199 9288 1181 9295 1200 9303 1180 9311 1194 9319 1193 9326 1186 9334 1179 9342 1206 9350 1169 9358 1164 9365 1194 9373 1184 9381 1198 9389 1183 9396 1200 9404 1199 9412 1203 9420 1182 9427 1202 9435 1177 9443 1135 9451 1203 9458 1190 9466 1196 9474 1194 9482 1194 9490 1196 9497 1179 9505 1184 9513 1203 9521 1191 9528 1200 9536 1193 9544 1200 9552 1180 9559 1189 9567 1189 9575 1161 9583 1199 9590 1198 9598 1196 9606 1204 9614 1198 9622 1206 9629 1201 9637 1200 9645 1192 9653 1196 9660 1205 9668 1185 9676 1196 9684 1179 9691 1197 9699 1195 9707 1196 9715 1192 9722 1204 9730 1198 9738 1190 9746 1179 9754 1200 9761 1188 9769 1205 9777 1187 9785 1191 9792 1197 9800 1202 9808 1183 9816 1206 9823 1196 9831 1200 9839 1203 9847 1207 9855 1188 9862 1182 9870 1204 9878 1194 9886 1193 9893 1200 9901 1189 9909 1143 9917 1188 9924 1198 9932 1207 9940 1204 9948 1198 9955 1186 9963 1198 9971 1155 9979 1178 9987 1192 9994 1178 10002 1159 10010 1188 10018 1185 10025 1206 10033 1191 10041 1189 10049 1172 10056 1201 10064 1197 10072 1190 10080 1137 10087 1200 10095 1192 10103 1202 10111 1202 10119 1186 10126 1179 10134 1204 10142 1158 10150 1191 10157 1168 10165 1174 10173 1190 10181 1158 10188 1203 10196 1202 10204 1205 10212 1196 10219 1195 10227 1191 10235 1201 10243 1189 10251 1201 10258 1201 10266 1184 10274 1124 10282 1169 10289 1191 10297 1201 10305 1207 10313 1203 10320 1206 10328 1163 10336 1184 10344 1195 10352 1174 10359 1184 10367 1197 10375 1185 10383 1202 10390 1185 10398 1203 10406 1192 10414 1186 10421 1196 10429 1206 10437 1200 10445 1202 10452 1204 10460 1194 10468 1203 10476 1193 10484 1203 10491 1198 10499 1201 10507 1182 10515 1202 10522 1183 10530 1175 10538 1193 10546 1204 10553 1193 10561 1198 10569 1192 10577 1203 10584 1206 10592 1177 10600 1175"/></g></g>
<g clip-path="url(#cco)"><g transform="translate(1426 0) scale(0.1 1)"><polyline fill="none" stroke="#00ff00" stroke-width="1" vector-effect="non-scaling-stroke" shape-rendering="crispEdges" points="0 1186 8 1176 16 1199 23 1182 31 1195 39 1197 47 1199 54 1192 62 1178 70 1153 78 1194 85 1197 93 1198 101 1195 109 1173 116 1204 124 1183 132 1198 140 1198 148 1204 155 1142 163 1162 171 1199 179 1197 186 1205 194 1147 202 1198 210 1191 217 1171 225 1207 233 1206 241 1200 248 1205 256 1176 264 1198 272 1193 280 1184 287 1202 295 1190 303 1178 311 1201 318 1163 326 1199 334 1199 342 1142 349 1162 357 1197 365 1145 373 1189 381 1179 388 1206 396 1198 404 1194 412 1197 419 1199 427 1166 435 1182 443 1196 450 1192 458 1193 466 1180 474 1137 481 1169 489 1195 497 1165 505 1180 513 1187 520 1189 528 1148 536 1169 544 1192 551 1200 559 1191 567 1190 575 1199 582 1207 590 1129 598 1162 606 1198 613 1201 621 1177 629 1197 637 1202 645 1186 652 1205 660 1189 668 1112 676 1191 683 1183 691 1205 699 1196 707 1181 714 1191 722 1183 730 1201 738 1170 745 1115 753 1188 761 1167 769 1185 777 1191 784 1193 792 1180 800 1203 808 1193 815 1163 823 1177 831 1167 839 1205 846 1178 854 1195 862 1151 870 1198 878 1184 885 1183 893 1180 901 1157 909 1194 916 1185 924 1197 932 1201 940 1171 947 1182 955 1194 963 1173 971 1190 978 1198 986 1197 994 1202 1002 1196 1010 1195 1017 1126 1025 1184 1033 1184 1041 1190 1048 1175 1056 1203 1064 1195 1072 1200 1079 1188 1087 1204 1095 1177 1103 1198 1110 1194 1118 1194 1126 1186 1134 1198 1142 1200 1149 1168 1157 1203 1165 1200 1173 1199 1180 1202 1188 1160 1196 1202 1204 1163 1211 1202 1219 1203 1227 1196 1235 1201 1242 1195 1250 1197 1258 1196 1266 1188 1274 1196 1281 1194 1289 1195 1297 1204 1305 1193 1312 1197 1320 1194 1328 1186 1336 1194 1343 1189 1351 1207 1359 1191 1367 1179 1375 1203 1382 1200 1390 1196 1398 1200 1406 1152 1413 1194 1421 1195 1429 1179 1437 1204 1444 1199 1452 1205 1460 1201 1468 1200 1475 1188 1483 1178 1491 1167 1499 1199 1507 1190 1514 1182 1522 1188 1530 1201 1538 1190 1545 1200 1553 1201 1561 1195 1569 1132 1576 1194 1584 1186 1592 1196 1600 1189 1607 1193 1615 1201 1623 1203 1631 1199 1639 1181 1646 1199 1654 1180 1662 1174 1670 1188 1677 1147 1685 1201 1693 1204 1701 1188 1708 1143 1716 1198 1724 1173 1732 1194 1739 1195 1747 1169 1755 1191 1763 1201 1771 1189 1778 1172 1786 1184 1794 1195 1802 1137 1809 1201 1817 1164 1825 1180 1833 1204 1840 1203 1848 1201 1856 1197 1864 1202 1872 1196 1879 1204 1887 1156 1895 1189 1903 1196 1910 1178 1918 1184 1926 1198 1934 1196 1941 1156 1949 1186 1957 1187 1965 1205 1972 1192 1980 1170 1988 1182 1996 1198 2004 1207 2011 1188 2019 1185 2027 1183 2035 1179 2042 1196 2050 1186 2058 1191 2066 1158 2073 1180 2081 1203 2089 1176 2097 1203 2104 1185 2112 1182 2120 1191 2128 1163 2136 1163 2143 1180 2151 1154 2159 1183 2167 1191 2174 1203 2182 1128 2190 1193 2198 1178 2205 1183 2213 1195 2221 1190 2229 1180 2236 1195 2244 1197 2252 1206 2260 1134 2268 1188 2275 1198 2283 1190 2291 1197 2299 1193 2306 1175 2314 1197 2322 1186 2330 1193 2337 1141 2345 1201 2353 1194 2361 1159 2368 1150 2376 1204 2384 1196 2392 1148 2400 1197 2407 1204 2415 1202 2423 1203 2431 1199 2438 1204 2446 1185 2454 1185 2462 1161 2469 1137 2477 1183 2485 1180 2493 1194 2501 1198 2508 1185 2516 1192 2524 1203 2532 1194 2539 1166 2547 1188 2555 1146 2563 1176 2570 1166 2578 1113 2586 1012 2594 1068 2601 921 2609 925 2617 853 2625 862 2633 906 2640 840 2648 869 2656 809 2664 816 2671 917 2679 837 2687 843 2695 809 2702 839 2710 880 2718 937 2726 865 2733 833 2741 825 2749 828 2757 862 2765 859 2772 820 2780 847 2788 812 2796 889 2803 871 2811 879 2819 854 2827 837 2834 858 2842 866 2850 855 2858 883 2865 902 2873 852 2881 874 2889 834 2897 852 2904 881 2912 852 2920 875 2928 880 2935 809 2943 847 2951 873 2959 925 2966 888 2974 872 2982 883 2990 869 2998 881 3005 809 3013 809 3021 855 3029 901 3036 850 3044 905 3052 857 3060 850 3067 880 3075 834 3083 844 3091 860 3098 858 3106 905 3114 873 3122 824 3130 874 3137 864 3145 856 3153 809 3161 880 3168 901 3176 839 3184 868 3192 848 3199 869 3207 871 3215 870 3223 868 3230 981 3238 1190 3246 996 3254 891 3262 864 3269 867 3277 824 3285 817 3293 845 3300 855 3308 873 3316 874 3324 916 3331 855 3339 827 3347 851 3355 893 3362 888 3370 859 3378 911 3386 884 3394 882 3401 839 3409 856 3417 838 3425 822 3432 871 3440 839 3448 937 3456 869 3463 876 3471 843 3479 918 3487 845 3495 846 3502 882 3510 884 3518 809 3526 889 3533 935 3541 1052 3549 919 3557 910 3564 877 3572 835 3580 842 3588 921 3595 914 3603 869 3611 891 3619 893 3627 855 3634 812 3642 859 3650 903 3658 909 3665 850 3673 905 3681 868 3689 866 3696 875 3704 872 3712 889 3720 896 3727 896 3735 881 3743 834 3751 952 3759 864 3766 917 3774 869 3782 1002 3790 1035 3797 928 3805 919 3813 963 3821 847 3828 912 3836 894 3844 900 3852 867 3859 869 3867 913 3875 908 3883 881 3891 898 3898 904 3906 908 3914 883 3922 864 3929 891 3937 843 3945 913 3953 945 3960 875 3968 888 3976 938 3984 885 3992 875 3999 898 4007 858 4015 901 4023 953 4030 899 4038 824 4046 901 4054 922 4061 929 4069 872 4077 931 4085 904 4092 873 4100 905 4108 907 4116 927 4124 854 4131 809 4139 909 4147 861 4155 915 4162 889 4170 851 4178 860 4186 899 4193 846 4201 917 4209 872 4217 899 4224 900 4232 933 4240 939 4248 866 4256 922 4263 866 4271 873 4279 962 4287 861 4294 875 4302 891 4310 936 4318 914 4325 956 4333 890 4341 937 4349 941 4356 958 4364 867 4372 815 4380 936 4388 857 4395 836 4403 925 4411 844 4419 901 4426 938 4434 938 4442 895 4450 872 4457 884 4465 945 4473 904 4481 1108 4488 1201 4496 986 4504 923 4512 841 4520 886 4527 900 4535 919 4543 981 4551 879 4558 880 4566 857 4574 854 4582 902 4589 874 4597 926 4605 906 4613 887 4621 925 4628 901 4636 900 4644 883 4652 857 4659 848 4667 959 4675 822 4683 864 4690 904 4698 905 4706 875 4714 914 4721 903 4729 998 4737 867 4745 872 4753 874 4760 955 4768 891 4776 916 4784 883 4791 935 4799 965 4807 932 4815 881 4822 911 4830 910 4838 888 4846 933 4853 864 4861 917 4869 920 4877 890 4885 884 4892 877 4900 906 4908 909 4916 920 4923 899 4931 893 4939 901 4947 878 4954 940 4962 1010 4970 903 4978 956 4985 898 4993 971 5001 950 5009 951 5017 922 5024 904 5032 889 5040 888 5048 882 5055 910 5063 918 5071 905 5079 958 5086 949 5094 924 5102 930 5110 909 5118 930 5125 854 5133 897 5141 914 5149 913 5156 956 5164 854 5172 917 5180 937 5187 895 5195 959 5203 892 5211 912 5218 883 5226 882 5234 910 5242 837 5250 968 5257 921 5265 921 5273 946 5281 880 5288 910 5296 958 5304 909 5312 887 5319 872 5327 880 5335 879 5343 920 5350 897 5358 850 5366 895 5374 855 5382 914 5389 905 5397 858 5405 929 5413 874 5420 898 5428 920 5436 899 5444 919 5451 894 5459 922 5467 970 5475 922 5482 1033 5490 1072 5498 880 5506 901 5514 981 5521 846 5529 914 5537 872 5545 935 5552 931 5560 909 5568 845 5576 892 5583 946 5591 971 5599 904 5607 962 5615 954 5622 873 5630 904 5638 950 5646 841 5653 843 5661 918 5669 896 5677 914 5684 914 5692 899 5700 930 5708 897 5715 984 5723 925 5731 889 5739 916 5747 902 5754 914 5762 936 5770 877 5778 851 5785 929 5793 936 5801 873 5809 878 5816 861 5824 904 5832 1017 5840 919 5847 914 5855 922 5863 918 5871 935 5879 935 5886 895 5894 899 5902 931 5910 905 5917 944 5925 926 5933 877 5941 897 5948 882 5956 882 5964 912 5972 909 5979 894 5987 881 5995 937 6003 903 6011 940 6018 953 6026 915 6034 897 6042 906 6049 887 6057 953 6065 962 6073 913 6080 877 6088 946 6096 940 6104 903 6112 928 6119 863 6127 983 6135 961 6143 911 6150 854 6158 924 6166 869 6174 940 6181 945 6189 903 6197 897 6205 926 6212 925 6220 921 6228 953 6236 926 6244 947 6251 918 6259 908 6267 893 6275 910 6282 940 6290 952 6298 878 6306 888 6313 933 6321 897 6329 932 6337 891 6344 876 6352 991 6360 1120 6368 977 6376 897 6383 899 6391 855 6399 894 6407 875 6414 878 6422 936 6430 952 6438 902 6445 895 6453 919 6461 953 6469 904 6476 915 6484 938 6492 920 6500 935 6508 861 6515 939 6523 930 6531 968 6539 933 6546 946 6554 914 6562 858 6570 892 6577 923 6585 945 6593 960 6601 956 6608 893 6616 918 6624 942 6632 950 6640 915 6647 958 6655 964 6663 947 6671 898 6678 944 6686 926 6694 921 6702 929 6709 916 6717 917 6725 940 6733 883 6741 966 6748 987 6756 937 6764 954 6772 945 6779 965 6787 955 6795 901 6803 906 6810 939 6818 937 6826 949 6834 949 6841 915 6849 897 6857 946 6865 899 6873 917 6880 902 6888 911 6896 990 6904 956 6911 922 6919 898 6927 901 6935 938 6942 966 6950 940 6958 923 6966 964 6973 931 6981 873 6989 973 6997 945 7005 943 7012 944 7020 974 7028 955 7036 948 7043 943 7051 913 7059 958 7067 893 7074 959 7082 911 7090 911 7098 934 7105 922 7113 972 7121 937 7129 986 7137 956 7144 917 7152 964 7160 916 7168 880 7175 982 7183 918 7191 957 7199 916 7206 950 7214 967 7222 976 7230 940 7238 955 7245 881 7253 958 7261 971 7269 903 7276 954 7284 917 7292 962 7300 950 7307 987 7315 910 7323 974 7331 957 7338 911 7346 905 7354 914 7362 972 7370 957 7377 911 7385 970 7393 902 7401 958 7408 979 7416 934 7424 966 7432 928 7439 908 7447 963 7455 936 7463 994 7470 912 7478 888 7486 1013 7494 964 7502 941 7509 998 7517 943 7525 988 7533 983 7540 969 7548 977 7556 1004 7564 1003 7571 944 7579 972 7587 958 7595 955 7602 919 7610 969 7618 987 7626 1050 7634 956 7641 1003 7649 996 7657 975 7665 958 7672 979 7680 939 7688 990 7696 985 7703 944 7711 933 7719 999 7727 1005 7735 995 7742 963 7750 955 7758 938 7766 986 7773 991 7781 991 7789 1008 7797 957 7804 1006 7812 934 7820 964 7828 942 7835 989 7843 1033 7851 984 7859 1005 7867 993 7874 1023 7882 936 7890 1004 7898 987 7905 1003 7913 1012 7921 980 7929 991 7936 954 7944 998 7952 1009 7960 1012 7967 1045 7975 1013 7983 994 7991 1025 7999 951 8006 1036 8014 1081 8022 1074 8030 1076 8037 1150 8045 1166 8053 1173 8061 1172 8068 1173 8076 1194 8084 1193 8092 1186 8099 1188 8107 1181 8115 1196 8123 1202 8131 1191 8138 1186 8146 1202 8154 1186 8162 1201 8169 1202 8177 1189 8185 1177 8193 1145 8200 1199 8208 1170 8216 1196 8224 1201 8232 1187 8239 1189 8247 1192 8255 1191 8263 1201 8270 1192 8278 1199 8286 1198 8294 1199 8301 1189 8309 1180 8317 1162 8325 1200 8332 1182 8340 1189 8348 1196 8356 1205 8364 1186 8371 1179 8379 1182 8387 1203 8395 1206 8402 1189 8410 1187 8418 1203 8426 1183 8433 1187 8441 1184 8449 1185 8457 1202 8464 1206 8472 1202 8480 1177 8488 1200 8496 1194 8503 1204 8511 1184 8519 1120 8527 1204 8534 1188 8542 1167 8550 1180 8558 1200 8565 1202 8573 1183 8581 1198 8589 1193 8596 1180 8604 1196 8612 1106 8620 1193 8628 1191 8635 1149 8643 1191 8651 1162 8659 1198 8666 1190 8674 1191 8682 1180 8690 1181 8697 1165 8705 1178 8713 1197 8721 1193 8728 1098 8736 1195 8744 1192 8752 1193 8760 1165 8767 1174 8775 1195 8783 1192 8791 1198 8798 1195 8806 1194 8814 1191 8822 1197 8829 1199 8837 1190 8845 1187 8853 1200 8861 1194 8868 1199 8876 1206 8884 1194 8892 1200 8899 1205 8907 1170 8915 1196 8923 1188 8930 1154 8938 1194 8946 1176 8954 1161 8961 1183 8969 1198 8977 1187 8985 1190 8993 1184 9000 1208 9008 1192 9016 1190 9024 1186 9031 1191 9039 1189 9047 1200 9055 1200 9062 1176 9070 1158 9078 1172 9086 1152 9093 1172 9101 1192 9109 1198 9117 1190 9125 1204 9132 1184 9140 1186 9148 1202 9156 1200 9163 1166 9171 1199 9179 1189 9187 1195 9194 1198 9202 1197 9210 1174 9218 1205 9225 1195 9233 1192 9241 1199 9249 1195 9257 1186 9264 1196 9272 1204 9280 1190 9288 1194 9295 1198 9303 1199 9311 1200 9319 1191 9326 1204 9334 1184 9342 1185 9350 1205 9358 1194 9365 1177 9373 1191 9381 1178 9389 1165 9396 1200 9404 1187 9412 1190 9420 1195 9427 1196 9435 1193 9443 1200 9451 1198 9458 1197 9466 1175 9474 1205 9482 1203 9490 1191 9497 1199 9505 1172 9513 1201 9521 1194 9528 1201 9536 1197 9544 1177 9552 1203 9559 1200 9567 1198 9575 1197 9583 1118 9590 1190 9598 1198 9606 1198 9614 1182 9622 1187 9629 1208 9637 1198 9645 1160 9653 1195 9660 1202 9668 1196 9676 1200 9684 1182 9691 1135 9699 1197 9707 1205 9715 1189 9722 1193 9730 1192 9738 1198 9746 1200 9754 1187 9761 1206 9769 1188 9777 1201 9785 1169 9792 1181 9800 1199 9808 1175 9816 1194 9823 1194 9831 1179 9839 1200 9847 1203 9855 1161 9862 1199 9870 1193 9878 1186 9886 1198 9893 1191 9901 1197 9909 1149 9917 1191 9924 1202 9932 1187 9940 1197 9948 1182 9955 1190 9963 1173 9971 1189 9979 1195 9987 1172 9994 1196 10002 1187 10010 1189 10018 1186 10025 1202 10033 1196 10041 1201 10049 1190 10056 1193 10064 1197 10072 1143 10080 1177 10087 1192 10095 1182 10103 1183 10111 1193 10119 1192 10126 1188 10134 1188 10142 1176 10150 1188 10157 1178 10165 1187 10173 1201 10181 1193 10188 1185 10196 1191 10204 1199 10212 1202 10219 1180 10227 1202 10235 1194 10243 1204 10251 1176 10258 1165 10266 1203 10274 1172 10282 1199 10289 1179 10297 1194 10305 1185 10313 1187 10320 1080 10328 1175 10336 1198 10344 1184 10352 1188 10359 1195 10367 1176 10375 1194 10383 1186 10390 1198 10398 1205 10406 1185 10414 1163 10421 1184 10429 1175 10437 1197 10445 1186 10452 1201 10460 1198 10468 1199 10476 1185 10484 1192 10491 1205 10499 1200 10507 1201 10515 1196 10522 1201 10530 1189 10538 1191 10546 1189 10553 1175 10561 1180 10569 1194 10577 1150 10584 1202 10592 1120 10600 1200"/></g></g>
<g clip-path="url(#cco)"><g transform="translate(1426 0) scale(0.1 1)"><polyline fill="none" stroke="#0000ff" stroke-width="1" vector-effect="non-scaling-stroke" shape-rendering="crispEdges" points="0 1200 8 1180 16 1143 23 1171 31 1201 39 1146 47 1196 54 1201 62 1176 70 1200 78 1153 85 1193 93 1194 101 1139 109 1198 116 1190 124 1199 132 1189 140 1199 148 1170 155 1163 163 1082 171 1193 179 1197 186 1191 194 1178 202 1164 210 1202 217 1200 225 1187 233 1187 241 1178 248 1164 256 1185 264 1136 272 1164 280 1199 287 1191 295 1194 303 1181 311 1112 318 1162 326 1169 334 1177 342 1140 349 1136 357 1144 365 1158 373 1183 381 1192 388 1193 396 1166 404 1195 412 1193 419 1208 427 1109 435 1192 443 1161 450 1152 458 1195 466 1191 474 1183 481 1191 489 1200 497 1203 505 1193 513 1196 520 1200 528 1164 536 1203 544 1191 551 1195 559 1199 567 1185 575 1155 582 1199 590 1194 598 1193 606 1173 613 1197 621 1165 629 1202 637 1176 645 1202 652 1161 660 1172 668 1195 676 1183 683 1198 691 1200 699 1190 707 1198 714 1197 722 1202 730 1175 738 1204 745 1095 753 1175 761 1194 769 1142 777 1175 784 1147 792 1190 800 1174 808 1199 815 1189 823 1197 831 1189 839 1197 846 1179 854 1193 862 1194 870 1199 878 1178 885 1201 893 1172 901 1199 909 1195 916 1204 924 1199 932 1192 940 1175 947 1205 955 1194 963 1188 971 1195 978 1142 986 1161 994 1201 1002 1193 1010 1202 1017 1191 1025 1203 1033 1202 1041 1192 1048 1198 1056 1205 1064 1201 1072 1102 1079 1197 1087 1186 1095 1194 1103 1178 1110 1192 1118 1144 1126 1175 1134 1174 1142 1151 1149 1168 1157 1197 1165 1185 1173 1183 1180 1183 1188 1180 1196 1195 1204 1195 1211 1175 1219 1185 1227 1195 1235 1131 1242 1177 1250 1179 1258 1195 1266 1176 1274 1195 1281 1195 1289 1195 1297 1196 1305 1202 1312 1173 1320 1126 1328 1199 1336 1193 1343 1176 1351 1177 1359 1182 1367 1203 1375 1142 1382 1179 1390 1186 1398 1175 1406 1195 1413 1207 1421 1185 1429 1190 1437 1176 1444 1160 1452 1202 1460 1183 1468 1195 1475 1162 1483 1188 1491 1129 1499 1165 1507 1188 1514 1183 1522 1203 1530 1194 1538 1197 1545 1199 1553 1197 1561 1191 1569 1140 1576 1200 1584 1184 1592 1163 1600 1189 1607 1182 1615 1161 1623 1182 1631 1168 1639 1178 1646 1206 1654 1203 1662 1188 1670 1189 1677 1141 1685 1175 1693 1178 1701 1196 1708 1196 1716 1148 1724 1174 1732 1157 1739 1171 1747 1200 1755 1193 1763 1205 1771 1138 1778 1178 1786 1180 1794 1189 1802 1186 1809 1181 1817 1071 1825 1198 1833 1146 1840 1183 1848 1179 1856 1196 1864 1191 1872 1163 1879 1156 1887 1195 1895 1177 1903 1138 1910 1186 1918 1195 1926 1167 1934 1161 1941 1187 1949 1189 1957 1178 1965 1141 1972 1154 1980 1181 1988 1194 1996 1109 2004 1169 2011 1198 2019 1201 2027 1198 2035 1187 2042 1188 2050 1188 2058 1176 2066 1187 2073 1193 2081 1188 2089 1180 2097 1196 2104 1136 2112 1191 2120 1188 2128 1123 2136 1126 2143 1198 2151 1189 2159 1080 2167 1185 2174 1145 2182 1187 2190 1183 2198 1199 2205 1187 2213 1197 2221 1192 2229 1174 2236 1182 2244 1183 2252 1151 2260 1159 2268 1194 2275 1143 2283 1153 2291 1204 2299 1175 2306 1146 2314 1193 2322 1197 2330 1179 2337 1164 2345 1181 2353 1188 2361 1204 2368 1160 2376 1200 2384 1199 2392 1136 2400 1176 2407 1142 2415 1204 2423 1199 2431 1167 2438 1184 2446 1180 2454 1197 2462 1155 2469 1197 2477 1178 2485 1183 2493 1187 2501 1192 2508 1196 2516 1192 2524 1192 2532 1190 2539 1205 2547 1158 2555 1184 2563 1172 2570 1144 2578 1096 2586 1009 2594 961 2601 863 2609 822 2617 790 2625 777 2633 771 2640 768 2648 767 2656 767 2664 767 2671 767 2679 767 2687 766 2695 766 2702 766 2710 767 2718 766 2726 766 2733 766 2741 767 2749 766 2757 767 2765 766 2772 766 2780 766 2788 766 2796 766 2803 766 2811 766 2819 767 2827 766 2834 766 2842 767 2850 767 2858 766 2865 767 2873 766 2881 767 2889 766 2897 767 2904 767 2912 766 2920 766 2928 766 2935 766 2943 767 2951 767 2959 766 2966 766 2974 766 2982 766 2990 766 2998 768 3005 767 3013 766 3021 767 3029 767 3036 766 3044 766 3052 766 3060 766 3067 766 3075 767 3083 766 3091 766 3098 767 3106 767 3114 766 3122 766 3130 766 3137 766 3145 766 3153 767 3161 766 3168 766 3176 767 3184 766 3192 766 3199 766 3207 766 3215 766 3223 766 3230 777 3238 836 3246 777 3254 766 3262 768 3269 767 3277 766 3285 766 3293 766 3300 767 3308 766 3316 766 3324 768 3331 767 3339 767 3347 766 3355 766 3362 766 3370 766 3378 767 3386 767 3394 767 3401 766 3409 766 3417 766 3425 766 3432 767 3440 766 3448 767 3456 766 3463 766 3471 766 3479 766 3487 766 3495 766 3502 767 3510 767 3518 766 3526 766 3533 766 3541 766 3549 768 3557 767 3564 766 3572 766 3580 766 3588 766 3595 767 3603 766 3611 766 3619 766 3627 767 3634 766 3642 766 3650 767 3658 766 3665 766 3673 766 3681 766 3689 766 3696 766 3704 766 3712 767 3720 766 3727 767 3735 766 3743 766 3751 766 3759 766 3766 767 3774 767 3782 766 3790 766 3797 767 3805 766 3813 766 3821 766 3828 766 3836 766 3844 766 3852 767 3859 766 3867 766 3875 767 3883 766 3891 767 3898 766 3906 766 3914 767 3922 766 3929 766 3937 766 3945 766 3953 766 3960 766 3968 766 3976 767 3984 767 3992 766 3999 766 4007 766 4015 766 4023 766 4030 766 4038 766 4046 766 4054 766 4061 767 4069 766 4077 766 4085 767 4092 767 4100 766 4108 767 4116 766 4124 766 4131 766 4139 767 4147 767 4155 766 4162 766 4170 766 4178 767 4186 766 4193 766 4201 767 4209 766 4217 766 4224 766 4232 767 4240 766 4248 766 4256 766 4263 766 4271 766 4279 767 4287 766 4294 767 4302 766 4310 766 4318 767 4325 768 4333 766 4341 767 4349 766 4356 766 4364 766 4372 766 4380 766 4388 766 4395 766 4403 768 4411 766 4419 766 4426 766 4434 766 4442 766 4450 766 4457 767 4465 768 4473 766 4481 775 4488 802 4496 767 4504 766 4512 767 4520 766 4527 766 4535 767 4543 766 4551 767 4558 767 4566 767 4574 766 4582 766 4589 766 4597 766 4605 766 4613 766 4621 766 4628 766 4636 767 4644 767 4652 767 4659 766 4667 767 4675 766 4683 766 4690 766 4698 766 4706 767 4714 766 4721 766 4729 766 4737 766 4745 766 4753 766 4760 766 4768 766 4776 766 4784 766 4791 766 4799 767 4807 766 4815 767 4822 766 4830 768 4838 766 4846 766 4853 767 4861 766 4869 766 4877 766 4885 767 4892 767 4900 766 4908 766 4916 766 4923 767 4931 767 4939 766 4947 766 4954 767 4962 766 4970 766 4978 766 4985 766 4993 767 5001 767 5009 767 5017 767 5024 766 5032 766 5040 767 5048 766 5055 766 5063 767 5071 766 5079 767 5086 766 5094 767 5102 767 5110 766 5118 767 5125 766 5133 766 5141 766 5149 766 5156 767 5164 767 5172 766 5180 766 5187 766 5195 766 5203 766 5211 767 5218 766 5226 766 5234 766 5242 767 5250 766 5257 767 5265 767 5273 767 5281 766 5288 767 5296 766 5304 766 5312 766 5319 766 5327 767 5335 768 5343 767 5350 766 5358 766 5366 766 5374 766 5382 766 5389 766 5397 767 5405 768 5413 767 5420 767 5428 767 5436 767 5444 766 5451 766 5459 767 5467 766 5475 766 5482 766 5490 767 5498 766 5506 767 5514 766 5521 766 5529 767 5537 766 5545 766 5552 766 5560 766 5568 766 5576 766 5583 766 5591 766 5599 766 5607 767 5615 767 5622 766 5630 766 5638 766 5646 766 5653 766 5661 767 5669 766 5677 766 5684 766 5692 766 5700 766 5708 766 5715 767 5723 767 5731 767 5739 767 5747 766 5754 766 5762 766 5770 766 5778 767 5785 766 5793 767 5801 766 5809 766 5816 766 5824 766 5832 766 5840 767 5847 766 5855 766 5863 767 5871 766 5879 766 5886 767 5894 766 5902 766 5910 766 5917 766 5925 766 5933 766 5941 767 5948 766 5956 766 5964 766 5972 766 5979 767 5987 766 5995 767 6003 766 6011 767 6018 767 6026 766 6034 766 6042 766 6049 766 6057 766 6065 766 6073 767 6080 766 6088 766 6096 766 6104 766 6112 766 6119 766 6127 767 6135 766 6143 768 6150 766 6158 767 6166 766 6174 766 6181 766 6189 766 6197 766 6205 766 6212 767 6220 766 6228 766 6236 767 6244 767 6251 767 6259 766 6267 766 6275 766 6282 766 6290 766 6298 766 6306 766 6313 766 6321 766 6329 766 6337 767 6344 766 6352 766 6360 766 6368 767 6376 767 6383 766 6391 766 6399 766 6407 767 6414 767 6422 766 6430 766 6438 766 6445 766 6453 766 6461 766 6469 766 6476 766 6484 766 6492 766 6500 768 6508 766 6515 766 6523 766 6531 766 6539 767 6546 766 6554 766 6562 767 6570 766 6577 767 6585 766 6593 767 6601 766 6608 766 6616 766 6624 766 6632 766 6640 767 6647 766 6655 766 6663 766 6671 766 6678 766 6686 766 6694 766 6702 767 6709 767 6717 767 6725 766 6733 767 6741 766 6748 766 6756 766 6764 767 6772 767 6779 766 6787 767 6795 767 6803 767 6810 766 6818 766 6826 766 6834 766 6841 766 6849 766 6857 766 6865 766 6873 766 6880 766 6888 766 6896 766 6904 766 6911 767 6919 767 6927 767 6935 766 6942 766 6950 767 6958 767 6966 767 6973 766 6981 766 6989 766 6997 766 7005 766 7012 766 7020 767 7028 766 7036 766 7043 766 7051 766 7059 766 7067 766 7074 766 7082 766 7090 766 7098 766 7105 766 7113 766 7121 766 7129 766 7137 766 7144 766 7152 766 7160 766 7168 767 7175 766 7183 766 7191 766 7199 767 7206 766 7214 766 7222 766 7230 766 7238 766 7245 767 7253 767 7261 766 7269 766 7276 767 7284 766 7292 766 7300 766 7307 766 7315 766 7323 766 7331 766 7338 767 7346 766 7354 766 7362 766 7370 766 7377 767 7385 766 7393 766 7401 766 7408 766 7416 766 7424 766 7432 766 7439 766 7447 767 7455 766 7463 767 7470 766 7478 766 7486 767 7494 767 7502 766 7509 766 7517 766 7525 766 7533 767 7540 766 7548 768 7556 767 7564 766 7571 768 7579 766 7587 766 7595 767 7602 766 7610 766 7618 766 7626 766 7634 766 7641 766 7649 766 7657 766 7665 767 7672 766 7680 766 7688 766 7696 766 7703 767 7711 766 7719 767 7727 766 7735 767 7742 767 7750 767 7758 766 7766 766 7773 767 7781 767 7789 767 7797 767 7804 766 7812 767 7820 766 7828 766 7835 766 7843 766 7851 767 7859 766 7867 767 7874 766 7882 767 7890 767 7898 766 7905 767 7913 768 7921 766 7929 766 7936 767 7944 767 7952 768 7960 769 7967 769 7975 773 7983 779 7991 790 7999 809 8006 846 8014 897 8022 941 8030 1005 8037 1067 8045 1120 8053 1149 8061 1157 8068 1175 8076 1190 8084 1195 8092 1159 8099 1191 8107 1187 8115 1205 8123 1166 8131 1149 8138 1120 8146 1194 8154 1190 8162 1190 8169 1149 8177 1195 8185 1198 8193 1196 8200 1190 8208 1202 8216 1198 8224 1126 8232 1141 8239 1192 8247 1183 8255 1199 8263 1166 8270 1181 8278 1203 8286 1194 8294 1190 8301 1202 8309 1200 8317 1173 8325 1131 8332 1199 8340 1139 8348 1203 8356 1157 8364 1180 8371 1195 8379 1197 8387 1191 8395 1189 8402 1196 8410 1182 8418 1191 8426 1188 8433 1185 8441 1172 8449 1187 8457 1185 8464 1180 8472 1189 8480 1193 8488 1131 8496 1169 8503 1196 8511 1179 8519 1198 8527 1166 8534 1185 8542 1178 8550 1125 8558 1184 8565 1192 8573 1136 8581 1193 8589 1168 8596 1194 8604 1186 8612 1164 8620 1198 8628 1185 8635 1195 8643 1195 8651 1201 8659 1196 8666 1122 8674 1198 8682 1201 8690 1155 8697 1185 8705 1187 8713 1176 8721 1186 8728 1195 8736 1199 8744 1173 8752 1174 8760 1199 8767 1162 8775 1136 8783 1200 8791 1197 8798 1192 8806 1197 8814 1182 8822 1193 8829 1102 8837 1193 8845 1187 8853 1183 8861 1185 8868 1178 8876 1119 8884 1203 8892 1180 8899 1162 8907 1129 8915 1203 8923 1192 8930 1171 8938 1206 8946 1163 8954 1204 8961 1196 8969 1158 8977 1202 8985 1197 8993 1188 9000 1207 9008 1176 9016 1195 9024 1165 9031 1187 9039 1169 9047 1191 9055 1187 9062 1165 9070 1189 9078 1178 9086 1183 9093 1095 9101 1048 9109 1128 9117 1178 9125 1184 9132 1179 9140 1191 9148 1169 9156 1182 9163 1207 9171 1198 9179 1197 9187 1179 9194 1167 9202 1191 9210 1177 9218 1200 9225 1151 9233 1174 9241 1199 9249 1142 9257 1193 9264 1149 9272 1183 9280 1111 9288 1183 9295 1146 9303 1181 9311 1145 9319 1191 9326 1182 9334 1183 9342 1191 9350 1205 9358 1095 9365 1116 9373 1194 9381 1184 9389 1156 9396 1187 9404 1190 9412 1203 9420 1196 9427 1195 9435 1169 9443 1193 9451 1186 9458 1201 9466 1194 9474 1188 9482 1190 9490 1195 9497 1151 9505 1194 9513 1196 9521 1197 9528 1188 9536 1195 9544 1198 9552 1171 9559 1188 9567 1190 9575 1207 9583 1134 9590 1193 9598 1181 9606 1191 9614 1196 9622 1191 9629 1187 9637 1198 9645 1185 9653 1175 9660 1166 9668 1163 9676 1192 9684 1196 9691 1156 9699 1094 9707 1183 9715 1185 9722 1174 9730 1200 9738 1176 9746 1186 9754 1192 9761 1203 9769 1185 9777 1079 9785 1113 9792 1183 9800 1199 9808 1166 9816 1075 9823 1179 9831 1183 9839 1196 9847 1156 9855 1205 9862 1175 9870 1186 9878 1170 9886 1042 9893 1181 9901 1177 9909 1197 9917 1199 9924 1198 9932 1196 9940 1190 9948 1190 9955 1193 9963 1202 9971 1164 9979 1196 9987 1166 9994 1190 10002 1173 10010 1193 10018 1185 10025 1199 10033 1197 10041 1185 10049 1151 10056 1185 10064 1183 10072 1105 10080 1180 10087 1191 10095 1191 10103 1187 10111 1168 10119 1143 10126 1190 10134 1188 10142 1175 10150 1191 10157 1162 10165 1166 10173 1203 10181 1158 10188 1194 10196 1180 10204 1194 10212 1174 10219 1152 10227 1095 10235 1181 10243 1159 10251 1191 10258 1182 10266 1188 10274 1192 10282 1099 10289 1202 10297 1199 10305 1193 10313 1182 10320 1132 10328 1191 10336 1161 10344 1187 10352 1138 10359 1202 10367 1153 10375 1195 10383 1195 10390 1161 10398 1203 10406 1166 10414 1188 10421 1195 10429 1085 10437 1190 10445 1126 10452 1206 10460 1186 10468 1197 10476 1177 10484 1186 10491 1175 10499 1180 10507 1159 10515 1190 10522 1185 10530 1150 10538 1199 10546 1197 10553 1188 10561 1203 10569 1198 10577 1181 10584 1203 10592 1190 10600 1196"/></g></g>
<g clip-path="url(#cco)"><g transform="translate(1426 0) scale(0.1 1)"><polyline fill="none" stroke="#ff0000" stroke-width="1" vector-effect="non-scaling-stroke" shape-rendering="crispEdges" points="0 1194 8 1148 16 1187 23 1173 31 1182 39 1159 47 1196 54 1181 62 1192 70 1174 78 1177 85 1184 93 1201 101 1169 109 1199 116 1196 124 1188 132 1180 140 1186 148 1181 155 1203 163 1199 171 1143 179 1165 186 1185 194 1197 202 1178 210 1151 217 1194 225 1172 233 1191 241 1190 248 1129 256 1199 264 1176 272 1175 280 1166 287 1193 295 1144 303 1186 311 1176 318 1113 326 1150 334 1192 342 1192 349 1198 357 1178 365 1202 373 1187 381 1191 388 1123 396 1198 404 1194 412 1180 419 1146 427 1198 435 1172 443 1198 450 1196 458 1146 466 1204 474 1196 481 1194 489 1173 497 1196 505 1159 513 1194 520 1179 528 1197 536 1193 544 1177 551 1153 559 1120 567 1160 575 1188 582 1194 590 1176 598 1176 606 1192 613 1187 621 1167 629 1187 637 1176 645 1176 652 1172 660 1175 668 1191 676 1176 683 1125 691 1091 699 1186 707 1091 714 1190 722 1191 730 1170 738 1187 745 1169 753 1207 761 1178 769 1202 777 1155 784 1181 792 1189 800 1187 808 1184 815 1185 823 1204 831 1186 839 1168 846 1183 854 1193 862 1203 870 1201 878 1198 885 1202 893 1164 901 1184 909 1188 916 1176 924 1196 932 1196 940 1146 947 1180 955 1175 963 1150 971 1196 978 1184 986 1197 994 1197 1002 1195 1010 1183 1017 1170 1025 1150 1033 1173 1041 1190 1048 1194 1056 1157 1064 1171 1072 1191 1079 1201 1087 1176 1095 1154 1103 1204 1110 1194 1118 1178 1126 1172 1134 1167 1142 1194 1149 1167 1157 1206 1165 1122 1173 1202 1180 1183 1188 1192 1196 1175 1204 1148 1211 1184 1219 1158 1227 1139 1235 1173 1242 1187 1250 1182 1258 1153 1266 1185 1274 1194 1281 1200 1289 1181 1297 1176 1305 1145 1312 1169 1320 1137 1328 1190 1336 1189 1343 1190 1351 1183 1359 1173 1367 1184 1375 1197 1382 1202 1390 1156 1398 1175 1406 1179 1413 1198 1421 1202 1429 1176 1437 1189 1444 1195 1452 1180 1460 1162 1468 1176 1475 1185 1483 1188 1491 1202 1499 1197 1507 1131 1514 1193 1522 1156 1530 1195 1538 1189 1545 1184 1553 1192 1561 1194 1569 1163 1576 1188 1584 1189 1592 1201 1600 1190 1607 1181 1615 1189 1623 1176 1631 1200 1639 1203 1646 1183 1654 1196 1662 1181 1670 1190 1677 1102 1685 1186 1693 1117 1701 1166 1708 1195 1716 1202 1724 1179 1732 1206 1739 1200 1747 1200 1755 1199 1763 1190 1771 1180 1778 1172 1786 1197 1794 1165 1802 1069 1809 1173 1817 1198 1825 1195 1833 1193 1840 1204 1848 1193 1856 1187 1864 1193 1872 1149 1879 1164 1887 1176 1895 1192 1903 1155 1910 1198 1918 1198 1926 1193 1934 1183 1941 1143 1949 1192 1957 1194 1965 1127 1972 1199 1980 1152 1988 1130 1996 1161 2004 1178 2011 1182 2019 1180 2027 1191 2035 1181 2042 1174 2050 1185 2058 1191 2066 1133 2073 1188 2081 1176 2089 1189 2097 1196 2104 1185 2112 1133 2120 1157 2128 1138 2136 1196 2143 1147 2151 1173 2159 1172 2167 1183 2174 1202 2182 1144 2190 1118 2198 1205 2205 1197 2213 1192 2221 1178 2229 1104 2236 1188 2244 1128 2252 1168 2260 1082 2268 1183 2275 1188 2283 1170 2291 1187 2299 1078 2306 1202 2314 1180 2322 1187 2330 1139 2337 1189 2345 1202 2353 1176 2361 1204 2368 1173 2376 1190 2384 1140 2392 1181 2400 1197 2407 1193 2415 1190 2423 1144 2431 1146 2438 1121 2446 1153 2454 1197 2462 1181 2469 1166 2477 1190 2485 1185 2493 1188 2501 1137 2508 1186 2516 1181 2524 1189 2532 1179 2539 1185 2547 1171 2555 1189 2563 1184 2570 1154 2578 1100 2586 1043 2594 945 2601 873 2609 821 2617 792 2625 776 2633 771 2640 769 2648 767 2656 766 2664 766 2671 767 2679 768 2687 767 2695 766 2702 767 2710 767 2718 767 2726 767 2733 766 2741 766 2749 767 2757 769 2765 766 2772 766 2780 766 2788 766 2796 767 2803 766 2811 766 2819 766 2827 766 2834 766 2842 766 2850 766 2858 766 2865 767 2873 766 2881 767 2889 766 2897 767 2904 767 2912 766 2920 767 2928 766 2935 766 2943 767 2951 767 2959 766 2966 766 2974 766 2982 766 2990 766 2998 766 3005 767 3013 766 3021 767 3029 766 3036 766 3044 766 3052 766 3060 767 3067 766 3075 766 3083 766 3091 767 3098 766 3106 766 3114 767 3122 767 3130 766 3137 766 3145 766 3153 766 3161 767 3168 766 3176 766 3184 766 3192 766 3199 766 3207 767 3215 766 3223 768 3230 795 3238 854 3246 797 3254 768 3262 766 3269 766 3277 766 3285 766 3293 766 3300 766 3308 766 3316 767 3324 766 3331 766 3339 766 3347 766 3355 766 3362 766 3370 766 3378 766 3386 766 3394 766 3401 766 3409 766 3417 767 3425 766 3432 766 3440 766 3448 766 3456 766 3463 767 3471 767 3479 766 3487 766 3495 766 3502 766 3510 766 3518 766 3526 767 3533 766 3541 766 3549 767 3557 766 3564 766 3572 766 3580 766 3588 766 3595 766 3603 766 3611 766 3619 766 3627 766 3634 766 3642 766 3650 767 3658 766 3665 766 3673 766 3681 766 3689 767 3696 766 3704 766 3712 766 3720 766 3727 766 3735 766 3743 766 3751 767 3759 766 3766 766 3774 767 3782 766 3790 767 3797 766 3805 766 3813 767 3821 766 3828 766 3836 766 3844 766 3852 767 3859 766 3867 767 3875 766 3883 766 3891 766 3898 766 3906 766 3914 767 3922 766 3929 766 3937 766 3945 766 3953 766 3960 766 3968 766 3976 767 3984 766 3992 767 3999 766 4007 766 4015 766 4023 766 4030 767 4038 766 4046 766 4054 767 4061 766 4069 766 4077 766 4085 767 4092 766 4100 767 4108 766 4116 766 4124 767 4131 767 4139 766 4147 766 4155 766 4162 766 4170 766 4178 766 4186 766 4193 766 4201 766 4209 766 4217 766 4224 766 4232 766 4240 766 4248 766 4256 766 4263 766 4271 766 4279 766 4287 766 4294 766 4302 766 4310 766 4318 766 4325 766 4333 766 4341 766 4349 767 4356 766 4364 766 4372 766 4380 766 4388 766 4395 767 4403 766 4411 766 4419 766 4426 766 4434 766 4442 766 4450 766 4457 767 4465 766 4473 766 4481 785 4488 813 4496 769 4504 766 4512 766 4520 766 4527 766 4535 766 4543 766 4551 768 4558 766 4566 766 4574 766 4582 766 4589 766 4597 766 4605 766 4613 766 4621 766 4628 766 4636 766 4644 766 4652 766 4659 766 4667 766 4675 766 4683 766 4690 767 4698 766 4706 766 4714 766 4721 766 4729 766 4737 766 4745 767 4753 766 4760 766 4768 766 4776 766 4784 767 4791 766 4799 766 4807 766 4815 766 4822 766 4830 766 4838 766 4846 766 4853 766 4861 768 4869 767 4877 766 4885 767 4892 766 4900 766 4908 767 4916 766 4923 767 4931 767 4939 767 4947 766 4954 767 4962 766 4970 766 4978 767 4985 766 4993 766 5001 766 5009 767 5017 766 5024 766 5032 767 5040 768 5048 766 5055 767 5063 766 5071 766 5079 766 5086 766 5094 767 5102 766 5110 766 5118 766 5125 767 5133 766 5141 767 5149 766 5156 766 5164 766 5172 766 5180 766 5187 766 5195 766 5203 766 5211 767 5218 767 5226 766 5234 766 5242 767 5250 766 5257 766 5265 767 5273 766 5281 766 5288 767 5296 766 5304 767 5312 766 5319 768 5327 766 5335 766 5343 766 5350 766 5358 766 5366 766 5374 767 5382 766 5389 766 5397 766 5405 766 5413 767 5420 766 5428 766 5436 767 5444 766 5451 766 5459 767 5467 766 5475 767 5482 783 5490 777 5498 767 5506 766 5514 767 5521 766 5529 767 5537 766 5545 767 5552 767 5560 766 5568 767 5576 766 5583 766 5591 766 5599 767 5607 766 5615 766 5622 766 5630 766 5638 766 5646 767 5653 766 5661 767 5669 767 5677 767 5684 766 5692 767 5700 766 5708 766 5715 766 5723 766 5731 766 5739 767 5747 766 5754 767 5762 766 5770 767 5778 766 5785 766 5793 766 5801 767 5809 766 5816 766 5824 766 5832 767 5840 767 5847 768 5855 767 5863 766 5871 766 5879 766 5886 768 5894 767 5902 766 5910 767 5917 766 5925 766 5933 766 5941 766 5948 768 5956 767 5964 766 5972 766 5979 766 5987 766 5995 767 6003 767 6011 766 6018 766 6026 767 6034 766 6042 766 6049 766 6057 766 6065 766 6073 767 6080 767 6088 766 6096 766 6104 766 6112 767 6119 766 6127 766 6135 766 6143 766 6150 766 6158 766 6166 767 6174 766 6181 766 6189 767 6197 766 6205 766 6212 766 6220 766 6228 767 6236 766 6244 766 6251 766 6259 766 6267 767 6275 766 6282 767 6290 767 6298 766 6306 766 6313 766 6321 766 6329 766 6337 766 6344 767 6352 770 6360 797 6368 771 6376 766 6383 767 6391 766 6399 766 6407 766 6414 767 6422 766 6430 766 6438 766 6445 766 6453 766 6461 766 6469 766 6476 766 6484 766 6492 766 6500 766 6508 766 6515 767 6523 766 6531 767 6539 766 6546 768 6554 767 6562 767 6570 766 6577 766 6585 766 6593 766 6601 767 6608 766 6616 767 6624 766 6632 767 6640 766 6647 767 6655 767 6663 766 6671 766 6678 767 6686 767 6694 767 6702 766 6709 766 6717 766 6725 766 6733 767 6741 766 6748 766 6756 767 6764 767 6772 766 6779 766 6787 766 6795 766 6803 766 6810 767 6818 766 6826 766 6834 766 6841 766 6849 766 6857 766 6865 766 6873 766 6880 766 6888 767 6896 766 6904 766 6911 766 6919 766 6927 766 6935 766 6942 767 6950 766 6958 766 6966 767 6973 766 6981 767 6989 766 6997 766 7005 767 7012 766 7020 766 7028 767 7036 766 7043 766 7051 767 7059 767 7067 766 7074 766 7082 767 7090 767 7098 766 7105 766 7113 766 7121 768 7129 766 7137 766 7144 767 7152 766 7160 766 7168 766 7175 766 7183 766 7191 766 7199 766 7206 767 7214 766 7222 766 7230 767 7238 766 7245 766 7253 767 7261 766 7269 766 7276 766 7284 766 7292 766 7300 766 7307 766 7315 767 7323 766 7331 766 7338 766 7346 766 7354 766 7362 767 7370 766 7377 767 7385 766 7393 766 7401 766 7408 767 7416 766 7424 766 7432 766 7439 768 7447 766 7455 766 7463 766 7470 766 7478 766 7486 766 7494 766 7502 766 7509 766 7517 766 7525 767 7533 766 7540 766 7548 766 7556 767 7564 768 7571 767 7579 767 7587 766 7595 766 7602 766 7610 766 7618 766 7626 767 7634 766 7641 766 7649 767 7657 766 7665 767 7672 767 7680 766 7688 766 7696 766 7703 766 7711 766 7719 767 7727 767 7735 767 7742 767 7750 766 7758 766 7766 766 7773 766 7781 766 7789 766 7797 766 7804 766 7812 767 7820 767 7828 766 7835 766 7843 766 7851 766 7859 766 7867 766 7874 768 7882 768 7890 766 7898 766 7905 767 7913 766 7921 766 7929 766 7936 767 7944 767 7952 768 7960 769 7967 770 7975 772 7983 780 7991 790 7999 810 8006 844 8014 893 8022 955 8030 1031 8037 1081 8045 1135 8053 1143 8061 1171 8068 1181 8076 1182 8084 1202 8092 1175 8099 1190 8107 1160 8115 1169 8123 1162 8131 1184 8138 1189 8146 1198 8154 1181 8162 1198 8169 1157 8177 1182 8185 1179 8193 1202 8200 1148 8208 1196 8216 1196 8224 1196 8232 1194 8239 1177 8247 1194 8255 1197 8263 1187 8270 1161 8278 1196 8286 1191 8294 1144 8301 1175 8309 1089 8317 1189 8325 1191 8332 1200 8340 1181 8348 1191 8356 1171 8364 1117 8371 1180 8379 1169 8387 1201 8395 1145 8402 1170 8410 1143 8418 1123 8426 1186 8433 1148 8441 1183 8449 1143 8457 1199 8464 1129 8472 1198 8480 1179 8488 1189 8496 1161 8503 1182 8511 1192 8519 1186 8527 1129 8534 1157 8542 1187 8550 1194 8558 1147 8565 1198 8573 1200 8581 1176 8589 1188 8596 1192 8604 1168 8612 1144 8620 1189 8628 1180 8635 1182 8643 1183 8651 1177 8659 1151 8666 1140 8674 1184 8682 1148 8690 1154 8697 1204 8705 1196 8713 1177 8721 1190 8728 1192 8736 1105 8744 1176 8752 1165 8760 1182 8767 1173 8775 1196 8783 1201 8791 1179 8798 1116 8806 1196 8814 1179 8822 1169 8829 1179 8837 1176 8845 1192 8853 1181 8861 1169 8868 1206 8876 1183 8884 1189 8892 1168 8899 1190 8907 1167 8915 1148 8923 1171 8930 1195 8938 1133 8946 1181 8954 1196 8961 1181 8969 1200 8977 1188 8985 1198 8993 1173 9000 1175 9008 1169 9016 1067 9024 1164 9031 1082 9039 1164 9047 1185 9055 1170 9062 1145 9070 1189 9078 1171 9086 1140 9093 1134 9101 1200 9109 1182 9117 1199 9125 1145 9132 1163 9140 1197 9148 1155 9156 1171 9163 1204 9171 1183 9179 1185 9187 1164 9194 1152 9202 1084 9210 1187 9218 1192 9225 1176 9233 1162 9241 1154 9249 1159 9257 1169 9264 1145 9272 1174 9280 1196 9288 1182 9295 1173 9303 1203 9311 1173 9319 1197 9326 1154 9334 1192 9342 1193 9350 1197 9358 1184 9365 1119 9373 1163 9381 1192 9389 1190 9396 1167 9404 1195 9412 1167 9420 1202 9427 1160 9435 1196 9443 1179 9451 1166 9458 1198 9466 1161 9474 1195 9482 1186 9490 1182 9497 1120 9505 1199 9513 1199 9521 1126 9528 1187 9536 1194 9544 1178 9552 1116 9559 1205 9567 1179 9575 1178 9583 1179 9590 1178 9598 1185 9606 1202 9614 1165 9622 1189 9629 1163 9637 1186 9645 1173 9653 1057 9660 1196 9668 1183 9676 1202 9684 1193 9691 1197 9699 1161 9707 1139 9715 1096 9722 1161 9730 1180 9738 1165 9746 1177 9754 1190 9761 1161 9769 1193 9777 1196 9785 1170 9792 1192 9800 1145 9808 1188 9816 1183 9823 1188 9831 1189 9839 1181 9847 1195 9855 1174 9862 1151 9870 1198 9878 1173 9886 1190 9893 1149 9901 1177 9909 1186 9917 1202 9924 1186 9932 1160 9940 1176 9948 1186 9955 1190 9963 1189 9971 1188 9979 1170 9987 1197 9994 1164 10002 1178 10010 1190 10018 1151 10025 1188 10033 1197 10041 1157 10049 1158 10056 1179 10064 1141 10072 1167 10080 1172 10087 1193 10095 1069 10103 1188 10111 1202 10119 1202 10126 1179 10134 1174 10142 1186 10150 1167 10157 1168 10165 1164 10173 1140 10181 1161 10188 1110 10196 1191 10204 1188 10212 1169 10219 1193 10227 1194 10235 1165 10243 1188 10251 1147 10258 1199 10266 1172 10274 1179 10282 1200 10289 1153 10297 1177 10305 1191 10313 1200 10320 1148 10328 1186 10336 1188 10344 1200 10352 1192 10359 1202 10367 1197 10375 1200 10383 1191 10390 1168 10398 1202 10406 1179 10414 1173 10421 1173 10429 1190 10437 1132 10445 1181 10452 1193 10460 1175 10468 1196 10476 1165 10484 1195 10491 1196 10499 1193 10507 1189 10515 1151 10522 1164 10530 1182 10538 1144 10546 1200 10553 1146 10561 1099 10569 1193 10577 1177 10584 1168 10592 1176 10600 1196"/></g></g>
<rect x="1426.5" y="765.5" width="1060" height="443" fill="none" stroke="#000" stroke-width="1.6"/>
<text x="1420" y="1171.73" font-size="23" font-weight="bold" text-anchor="end">0.1</text>
<text x="1420" y="1127.46" font-size="23" font-weight="bold" text-anchor="end">0.2</text>
<text x="1420" y="1083.19" font-size="23" font-weight="bold" text-anchor="end">0.3</text>
<text x="1420" y="1038.92" font-size="23" font-weight="bold" text-anchor="end">0.4</text>
<text x="1420" y="994.65" font-size="23" font-weight="bold" text-anchor="end">0.5</text>
<text x="1420" y="950.38" font-size="23" font-weight="bold" text-anchor="end">0.6</text>
<text x="1420" y="906.11" font-size="23" font-weight="bold" text-anchor="end">0.7</text>
<text x="1420" y="861.8399999999999" font-size="23" font-weight="bold" text-anchor="end">0.8</text>
<text x="1420" y="817.5699999999999" font-size="23" font-weight="bold" text-anchor="end">0.9</text>
<text x="1420.5" y="1216" font-size="23" font-weight="bold" text-anchor="end">0</text>
<text x="1426.0" y="1230.5" font-size="23" font-weight="bold" text-anchor="middle">29</text>
<text x="1558.5" y="1230.5" font-size="23" font-weight="bold" text-anchor="middle">29.5</text>
<text x="1691.0" y="1230.5" font-size="23" font-weight="bold" text-anchor="middle">30</text>
<text x="1823.5" y="1230.5" font-size="23" font-weight="bold" text-anchor="middle">30.5</text>
<text x="1956.0" y="1230.5" font-size="23" font-weight="bold" text-anchor="middle">31</text>
<text x="2088.5" y="1230.5" font-size="23" font-weight="bold" text-anchor="middle">31.5</text>
<text x="2221.0" y="1230.5" font-size="23" font-weight="bold" text-anchor="middle">32</text>
<text x="2353.5" y="1230.5" font-size="23" font-weight="bold" text-anchor="middle">32.5</text>
<text x="2486.0" y="1230.5" font-size="23" font-weight="bold" text-anchor="middle">33</text>
<text x="1956" y="1273" font-size="24" font-weight="bold" text-anchor="middle">Frequency (Hz)</text>
<text x="0" y="0" font-size="26" font-weight="bold" text-anchor="middle" transform="translate(1352 986) rotate(-90)">Coherence</text>
<text x="1326.5" y="1313" font-size="23" font-weight="bold" text-anchor="start">T0=12/10/2025 01:15:05</text>
<text x="1925" y="1313" font-size="23" font-weight="bold" text-anchor="middle">Avg=25</text>
<text x="2522.5" y="1313" font-size="23" font-weight="bold" text-anchor="end">BW=0.00292958</text>
<rect x="1312" y="710" width="176" height="31" fill="#000"/>
<rect x="1314.5" y="707.5" width="175" height="30" fill="#f2f2f2" stroke="#000" stroke-width="1.5"/>
<text x="1339.5" y="731" font-size="24" font-weight="bold" text-anchor="start">Coherence</text>
<rect x="1457" y="782" width="151" height="42" fill="#000"/>
<rect x="1451.5" y="777.5" width="153" height="42" fill="#fff" stroke="#000" stroke-width="1.2"/>
<line x1="1457" y1="780.5" x2="1485" y2="780.5" stroke="#ff0000" stroke-width="1" shape-rendering="crispEdges"/>
<text x="1489" y="781.616" font-size="3.1" font-weight="bold" text-anchor="start">X1:SUS-BS_M1_OSEMINF_LF_OUT / X1:SUS-BS_M1_TEST_R_EXC</text>
<line x1="1457" y1="786.5" x2="1485" y2="786.5" stroke="#0000ff" stroke-width="1" shape-rendering="crispEdges"/>
<text x="1489" y="787.616" font-size="3.1" font-weight="bold" text-anchor="start">X1:SUS-BS_M1_OSEMINF_RT_OUT / X1:SUS-BS_M1_TEST_R_EXC</text>
<line x1="1457" y1="792.5" x2="1485" y2="792.5" stroke="#00ff00" stroke-width="1" shape-rendering="crispEdges"/>
<text x="1489" y="793.616" font-size="3.1" font-weight="bold" text-anchor="start">X1:SUS-BS_M1_OSEMINF_F1_OUT / X1:SUS-BS_M1_TEST_R_EXC</text>
<line x1="1457" y1="798.5" x2="1485" y2="798.5" stroke="#876657" stroke-width="2" shape-rendering="crispEdges"/>
<text x="1489" y="799.616" font-size="3.1" font-weight="bold" text-anchor="start">X1:SUS-BS_M1_OSEMINF_F2_OUT / X1:SUS-BS_M1_TEST_R_EXC</text>
<line x1="1457" y1="804.5" x2="1485" y2="804.5" stroke="#ff00ff" stroke-width="1" shape-rendering="crispEdges"/>
<text x="1489" y="805.616" font-size="3.1" font-weight="bold" text-anchor="start">X1:SUS-BS_M1_OSEMINF_F3_OUT / X1:SUS-BS_M1_TEST_R_EXC</text>
<line x1="1457" y1="810.5" x2="1485" y2="810.5" stroke="#00ffff" stroke-width="1" shape-rendering="crispEdges"/>
<text x="1489" y="811.616" font-size="3.1" font-weight="bold" text-anchor="start">X1:SUS-BS_M1_OSEMINF_SD_OUT / X1:SUS-BS_M1_TEST_R_EXC</text>
<line x1="1457" y1="816.5" x2="1485" y2="816.5" stroke="#ffff00" stroke-width="1" shape-rendering="crispEdges"/>
<text x="1489" y="817.616" font-size="3.1" font-weight="bold" text-anchor="start">X1:SUS-BS_M2_OSEMINF_UL_OUT / X1:SUS-BS_M1_TEST_R_EXC</text>
<path d="M1531 841.5 h13 M1537.5 835 v13" stroke="#000" stroke-width="1"/>
</svg>
<div class="btn" style="left:8px;top:1326px;width:254px;height:25px;padding-top:4px">Reset</div>
<div class="btn" style="left:262px;top:1326px;width:254px;height:25px;padding-top:4px">Zoom</div>
<div class="btn" style="left:516px;top:1326px;width:254px;height:25px;padding-top:4px">Active</div>
<div class="btn" style="left:770px;top:1326px;width:254px;height:25px;padding-top:4px">New</div>
<div class="btn" style="left:1024px;top:1326px;width:254px;height:25px;padding-top:4px">Options...</div>
<div class="btn" style="left:1278px;top:1326px;width:254px;height:25px;padding-top:4px">Import...</div>
<div class="btn" style="left:1532px;top:1326px;width:254px;height:25px;padding-top:4px">Export...</div>
<div class="btn" style="left:1786px;top:1326px;width:254px;height:25px;padding-top:4px">Reference...</div>
<div class="btn" style="left:2040px;top:1326px;width:254px;height:25px;padding-top:4px">Calibration...</div>
<div class="btn" style="left:2294px;top:1326px;width:254px;height:25px;padding-top:4px">Print...</div>
<div class="btn" style="left:50px;top:1369px;width:540px;height:21px;padding-top:0px;padding-left:9px;font-weight:bold;font-size:15px;color:#000">Start</div>
<div class="btn" style="left:690px;top:1369px;width:541px;height:21px;padding-top:0px;padding-left:9px;font-weight:bold;font-size:15px;color:#9a9a9a">Pause</div>
<div class="btn" style="left:1334px;top:1369px;width:536px;height:21px;padding-top:0px;padding-left:9px;font-weight:bold;font-size:15px;color:#9a9a9a">Resume</div>
<div class="btn" style="left:1970px;top:1369px;width:540px;height:21px;padding-top:0px;padding-left:9px;font-weight:bold;font-size:15px;color:#9a9a9a">Abort</div>
<div class="a" style="left:0;top:1396px;width:1786px;height:17px;border-top:1px solid #8c8c8c;border-left:1px solid #8c8c8c"></div>
<div class="t" style="left:5px;top:1399px;font-size:10.5px">Test done (Measurements 1 / Averages 25)</div>
<div class="a" style="left:1791px;top:1396px;width:250px;height:17px;border-top:1px solid #8c8c8c;border-left:1px solid #8c8c8c"></div>
<div class="t" style="left:1797px;top:1399px;font-size:10.5px">Repeat</div>
<div class="a" style="left:2046px;top:1396px;width:357px;height:17px;border-top:1px solid #8c8c8c;border-left:1px solid #8c8c8c"></div>
<div class="t" style="left:2052px;top:1399px;font-size:10.5px">Fourier tools</div>
<div class="a" style="left:2405px;top:1396px;width:155px;height:17px;border-top:1px solid #8c8c8c;border-left:1px solid #8c8c8c"></div>
<div class="a" style="left:1127px;top:1364px;width:306px;height:49px;background:#f3f2f1;border:1px solid #c9c6c3;border-bottom:none;box-shadow:0 0 4px rgba(0,0,0,0.25)"></div>
<svg width="2560" height="1413" style="left:0;top:0">
<rect x="1131.5" y="1368.5" width="41" height="41" rx="2.5" fill="#465a69"/>
<path d="M1131.5 1371 a2.5 2.5 0 0 1 2.5 -2.5 h36 a2.5 2.5 0 0 1 2.5 2.5 v24.5 h-41 z" fill="#00a8e1"/>
<rect x="1131.5" y="1395.3" width="41" height="1.2" fill="#2e3f4b"/>
<rect x="1179.5" y="1372" width="1.6" height="35" fill="#7f8a90"/>
<rect x="1379.2" y="1372" width="1.6" height="35" fill="#7f8a90"/>
<rect x="1188.7" y="1371.2" width="38.2" height="35.5" rx="2" fill="#cfd8dc"/>
<rect x="1191.8" y="1373.8" width="32.7" height="29" rx="1" fill="#263238"/>
<path d="M1194.5 1377.5 l3.2 2.2 l-3.2 2.2" stroke="#fff" stroke-width="1.2" fill="none"/>
<rect x="1199.5" y="1384.2" width="5" height="1.2" fill="#fff"/>
<rect x="1241.4" y="1370.8" width="29" height="36" rx="1.5" fill="#00a8e1"/>
<rect x="1241.4" y="1404.5" width="29" height="2.2" fill="#0a87b3"/>
<rect x="1241.4" y="1386.6" width="29" height="1.3" fill="#0a6d92"/>
<rect x="1252" y="1377.6" width="6.5" height="2" fill="#a6b3bb"/>
<rect x="1252" y="1394.2" width="6.5" height="2" fill="#a6b3bb"/>
<circle cx="1303.9" cy="1388.8" r="21" fill="#00a8e1"/>
<clipPath id="gclip"><circle cx="1303.9" cy="1388.8" r="21"/></clipPath><g clip-path="url(#gclip)" fill="#6acdee">
<path d="M1282 1380 q4 -10 13 -13 l4 0 q2 5 -3 9 q-5 1 -6 4 q3 2 1 5 q-4 2 -5 6 q-3 -3 -4 -11 z"/>
<path d="M1300 1367 q8 -1 12 3 q-3 4 -7 3 q-3 -2 -5 -6 z"/>
<path d="M1308 1385 q5 -3 10 -2 q4 2 5 6 q0 6 -3 11 q-3 5 -7 6 q-2 -5 -3 -9 q-4 -2 -4 -6 q0 -4 2 -6 z"/>
<path d="M1313 1375 q5 -2 8 1 q2 3 -1 4 q-4 0 -7 -5 z"/>
<path d="M1286 1395 q4 -1 6 3 q1 5 -2 9 q-4 -3 -4 -12 z"/>
</g>
<path d="M1298.3 1385 L1298.7 1407 L1295 1403.5 L1290 1409 L1287 1407.5 L1291 1401.5 L1282.5 1399.4 Z" fill="#eef2f4" stroke="#dde3e6" stroke-width="0.5"/>
<rect x="1334.4" y="1371.2" width="35.1" height="35" rx="2.2" fill="#d3dadd"/>
<rect x="1337.1" y="1373.9" width="6" height="6" fill="#5bcdf0"/>
<rect x="1344.9" y="1373.9" width="6" height="6" fill="#5bcdf0"/>
<rect x="1352.7" y="1373.9" width="6" height="6" fill="#5bcdf0"/>
<rect x="1360.5" y="1373.9" width="6" height="6" fill="#5bcdf0"/>
<rect x="1337.1" y="1381.7" width="6" height="6" fill="#5bcdf0"/>
<rect x="1360.5" y="1381.7" width="6" height="6" fill="#5bcdf0"/>
<rect x="1337.1" y="1389.5" width="6" height="6" fill="#5bcdf0"/>
<rect x="1337.1" y="1397.3" width="6" height="6" fill="#5bcdf0"/>
<rect x="1344.9" y="1397.3" width="6" height="6" fill="#5bcdf0"/>
<linearGradient id="lens" x1="0" y1="0" x2="0" y2="1"><stop offset="0" stop-color="#2fb9ea"/><stop offset="1" stop-color="#c8effb"/></linearGradient>
<circle cx="1349.4" cy="1386.9" r="10" fill="url(#lens)" stroke="#263238" stroke-width="1.5"/>
<path d="M1357.5 1395 l8.2 7.6" stroke="#263238" stroke-width="3.2" stroke-linecap="round"/>
<path d="M1356.8 1394.4 l1.8 1.7" stroke="#e8b731" stroke-width="2.4"/>
<path d="M1389 1373.5 h9 l3 2.5 h14 v27.5 h-26 z" fill="#6e6e6e"/>
<rect x="1390" y="1377" width="25.5" height="2" fill="#aeaeae"/>
<rect x="1390" y="1380" width="25.5" height="1.5" fill="#c8c8c8"/>
<path d="M1393 1381.5 h33 l-1.5 22.2 q-0.3 1.3 -1.6 1.3 h-29 q-1.2 0 -1.3 -1.2 z" fill="#6d97d2" stroke="#4b76b2" stroke-width="0.8"/>
</svg>
<svg width="12" height="12" style="left:2547px;top:1401px"><path d="M11.5 1 L1 11.5 M11.5 5 L5 11.5 M11.5 9 L9 11.5" stroke="#8c8c8c" stroke-width="1.2"/></svg>
</body></html>
